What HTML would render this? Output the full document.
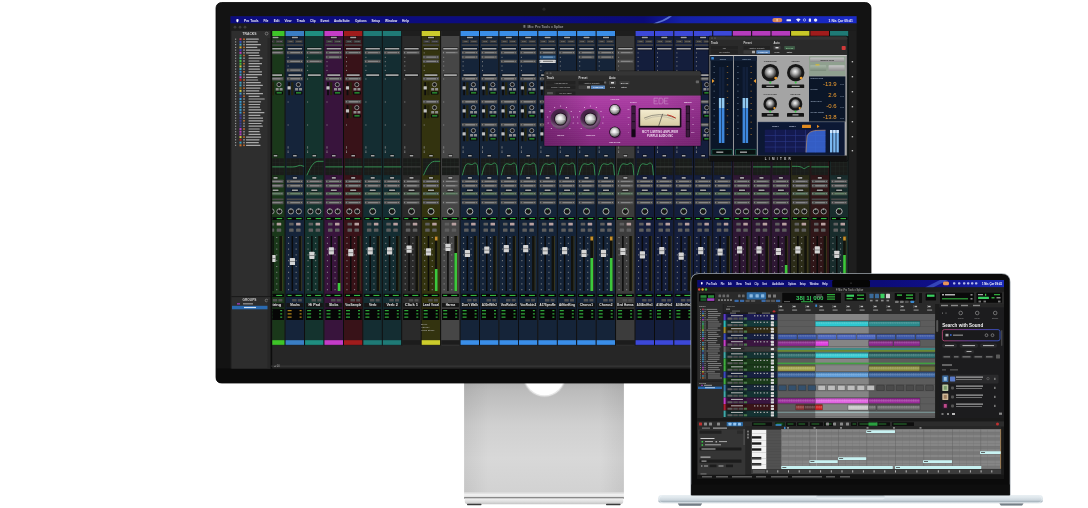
<!DOCTYPE html>
<html><head><meta charset="utf-8"><style>
html,body{margin:0;padding:0;background:#fff;width:1088px;height:508px;overflow:hidden}
svg{display:block;font-family:"Liberation Sans",sans-serif;will-change:transform}
</style></head><body>
<svg width="1088" height="508" viewBox="0 0 1088 508">
<defs><linearGradient id="g1" x1="0" y1="0" x2="0" y2="1"><stop offset="0" stop-color="#aeaeae"/><stop offset="0.1" stop-color="#bcbcbc"/><stop offset="0.4" stop-color="#d0d0d0"/><stop offset="0.7" stop-color="#d8d8d8"/><stop offset="1" stop-color="#d2d2d2"/></linearGradient><linearGradient id="g2" x1="0" y1="0" x2="1" y2="0"><stop offset="0" stop-color="rgba(0,0,0,.06)"/><stop offset="0.15" stop-color="rgba(0,0,0,0)"/><stop offset="0.85" stop-color="rgba(0,0,0,0)"/><stop offset="1" stop-color="rgba(0,0,0,.06)"/></linearGradient><linearGradient id="g3" x1="0" y1="0" x2="0" y2="1"><stop offset="0" stop-color="#d4d4d4"/><stop offset="0.5" stop-color="#f4f4f4"/><stop offset="1" stop-color="#dcdcdc"/></linearGradient><linearGradient id="g4" x1="0" y1="0" x2="0" y2="1"><stop offset="0" stop-color="#f2f2f2"/><stop offset="0.6" stop-color="#dadada"/><stop offset="1" stop-color="#c2c2c2"/></linearGradient><linearGradient id="g5" x1="0" y1="0" x2="1" y2="0"><stop offset="0" stop-color="#0c0c7e"/><stop offset="0.45" stop-color="#0c0c80"/><stop offset="0.66" stop-color="#0b0b78"/><stop offset="0.72" stop-color="#1420a8"/><stop offset="1" stop-color="#1a2ac8"/></linearGradient><linearGradient id="g6" x1="0" y1="0" x2="0" y2="1"><stop offset="0" stop-color="#ae40a6"/><stop offset="0.45" stop-color="#9a3294"/><stop offset="1" stop-color="#82287c"/></linearGradient><linearGradient id="g7" x1="0" y1="0" x2="1" y2="0"><stop offset="0" stop-color="rgba(40,0,40,.25)"/><stop offset="0.3" stop-color="rgba(0,0,0,0)"/><stop offset="0.7" stop-color="rgba(0,0,0,0)"/><stop offset="1" stop-color="rgba(40,0,40,.15)"/></linearGradient><radialGradient id="g8" cx="0.4" cy="0.35" r="0.65"><stop offset="0" stop-color="#3a1a3a"/><stop offset="0.55" stop-color="#4e2a50"/><stop offset="0.8" stop-color="#7a5a7c"/><stop offset="1" stop-color="#5a3a5c"/></radialGradient><radialGradient id="g9" cx="0.45" cy="0.4" r="0.6"><stop offset="0" stop-color="#ffffff"/><stop offset="0.25" stop-color="#e8e8e8"/><stop offset="0.6" stop-color="#b0b0b0"/><stop offset="0.9" stop-color="#707070"/><stop offset="1" stop-color="#404040"/></radialGradient><linearGradient id="g10" x1="0" y1="0" x2="0" y2="1"><stop offset="0" stop-color="#f4ecd0"/><stop offset="1" stop-color="#d8ccA4"/></linearGradient><radialGradient id="g11" cx="0.45" cy="0.4" r="0.6"><stop offset="0" stop-color="#f4f4f4"/><stop offset="0.35" stop-color="#b8b8b8"/><stop offset="0.75" stop-color="#5a5a5a"/><stop offset="1" stop-color="#2a2a2a"/></radialGradient><radialGradient id="g12" cx="0.45" cy="0.4" r="0.6"><stop offset="0" stop-color="#f4f4f4"/><stop offset="0.35" stop-color="#b8b8b8"/><stop offset="0.75" stop-color="#5a5a5a"/><stop offset="1" stop-color="#2a2a2a"/></radialGradient><radialGradient id="g13" cx="0.45" cy="0.4" r="0.6"><stop offset="0" stop-color="#f4f4f4"/><stop offset="0.35" stop-color="#b8b8b8"/><stop offset="0.75" stop-color="#5a5a5a"/><stop offset="1" stop-color="#2a2a2a"/></radialGradient><radialGradient id="g14" cx="0.45" cy="0.4" r="0.6"><stop offset="0" stop-color="#f4f4f4"/><stop offset="0.35" stop-color="#b8b8b8"/><stop offset="0.75" stop-color="#5a5a5a"/><stop offset="1" stop-color="#2a2a2a"/></radialGradient><linearGradient id="g15" x1="0" y1="0" x2="0" y2="1"><stop offset="0" stop-color="#c4c4c4"/><stop offset="1" stop-color="#8e8e8e"/></linearGradient><linearGradient id="g16" x1="0" y1="0" x2="0" y2="1"><stop offset="0" stop-color="#a8b8a8"/><stop offset="1" stop-color="#7a8a7a"/></linearGradient><linearGradient id="g17" x1="0" y1="0" x2="0" y2="1"><stop offset="0" stop-color="#c8c8c8"/><stop offset="1" stop-color="#8e8e8e"/></linearGradient><linearGradient id="g18" x1="0" y1="0" x2="0" y2="1"><stop offset="0" stop-color="#eaf0f4"/><stop offset="0.3" stop-color="#dfe7ec"/><stop offset="0.62" stop-color="#ccd6dd"/><stop offset="0.76" stop-color="#a8b5be"/><stop offset="0.9" stop-color="#d2dbe1"/><stop offset="1" stop-color="#e4eaee"/></linearGradient><linearGradient id="g19" x1="0" y1="0" x2="0" y2="1"><stop offset="0" stop-color="#aab6be"/><stop offset="0.5" stop-color="#d8e1e7"/><stop offset="1" stop-color="#eef3f6"/></linearGradient><linearGradient id="g20" x1="0" y1="0" x2="0" y2="1"><stop offset="0" stop-color="#55606a"/><stop offset="1" stop-color="#9aa2a8"/></linearGradient><linearGradient id="g21" x1="0" y1="0" x2="0" y2="1"><stop offset="0" stop-color="#55606a"/><stop offset="1" stop-color="#9aa2a8"/></linearGradient><linearGradient id="g22" x1="0" y1="0" x2="1" y2="0"><stop offset="0" stop-color="#0b0b70"/><stop offset="0.6" stop-color="#0c0c78"/><stop offset="0.8" stop-color="#10108a"/><stop offset="1" stop-color="#1a2ab8"/></linearGradient><pattern id="wv" width="2.3" height="6.5" patternUnits="userSpaceOnUse"><rect x=".3" y="2.6" width=".7" height="2.6" fill="#fff" opacity=".35"/><rect x="1.4" y="3.4" width=".6" height="1.4" fill="#fff" opacity=".3"/></pattern><linearGradient id="sgrad" x1="0" y1="0" x2="1" y2="0"><stop offset="0" stop-color="#c04a7a"/><stop offset=".5" stop-color="#7a4ac8"/><stop offset="1" stop-color="#3a5ad8"/></linearGradient></defs>
<rect width="1088" height="508" fill="#fff"/>
<rect x="464.1" y="380" width="159.8" height="112.6" fill="url(#g1)"/>
<rect x="464.1" y="380" width="159.8" height="112.6" fill="url(#g2)"/>
<circle cx="544.5" cy="375.9" r="21.6" fill="#c6c6c6"/>
<circle cx="544.5" cy="375.6" r="20.9" fill="#e6e6e6"/>
<circle cx="544.5" cy="375" r="20.2" fill="#ffffff"/>
<rect x="464.1" y="492.4" width="159.8" height="4.8" fill="url(#g3)"/>
<rect x="464.1" y="497.2" width="159.8" height="1.4" fill="#6e6e6e"/>
<path d="M464.8 498.6 H623.2 V501.5 Q623.2 504.3 620 504.3 H468 Q464.8 504.3 464.8 501.5 Z" fill="url(#g4)"/>
<rect x="467" y="503.8" width="14.5" height="1.4" fill="#3a3a3a" rx="0.6"/>
<rect x="606" y="503.8" width="14.6" height="1.4" fill="#3a3a3a" rx="0.6"/>
<rect x="216" y="2.5" width="655" height="380.5" fill="#131313" rx="5.5"/>
<rect x="216" y="2.5" width="655" height="380.5" fill="none" rx="5.5" stroke="#050505" stroke-width=".8"/>
<circle cx="544" cy="9.2" r="1.6" fill="#262626"/>
<path d="M216 368.6 H871 V377.5 Q871 383 865.5 383 H221.5 Q216 383 216 377.5 Z" fill="#0b0b0b"/>
<rect x="230.5" y="16.2" width="626.1" height="352.4" fill="#1e1e1e"/>
<rect x="230.5" y="16.2" width="626.1" height="7.3" fill="url(#g5)"/>
<path d="M653 23.5 Q662 21 669 16.2 L672 16.2 Q665 21.5 657 23.5 Z" fill="#7a9af0" opacity=".7"/>
<path d="M236.3 19.4 Q237.4 18.6 238.6 19.4 Q238.9 21.6 237.4 22.4 Q236 21.8 236.3 19.4 Z" fill="#fff"/>
<text x="244" y="22" font-size="4.0" fill="#f0f0ff" font-weight="bold" textLength="14.5" lengthAdjust="spacingAndGlyphs">Pro Tools</text>
<text x="263.5" y="22" font-size="4.0" fill="#f0f0ff" font-weight="bold" textLength="4.9" lengthAdjust="spacingAndGlyphs">File</text>
<text x="273.7" y="22" font-size="4.0" fill="#f0f0ff" font-weight="bold" textLength="5.7" lengthAdjust="spacingAndGlyphs">Edit</text>
<text x="284.5" y="22" font-size="4.0" fill="#f0f0ff" font-weight="bold" textLength="7" lengthAdjust="spacingAndGlyphs">View</text>
<text x="296.7" y="22" font-size="4.0" fill="#f0f0ff" font-weight="bold" textLength="8.4" lengthAdjust="spacingAndGlyphs">Track</text>
<text x="310" y="22" font-size="4.0" fill="#f0f0ff" font-weight="bold" textLength="5.6" lengthAdjust="spacingAndGlyphs">Clip</text>
<text x="320.5" y="22" font-size="4.0" fill="#f0f0ff" font-weight="bold" textLength="8.7" lengthAdjust="spacingAndGlyphs">Event</text>
<text x="333.9" y="22" font-size="4.0" fill="#f0f0ff" font-weight="bold" textLength="15.9" lengthAdjust="spacingAndGlyphs">AudioSuite</text>
<text x="355" y="22" font-size="4.0" fill="#f0f0ff" font-weight="bold" textLength="11.6" lengthAdjust="spacingAndGlyphs">Options</text>
<text x="371.5" y="22" font-size="4.0" fill="#f0f0ff" font-weight="bold" textLength="8.7" lengthAdjust="spacingAndGlyphs">Setup</text>
<text x="385" y="22" font-size="4.0" fill="#f0f0ff" font-weight="bold" textLength="12.1" lengthAdjust="spacingAndGlyphs">Window</text>
<text x="402" y="22" font-size="4.0" fill="#f0f0ff" font-weight="bold" textLength="7" lengthAdjust="spacingAndGlyphs">Help</text>
<rect x="772.3" y="17.9" width="10" height="4.4" fill="#d8885a" rx="2.2"/>
<rect x="776.5" y="18.8" width="1.2" height="2.6" fill="#f4d0b0"/>
<rect x="786.5" y="19.2" width="4.5" height="2" fill="#e8ecff" rx="0.5"/>
<path d="M796 19.3 Q798.3 17.6 800.6 19.3 L798.3 22 Z" fill="#e8ecff"/>
<circle cx="804.5" cy="20" r="1.2" fill="none" stroke="#e8ecff" stroke-width=".6"/>
<rect x="808.8" y="18.6" width="2.2" height="3.2" fill="#e8ecff" rx="0.4"/>
<circle cx="815.6" cy="20.1" r="1.7" fill="#e8ecff"/>
<text x="828.6" y="21.8" font-size="3.8" fill="#f0f0ff" font-weight="bold" textLength="24.3" lengthAdjust="spacingAndGlyphs">1 Nis Çar  09:41</text>
<rect x="230.5" y="23.5" width="626.1" height="7.3" fill="#1c1c1c"/>
<rect x="523.4" y="25" width="2" height="2.8" fill="#777" rx="0.3"/>
<text x="527.6" y="28" font-size="3.8" fill="#9a9a9a" font-weight="bold" textLength="35.8" lengthAdjust="spacingAndGlyphs">Mix: Pro Tools x Splice</text>
<circle cx="235" cy="27.2" r="1.4" fill="#3c3c3c"/>
<circle cx="240" cy="27.2" r="1.4" fill="#3c3c3c"/>
<circle cx="245" cy="27.2" r="1.4" fill="#3c3c3c"/>
<rect x="231.5" y="30.8" width="39.3" height="265.5" fill="#2e2e2e"/>
<rect x="267.5" y="38" width="2.8" height="258" fill="#272727"/>
<text x="249.5" y="34.6" font-size="3.4" fill="#d0d0d0" font-weight="bold" text-anchor="middle">TRACKS</text>
<circle cx="266.6" cy="33.6" r="1.4" fill="none" stroke="#aaa" stroke-width=".5"/>
<rect x="235" y="38.6" width="1.2" height="1.2" fill="#9a9a9a"/>
<rect x="239.5" y="38.2" width="2" height="2" fill="#c03c60"/>
<rect x="243.2" y="38.4" width="1.6" height="1.6" fill="#c87030"/>
<rect x="246" y="38.6" width="12.8" height="1.2" fill="#c8c8c8" rx="0.3" opacity=".8"/>
<rect x="235" y="41.3" width="1.2" height="1.2" fill="#9a9a9a"/>
<rect x="239.5" y="40.9" width="2" height="2" fill="#3a50c0"/>
<rect x="243.2" y="41.1" width="1.6" height="1.6" fill="#8a8a8a"/>
<rect x="246" y="41.3" width="11.8" height="1.2" fill="#c8c8c8" rx="0.3" opacity=".8"/>
<rect x="235" y="44" width="1.2" height="1.2" fill="#9a9a9a"/>
<rect x="239.5" y="43.6" width="2" height="2" fill="#3aa0c8"/>
<rect x="243.2" y="43.8" width="1.6" height="1.6" fill="#8a8a8a"/>
<rect x="246" y="44" width="14.9" height="1.2" fill="#c8c8c8" rx="0.3" opacity=".8"/>
<rect x="235" y="46.8" width="1.2" height="1.2" fill="#9a9a9a"/>
<rect x="239.5" y="46.4" width="2" height="2" fill="#c8b03a"/>
<rect x="243.2" y="46.6" width="1.6" height="1.6" fill="#c87030"/>
<rect x="246" y="46.8" width="11.3" height="1.2" fill="#c8c8c8" rx="0.3" opacity=".8"/>
<rect x="235" y="49.5" width="1.2" height="1.2" fill="#9a9a9a"/>
<rect x="239.5" y="49.1" width="2" height="2" fill="#3a3ac0"/>
<rect x="243.2" y="49.3" width="1.6" height="1.6" fill="#8a8a8a"/>
<rect x="246" y="49.5" width="14.2" height="1.2" fill="#c8c8c8" rx="0.3" opacity=".8"/>
<rect x="235" y="52.2" width="1.2" height="1.2" fill="#9a9a9a"/>
<rect x="239.5" y="51.8" width="2" height="2" fill="#c040c0"/>
<rect x="243.2" y="52" width="1.6" height="1.6" fill="#8a8a8a"/>
<rect x="246" y="52.2" width="13.1" height="1.2" fill="#c8c8c8" rx="0.3" opacity=".8"/>
<rect x="235" y="54.9" width="1.2" height="1.2" fill="#9a9a9a"/>
<rect x="239.5" y="54.5" width="2" height="2" fill="#3aa060"/>
<rect x="243.2" y="54.7" width="1.6" height="1.6" fill="#c87030"/>
<rect x="248.5" y="54.9" width="11.2" height="1.2" fill="#c8c8c8" rx="0.3" opacity=".8"/>
<rect x="235" y="57.6" width="1.2" height="1.2" fill="#9a9a9a"/>
<rect x="239.5" y="57.2" width="2" height="2" fill="#40c0a0"/>
<rect x="243.2" y="57.4" width="1.6" height="1.6" fill="#8a8a8a"/>
<rect x="248.5" y="57.6" width="14" height="1.2" fill="#c8c8c8" rx="0.3" opacity=".8"/>
<rect x="235" y="60.4" width="1.2" height="1.2" fill="#9a9a9a"/>
<rect x="239.5" y="60" width="2" height="2" fill="#40c040"/>
<rect x="243.2" y="60.2" width="1.6" height="1.6" fill="#8a8a8a"/>
<rect x="248.5" y="60.4" width="11" height="1.2" fill="#c8c8c8" rx="0.3" opacity=".8"/>
<rect x="235" y="63.1" width="1.2" height="1.2" fill="#9a9a9a"/>
<rect x="239.5" y="62.7" width="2" height="2" fill="#40c040"/>
<rect x="243.2" y="62.9" width="1.6" height="1.6" fill="#c87030"/>
<rect x="248.5" y="63.1" width="13.5" height="1.2" fill="#c8c8c8" rx="0.3" opacity=".8"/>
<rect x="235" y="65.8" width="1.2" height="1.2" fill="#9a9a9a"/>
<rect x="239.5" y="65.4" width="2" height="2" fill="#c8c840"/>
<rect x="243.2" y="65.6" width="1.6" height="1.6" fill="#8a8a8a"/>
<rect x="248.5" y="65.8" width="11.2" height="1.2" fill="#c8c8c8" rx="0.3" opacity=".8"/>
<rect x="235" y="68.5" width="1.2" height="1.2" fill="#9a9a9a"/>
<rect x="239.5" y="68.1" width="2" height="2" fill="#3ab0c0"/>
<rect x="243.2" y="68.3" width="1.6" height="1.6" fill="#8a8a8a"/>
<rect x="248.5" y="68.5" width="11.4" height="1.2" fill="#c8c8c8" rx="0.3" opacity=".8"/>
<rect x="235" y="71.2" width="1.2" height="1.2" fill="#9a9a9a"/>
<rect x="239.5" y="70.8" width="2" height="2" fill="#3a8ad0"/>
<rect x="243.2" y="71" width="1.6" height="1.6" fill="#c87030"/>
<rect x="248.5" y="71.2" width="13.5" height="1.2" fill="#c8c8c8" rx="0.3" opacity=".8"/>
<rect x="235" y="74" width="1.2" height="1.2" fill="#9a9a9a"/>
<rect x="239.5" y="73.6" width="2" height="2" fill="#40a0c8"/>
<rect x="243.2" y="73.8" width="1.6" height="1.6" fill="#8a8a8a"/>
<rect x="246" y="74" width="16" height="1.2" fill="#c8c8c8" rx="0.3" opacity=".8"/>
<rect x="235" y="76.7" width="1.2" height="1.2" fill="#9a9a9a"/>
<rect x="239.5" y="76.3" width="2" height="2" fill="#c840c8"/>
<rect x="243.2" y="76.5" width="1.6" height="1.6" fill="#8a8a8a"/>
<rect x="246" y="76.7" width="11.6" height="1.2" fill="#c8c8c8" rx="0.3" opacity=".8"/>
<rect x="235" y="79.4" width="1.2" height="1.2" fill="#9a9a9a"/>
<rect x="239.5" y="79" width="2" height="2" fill="#b02020"/>
<rect x="243.2" y="79.2" width="1.6" height="1.6" fill="#c87030"/>
<rect x="246" y="79.4" width="12.2" height="1.2" fill="#c8c8c8" rx="0.3" opacity=".8"/>
<rect x="235" y="82.1" width="1.2" height="1.2" fill="#9a9a9a"/>
<rect x="239.5" y="81.7" width="2" height="2" fill="#40a0c0"/>
<rect x="243.2" y="81.9" width="1.6" height="1.6" fill="#8a8a8a"/>
<rect x="246" y="82.1" width="14.8" height="1.2" fill="#c8c8c8" rx="0.3" opacity=".8"/>
<rect x="235" y="84.8" width="1.2" height="1.2" fill="#9a9a9a"/>
<rect x="239.5" y="84.4" width="2" height="2" fill="#40a0c0"/>
<rect x="243.2" y="84.6" width="1.6" height="1.6" fill="#8a8a8a"/>
<rect x="246" y="84.8" width="16.8" height="1.2" fill="#c8c8c8" rx="0.3" opacity=".8"/>
<rect x="235" y="87.6" width="1.2" height="1.2" fill="#9a9a9a"/>
<rect x="239.5" y="87.2" width="2" height="2" fill="#807030"/>
<rect x="243.2" y="87.4" width="1.6" height="1.6" fill="#c87030"/>
<rect x="246" y="87.6" width="14.4" height="1.2" fill="#c8c8c8" rx="0.3" opacity=".8"/>
<rect x="235" y="90.3" width="1.2" height="1.2" fill="#9a9a9a"/>
<rect x="239.5" y="89.9" width="2" height="2" fill="#c8c840"/>
<rect x="243.2" y="90.1" width="1.6" height="1.6" fill="#8a8a8a"/>
<rect x="246" y="90.3" width="13.3" height="1.2" fill="#c8c8c8" rx="0.3" opacity=".8"/>
<rect x="235" y="93" width="1.2" height="1.2" fill="#9a9a9a"/>
<rect x="239.5" y="92.6" width="2" height="2" fill="#3a9ad0"/>
<rect x="243.2" y="92.8" width="1.6" height="1.6" fill="#8a8a8a"/>
<rect x="246" y="93" width="17" height="1.2" fill="#c8c8c8" rx="0.3" opacity=".8"/>
<rect x="235" y="95.7" width="1.2" height="1.2" fill="#9a9a9a"/>
<rect x="239.5" y="95.3" width="2" height="2" fill="#3a3a90"/>
<rect x="243.2" y="95.5" width="1.6" height="1.6" fill="#c87030"/>
<rect x="248.5" y="95.7" width="11.1" height="1.2" fill="#c8c8c8" rx="0.3" opacity=".8"/>
<rect x="235" y="98.4" width="1.2" height="1.2" fill="#9a9a9a"/>
<rect x="239.5" y="98" width="2" height="2" fill="#3a9ad0"/>
<rect x="243.2" y="98.2" width="1.6" height="1.6" fill="#8a8a8a"/>
<rect x="248.5" y="98.4" width="16.2" height="1.2" fill="#c8c8c8" rx="0.3" opacity=".8"/>
<rect x="235" y="101.2" width="1.2" height="1.2" fill="#9a9a9a"/>
<rect x="239.5" y="100.8" width="2" height="2" fill="#3a9ad0"/>
<rect x="243.2" y="101" width="1.6" height="1.6" fill="#8a8a8a"/>
<rect x="248.5" y="101.2" width="12.6" height="1.2" fill="#c8c8c8" rx="0.3" opacity=".8"/>
<rect x="235" y="103.9" width="1.2" height="1.2" fill="#9a9a9a"/>
<rect x="239.5" y="103.5" width="2" height="2" fill="#3a9ad0"/>
<rect x="243.2" y="103.7" width="1.6" height="1.6" fill="#c87030"/>
<rect x="248.5" y="103.9" width="11.7" height="1.2" fill="#c8c8c8" rx="0.3" opacity=".8"/>
<rect x="235" y="106.6" width="1.2" height="1.2" fill="#9a9a9a"/>
<rect x="239.5" y="106.2" width="2" height="2" fill="#3a9ad0"/>
<rect x="243.2" y="106.4" width="1.6" height="1.6" fill="#8a8a8a"/>
<rect x="248.5" y="106.6" width="11.5" height="1.2" fill="#c8c8c8" rx="0.3" opacity=".8"/>
<rect x="235" y="109.3" width="1.2" height="1.2" fill="#9a9a9a"/>
<rect x="239.5" y="108.9" width="2" height="2" fill="#3a9ad0"/>
<rect x="243.2" y="109.1" width="1.6" height="1.6" fill="#8a8a8a"/>
<rect x="248.5" y="109.3" width="12.7" height="1.2" fill="#c8c8c8" rx="0.3" opacity=".8"/>
<rect x="235" y="112" width="1.2" height="1.2" fill="#9a9a9a"/>
<rect x="239.5" y="111.6" width="2" height="2" fill="#3a9ad0"/>
<rect x="243.2" y="111.8" width="1.6" height="1.6" fill="#c87030"/>
<rect x="248.5" y="112" width="15.9" height="1.2" fill="#c8c8c8" rx="0.3" opacity=".8"/>
<rect x="235" y="114.8" width="1.2" height="1.2" fill="#9a9a9a"/>
<rect x="239.5" y="114.4" width="2" height="2" fill="#3a3a90"/>
<rect x="243.2" y="114.6" width="1.6" height="1.6" fill="#8a8a8a"/>
<rect x="248.5" y="114.8" width="11.9" height="1.2" fill="#c8c8c8" rx="0.3" opacity=".8"/>
<rect x="235" y="117.5" width="1.2" height="1.2" fill="#9a9a9a"/>
<rect x="239.5" y="117.1" width="2" height="2" fill="#3a3a90"/>
<rect x="243.2" y="117.3" width="1.6" height="1.6" fill="#8a8a8a"/>
<rect x="248.5" y="117.5" width="14.5" height="1.2" fill="#c8c8c8" rx="0.3" opacity=".8"/>
<rect x="235" y="120.2" width="1.2" height="1.2" fill="#9a9a9a"/>
<rect x="239.5" y="119.8" width="2" height="2" fill="#3a3a90"/>
<rect x="243.2" y="120" width="1.6" height="1.6" fill="#c87030"/>
<rect x="248.5" y="120.2" width="14.8" height="1.2" fill="#c8c8c8" rx="0.3" opacity=".8"/>
<rect x="235" y="122.9" width="1.2" height="1.2" fill="#9a9a9a"/>
<rect x="239.5" y="122.5" width="2" height="2" fill="#3a3a90"/>
<rect x="243.2" y="122.7" width="1.6" height="1.6" fill="#8a8a8a"/>
<rect x="248.5" y="122.9" width="13.1" height="1.2" fill="#c8c8c8" rx="0.3" opacity=".8"/>
<rect x="235" y="125.6" width="1.2" height="1.2" fill="#9a9a9a"/>
<rect x="239.5" y="125.2" width="2" height="2" fill="#3a3a90"/>
<rect x="243.2" y="125.4" width="1.6" height="1.6" fill="#8a8a8a"/>
<rect x="248.5" y="125.6" width="14.3" height="1.2" fill="#c8c8c8" rx="0.3" opacity=".8"/>
<rect x="235" y="128.4" width="1.2" height="1.2" fill="#9a9a9a"/>
<rect x="239.5" y="128" width="2" height="2" fill="#b040c0"/>
<rect x="243.2" y="128.2" width="1.6" height="1.6" fill="#c87030"/>
<rect x="248.5" y="128.4" width="11.2" height="1.2" fill="#c8c8c8" rx="0.3" opacity=".8"/>
<rect x="235" y="131.1" width="1.2" height="1.2" fill="#9a9a9a"/>
<rect x="239.5" y="130.7" width="2" height="2" fill="#b040c0"/>
<rect x="243.2" y="130.9" width="1.6" height="1.6" fill="#8a8a8a"/>
<rect x="248.5" y="131.1" width="11.2" height="1.2" fill="#c8c8c8" rx="0.3" opacity=".8"/>
<rect x="235" y="133.8" width="1.2" height="1.2" fill="#9a9a9a"/>
<rect x="239.5" y="133.4" width="2" height="2" fill="#b040c0"/>
<rect x="243.2" y="133.6" width="1.6" height="1.6" fill="#8a8a8a"/>
<rect x="248.5" y="133.8" width="12.1" height="1.2" fill="#c8c8c8" rx="0.3" opacity=".8"/>
<rect x="235" y="136.5" width="1.2" height="1.2" fill="#9a9a9a"/>
<rect x="239.5" y="136.1" width="2" height="2" fill="#c8c840"/>
<rect x="243.2" y="136.3" width="1.6" height="1.6" fill="#c87030"/>
<rect x="246" y="136.5" width="15.1" height="1.2" fill="#c8c8c8" rx="0.3" opacity=".8"/>
<rect x="235" y="139.2" width="1.2" height="1.2" fill="#9a9a9a"/>
<rect x="239.5" y="138.8" width="2" height="2" fill="#b02020"/>
<rect x="243.2" y="139" width="1.6" height="1.6" fill="#8a8a8a"/>
<rect x="246" y="139.2" width="13.5" height="1.2" fill="#c8c8c8" rx="0.3" opacity=".8"/>
<rect x="235" y="142" width="1.2" height="1.2" fill="#9a9a9a"/>
<rect x="239.5" y="141.6" width="2" height="2" fill="#3aa0c0"/>
<rect x="243.2" y="141.8" width="1.6" height="1.6" fill="#8a8a8a"/>
<rect x="246" y="142" width="12.8" height="1.2" fill="#c8c8c8" rx="0.3" opacity=".8"/>
<rect x="235" y="144.7" width="1.2" height="1.2" fill="#9a9a9a"/>
<rect x="239.5" y="144.3" width="2" height="2" fill="#c87030"/>
<rect x="243.2" y="144.5" width="1.6" height="1.6" fill="#c87030"/>
<rect x="246" y="144.7" width="14.5" height="1.2" fill="#c8c8c8" rx="0.3" opacity=".8"/>
<rect x="231.5" y="296.3" width="39.3" height="72.3" fill="#2d2d2d"/>
<rect x="231.5" y="296.3" width="39.3" height="0.8" fill="#141414"/>
<text x="249.5" y="301.4" font-size="3.2" fill="#d0d0d0" font-weight="bold" text-anchor="middle">GROUPS</text>
<circle cx="266.5" cy="300.5" r="1.3" fill="none" stroke="#aaa" stroke-width=".5"/>
<rect x="237" y="303.2" width="3" height="1.3" fill="#a040c0"/>
<rect x="243" y="303.2" width="10" height="1.2" fill="#9a9a9a"/>
<rect x="232" y="305.8" width="36" height="3.5" fill="#2a6ab0"/>
<rect x="244" y="306.9" width="12" height="1.2" fill="#d0e0f0"/>
<rect x="267.5" y="300" width="2.8" height="68" fill="#272727"/>
<rect x="270.6" y="30.8" width="1.8" height="337.8" fill="#0c0c0c"/>
<clipPath id="mixclip"><rect x="272.3" y="30.8" width="576.7" height="337.8"/></clipPath>
<g clip-path="url(#mixclip)">
<rect x="271.2" y="30.8" width="585.4" height="337.8" fill="#262626"/>
<rect x="266.2" y="30.8" width="18.5" height="314.5" fill="#1a381a"/>
<rect x="266.2" y="31" width="18.5" height="5" fill="#3ec428"/>
<rect x="266.2" y="340.2" width="18.5" height="4.6" fill="#3ec428"/>
<rect x="271.9" y="36" width="7.2" height="3" fill="#0a0a0a" rx="0.5" opacity=".55"/>
<rect x="272.5" y="36.7" width="6" height="1.6" fill="#bcbcbc" rx="0.3" opacity=".85"/>
<rect x="267.7" y="39.9" width="7" height="3" fill="#3a3a3a" rx="0.4"/>
<rect x="275.7" y="39.9" width="7.5" height="3" fill="#3a3a3a" rx="0.4"/>
<text x="271.2" y="42.2" font-size="1.8" fill="#999" text-anchor="middle">PRE</text>
<text x="279.4" y="42.2" font-size="1.8" fill="#999" text-anchor="middle">MUTE</text>
<rect x="267.2" y="44.3" width="16.5" height="1.6" fill="#454545"/>
<rect x="267.7" y="47.3" width="15.6" height="3" fill="#0a0a0a" rx="0.5" opacity=".55"/>
<rect x="268.3" y="48" width="14.4" height="1.6" fill="#bcbcbc" rx="0.3" opacity=".85"/>
<rect x="267.4" y="51" width="16.1" height="3.3" fill="#505050" rx="0.4"/>
<rect x="268.1" y="51.9" width="0.8" height="1.4" fill="#999"/>
<rect x="270.8" y="52" width="10" height="1.3" fill="#c8c8c8" rx="0.3" opacity=".45"/>
<rect x="281.5" y="52" width="0.8" height="1.2" fill="#999"/>
<rect x="268.2" y="56.8" width="1" height="1" fill="#8a8a8a"/>
<rect x="268.2" y="61.2" width="1" height="1" fill="#8a8a8a"/>
<rect x="268.2" y="65.5" width="1" height="1" fill="#8a8a8a"/>
<rect x="268.2" y="69.9" width="1" height="1" fill="#8a8a8a"/>
<rect x="268.4" y="73.6" width="14.2" height="3" fill="#0a0a0a" rx="0.5" opacity=".55"/>
<rect x="269" y="74.3" width="13" height="1.6" fill="#bcbcbc" rx="0.3" opacity=".85"/>
<rect x="267.4" y="77.1" width="16.1" height="3.3" fill="#505050" rx="0.4"/>
<rect x="268.1" y="78" width="0.8" height="1.4" fill="#999"/>
<rect x="270.8" y="78.1" width="10" height="1.3" fill="#c8c8c8" rx="0.3" opacity=".45"/>
<rect x="281.5" y="78.1" width="0.8" height="1.2" fill="#999"/>
<rect x="268.8" y="82.2" width="1.8" height="13" fill="#0d0d0d"/>
<rect x="268.1" y="86.2" width="3.2" height="3.4" fill="#c0c0c0" rx="0.4"/>
<rect x="271.8" y="82.2" width="2.2" height="13" fill="#26260e"/>
<circle cx="279" cy="84.6" r="2.1" fill="#1a1a1a" stroke="#b4b4b4" stroke-width=".7"/>
<rect x="275.7" y="88" width="3" height="2.6" fill="#8e8e8e" rx="0.3"/>
<rect x="279.6" y="88" width="3" height="2.6" fill="#8e8e8e" rx="0.3"/>
<rect x="275.4" y="91.4" width="7.6" height="3" fill="#080808" rx="0.4"/>
<rect x="276.6" y="92.4" width="5.2" height="1" fill="#3ad048"/>
<rect x="268.2" y="101.5" width="1" height="1" fill="#8a8a8a"/>
<rect x="268.2" y="124.5" width="1" height="1" fill="#8a8a8a"/>
<rect x="268.2" y="147.5" width="1" height="1" fill="#8a8a8a"/>
<rect x="268.2" y="151.9" width="1" height="1" fill="#8a8a8a"/>
<rect x="268.2" y="146.4" width="1" height="1" fill="#8a8a8a"/>
<rect x="268.2" y="150.6" width="1" height="1" fill="#8a8a8a"/>
<rect x="273.1" y="154.2" width="4.8" height="3" fill="#0a0a0a" rx="0.5" opacity=".55"/>
<rect x="273.7" y="154.9" width="3.6" height="1.6" fill="#bcbcbc" rx="0.3" opacity=".85"/>
<rect x="267" y="158.3" width="16.9" height="16.8" fill="#1a1c1a"/>
<rect x="271.2" y="158.3" width="0.3" height="16.8" fill="#26302a"/>
<rect x="275.5" y="158.3" width="0.3" height="16.8" fill="#26302a"/>
<rect x="279.7" y="158.3" width="0.3" height="16.8" fill="#26302a"/>
<rect x="267" y="162.5" width="16.9" height="0.3" fill="#26302a"/>
<rect x="267" y="166.7" width="16.9" height="0.3" fill="#26302a"/>
<rect x="267" y="170.9" width="16.9" height="0.3" fill="#26302a"/>
<path transform="translate(267 158.3)" d="M0 8.6 L18 8.6" fill="none" stroke="#3aa860" stroke-width=".8"/>
<rect x="272.9" y="176.4" width="5.2" height="3" fill="#0a0a0a" rx="0.5" opacity=".55"/>
<rect x="273.5" y="177.1" width="4" height="1.6" fill="#bcbcbc" rx="0.3" opacity=".85"/>
<rect x="267.4" y="179.8" width="16.1" height="3.3" fill="#505050" rx="0.4"/>
<rect x="268.1" y="180.7" width="0.8" height="1.4" fill="#999"/>
<rect x="270.8" y="180.8" width="10" height="1.3" fill="#c8c8c8" rx="0.3" opacity=".45"/>
<rect x="281.5" y="180.8" width="0.8" height="1.2" fill="#999"/>
<rect x="267.4" y="184.1" width="16.1" height="3.3" fill="#505050" rx="0.4"/>
<rect x="268.1" y="185" width="0.8" height="1.4" fill="#999"/>
<rect x="270.8" y="185.1" width="10" height="1.3" fill="#c8c8c8" rx="0.3" opacity=".45"/>
<rect x="281.5" y="185.1" width="0.8" height="1.2" fill="#999"/>
<rect x="271.9" y="188.7" width="7.2" height="3" fill="#0a0a0a" rx="0.5" opacity=".55"/>
<rect x="272.5" y="189.4" width="6" height="1.6" fill="#bcbcbc" rx="0.3" opacity=".85"/>
<rect x="267.4" y="192" width="16.1" height="3.3" fill="#4a5a4c" rx="0.4"/>
<rect x="268.1" y="192.9" width="0.8" height="1.4" fill="#999"/>
<rect x="270.8" y="193" width="10" height="1.3" fill="#8ab890" rx="0.3" opacity=".45"/>
<rect x="281.5" y="193" width="0.8" height="1.2" fill="#999"/>
<rect x="267.4" y="198.5" width="16.1" height="1.7" fill="#4a4a4a"/>
<rect x="267.4" y="200.9" width="16.1" height="3.3" fill="#505050" rx="0.4"/>
<rect x="268.1" y="201.8" width="0.8" height="1.4" fill="#999"/>
<rect x="270.8" y="201.9" width="10" height="1.3" fill="#c8c8c8" rx="0.3" opacity=".45"/>
<rect x="281.5" y="201.9" width="0.8" height="1.2" fill="#999"/>
<circle cx="271.5" cy="211.4" r="2.6" fill="#161616" stroke="#a8a8a8" stroke-width=".9"/>
<rect x="271.2" y="208.6" width="0.6" height="1.6" fill="#d0d0d0"/>
<circle cx="279.4" cy="211.4" r="2.6" fill="#161616" stroke="#a8a8a8" stroke-width=".9"/>
<rect x="279.1" y="208.6" width="0.6" height="1.6" fill="#d0d0d0"/>
<rect x="267.2" y="217.2" width="16.5" height="2.8" fill="#080808"/>
<rect x="268.2" y="218.1" width="4" height="1" fill="#3ad048"/>
<rect x="276.7" y="218.1" width="5.5" height="1" fill="#3ad048"/>
<rect x="269.7" y="222.7" width="4.5" height="2.9" fill="#5e5e5e" rx="0.4"/>
<rect x="276.7" y="222.7" width="4.5" height="2.9" fill="#b8a0a0" rx="0.4"/>
<rect x="269.7" y="228.6" width="4.5" height="3.2" fill="#5e5e5e" rx="0.4"/>
<rect x="276.7" y="228.6" width="4.5" height="3.2" fill="#5e5e5e" rx="0.4"/>
<rect x="268.6" y="237" width="1.1" height="1" fill="#8a8a8a"/>
<rect x="276.2" y="237" width="1.1" height="1" fill="#8a8a8a"/>
<rect x="268.6" y="242.8" width="1.1" height="1" fill="#8a8a8a"/>
<rect x="276.2" y="242.8" width="1.1" height="1" fill="#8a8a8a"/>
<rect x="268.6" y="248.6" width="1.1" height="1" fill="#8a8a8a"/>
<rect x="276.2" y="248.6" width="1.1" height="1" fill="#8a8a8a"/>
<rect x="268.6" y="254.4" width="1.1" height="1" fill="#8a8a8a"/>
<rect x="276.2" y="254.4" width="1.1" height="1" fill="#8a8a8a"/>
<rect x="268.6" y="260.2" width="1.1" height="1" fill="#8a8a8a"/>
<rect x="276.2" y="260.2" width="1.1" height="1" fill="#8a8a8a"/>
<rect x="268.6" y="266" width="1.1" height="1" fill="#8a8a8a"/>
<rect x="276.2" y="266" width="1.1" height="1" fill="#8a8a8a"/>
<rect x="268.6" y="271.8" width="1.1" height="1" fill="#8a8a8a"/>
<rect x="276.2" y="271.8" width="1.1" height="1" fill="#8a8a8a"/>
<rect x="268.6" y="277.6" width="1.1" height="1" fill="#8a8a8a"/>
<rect x="276.2" y="277.6" width="1.1" height="1" fill="#8a8a8a"/>
<rect x="268.6" y="283.4" width="1.1" height="1" fill="#8a8a8a"/>
<rect x="276.2" y="283.4" width="1.1" height="1" fill="#8a8a8a"/>
<rect x="268.6" y="289.2" width="1.1" height="1" fill="#8a8a8a"/>
<rect x="276.2" y="289.2" width="1.1" height="1" fill="#8a8a8a"/>
<rect x="272.2" y="236" width="1.5" height="55" fill="#0a0a0a"/>
<rect x="270.4" y="254.9" width="5.2" height="7.2" fill="#d4d4d4" rx="0.6"/>
<rect x="270.4" y="258.3" width="5.2" height="0.6" fill="#555"/>
<rect x="279.4" y="236" width="2.6" height="55" fill="#12120c"/>
<rect x="282" y="236" width="0.7" height="55" fill="#45401c"/>
<rect x="267" y="293.8" width="16.9" height="3.2" fill="#080808"/>
<rect x="268.2" y="294.9" width="4" height="1" fill="#3ad048"/>
<rect x="276.2" y="294.9" width="6" height="1" fill="#3ad048"/>
<rect x="272.7" y="299" width="4.5" height="2.6" fill="#4e4e4e" rx="0.3"/>
<rect x="278.4" y="299" width="4" height="2.6" fill="#4e4e4e" rx="0.3"/>
<rect x="267" y="303" width="16.9" height="4.4" fill="#161616"/>
<text x="275.5" y="306.4" font-size="2.9" fill="#ececec" font-weight="bold" text-anchor="middle" textLength="11.4" lengthAdjust="spacingAndGlyphs">String</text>
<rect x="267" y="308.8" width="16.9" height="11.2" fill="#060606"/>
<rect x="268.2" y="310.2" width="4" height="1" fill="#3ad048"/>
<rect x="280.2" y="310.2" width="2" height="1" fill="#3ad048"/>
<rect x="268.2" y="313.4" width="4" height="1" fill="#3ad048"/>
<rect x="280.2" y="313.4" width="2" height="1" fill="#3ad048"/>
<rect x="268.2" y="316.6" width="4" height="1" fill="#3ad048"/>
<rect x="280.2" y="316.6" width="2" height="1" fill="#3ad048"/>
<rect x="284.7" y="30.8" width="0.9" height="314.5" fill="#0a0a0a"/>
<rect x="285.6" y="30.8" width="18.5" height="314.5" fill="#15243a"/>
<rect x="285.6" y="31" width="18.5" height="5" fill="#3a7ec4"/>
<rect x="285.6" y="340.2" width="18.5" height="4.6" fill="#3a7ec4"/>
<rect x="291.3" y="36" width="7.2" height="3" fill="#0a0a0a" rx="0.5" opacity=".55"/>
<rect x="291.9" y="36.7" width="6" height="1.6" fill="#bcbcbc" rx="0.3" opacity=".85"/>
<rect x="287.1" y="39.9" width="7" height="3" fill="#3a3a3a" rx="0.4"/>
<rect x="295.1" y="39.9" width="7.5" height="3" fill="#3a3a3a" rx="0.4"/>
<text x="290.6" y="42.2" font-size="1.8" fill="#999" text-anchor="middle">PRE</text>
<text x="298.8" y="42.2" font-size="1.8" fill="#999" text-anchor="middle">MUTE</text>
<rect x="286.6" y="44.3" width="16.5" height="1.6" fill="#454545"/>
<rect x="287.1" y="47.3" width="15.6" height="3" fill="#0a0a0a" rx="0.5" opacity=".55"/>
<rect x="287.7" y="48" width="14.4" height="1.6" fill="#bcbcbc" rx="0.3" opacity=".85"/>
<rect x="286.8" y="51" width="16.1" height="3.3" fill="#505050" rx="0.4"/>
<rect x="287.5" y="51.9" width="0.8" height="1.4" fill="#999"/>
<rect x="290.2" y="52" width="10" height="1.3" fill="#c8c8c8" rx="0.3" opacity=".45"/>
<rect x="301" y="52" width="0.8" height="1.2" fill="#999"/>
<rect x="287.6" y="56.8" width="1" height="1" fill="#8a8a8a"/>
<rect x="286.8" y="59.8" width="16.1" height="3.3" fill="#505050" rx="0.4"/>
<rect x="287.5" y="60.7" width="0.8" height="1.4" fill="#999"/>
<rect x="290.2" y="60.8" width="10" height="1.3" fill="#c8c8c8" rx="0.3" opacity=".45"/>
<rect x="301" y="60.8" width="0.8" height="1.2" fill="#999"/>
<rect x="287.6" y="65.5" width="1" height="1" fill="#8a8a8a"/>
<rect x="286.8" y="68.5" width="16.1" height="3.3" fill="#505050" rx="0.4"/>
<rect x="287.5" y="69.4" width="0.8" height="1.4" fill="#999"/>
<rect x="290.2" y="69.5" width="10" height="1.3" fill="#c8c8c8" rx="0.3" opacity=".45"/>
<rect x="301" y="69.5" width="0.8" height="1.2" fill="#999"/>
<rect x="287.8" y="73.6" width="14.2" height="3" fill="#0a0a0a" rx="0.5" opacity=".55"/>
<rect x="288.4" y="74.3" width="13" height="1.6" fill="#bcbcbc" rx="0.3" opacity=".85"/>
<rect x="286.8" y="77.1" width="16.1" height="3.3" fill="#505050" rx="0.4"/>
<rect x="287.5" y="78" width="0.8" height="1.4" fill="#999"/>
<rect x="290.2" y="78.1" width="10" height="1.3" fill="#c8c8c8" rx="0.3" opacity=".45"/>
<rect x="301" y="78.1" width="0.8" height="1.2" fill="#999"/>
<rect x="288.2" y="82.2" width="1.8" height="13" fill="#0d0d0d"/>
<rect x="287.5" y="86.2" width="3.2" height="3.4" fill="#c0c0c0" rx="0.4"/>
<rect x="291.2" y="82.2" width="2.2" height="13" fill="#26260e"/>
<circle cx="298.4" cy="84.6" r="2.1" fill="#1a1a1a" stroke="#b4b4b4" stroke-width=".7"/>
<rect x="295.1" y="88" width="3" height="2.6" fill="#8e8e8e" rx="0.3"/>
<rect x="299" y="88" width="3" height="2.6" fill="#8e8e8e" rx="0.3"/>
<rect x="294.8" y="91.4" width="7.6" height="3" fill="#080808" rx="0.4"/>
<rect x="296" y="92.4" width="5.2" height="1" fill="#3ad048"/>
<rect x="287.6" y="101.5" width="1" height="1" fill="#8a8a8a"/>
<rect x="287.6" y="124.5" width="1" height="1" fill="#8a8a8a"/>
<rect x="287.6" y="147.5" width="1" height="1" fill="#8a8a8a"/>
<rect x="287.6" y="151.9" width="1" height="1" fill="#8a8a8a"/>
<rect x="287.6" y="146.4" width="1" height="1" fill="#8a8a8a"/>
<rect x="287.6" y="150.6" width="1" height="1" fill="#8a8a8a"/>
<rect x="292.5" y="154.2" width="4.8" height="3" fill="#0a0a0a" rx="0.5" opacity=".55"/>
<rect x="293.1" y="154.9" width="3.6" height="1.6" fill="#bcbcbc" rx="0.3" opacity=".85"/>
<rect x="286.4" y="158.3" width="16.9" height="16.8" fill="#1a1c1a"/>
<rect x="290.7" y="158.3" width="0.3" height="16.8" fill="#26302a"/>
<rect x="294.9" y="158.3" width="0.3" height="16.8" fill="#26302a"/>
<rect x="299.1" y="158.3" width="0.3" height="16.8" fill="#26302a"/>
<rect x="286.4" y="162.5" width="16.9" height="0.3" fill="#26302a"/>
<rect x="286.4" y="166.7" width="16.9" height="0.3" fill="#26302a"/>
<rect x="286.4" y="170.9" width="16.9" height="0.3" fill="#26302a"/>
<path transform="translate(286.4 158.3)" d="M0 8.6 C5 8.6 8 9 11 7.8 S14 7 18 8.2" fill="none" stroke="#3aa860" stroke-width=".8"/>
<rect x="292.3" y="176.4" width="5.2" height="3" fill="#0a0a0a" rx="0.5" opacity=".55"/>
<rect x="292.9" y="177.1" width="4" height="1.6" fill="#bcbcbc" rx="0.3" opacity=".85"/>
<rect x="286.8" y="179.8" width="16.1" height="3.3" fill="#505050" rx="0.4"/>
<rect x="287.5" y="180.7" width="0.8" height="1.4" fill="#999"/>
<rect x="290.2" y="180.8" width="10" height="1.3" fill="#c8c8c8" rx="0.3" opacity=".45"/>
<rect x="301" y="180.8" width="0.8" height="1.2" fill="#999"/>
<rect x="286.8" y="184.1" width="16.1" height="3.3" fill="#505050" rx="0.4"/>
<rect x="287.5" y="185" width="0.8" height="1.4" fill="#999"/>
<rect x="290.2" y="185.1" width="10" height="1.3" fill="#c8c8c8" rx="0.3" opacity=".45"/>
<rect x="301" y="185.1" width="0.8" height="1.2" fill="#999"/>
<rect x="291.3" y="188.7" width="7.2" height="3" fill="#0a0a0a" rx="0.5" opacity=".55"/>
<rect x="291.9" y="189.4" width="6" height="1.6" fill="#bcbcbc" rx="0.3" opacity=".85"/>
<rect x="286.8" y="192" width="16.1" height="3.3" fill="#4a5a4c" rx="0.4"/>
<rect x="287.5" y="192.9" width="0.8" height="1.4" fill="#999"/>
<rect x="290.2" y="193" width="10" height="1.3" fill="#8ab890" rx="0.3" opacity=".45"/>
<rect x="301" y="193" width="0.8" height="1.2" fill="#999"/>
<rect x="286.8" y="198.5" width="16.1" height="1.7" fill="#4a4a4a"/>
<rect x="286.8" y="200.9" width="16.1" height="3.3" fill="#505050" rx="0.4"/>
<rect x="287.5" y="201.8" width="0.8" height="1.4" fill="#999"/>
<rect x="290.2" y="201.9" width="10" height="1.3" fill="#c8c8c8" rx="0.3" opacity=".45"/>
<rect x="301" y="201.9" width="0.8" height="1.2" fill="#999"/>
<circle cx="290.9" cy="211.4" r="2.6" fill="#161616" stroke="#a8a8a8" stroke-width=".9"/>
<rect x="290.6" y="208.6" width="0.6" height="1.6" fill="#d0d0d0"/>
<circle cx="298.8" cy="211.4" r="2.6" fill="#161616" stroke="#a8a8a8" stroke-width=".9"/>
<rect x="298.5" y="208.6" width="0.6" height="1.6" fill="#d0d0d0"/>
<rect x="286.6" y="217.2" width="16.5" height="2.8" fill="#080808"/>
<rect x="287.6" y="218.1" width="4" height="1" fill="#3ad048"/>
<rect x="296.1" y="218.1" width="5.5" height="1" fill="#3ad048"/>
<rect x="289.1" y="222.7" width="4.5" height="2.9" fill="#5e5e5e" rx="0.4"/>
<rect x="296.1" y="222.7" width="4.5" height="2.9" fill="#b8a0a0" rx="0.4"/>
<rect x="289.1" y="228.6" width="4.5" height="3.2" fill="#5e5e5e" rx="0.4"/>
<rect x="296.1" y="228.6" width="4.5" height="3.2" fill="#5e5e5e" rx="0.4"/>
<rect x="288" y="237" width="1.1" height="1" fill="#8a8a8a"/>
<rect x="295.6" y="237" width="1.1" height="1" fill="#8a8a8a"/>
<rect x="288" y="242.8" width="1.1" height="1" fill="#8a8a8a"/>
<rect x="295.6" y="242.8" width="1.1" height="1" fill="#8a8a8a"/>
<rect x="288" y="248.6" width="1.1" height="1" fill="#8a8a8a"/>
<rect x="295.6" y="248.6" width="1.1" height="1" fill="#8a8a8a"/>
<rect x="288" y="254.4" width="1.1" height="1" fill="#8a8a8a"/>
<rect x="295.6" y="254.4" width="1.1" height="1" fill="#8a8a8a"/>
<rect x="288" y="260.2" width="1.1" height="1" fill="#8a8a8a"/>
<rect x="295.6" y="260.2" width="1.1" height="1" fill="#8a8a8a"/>
<rect x="288" y="266" width="1.1" height="1" fill="#8a8a8a"/>
<rect x="295.6" y="266" width="1.1" height="1" fill="#8a8a8a"/>
<rect x="288" y="271.8" width="1.1" height="1" fill="#8a8a8a"/>
<rect x="295.6" y="271.8" width="1.1" height="1" fill="#8a8a8a"/>
<rect x="288" y="277.6" width="1.1" height="1" fill="#8a8a8a"/>
<rect x="295.6" y="277.6" width="1.1" height="1" fill="#8a8a8a"/>
<rect x="288" y="283.4" width="1.1" height="1" fill="#8a8a8a"/>
<rect x="295.6" y="283.4" width="1.1" height="1" fill="#8a8a8a"/>
<rect x="288" y="289.2" width="1.1" height="1" fill="#8a8a8a"/>
<rect x="295.6" y="289.2" width="1.1" height="1" fill="#8a8a8a"/>
<rect x="291.6" y="236" width="1.5" height="55" fill="#0a0a0a"/>
<rect x="289.8" y="257.9" width="5.2" height="7.2" fill="#d4d4d4" rx="0.6"/>
<rect x="289.8" y="261.3" width="5.2" height="0.6" fill="#555"/>
<rect x="298.8" y="236" width="2.6" height="55" fill="#12120c"/>
<rect x="301.4" y="236" width="0.7" height="55" fill="#45401c"/>
<rect x="286.4" y="293.8" width="16.9" height="3.2" fill="#080808"/>
<rect x="287.6" y="294.9" width="4" height="1" fill="#3ad048"/>
<rect x="295.6" y="294.9" width="6" height="1" fill="#3ad048"/>
<rect x="292.1" y="299" width="4.5" height="2.6" fill="#4e4e4e" rx="0.3"/>
<rect x="297.8" y="299" width="4" height="2.6" fill="#4e4e4e" rx="0.3"/>
<rect x="286.4" y="303" width="16.9" height="4.4" fill="#161616"/>
<text x="294.9" y="306.4" font-size="2.9" fill="#ececec" font-weight="bold" text-anchor="middle" textLength="9.5" lengthAdjust="spacingAndGlyphs">Mocha</text>
<rect x="286.4" y="308.8" width="16.9" height="11.2" fill="#060606"/>
<rect x="287.6" y="310.2" width="4" height="1" fill="#d8a020"/>
<rect x="299.6" y="310.2" width="2" height="1" fill="#d8a020"/>
<rect x="287.6" y="313.4" width="4" height="1" fill="#d8a020"/>
<rect x="299.6" y="313.4" width="2" height="1" fill="#d8a020"/>
<rect x="287.6" y="316.6" width="4" height="1" fill="#d8a020"/>
<rect x="299.6" y="316.6" width="2" height="1" fill="#d8a020"/>
<rect x="304.2" y="30.8" width="0.9" height="314.5" fill="#0a0a0a"/>
<rect x="305.1" y="30.8" width="18.5" height="314.5" fill="#14332e"/>
<rect x="305.1" y="31" width="18.5" height="5" fill="#1f8e80"/>
<rect x="305.1" y="340.2" width="18.5" height="4.6" fill="#1f8e80"/>
<rect x="306.5" y="47.3" width="15.6" height="3" fill="#0a0a0a" rx="0.5" opacity=".55"/>
<rect x="307.1" y="48" width="14.4" height="1.6" fill="#bcbcbc" rx="0.3" opacity=".85"/>
<rect x="306.3" y="51" width="16.1" height="3.3" fill="#505050" rx="0.4"/>
<rect x="307" y="51.9" width="0.8" height="1.4" fill="#999"/>
<rect x="309.7" y="52" width="10" height="1.3" fill="#c8c8c8" rx="0.3" opacity=".45"/>
<rect x="320.4" y="52" width="0.8" height="1.2" fill="#999"/>
<rect x="307.1" y="56.8" width="1" height="1" fill="#8a8a8a"/>
<rect x="306.3" y="59.8" width="16.1" height="3.3" fill="#505050" rx="0.4"/>
<rect x="307" y="60.7" width="0.8" height="1.4" fill="#999"/>
<rect x="309.7" y="60.8" width="10" height="1.3" fill="#c8c8c8" rx="0.3" opacity=".45"/>
<rect x="320.4" y="60.8" width="0.8" height="1.2" fill="#999"/>
<rect x="307.1" y="65.5" width="1" height="1" fill="#8a8a8a"/>
<rect x="307.1" y="69.9" width="1" height="1" fill="#8a8a8a"/>
<rect x="307.2" y="73.6" width="14.2" height="3" fill="#0a0a0a" rx="0.5" opacity=".55"/>
<rect x="307.8" y="74.3" width="13" height="1.6" fill="#bcbcbc" rx="0.3" opacity=".85"/>
<rect x="307.1" y="78.5" width="1" height="1" fill="#8a8a8a"/>
<rect x="307.1" y="101.5" width="1" height="1" fill="#8a8a8a"/>
<rect x="307.1" y="124.5" width="1" height="1" fill="#8a8a8a"/>
<rect x="307.1" y="147.5" width="1" height="1" fill="#8a8a8a"/>
<rect x="307.1" y="151.9" width="1" height="1" fill="#8a8a8a"/>
<rect x="307.1" y="146.4" width="1" height="1" fill="#8a8a8a"/>
<rect x="307.1" y="150.6" width="1" height="1" fill="#8a8a8a"/>
<rect x="311.9" y="154.2" width="4.8" height="3" fill="#0a0a0a" rx="0.5" opacity=".55"/>
<rect x="312.5" y="154.9" width="3.6" height="1.6" fill="#bcbcbc" rx="0.3" opacity=".85"/>
<rect x="305.9" y="158.3" width="16.9" height="16.8" fill="#1a1c1a"/>
<rect x="310.1" y="158.3" width="0.3" height="16.8" fill="#26302a"/>
<rect x="314.4" y="158.3" width="0.3" height="16.8" fill="#26302a"/>
<rect x="318.6" y="158.3" width="0.3" height="16.8" fill="#26302a"/>
<rect x="305.9" y="162.5" width="16.9" height="0.3" fill="#26302a"/>
<rect x="305.9" y="166.7" width="16.9" height="0.3" fill="#26302a"/>
<rect x="305.9" y="170.9" width="16.9" height="0.3" fill="#26302a"/>
<path transform="translate(305.9 158.3)" d="M1 17 C4 10 7 3.5 12 3 L18 3" fill="none" stroke="#3aa860" stroke-width=".8"/>
<rect x="311.7" y="176.4" width="5.2" height="3" fill="#0a0a0a" rx="0.5" opacity=".55"/>
<rect x="312.3" y="177.1" width="4" height="1.6" fill="#bcbcbc" rx="0.3" opacity=".85"/>
<rect x="306.3" y="179.8" width="16.1" height="3.3" fill="#505050" rx="0.4"/>
<rect x="307" y="180.7" width="0.8" height="1.4" fill="#999"/>
<rect x="309.7" y="180.8" width="10" height="1.3" fill="#c8c8c8" rx="0.3" opacity=".45"/>
<rect x="320.4" y="180.8" width="0.8" height="1.2" fill="#999"/>
<rect x="306.3" y="184.1" width="16.1" height="3.3" fill="#505050" rx="0.4"/>
<rect x="307" y="185" width="0.8" height="1.4" fill="#999"/>
<rect x="309.7" y="185.1" width="10" height="1.3" fill="#c8c8c8" rx="0.3" opacity=".45"/>
<rect x="320.4" y="185.1" width="0.8" height="1.2" fill="#999"/>
<rect x="310.7" y="188.7" width="7.2" height="3" fill="#0a0a0a" rx="0.5" opacity=".55"/>
<rect x="311.3" y="189.4" width="6" height="1.6" fill="#bcbcbc" rx="0.3" opacity=".85"/>
<rect x="306.3" y="192" width="16.1" height="3.3" fill="#4a5a4c" rx="0.4"/>
<rect x="307" y="192.9" width="0.8" height="1.4" fill="#999"/>
<rect x="309.7" y="193" width="10" height="1.3" fill="#8ab890" rx="0.3" opacity=".45"/>
<rect x="320.4" y="193" width="0.8" height="1.2" fill="#999"/>
<rect x="306.3" y="198.5" width="16.1" height="1.7" fill="#4a4a4a"/>
<rect x="306.3" y="200.9" width="16.1" height="3.3" fill="#505050" rx="0.4"/>
<rect x="307" y="201.8" width="0.8" height="1.4" fill="#999"/>
<rect x="309.7" y="201.9" width="10" height="1.3" fill="#c8c8c8" rx="0.3" opacity=".45"/>
<rect x="320.4" y="201.9" width="0.8" height="1.2" fill="#999"/>
<circle cx="310.4" cy="211.4" r="2.6" fill="#161616" stroke="#a8a8a8" stroke-width=".9"/>
<rect x="310.1" y="208.6" width="0.6" height="1.6" fill="#d0d0d0"/>
<circle cx="318.3" cy="211.4" r="2.6" fill="#161616" stroke="#a8a8a8" stroke-width=".9"/>
<rect x="318" y="208.6" width="0.6" height="1.6" fill="#d0d0d0"/>
<rect x="306.1" y="217.2" width="16.5" height="2.8" fill="#080808"/>
<rect x="307.1" y="218.1" width="4" height="1" fill="#3ad048"/>
<rect x="315.6" y="218.1" width="5.5" height="1" fill="#3ad048"/>
<rect x="308.6" y="222.7" width="4.5" height="2.9" fill="#5e5e5e" rx="0.4"/>
<rect x="315.6" y="222.7" width="4.5" height="2.9" fill="#b8a0a0" rx="0.4"/>
<rect x="308.6" y="228.6" width="4.5" height="3.2" fill="#5e5e5e" rx="0.4"/>
<rect x="315.6" y="228.6" width="4.5" height="3.2" fill="#5e5e5e" rx="0.4"/>
<rect x="307.5" y="237" width="1.1" height="1" fill="#8a8a8a"/>
<rect x="315.1" y="237" width="1.1" height="1" fill="#8a8a8a"/>
<rect x="307.5" y="242.8" width="1.1" height="1" fill="#8a8a8a"/>
<rect x="315.1" y="242.8" width="1.1" height="1" fill="#8a8a8a"/>
<rect x="307.5" y="248.6" width="1.1" height="1" fill="#8a8a8a"/>
<rect x="315.1" y="248.6" width="1.1" height="1" fill="#8a8a8a"/>
<rect x="307.5" y="254.4" width="1.1" height="1" fill="#8a8a8a"/>
<rect x="315.1" y="254.4" width="1.1" height="1" fill="#8a8a8a"/>
<rect x="307.5" y="260.2" width="1.1" height="1" fill="#8a8a8a"/>
<rect x="315.1" y="260.2" width="1.1" height="1" fill="#8a8a8a"/>
<rect x="307.5" y="266" width="1.1" height="1" fill="#8a8a8a"/>
<rect x="315.1" y="266" width="1.1" height="1" fill="#8a8a8a"/>
<rect x="307.5" y="271.8" width="1.1" height="1" fill="#8a8a8a"/>
<rect x="315.1" y="271.8" width="1.1" height="1" fill="#8a8a8a"/>
<rect x="307.5" y="277.6" width="1.1" height="1" fill="#8a8a8a"/>
<rect x="315.1" y="277.6" width="1.1" height="1" fill="#8a8a8a"/>
<rect x="307.5" y="283.4" width="1.1" height="1" fill="#8a8a8a"/>
<rect x="315.1" y="283.4" width="1.1" height="1" fill="#8a8a8a"/>
<rect x="307.5" y="289.2" width="1.1" height="1" fill="#8a8a8a"/>
<rect x="315.1" y="289.2" width="1.1" height="1" fill="#8a8a8a"/>
<rect x="311.1" y="236" width="1.5" height="55" fill="#0a0a0a"/>
<rect x="309.3" y="251.7" width="5.2" height="7.2" fill="#d4d4d4" rx="0.6"/>
<rect x="309.3" y="255.1" width="5.2" height="0.6" fill="#555"/>
<rect x="318.3" y="236" width="2.6" height="55" fill="#12120c"/>
<rect x="320.9" y="236" width="0.7" height="55" fill="#45401c"/>
<rect x="305.9" y="293.8" width="16.9" height="3.2" fill="#080808"/>
<rect x="307.1" y="294.9" width="4" height="1" fill="#3ad048"/>
<rect x="315.1" y="294.9" width="6" height="1" fill="#3ad048"/>
<rect x="311.6" y="299" width="4.5" height="2.6" fill="#4e4e4e" rx="0.3"/>
<rect x="317.3" y="299" width="4" height="2.6" fill="#4e4e4e" rx="0.3"/>
<rect x="305.9" y="303" width="16.9" height="4.4" fill="#161616"/>
<text x="314.3" y="306.4" font-size="2.9" fill="#ececec" font-weight="bold" text-anchor="middle" textLength="11.4" lengthAdjust="spacingAndGlyphs">Hi Pad</text>
<rect x="305.9" y="308.8" width="16.9" height="11.2" fill="#060606"/>
<rect x="307.1" y="310.2" width="4" height="1" fill="#3ad048"/>
<rect x="319.1" y="310.2" width="2" height="1" fill="#3ad048"/>
<rect x="307.1" y="313.4" width="4" height="1" fill="#3ad048"/>
<rect x="319.1" y="313.4" width="2" height="1" fill="#3ad048"/>
<rect x="307.1" y="316.6" width="4" height="1" fill="#3ad048"/>
<rect x="319.1" y="316.6" width="2" height="1" fill="#3ad048"/>
<rect x="323.6" y="30.8" width="0.9" height="314.5" fill="#0a0a0a"/>
<rect x="324.5" y="30.8" width="18.5" height="314.5" fill="#38143c"/>
<rect x="324.5" y="31" width="18.5" height="5" fill="#c43cc8"/>
<rect x="324.5" y="340.2" width="18.5" height="4.6" fill="#c43cc8"/>
<rect x="330.2" y="36" width="7.2" height="3" fill="#0a0a0a" rx="0.5" opacity=".55"/>
<rect x="330.8" y="36.7" width="6" height="1.6" fill="#bcbcbc" rx="0.3" opacity=".85"/>
<rect x="326" y="39.9" width="7" height="3" fill="#3a3a3a" rx="0.4"/>
<rect x="334" y="39.9" width="7.5" height="3" fill="#3a3a3a" rx="0.4"/>
<text x="329.5" y="42.2" font-size="1.8" fill="#999" text-anchor="middle">PRE</text>
<text x="337.7" y="42.2" font-size="1.8" fill="#999" text-anchor="middle">MUTE</text>
<rect x="325.5" y="44.3" width="16.5" height="1.6" fill="#454545"/>
<rect x="326" y="47.3" width="15.6" height="3" fill="#0a0a0a" rx="0.5" opacity=".55"/>
<rect x="326.6" y="48" width="14.4" height="1.6" fill="#bcbcbc" rx="0.3" opacity=".85"/>
<rect x="325.7" y="51" width="16.1" height="3.3" fill="#505050" rx="0.4"/>
<rect x="326.4" y="51.9" width="0.8" height="1.4" fill="#999"/>
<rect x="329.1" y="52" width="10" height="1.3" fill="#c8c8c8" rx="0.3" opacity=".45"/>
<rect x="339.9" y="52" width="0.8" height="1.2" fill="#999"/>
<rect x="325.7" y="55.4" width="16.1" height="3.3" fill="#505050" rx="0.4"/>
<rect x="326.4" y="56.3" width="0.8" height="1.4" fill="#999"/>
<rect x="329.1" y="56.4" width="10" height="1.3" fill="#c8c8c8" rx="0.3" opacity=".45"/>
<rect x="339.9" y="56.4" width="0.8" height="1.2" fill="#999"/>
<rect x="326.5" y="61.2" width="1" height="1" fill="#8a8a8a"/>
<rect x="326.5" y="65.5" width="1" height="1" fill="#8a8a8a"/>
<rect x="326.5" y="69.9" width="1" height="1" fill="#8a8a8a"/>
<rect x="326.7" y="73.6" width="14.2" height="3" fill="#0a0a0a" rx="0.5" opacity=".55"/>
<rect x="327.3" y="74.3" width="13" height="1.6" fill="#bcbcbc" rx="0.3" opacity=".85"/>
<rect x="325.7" y="77.1" width="16.1" height="3.3" fill="#505050" rx="0.4"/>
<rect x="326.4" y="78" width="0.8" height="1.4" fill="#999"/>
<rect x="329.1" y="78.1" width="10" height="1.3" fill="#c8c8c8" rx="0.3" opacity=".45"/>
<rect x="339.9" y="78.1" width="0.8" height="1.2" fill="#999"/>
<rect x="327.1" y="82.2" width="1.8" height="13" fill="#0d0d0d"/>
<rect x="326.4" y="86.2" width="3.2" height="3.4" fill="#c0c0c0" rx="0.4"/>
<rect x="330.1" y="82.2" width="2.2" height="13" fill="#26260e"/>
<circle cx="337.3" cy="84.6" r="2.1" fill="#1a1a1a" stroke="#b4b4b4" stroke-width=".7"/>
<rect x="334" y="88" width="3" height="2.6" fill="#8e8e8e" rx="0.3"/>
<rect x="337.9" y="88" width="3" height="2.6" fill="#8e8e8e" rx="0.3"/>
<rect x="333.7" y="91.4" width="7.6" height="3" fill="#080808" rx="0.4"/>
<rect x="334.9" y="92.4" width="5.2" height="1" fill="#3ad048"/>
<rect x="326.5" y="101.5" width="1" height="1" fill="#8a8a8a"/>
<rect x="326.5" y="124.5" width="1" height="1" fill="#8a8a8a"/>
<rect x="326.5" y="147.5" width="1" height="1" fill="#8a8a8a"/>
<rect x="326.5" y="151.9" width="1" height="1" fill="#8a8a8a"/>
<rect x="326.5" y="146.4" width="1" height="1" fill="#8a8a8a"/>
<rect x="326.5" y="150.6" width="1" height="1" fill="#8a8a8a"/>
<rect x="331.4" y="154.2" width="4.8" height="3" fill="#0a0a0a" rx="0.5" opacity=".55"/>
<rect x="332" y="154.9" width="3.6" height="1.6" fill="#bcbcbc" rx="0.3" opacity=".85"/>
<rect x="325.3" y="158.3" width="16.9" height="16.8" fill="#1a1c1a"/>
<rect x="329.6" y="158.3" width="0.3" height="16.8" fill="#26302a"/>
<rect x="333.8" y="158.3" width="0.3" height="16.8" fill="#26302a"/>
<rect x="338" y="158.3" width="0.3" height="16.8" fill="#26302a"/>
<rect x="325.3" y="162.5" width="16.9" height="0.3" fill="#26302a"/>
<rect x="325.3" y="166.7" width="16.9" height="0.3" fill="#26302a"/>
<rect x="325.3" y="170.9" width="16.9" height="0.3" fill="#26302a"/>
<path transform="translate(325.3 158.3)" d="M0 8.6 L18 8.6" fill="none" stroke="#3aa860" stroke-width=".8"/>
<rect x="331.2" y="176.4" width="5.2" height="3" fill="#0a0a0a" rx="0.5" opacity=".55"/>
<rect x="331.8" y="177.1" width="4" height="1.6" fill="#bcbcbc" rx="0.3" opacity=".85"/>
<rect x="325.7" y="179.8" width="16.1" height="3.3" fill="#505050" rx="0.4"/>
<rect x="326.4" y="180.7" width="0.8" height="1.4" fill="#999"/>
<rect x="329.1" y="180.8" width="10" height="1.3" fill="#c8c8c8" rx="0.3" opacity=".45"/>
<rect x="339.9" y="180.8" width="0.8" height="1.2" fill="#999"/>
<rect x="325.7" y="184.1" width="16.1" height="3.3" fill="#505050" rx="0.4"/>
<rect x="326.4" y="185" width="0.8" height="1.4" fill="#999"/>
<rect x="329.1" y="185.1" width="10" height="1.3" fill="#c8c8c8" rx="0.3" opacity=".45"/>
<rect x="339.9" y="185.1" width="0.8" height="1.2" fill="#999"/>
<rect x="330.2" y="188.7" width="7.2" height="3" fill="#0a0a0a" rx="0.5" opacity=".55"/>
<rect x="330.8" y="189.4" width="6" height="1.6" fill="#bcbcbc" rx="0.3" opacity=".85"/>
<rect x="325.7" y="192" width="16.1" height="3.3" fill="#4a5a4c" rx="0.4"/>
<rect x="326.4" y="192.9" width="0.8" height="1.4" fill="#999"/>
<rect x="329.1" y="193" width="10" height="1.3" fill="#8ab890" rx="0.3" opacity=".45"/>
<rect x="339.9" y="193" width="0.8" height="1.2" fill="#999"/>
<rect x="325.7" y="198.5" width="16.1" height="1.7" fill="#4a4a4a"/>
<rect x="325.7" y="200.9" width="16.1" height="3.3" fill="#505050" rx="0.4"/>
<rect x="326.4" y="201.8" width="0.8" height="1.4" fill="#999"/>
<rect x="329.1" y="201.9" width="10" height="1.3" fill="#c8c8c8" rx="0.3" opacity=".45"/>
<rect x="339.9" y="201.9" width="0.8" height="1.2" fill="#999"/>
<circle cx="329.8" cy="211.4" r="2.6" fill="#161616" stroke="#a8a8a8" stroke-width=".9"/>
<rect x="329.5" y="208.6" width="0.6" height="1.6" fill="#d0d0d0"/>
<circle cx="337.7" cy="211.4" r="2.6" fill="#161616" stroke="#a8a8a8" stroke-width=".9"/>
<rect x="337.4" y="208.6" width="0.6" height="1.6" fill="#d0d0d0"/>
<rect x="325.5" y="217.2" width="16.5" height="2.8" fill="#080808"/>
<rect x="326.5" y="218.1" width="4" height="1" fill="#3ad048"/>
<rect x="335" y="218.1" width="5.5" height="1" fill="#3ad048"/>
<rect x="328" y="222.7" width="4.5" height="2.9" fill="#5e5e5e" rx="0.4"/>
<rect x="335" y="222.7" width="4.5" height="2.9" fill="#b8a0a0" rx="0.4"/>
<rect x="328" y="228.6" width="4.5" height="3.2" fill="#5e5e5e" rx="0.4"/>
<rect x="335" y="228.6" width="4.5" height="3.2" fill="#5e5e5e" rx="0.4"/>
<rect x="326.9" y="237" width="1.1" height="1" fill="#8a8a8a"/>
<rect x="334.5" y="237" width="1.1" height="1" fill="#8a8a8a"/>
<rect x="326.9" y="242.8" width="1.1" height="1" fill="#8a8a8a"/>
<rect x="334.5" y="242.8" width="1.1" height="1" fill="#8a8a8a"/>
<rect x="326.9" y="248.6" width="1.1" height="1" fill="#8a8a8a"/>
<rect x="334.5" y="248.6" width="1.1" height="1" fill="#8a8a8a"/>
<rect x="326.9" y="254.4" width="1.1" height="1" fill="#8a8a8a"/>
<rect x="334.5" y="254.4" width="1.1" height="1" fill="#8a8a8a"/>
<rect x="326.9" y="260.2" width="1.1" height="1" fill="#8a8a8a"/>
<rect x="334.5" y="260.2" width="1.1" height="1" fill="#8a8a8a"/>
<rect x="326.9" y="266" width="1.1" height="1" fill="#8a8a8a"/>
<rect x="334.5" y="266" width="1.1" height="1" fill="#8a8a8a"/>
<rect x="326.9" y="271.8" width="1.1" height="1" fill="#8a8a8a"/>
<rect x="334.5" y="271.8" width="1.1" height="1" fill="#8a8a8a"/>
<rect x="326.9" y="277.6" width="1.1" height="1" fill="#8a8a8a"/>
<rect x="334.5" y="277.6" width="1.1" height="1" fill="#8a8a8a"/>
<rect x="326.9" y="283.4" width="1.1" height="1" fill="#8a8a8a"/>
<rect x="334.5" y="283.4" width="1.1" height="1" fill="#8a8a8a"/>
<rect x="326.9" y="289.2" width="1.1" height="1" fill="#8a8a8a"/>
<rect x="334.5" y="289.2" width="1.1" height="1" fill="#8a8a8a"/>
<rect x="330.5" y="236" width="1.5" height="55" fill="#0a0a0a"/>
<rect x="328.7" y="247.2" width="5.2" height="7.2" fill="#d4d4d4" rx="0.6"/>
<rect x="328.7" y="250.6" width="5.2" height="0.6" fill="#555"/>
<rect x="337.7" y="236" width="2.6" height="55" fill="#12120c"/>
<rect x="340.3" y="236" width="0.7" height="55" fill="#45401c"/>
<rect x="337.7" y="283" width="2.6" height="8" fill="#3cc83c"/>
<rect x="325.3" y="293.8" width="16.9" height="3.2" fill="#080808"/>
<rect x="326.5" y="294.9" width="4" height="1" fill="#3ad048"/>
<rect x="334.5" y="294.9" width="6" height="1" fill="#3ad048"/>
<rect x="331" y="299" width="4.5" height="2.6" fill="#4e4e4e" rx="0.3"/>
<rect x="336.7" y="299" width="4" height="2.6" fill="#4e4e4e" rx="0.3"/>
<rect x="325.3" y="303" width="16.9" height="4.4" fill="#161616"/>
<text x="333.8" y="306.4" font-size="2.9" fill="#ececec" font-weight="bold" text-anchor="middle" textLength="9.5" lengthAdjust="spacingAndGlyphs">Slobs</text>
<rect x="325.3" y="308.8" width="16.9" height="11.2" fill="#060606"/>
<rect x="326.5" y="310.2" width="4" height="1" fill="#3ad048"/>
<rect x="338.5" y="310.2" width="2" height="1" fill="#3ad048"/>
<rect x="326.5" y="313.4" width="4" height="1" fill="#3ad048"/>
<rect x="338.5" y="313.4" width="2" height="1" fill="#3ad048"/>
<rect x="326.5" y="316.6" width="4" height="1" fill="#3ad048"/>
<rect x="338.5" y="316.6" width="2" height="1" fill="#3ad048"/>
<rect x="343.1" y="30.8" width="0.9" height="314.5" fill="#0a0a0a"/>
<rect x="344" y="30.8" width="18.5" height="314.5" fill="#381218"/>
<rect x="344" y="31" width="18.5" height="5" fill="#a01c1c"/>
<rect x="344" y="340.2" width="18.5" height="4.6" fill="#a01c1c"/>
<rect x="349.6" y="36" width="7.2" height="3" fill="#0a0a0a" rx="0.5" opacity=".55"/>
<rect x="350.2" y="36.7" width="6" height="1.6" fill="#bcbcbc" rx="0.3" opacity=".85"/>
<rect x="345.5" y="39.9" width="7" height="3" fill="#3a3a3a" rx="0.4"/>
<rect x="353.5" y="39.9" width="7.5" height="3" fill="#3a3a3a" rx="0.4"/>
<text x="349" y="42.2" font-size="1.8" fill="#999" text-anchor="middle">PRE</text>
<text x="357.2" y="42.2" font-size="1.8" fill="#999" text-anchor="middle">MUTE</text>
<rect x="345" y="44.3" width="16.5" height="1.6" fill="#454545"/>
<rect x="345.4" y="47.3" width="15.6" height="3" fill="#0a0a0a" rx="0.5" opacity=".55"/>
<rect x="346" y="48" width="14.4" height="1.6" fill="#bcbcbc" rx="0.3" opacity=".85"/>
<rect x="345.2" y="51" width="16.1" height="3.3" fill="#505050" rx="0.4"/>
<rect x="345.9" y="51.9" width="0.8" height="1.4" fill="#999"/>
<rect x="348.6" y="52" width="10" height="1.3" fill="#c8c8c8" rx="0.3" opacity=".45"/>
<rect x="359.3" y="52" width="0.8" height="1.2" fill="#999"/>
<rect x="346" y="56.8" width="1" height="1" fill="#8a8a8a"/>
<rect x="346" y="61.2" width="1" height="1" fill="#8a8a8a"/>
<rect x="346" y="65.5" width="1" height="1" fill="#8a8a8a"/>
<rect x="346" y="69.9" width="1" height="1" fill="#8a8a8a"/>
<rect x="346.1" y="73.6" width="14.2" height="3" fill="#0a0a0a" rx="0.5" opacity=".55"/>
<rect x="346.7" y="74.3" width="13" height="1.6" fill="#bcbcbc" rx="0.3" opacity=".85"/>
<rect x="345.2" y="77.1" width="16.1" height="3.3" fill="#505050" rx="0.4"/>
<rect x="345.9" y="78" width="0.8" height="1.4" fill="#999"/>
<rect x="348.6" y="78.1" width="10" height="1.3" fill="#c8c8c8" rx="0.3" opacity=".45"/>
<rect x="359.3" y="78.1" width="0.8" height="1.2" fill="#999"/>
<rect x="346.6" y="82.2" width="1.8" height="13" fill="#0d0d0d"/>
<rect x="345.9" y="86.2" width="3.2" height="3.4" fill="#c0c0c0" rx="0.4"/>
<rect x="349.6" y="82.2" width="2.2" height="13" fill="#26260e"/>
<circle cx="356.8" cy="84.6" r="2.1" fill="#1a1a1a" stroke="#b4b4b4" stroke-width=".7"/>
<rect x="353.5" y="88" width="3" height="2.6" fill="#8e8e8e" rx="0.3"/>
<rect x="357.4" y="88" width="3" height="2.6" fill="#8e8e8e" rx="0.3"/>
<rect x="353.2" y="91.4" width="7.6" height="3" fill="#080808" rx="0.4"/>
<rect x="354.4" y="92.4" width="5.2" height="1" fill="#3ad048"/>
<rect x="345.2" y="100.1" width="16.1" height="3.3" fill="#505050" rx="0.4"/>
<rect x="345.9" y="101" width="0.8" height="1.4" fill="#999"/>
<rect x="348.6" y="101.1" width="10" height="1.3" fill="#c8c8c8" rx="0.3" opacity=".45"/>
<rect x="359.3" y="101.1" width="0.8" height="1.2" fill="#999"/>
<rect x="346.6" y="105.2" width="1.8" height="13" fill="#0d0d0d"/>
<rect x="345.9" y="109.2" width="3.2" height="3.4" fill="#c0c0c0" rx="0.4"/>
<rect x="349.6" y="105.2" width="2.2" height="13" fill="#26260e"/>
<circle cx="356.8" cy="107.6" r="2.1" fill="#1a1a1a" stroke="#b4b4b4" stroke-width=".7"/>
<rect x="353.5" y="111" width="3" height="2.6" fill="#8e8e8e" rx="0.3"/>
<rect x="357.4" y="111" width="3" height="2.6" fill="#8e8e8e" rx="0.3"/>
<rect x="353.2" y="114.4" width="7.6" height="3" fill="#080808" rx="0.4"/>
<rect x="354.4" y="115.4" width="5.2" height="1" fill="#3ad048"/>
<rect x="346" y="124.5" width="1" height="1" fill="#8a8a8a"/>
<rect x="346" y="147.5" width="1" height="1" fill="#8a8a8a"/>
<rect x="346" y="151.9" width="1" height="1" fill="#8a8a8a"/>
<rect x="346" y="146.4" width="1" height="1" fill="#8a8a8a"/>
<rect x="346" y="150.6" width="1" height="1" fill="#8a8a8a"/>
<rect x="350.8" y="154.2" width="4.8" height="3" fill="#0a0a0a" rx="0.5" opacity=".55"/>
<rect x="351.4" y="154.9" width="3.6" height="1.6" fill="#bcbcbc" rx="0.3" opacity=".85"/>
<rect x="344.8" y="158.3" width="16.9" height="16.8" fill="#1a1c1a"/>
<rect x="349" y="158.3" width="0.3" height="16.8" fill="#26302a"/>
<rect x="353.2" y="158.3" width="0.3" height="16.8" fill="#26302a"/>
<rect x="357.5" y="158.3" width="0.3" height="16.8" fill="#26302a"/>
<rect x="344.8" y="162.5" width="16.9" height="0.3" fill="#26302a"/>
<rect x="344.8" y="166.7" width="16.9" height="0.3" fill="#26302a"/>
<rect x="344.8" y="170.9" width="16.9" height="0.3" fill="#26302a"/>
<path transform="translate(344.8 158.3)" d="M0 8.6 L18 8.6" fill="none" stroke="#3aa860" stroke-width=".8"/>
<rect x="350.6" y="176.4" width="5.2" height="3" fill="#0a0a0a" rx="0.5" opacity=".55"/>
<rect x="351.2" y="177.1" width="4" height="1.6" fill="#bcbcbc" rx="0.3" opacity=".85"/>
<rect x="345.2" y="179.8" width="16.1" height="3.3" fill="#505050" rx="0.4"/>
<rect x="345.9" y="180.7" width="0.8" height="1.4" fill="#999"/>
<rect x="348.6" y="180.8" width="10" height="1.3" fill="#c8c8c8" rx="0.3" opacity=".45"/>
<rect x="359.3" y="180.8" width="0.8" height="1.2" fill="#999"/>
<rect x="345.2" y="184.1" width="16.1" height="3.3" fill="#505050" rx="0.4"/>
<rect x="345.9" y="185" width="0.8" height="1.4" fill="#999"/>
<rect x="348.6" y="185.1" width="10" height="1.3" fill="#c8c8c8" rx="0.3" opacity=".45"/>
<rect x="359.3" y="185.1" width="0.8" height="1.2" fill="#999"/>
<rect x="349.6" y="188.7" width="7.2" height="3" fill="#0a0a0a" rx="0.5" opacity=".55"/>
<rect x="350.2" y="189.4" width="6" height="1.6" fill="#bcbcbc" rx="0.3" opacity=".85"/>
<rect x="345.2" y="192" width="16.1" height="3.3" fill="#4a5a4c" rx="0.4"/>
<rect x="345.9" y="192.9" width="0.8" height="1.4" fill="#999"/>
<rect x="348.6" y="193" width="10" height="1.3" fill="#8ab890" rx="0.3" opacity=".45"/>
<rect x="359.3" y="193" width="0.8" height="1.2" fill="#999"/>
<rect x="345.2" y="198.5" width="16.1" height="1.7" fill="#4a4a4a"/>
<rect x="345.2" y="200.9" width="16.1" height="3.3" fill="#505050" rx="0.4"/>
<rect x="345.9" y="201.8" width="0.8" height="1.4" fill="#999"/>
<rect x="348.6" y="201.9" width="10" height="1.3" fill="#c8c8c8" rx="0.3" opacity=".45"/>
<rect x="359.3" y="201.9" width="0.8" height="1.2" fill="#999"/>
<circle cx="349.3" cy="211.4" r="2.6" fill="#161616" stroke="#a8a8a8" stroke-width=".9"/>
<rect x="349" y="208.6" width="0.6" height="1.6" fill="#d0d0d0"/>
<circle cx="357.2" cy="211.4" r="2.6" fill="#161616" stroke="#a8a8a8" stroke-width=".9"/>
<rect x="356.9" y="208.6" width="0.6" height="1.6" fill="#d0d0d0"/>
<rect x="345" y="217.2" width="16.5" height="2.8" fill="#080808"/>
<rect x="346" y="218.1" width="4" height="1" fill="#3ad048"/>
<rect x="354.5" y="218.1" width="5.5" height="1" fill="#3ad048"/>
<rect x="347.5" y="222.7" width="4.5" height="2.9" fill="#5e5e5e" rx="0.4"/>
<rect x="354.5" y="222.7" width="4.5" height="2.9" fill="#b8a0a0" rx="0.4"/>
<rect x="347.5" y="228.6" width="4.5" height="3.2" fill="#5e5e5e" rx="0.4"/>
<rect x="354.5" y="228.6" width="4.5" height="3.2" fill="#5e5e5e" rx="0.4"/>
<rect x="346.4" y="237" width="1.1" height="1" fill="#8a8a8a"/>
<rect x="354" y="237" width="1.1" height="1" fill="#8a8a8a"/>
<rect x="346.4" y="242.8" width="1.1" height="1" fill="#8a8a8a"/>
<rect x="354" y="242.8" width="1.1" height="1" fill="#8a8a8a"/>
<rect x="346.4" y="248.6" width="1.1" height="1" fill="#8a8a8a"/>
<rect x="354" y="248.6" width="1.1" height="1" fill="#8a8a8a"/>
<rect x="346.4" y="254.4" width="1.1" height="1" fill="#8a8a8a"/>
<rect x="354" y="254.4" width="1.1" height="1" fill="#8a8a8a"/>
<rect x="346.4" y="260.2" width="1.1" height="1" fill="#8a8a8a"/>
<rect x="354" y="260.2" width="1.1" height="1" fill="#8a8a8a"/>
<rect x="346.4" y="266" width="1.1" height="1" fill="#8a8a8a"/>
<rect x="354" y="266" width="1.1" height="1" fill="#8a8a8a"/>
<rect x="346.4" y="271.8" width="1.1" height="1" fill="#8a8a8a"/>
<rect x="354" y="271.8" width="1.1" height="1" fill="#8a8a8a"/>
<rect x="346.4" y="277.6" width="1.1" height="1" fill="#8a8a8a"/>
<rect x="354" y="277.6" width="1.1" height="1" fill="#8a8a8a"/>
<rect x="346.4" y="283.4" width="1.1" height="1" fill="#8a8a8a"/>
<rect x="354" y="283.4" width="1.1" height="1" fill="#8a8a8a"/>
<rect x="346.4" y="289.2" width="1.1" height="1" fill="#8a8a8a"/>
<rect x="354" y="289.2" width="1.1" height="1" fill="#8a8a8a"/>
<rect x="350" y="236" width="1.5" height="55" fill="#0a0a0a"/>
<rect x="348.2" y="249.1" width="5.2" height="7.2" fill="#d4d4d4" rx="0.6"/>
<rect x="348.2" y="252.5" width="5.2" height="0.6" fill="#555"/>
<rect x="357.2" y="236" width="2.6" height="55" fill="#12120c"/>
<rect x="359.8" y="236" width="0.7" height="55" fill="#45401c"/>
<rect x="344.8" y="293.8" width="16.9" height="3.2" fill="#080808"/>
<rect x="346" y="294.9" width="4" height="1" fill="#3ad048"/>
<rect x="354" y="294.9" width="6" height="1" fill="#3ad048"/>
<rect x="350.5" y="299" width="4.5" height="2.6" fill="#4e4e4e" rx="0.3"/>
<rect x="356.2" y="299" width="4" height="2.6" fill="#4e4e4e" rx="0.3"/>
<rect x="344.8" y="303" width="16.9" height="4.4" fill="#161616"/>
<text x="353.2" y="306.4" font-size="2.9" fill="#ececec" font-weight="bold" text-anchor="middle" textLength="16.1" lengthAdjust="spacingAndGlyphs">VocSample</text>
<rect x="344.8" y="308.8" width="16.9" height="11.2" fill="#060606"/>
<rect x="346" y="310.2" width="4" height="1" fill="#3ad048"/>
<rect x="358" y="310.2" width="2" height="1" fill="#3ad048"/>
<rect x="346" y="313.4" width="4" height="1" fill="#3ad048"/>
<rect x="358" y="313.4" width="2" height="1" fill="#3ad048"/>
<rect x="346" y="316.6" width="4" height="1" fill="#3ad048"/>
<rect x="358" y="316.6" width="2" height="1" fill="#3ad048"/>
<rect x="362.5" y="30.8" width="0.9" height="314.5" fill="#0a0a0a"/>
<rect x="363.4" y="30.8" width="18.5" height="314.5" fill="#142d32"/>
<rect x="363.4" y="31" width="18.5" height="5" fill="#1f7a76"/>
<rect x="363.4" y="340.2" width="18.5" height="4.6" fill="#1f7a76"/>
<rect x="364.9" y="47.3" width="15.6" height="3" fill="#0a0a0a" rx="0.5" opacity=".55"/>
<rect x="365.5" y="48" width="14.4" height="1.6" fill="#bcbcbc" rx="0.3" opacity=".85"/>
<rect x="364.6" y="51" width="16.1" height="3.3" fill="#505050" rx="0.4"/>
<rect x="365.3" y="51.9" width="0.8" height="1.4" fill="#999"/>
<rect x="368" y="52" width="10" height="1.3" fill="#c8c8c8" rx="0.3" opacity=".45"/>
<rect x="378.7" y="52" width="0.8" height="1.2" fill="#999"/>
<rect x="365.4" y="56.8" width="1" height="1" fill="#8a8a8a"/>
<rect x="364.6" y="59.8" width="16.1" height="3.3" fill="#505050" rx="0.4"/>
<rect x="365.3" y="60.7" width="0.8" height="1.4" fill="#999"/>
<rect x="368" y="60.8" width="10" height="1.3" fill="#c8c8c8" rx="0.3" opacity=".45"/>
<rect x="378.7" y="60.8" width="0.8" height="1.2" fill="#999"/>
<rect x="365.4" y="65.5" width="1" height="1" fill="#8a8a8a"/>
<rect x="365.4" y="69.9" width="1" height="1" fill="#8a8a8a"/>
<rect x="365.6" y="73.6" width="14.2" height="3" fill="#0a0a0a" rx="0.5" opacity=".55"/>
<rect x="366.2" y="74.3" width="13" height="1.6" fill="#bcbcbc" rx="0.3" opacity=".85"/>
<rect x="365.4" y="78.5" width="1" height="1" fill="#8a8a8a"/>
<rect x="365.4" y="101.5" width="1" height="1" fill="#8a8a8a"/>
<rect x="365.4" y="124.5" width="1" height="1" fill="#8a8a8a"/>
<rect x="365.4" y="147.5" width="1" height="1" fill="#8a8a8a"/>
<rect x="365.4" y="151.9" width="1" height="1" fill="#8a8a8a"/>
<rect x="365.4" y="146.4" width="1" height="1" fill="#8a8a8a"/>
<rect x="365.4" y="150.6" width="1" height="1" fill="#8a8a8a"/>
<rect x="370.3" y="154.2" width="4.8" height="3" fill="#0a0a0a" rx="0.5" opacity=".55"/>
<rect x="370.9" y="154.9" width="3.6" height="1.6" fill="#bcbcbc" rx="0.3" opacity=".85"/>
<rect x="364.2" y="158.3" width="16.9" height="16.8" fill="#1a1c1a"/>
<rect x="368.4" y="158.3" width="0.3" height="16.8" fill="#26302a"/>
<rect x="372.7" y="158.3" width="0.3" height="16.8" fill="#26302a"/>
<rect x="376.9" y="158.3" width="0.3" height="16.8" fill="#26302a"/>
<rect x="364.2" y="162.5" width="16.9" height="0.3" fill="#26302a"/>
<rect x="364.2" y="166.7" width="16.9" height="0.3" fill="#26302a"/>
<rect x="364.2" y="170.9" width="16.9" height="0.3" fill="#26302a"/>
<path transform="translate(364.2 158.3)" d="M0 8.6 L18 8.6" fill="none" stroke="#3aa860" stroke-width=".8"/>
<rect x="370.1" y="176.4" width="5.2" height="3" fill="#0a0a0a" rx="0.5" opacity=".55"/>
<rect x="370.7" y="177.1" width="4" height="1.6" fill="#bcbcbc" rx="0.3" opacity=".85"/>
<rect x="364.6" y="179.8" width="16.1" height="3.3" fill="#505050" rx="0.4"/>
<rect x="365.3" y="180.7" width="0.8" height="1.4" fill="#999"/>
<rect x="368" y="180.8" width="10" height="1.3" fill="#c8c8c8" rx="0.3" opacity=".45"/>
<rect x="378.7" y="180.8" width="0.8" height="1.2" fill="#999"/>
<rect x="364.6" y="184.1" width="16.1" height="3.3" fill="#505050" rx="0.4"/>
<rect x="365.3" y="185" width="0.8" height="1.4" fill="#999"/>
<rect x="368" y="185.1" width="10" height="1.3" fill="#c8c8c8" rx="0.3" opacity=".45"/>
<rect x="378.7" y="185.1" width="0.8" height="1.2" fill="#999"/>
<rect x="369.1" y="188.7" width="7.2" height="3" fill="#0a0a0a" rx="0.5" opacity=".55"/>
<rect x="369.7" y="189.4" width="6" height="1.6" fill="#bcbcbc" rx="0.3" opacity=".85"/>
<rect x="364.6" y="192" width="16.1" height="3.3" fill="#4a5a4c" rx="0.4"/>
<rect x="365.3" y="192.9" width="0.8" height="1.4" fill="#999"/>
<rect x="368" y="193" width="10" height="1.3" fill="#8ab890" rx="0.3" opacity=".45"/>
<rect x="378.7" y="193" width="0.8" height="1.2" fill="#999"/>
<rect x="364.6" y="198.5" width="16.1" height="1.7" fill="#4a4a4a"/>
<rect x="364.6" y="200.9" width="16.1" height="3.3" fill="#505050" rx="0.4"/>
<rect x="365.3" y="201.8" width="0.8" height="1.4" fill="#999"/>
<rect x="368" y="201.9" width="10" height="1.3" fill="#c8c8c8" rx="0.3" opacity=".45"/>
<rect x="378.7" y="201.9" width="0.8" height="1.2" fill="#999"/>
<circle cx="372.7" cy="211.4" r="3" fill="#161616" stroke="#b0b0b0" stroke-width="1"/>
<rect x="372.4" y="208.2" width="0.6" height="1.8" fill="#3ad048"/>
<rect x="364.4" y="217.2" width="16.5" height="2.8" fill="#080808"/>
<rect x="365.4" y="218.1" width="4" height="1" fill="#3ad048"/>
<rect x="373.9" y="218.1" width="5.5" height="1" fill="#3ad048"/>
<rect x="366.9" y="222.7" width="4.5" height="2.9" fill="#5e5e5e" rx="0.4"/>
<rect x="373.9" y="222.7" width="4.5" height="2.9" fill="#b8a0a0" rx="0.4"/>
<rect x="366.9" y="228.6" width="4.5" height="3.2" fill="#5e5e5e" rx="0.4"/>
<rect x="373.9" y="228.6" width="4.5" height="3.2" fill="#5e5e5e" rx="0.4"/>
<rect x="365.8" y="237" width="1.1" height="1" fill="#8a8a8a"/>
<rect x="373.4" y="237" width="1.1" height="1" fill="#8a8a8a"/>
<rect x="365.8" y="242.8" width="1.1" height="1" fill="#8a8a8a"/>
<rect x="373.4" y="242.8" width="1.1" height="1" fill="#8a8a8a"/>
<rect x="365.8" y="248.6" width="1.1" height="1" fill="#8a8a8a"/>
<rect x="373.4" y="248.6" width="1.1" height="1" fill="#8a8a8a"/>
<rect x="365.8" y="254.4" width="1.1" height="1" fill="#8a8a8a"/>
<rect x="373.4" y="254.4" width="1.1" height="1" fill="#8a8a8a"/>
<rect x="365.8" y="260.2" width="1.1" height="1" fill="#8a8a8a"/>
<rect x="373.4" y="260.2" width="1.1" height="1" fill="#8a8a8a"/>
<rect x="365.8" y="266" width="1.1" height="1" fill="#8a8a8a"/>
<rect x="373.4" y="266" width="1.1" height="1" fill="#8a8a8a"/>
<rect x="365.8" y="271.8" width="1.1" height="1" fill="#8a8a8a"/>
<rect x="373.4" y="271.8" width="1.1" height="1" fill="#8a8a8a"/>
<rect x="365.8" y="277.6" width="1.1" height="1" fill="#8a8a8a"/>
<rect x="373.4" y="277.6" width="1.1" height="1" fill="#8a8a8a"/>
<rect x="365.8" y="283.4" width="1.1" height="1" fill="#8a8a8a"/>
<rect x="373.4" y="283.4" width="1.1" height="1" fill="#8a8a8a"/>
<rect x="365.8" y="289.2" width="1.1" height="1" fill="#8a8a8a"/>
<rect x="373.4" y="289.2" width="1.1" height="1" fill="#8a8a8a"/>
<rect x="369.4" y="236" width="1.5" height="55" fill="#0a0a0a"/>
<rect x="367.6" y="247.2" width="5.2" height="7.2" fill="#d4d4d4" rx="0.6"/>
<rect x="367.6" y="250.6" width="5.2" height="0.6" fill="#555"/>
<rect x="376.6" y="236" width="2.6" height="55" fill="#12120c"/>
<rect x="379.2" y="236" width="0.7" height="55" fill="#45401c"/>
<rect x="364.2" y="293.8" width="16.9" height="3.2" fill="#080808"/>
<rect x="365.4" y="294.9" width="4" height="1" fill="#3ad048"/>
<rect x="373.4" y="294.9" width="6" height="1" fill="#3ad048"/>
<rect x="369.9" y="299" width="4.5" height="2.6" fill="#4e4e4e" rx="0.3"/>
<rect x="375.6" y="299" width="4" height="2.6" fill="#4e4e4e" rx="0.3"/>
<rect x="364.2" y="303" width="16.9" height="4.4" fill="#161616"/>
<text x="372.7" y="306.4" font-size="2.9" fill="#ececec" font-weight="bold" text-anchor="middle" textLength="7.6" lengthAdjust="spacingAndGlyphs">Verb</text>
<rect x="364.2" y="308.8" width="16.9" height="11.2" fill="#060606"/>
<rect x="365.4" y="310.2" width="4" height="1" fill="#3ad048"/>
<rect x="377.4" y="310.2" width="2" height="1" fill="#3ad048"/>
<rect x="365.4" y="313.4" width="4" height="1" fill="#3ad048"/>
<rect x="377.4" y="313.4" width="2" height="1" fill="#3ad048"/>
<rect x="365.4" y="316.6" width="4" height="1" fill="#3ad048"/>
<rect x="377.4" y="316.6" width="2" height="1" fill="#3ad048"/>
<rect x="381.9" y="30.8" width="0.9" height="314.5" fill="#0a0a0a"/>
<rect x="382.8" y="30.8" width="18.5" height="314.5" fill="#142d32"/>
<rect x="382.8" y="31" width="18.5" height="5" fill="#1f7a76"/>
<rect x="382.8" y="340.2" width="18.5" height="4.6" fill="#1f7a76"/>
<rect x="384.3" y="47.3" width="15.6" height="3" fill="#0a0a0a" rx="0.5" opacity=".55"/>
<rect x="384.9" y="48" width="14.4" height="1.6" fill="#bcbcbc" rx="0.3" opacity=".85"/>
<rect x="384" y="51" width="16.1" height="3.3" fill="#505050" rx="0.4"/>
<rect x="384.7" y="51.9" width="0.8" height="1.4" fill="#999"/>
<rect x="387.4" y="52" width="10" height="1.3" fill="#c8c8c8" rx="0.3" opacity=".45"/>
<rect x="398.2" y="52" width="0.8" height="1.2" fill="#999"/>
<rect x="384.8" y="56.8" width="1" height="1" fill="#8a8a8a"/>
<rect x="384.8" y="61.2" width="1" height="1" fill="#8a8a8a"/>
<rect x="384.8" y="65.5" width="1" height="1" fill="#8a8a8a"/>
<rect x="384.8" y="69.9" width="1" height="1" fill="#8a8a8a"/>
<rect x="385" y="73.6" width="14.2" height="3" fill="#0a0a0a" rx="0.5" opacity=".55"/>
<rect x="385.6" y="74.3" width="13" height="1.6" fill="#bcbcbc" rx="0.3" opacity=".85"/>
<rect x="384.8" y="78.5" width="1" height="1" fill="#8a8a8a"/>
<rect x="384.8" y="101.5" width="1" height="1" fill="#8a8a8a"/>
<rect x="384.8" y="124.5" width="1" height="1" fill="#8a8a8a"/>
<rect x="384.8" y="147.5" width="1" height="1" fill="#8a8a8a"/>
<rect x="384.8" y="151.9" width="1" height="1" fill="#8a8a8a"/>
<rect x="384.8" y="146.4" width="1" height="1" fill="#8a8a8a"/>
<rect x="384.8" y="150.6" width="1" height="1" fill="#8a8a8a"/>
<rect x="389.7" y="154.2" width="4.8" height="3" fill="#0a0a0a" rx="0.5" opacity=".55"/>
<rect x="390.3" y="154.9" width="3.6" height="1.6" fill="#bcbcbc" rx="0.3" opacity=".85"/>
<rect x="383.6" y="158.3" width="16.9" height="16.8" fill="#1a1c1a"/>
<rect x="387.9" y="158.3" width="0.3" height="16.8" fill="#26302a"/>
<rect x="392.1" y="158.3" width="0.3" height="16.8" fill="#26302a"/>
<rect x="396.3" y="158.3" width="0.3" height="16.8" fill="#26302a"/>
<rect x="383.6" y="162.5" width="16.9" height="0.3" fill="#26302a"/>
<rect x="383.6" y="166.7" width="16.9" height="0.3" fill="#26302a"/>
<rect x="383.6" y="170.9" width="16.9" height="0.3" fill="#26302a"/>
<path transform="translate(383.6 158.3)" d="M0 8.6 L18 8.6" fill="none" stroke="#3aa860" stroke-width=".8"/>
<rect x="389.5" y="176.4" width="5.2" height="3" fill="#0a0a0a" rx="0.5" opacity=".55"/>
<rect x="390.1" y="177.1" width="4" height="1.6" fill="#bcbcbc" rx="0.3" opacity=".85"/>
<rect x="384" y="179.8" width="16.1" height="3.3" fill="#505050" rx="0.4"/>
<rect x="384.7" y="180.7" width="0.8" height="1.4" fill="#999"/>
<rect x="387.4" y="180.8" width="10" height="1.3" fill="#c8c8c8" rx="0.3" opacity=".45"/>
<rect x="398.2" y="180.8" width="0.8" height="1.2" fill="#999"/>
<rect x="384" y="184.1" width="16.1" height="3.3" fill="#505050" rx="0.4"/>
<rect x="384.7" y="185" width="0.8" height="1.4" fill="#999"/>
<rect x="387.4" y="185.1" width="10" height="1.3" fill="#c8c8c8" rx="0.3" opacity=".45"/>
<rect x="398.2" y="185.1" width="0.8" height="1.2" fill="#999"/>
<rect x="388.5" y="188.7" width="7.2" height="3" fill="#0a0a0a" rx="0.5" opacity=".55"/>
<rect x="389.1" y="189.4" width="6" height="1.6" fill="#bcbcbc" rx="0.3" opacity=".85"/>
<rect x="384" y="192" width="16.1" height="3.3" fill="#4a5a4c" rx="0.4"/>
<rect x="384.7" y="192.9" width="0.8" height="1.4" fill="#999"/>
<rect x="387.4" y="193" width="10" height="1.3" fill="#8ab890" rx="0.3" opacity=".45"/>
<rect x="398.2" y="193" width="0.8" height="1.2" fill="#999"/>
<rect x="384" y="198.5" width="16.1" height="1.7" fill="#4a4a4a"/>
<rect x="384" y="200.9" width="16.1" height="3.3" fill="#505050" rx="0.4"/>
<rect x="384.7" y="201.8" width="0.8" height="1.4" fill="#999"/>
<rect x="387.4" y="201.9" width="10" height="1.3" fill="#c8c8c8" rx="0.3" opacity=".45"/>
<rect x="398.2" y="201.9" width="0.8" height="1.2" fill="#999"/>
<circle cx="392.1" cy="211.4" r="3" fill="#161616" stroke="#b0b0b0" stroke-width="1"/>
<rect x="391.8" y="208.2" width="0.6" height="1.8" fill="#3ad048"/>
<rect x="383.8" y="217.2" width="16.5" height="2.8" fill="#080808"/>
<rect x="384.8" y="218.1" width="4" height="1" fill="#3ad048"/>
<rect x="393.3" y="218.1" width="5.5" height="1" fill="#3ad048"/>
<rect x="386.3" y="222.7" width="4.5" height="2.9" fill="#5e5e5e" rx="0.4"/>
<rect x="393.3" y="222.7" width="4.5" height="2.9" fill="#b8a0a0" rx="0.4"/>
<rect x="386.3" y="228.6" width="4.5" height="3.2" fill="#5e5e5e" rx="0.4"/>
<rect x="393.3" y="228.6" width="4.5" height="3.2" fill="#5e5e5e" rx="0.4"/>
<rect x="385.2" y="237" width="1.1" height="1" fill="#8a8a8a"/>
<rect x="392.8" y="237" width="1.1" height="1" fill="#8a8a8a"/>
<rect x="385.2" y="242.8" width="1.1" height="1" fill="#8a8a8a"/>
<rect x="392.8" y="242.8" width="1.1" height="1" fill="#8a8a8a"/>
<rect x="385.2" y="248.6" width="1.1" height="1" fill="#8a8a8a"/>
<rect x="392.8" y="248.6" width="1.1" height="1" fill="#8a8a8a"/>
<rect x="385.2" y="254.4" width="1.1" height="1" fill="#8a8a8a"/>
<rect x="392.8" y="254.4" width="1.1" height="1" fill="#8a8a8a"/>
<rect x="385.2" y="260.2" width="1.1" height="1" fill="#8a8a8a"/>
<rect x="392.8" y="260.2" width="1.1" height="1" fill="#8a8a8a"/>
<rect x="385.2" y="266" width="1.1" height="1" fill="#8a8a8a"/>
<rect x="392.8" y="266" width="1.1" height="1" fill="#8a8a8a"/>
<rect x="385.2" y="271.8" width="1.1" height="1" fill="#8a8a8a"/>
<rect x="392.8" y="271.8" width="1.1" height="1" fill="#8a8a8a"/>
<rect x="385.2" y="277.6" width="1.1" height="1" fill="#8a8a8a"/>
<rect x="392.8" y="277.6" width="1.1" height="1" fill="#8a8a8a"/>
<rect x="385.2" y="283.4" width="1.1" height="1" fill="#8a8a8a"/>
<rect x="392.8" y="283.4" width="1.1" height="1" fill="#8a8a8a"/>
<rect x="385.2" y="289.2" width="1.1" height="1" fill="#8a8a8a"/>
<rect x="392.8" y="289.2" width="1.1" height="1" fill="#8a8a8a"/>
<rect x="388.8" y="236" width="1.5" height="55" fill="#0a0a0a"/>
<rect x="387" y="247.2" width="5.2" height="7.2" fill="#d4d4d4" rx="0.6"/>
<rect x="387" y="250.6" width="5.2" height="0.6" fill="#555"/>
<rect x="396" y="236" width="2.6" height="55" fill="#12120c"/>
<rect x="398.6" y="236" width="0.7" height="55" fill="#45401c"/>
<rect x="383.6" y="293.8" width="16.9" height="3.2" fill="#080808"/>
<rect x="384.8" y="294.9" width="4" height="1" fill="#3ad048"/>
<rect x="392.8" y="294.9" width="6" height="1" fill="#3ad048"/>
<rect x="389.3" y="299" width="4.5" height="2.6" fill="#4e4e4e" rx="0.3"/>
<rect x="395" y="299" width="4" height="2.6" fill="#4e4e4e" rx="0.3"/>
<rect x="383.6" y="303" width="16.9" height="4.4" fill="#161616"/>
<text x="392.1" y="306.4" font-size="2.9" fill="#ececec" font-weight="bold" text-anchor="middle" textLength="11.4" lengthAdjust="spacingAndGlyphs">Verb 2</text>
<rect x="383.6" y="308.8" width="16.9" height="11.2" fill="#060606"/>
<rect x="384.8" y="310.2" width="4" height="1" fill="#3ad048"/>
<rect x="396.8" y="310.2" width="2" height="1" fill="#3ad048"/>
<rect x="384.8" y="313.4" width="4" height="1" fill="#3ad048"/>
<rect x="396.8" y="313.4" width="2" height="1" fill="#3ad048"/>
<rect x="384.8" y="316.6" width="4" height="1" fill="#3ad048"/>
<rect x="396.8" y="316.6" width="2" height="1" fill="#3ad048"/>
<rect x="401.4" y="30.8" width="0.9" height="314.5" fill="#0a0a0a"/>
<rect x="402.3" y="30.8" width="18.5" height="314.5" fill="#2a2a2a"/>
<rect x="402.3" y="31" width="18.5" height="5" fill="#1e1e1e"/>
<rect x="402.3" y="340.2" width="18.5" height="4.6" fill="#1c1c1c"/>
<rect x="403.7" y="47.3" width="15.6" height="3" fill="#0a0a0a" rx="0.5" opacity=".55"/>
<rect x="404.3" y="48" width="14.4" height="1.6" fill="#bcbcbc" rx="0.3" opacity=".85"/>
<rect x="403.5" y="51" width="16.1" height="3.3" fill="#505050" rx="0.4"/>
<rect x="404.2" y="51.9" width="0.8" height="1.4" fill="#999"/>
<rect x="406.9" y="52" width="10" height="1.3" fill="#c8c8c8" rx="0.3" opacity=".45"/>
<rect x="417.6" y="52" width="0.8" height="1.2" fill="#999"/>
<rect x="404.3" y="56.8" width="1" height="1" fill="#8a8a8a"/>
<rect x="404.3" y="61.2" width="1" height="1" fill="#8a8a8a"/>
<rect x="404.3" y="65.5" width="1" height="1" fill="#8a8a8a"/>
<rect x="404.3" y="69.9" width="1" height="1" fill="#8a8a8a"/>
<rect x="404.4" y="73.6" width="14.2" height="3" fill="#0a0a0a" rx="0.5" opacity=".55"/>
<rect x="405" y="74.3" width="13" height="1.6" fill="#bcbcbc" rx="0.3" opacity=".85"/>
<rect x="404.3" y="78.5" width="1" height="1" fill="#8a8a8a"/>
<rect x="404.3" y="101.5" width="1" height="1" fill="#8a8a8a"/>
<rect x="404.3" y="124.5" width="1" height="1" fill="#8a8a8a"/>
<rect x="404.3" y="147.5" width="1" height="1" fill="#8a8a8a"/>
<rect x="404.3" y="151.9" width="1" height="1" fill="#8a8a8a"/>
<rect x="404.3" y="146.4" width="1" height="1" fill="#8a8a8a"/>
<rect x="404.3" y="150.6" width="1" height="1" fill="#8a8a8a"/>
<rect x="409.1" y="154.2" width="4.8" height="3" fill="#0a0a0a" rx="0.5" opacity=".55"/>
<rect x="409.7" y="154.9" width="3.6" height="1.6" fill="#bcbcbc" rx="0.3" opacity=".85"/>
<rect x="403.1" y="158.3" width="16.9" height="16.8" fill="#1a1c1a"/>
<rect x="407.3" y="158.3" width="0.3" height="16.8" fill="#26302a"/>
<rect x="411.6" y="158.3" width="0.3" height="16.8" fill="#26302a"/>
<rect x="415.8" y="158.3" width="0.3" height="16.8" fill="#26302a"/>
<rect x="403.1" y="162.5" width="16.9" height="0.3" fill="#26302a"/>
<rect x="403.1" y="166.7" width="16.9" height="0.3" fill="#26302a"/>
<rect x="403.1" y="170.9" width="16.9" height="0.3" fill="#26302a"/>
<path transform="translate(403.1 158.3)" d="M0 8.6 L18 8.6" fill="none" stroke="#4a4a4a" stroke-width=".8"/>
<rect x="408.9" y="176.4" width="5.2" height="3" fill="#0a0a0a" rx="0.5" opacity=".55"/>
<rect x="409.5" y="177.1" width="4" height="1.6" fill="#bcbcbc" rx="0.3" opacity=".85"/>
<rect x="403.5" y="179.8" width="16.1" height="3.3" fill="#505050" rx="0.4"/>
<rect x="404.2" y="180.7" width="0.8" height="1.4" fill="#999"/>
<rect x="406.9" y="180.8" width="10" height="1.3" fill="#c8c8c8" rx="0.3" opacity=".45"/>
<rect x="417.6" y="180.8" width="0.8" height="1.2" fill="#999"/>
<rect x="403.5" y="184.1" width="16.1" height="3.3" fill="#505050" rx="0.4"/>
<rect x="404.2" y="185" width="0.8" height="1.4" fill="#999"/>
<rect x="406.9" y="185.1" width="10" height="1.3" fill="#c8c8c8" rx="0.3" opacity=".45"/>
<rect x="417.6" y="185.1" width="0.8" height="1.2" fill="#999"/>
<rect x="407.9" y="188.7" width="7.2" height="3" fill="#0a0a0a" rx="0.5" opacity=".55"/>
<rect x="408.5" y="189.4" width="6" height="1.6" fill="#bcbcbc" rx="0.3" opacity=".85"/>
<rect x="403.5" y="192" width="16.1" height="3.3" fill="#4a5a4c" rx="0.4"/>
<rect x="404.2" y="192.9" width="0.8" height="1.4" fill="#999"/>
<rect x="406.9" y="193" width="10" height="1.3" fill="#8ab890" rx="0.3" opacity=".45"/>
<rect x="417.6" y="193" width="0.8" height="1.2" fill="#999"/>
<rect x="403.5" y="198.5" width="16.1" height="1.7" fill="#4a4a4a"/>
<rect x="403.5" y="200.9" width="16.1" height="3.3" fill="#505050" rx="0.4"/>
<rect x="404.2" y="201.8" width="0.8" height="1.4" fill="#999"/>
<rect x="406.9" y="201.9" width="10" height="1.3" fill="#c8c8c8" rx="0.3" opacity=".45"/>
<rect x="417.6" y="201.9" width="0.8" height="1.2" fill="#999"/>
<circle cx="411.5" cy="211.4" r="3" fill="#161616" stroke="#b0b0b0" stroke-width="1"/>
<rect x="411.2" y="208.2" width="0.6" height="1.8" fill="#3ad048"/>
<rect x="403.3" y="217.2" width="16.5" height="2.8" fill="#080808"/>
<rect x="404.3" y="218.1" width="4" height="1" fill="#3ad048"/>
<rect x="412.8" y="218.1" width="5.5" height="1" fill="#3ad048"/>
<rect x="405.8" y="222.7" width="4.5" height="2.9" fill="#5e5e5e" rx="0.4"/>
<rect x="412.8" y="222.7" width="4.5" height="2.9" fill="#b8a0a0" rx="0.4"/>
<rect x="405.8" y="228.6" width="4.5" height="3.2" fill="#5e5e5e" rx="0.4"/>
<rect x="412.8" y="228.6" width="4.5" height="3.2" fill="#5e5e5e" rx="0.4"/>
<rect x="404.7" y="237" width="1.1" height="1" fill="#8a8a8a"/>
<rect x="412.3" y="237" width="1.1" height="1" fill="#8a8a8a"/>
<rect x="404.7" y="242.8" width="1.1" height="1" fill="#8a8a8a"/>
<rect x="412.3" y="242.8" width="1.1" height="1" fill="#8a8a8a"/>
<rect x="404.7" y="248.6" width="1.1" height="1" fill="#8a8a8a"/>
<rect x="412.3" y="248.6" width="1.1" height="1" fill="#8a8a8a"/>
<rect x="404.7" y="254.4" width="1.1" height="1" fill="#8a8a8a"/>
<rect x="412.3" y="254.4" width="1.1" height="1" fill="#8a8a8a"/>
<rect x="404.7" y="260.2" width="1.1" height="1" fill="#8a8a8a"/>
<rect x="412.3" y="260.2" width="1.1" height="1" fill="#8a8a8a"/>
<rect x="404.7" y="266" width="1.1" height="1" fill="#8a8a8a"/>
<rect x="412.3" y="266" width="1.1" height="1" fill="#8a8a8a"/>
<rect x="404.7" y="271.8" width="1.1" height="1" fill="#8a8a8a"/>
<rect x="412.3" y="271.8" width="1.1" height="1" fill="#8a8a8a"/>
<rect x="404.7" y="277.6" width="1.1" height="1" fill="#8a8a8a"/>
<rect x="412.3" y="277.6" width="1.1" height="1" fill="#8a8a8a"/>
<rect x="404.7" y="283.4" width="1.1" height="1" fill="#8a8a8a"/>
<rect x="412.3" y="283.4" width="1.1" height="1" fill="#8a8a8a"/>
<rect x="404.7" y="289.2" width="1.1" height="1" fill="#8a8a8a"/>
<rect x="412.3" y="289.2" width="1.1" height="1" fill="#8a8a8a"/>
<rect x="408.3" y="236" width="1.5" height="55" fill="#0a0a0a"/>
<rect x="406.5" y="245.6" width="5.2" height="7.2" fill="#d4d4d4" rx="0.6"/>
<rect x="406.5" y="249" width="5.2" height="0.6" fill="#555"/>
<rect x="415.5" y="236" width="2.6" height="55" fill="#12120c"/>
<rect x="418.1" y="236" width="0.7" height="55" fill="#45401c"/>
<rect x="403.1" y="293.8" width="16.9" height="3.2" fill="#080808"/>
<rect x="404.3" y="294.9" width="4" height="1" fill="#3ad048"/>
<rect x="412.3" y="294.9" width="6" height="1" fill="#3ad048"/>
<rect x="408.8" y="299" width="4.5" height="2.6" fill="#4e4e4e" rx="0.3"/>
<rect x="414.5" y="299" width="4" height="2.6" fill="#4e4e4e" rx="0.3"/>
<rect x="403.1" y="303" width="16.9" height="4.4" fill="#161616"/>
<text x="411.5" y="306.4" font-size="2.9" fill="#ececec" font-weight="bold" text-anchor="middle" textLength="13.3" lengthAdjust="spacingAndGlyphs">Click 1</text>
<rect x="403.1" y="308.8" width="16.9" height="11.2" fill="#060606"/>
<rect x="404.3" y="310.2" width="4" height="1" fill="#3ad048"/>
<rect x="416.3" y="310.2" width="2" height="1" fill="#3ad048"/>
<rect x="404.3" y="313.4" width="4" height="1" fill="#3ad048"/>
<rect x="416.3" y="313.4" width="2" height="1" fill="#3ad048"/>
<rect x="404.3" y="316.6" width="4" height="1" fill="#3ad048"/>
<rect x="416.3" y="316.6" width="2" height="1" fill="#3ad048"/>
<rect x="420.8" y="30.8" width="0.9" height="314.5" fill="#0a0a0a"/>
<rect x="421.7" y="30.8" width="18.5" height="314.5" fill="#33330f"/>
<rect x="421.7" y="31" width="18.5" height="5" fill="#cccc2c"/>
<rect x="421.7" y="340.2" width="18.5" height="4.6" fill="#cccc2c"/>
<rect x="427.4" y="36" width="7.2" height="3" fill="#0a0a0a" rx="0.5" opacity=".55"/>
<rect x="428" y="36.7" width="6" height="1.6" fill="#bcbcbc" rx="0.3" opacity=".85"/>
<rect x="423.2" y="39.9" width="7" height="3" fill="#3a3a3a" rx="0.4"/>
<rect x="431.2" y="39.9" width="7.5" height="3" fill="#3a3a3a" rx="0.4"/>
<text x="426.7" y="42.2" font-size="1.8" fill="#999" text-anchor="middle">PRE</text>
<text x="434.9" y="42.2" font-size="1.8" fill="#999" text-anchor="middle">MUTE</text>
<rect x="422.7" y="44.3" width="16.5" height="1.6" fill="#454545"/>
<rect x="423.2" y="47.3" width="15.6" height="3" fill="#0a0a0a" rx="0.5" opacity=".55"/>
<rect x="423.8" y="48" width="14.4" height="1.6" fill="#bcbcbc" rx="0.3" opacity=".85"/>
<rect x="423.7" y="52.4" width="1" height="1" fill="#8a8a8a"/>
<rect x="422.9" y="55.4" width="16.1" height="3.3" fill="#505050" rx="0.4"/>
<rect x="423.6" y="56.3" width="0.8" height="1.4" fill="#999"/>
<rect x="426.3" y="56.4" width="10" height="1.3" fill="#c8c8c8" rx="0.3" opacity=".45"/>
<rect x="437.1" y="56.4" width="0.8" height="1.2" fill="#999"/>
<rect x="422.9" y="59.8" width="16.1" height="3.3" fill="#505050" rx="0.4"/>
<rect x="423.6" y="60.7" width="0.8" height="1.4" fill="#999"/>
<rect x="426.3" y="60.8" width="10" height="1.3" fill="#c8c8c8" rx="0.3" opacity=".45"/>
<rect x="437.1" y="60.8" width="0.8" height="1.2" fill="#999"/>
<rect x="423.7" y="65.5" width="1" height="1" fill="#8a8a8a"/>
<rect x="423.7" y="69.9" width="1" height="1" fill="#8a8a8a"/>
<rect x="423.9" y="73.6" width="14.2" height="3" fill="#0a0a0a" rx="0.5" opacity=".55"/>
<rect x="424.5" y="74.3" width="13" height="1.6" fill="#bcbcbc" rx="0.3" opacity=".85"/>
<rect x="422.9" y="77.1" width="16.1" height="3.3" fill="#505050" rx="0.4"/>
<rect x="423.6" y="78" width="0.8" height="1.4" fill="#999"/>
<rect x="426.3" y="78.1" width="10" height="1.3" fill="#c8c8c8" rx="0.3" opacity=".45"/>
<rect x="437.1" y="78.1" width="0.8" height="1.2" fill="#999"/>
<rect x="424.3" y="82.2" width="1.8" height="13" fill="#0d0d0d"/>
<rect x="423.6" y="86.2" width="3.2" height="3.4" fill="#c0c0c0" rx="0.4"/>
<rect x="427.3" y="82.2" width="2.2" height="13" fill="#26260e"/>
<circle cx="434.5" cy="84.6" r="2.1" fill="#1a1a1a" stroke="#b4b4b4" stroke-width=".7"/>
<rect x="431.2" y="88" width="3" height="2.6" fill="#8e8e8e" rx="0.3"/>
<rect x="435.1" y="88" width="3" height="2.6" fill="#8e8e8e" rx="0.3"/>
<rect x="430.9" y="91.4" width="7.6" height="3" fill="#080808" rx="0.4"/>
<rect x="432.1" y="92.4" width="5.2" height="1" fill="#3ad048"/>
<rect x="422.9" y="100.1" width="16.1" height="3.3" fill="#505050" rx="0.4"/>
<rect x="423.6" y="101" width="0.8" height="1.4" fill="#999"/>
<rect x="426.3" y="101.1" width="10" height="1.3" fill="#c8c8c8" rx="0.3" opacity=".45"/>
<rect x="437.1" y="101.1" width="0.8" height="1.2" fill="#999"/>
<rect x="424.3" y="105.2" width="1.8" height="13" fill="#0d0d0d"/>
<rect x="423.6" y="109.2" width="3.2" height="3.4" fill="#c0c0c0" rx="0.4"/>
<rect x="427.3" y="105.2" width="2.2" height="13" fill="#26260e"/>
<circle cx="434.5" cy="107.6" r="2.1" fill="#1a1a1a" stroke="#b4b4b4" stroke-width=".7"/>
<rect x="431.2" y="111" width="3" height="2.6" fill="#8e8e8e" rx="0.3"/>
<rect x="435.1" y="111" width="3" height="2.6" fill="#8e8e8e" rx="0.3"/>
<rect x="430.9" y="114.4" width="7.6" height="3" fill="#080808" rx="0.4"/>
<rect x="432.1" y="115.4" width="5.2" height="1" fill="#3ad048"/>
<rect x="423.7" y="124.5" width="1" height="1" fill="#8a8a8a"/>
<rect x="423.7" y="147.5" width="1" height="1" fill="#8a8a8a"/>
<rect x="423.7" y="151.9" width="1" height="1" fill="#8a8a8a"/>
<rect x="423.7" y="146.4" width="1" height="1" fill="#8a8a8a"/>
<rect x="423.7" y="150.6" width="1" height="1" fill="#8a8a8a"/>
<rect x="428.6" y="154.2" width="4.8" height="3" fill="#0a0a0a" rx="0.5" opacity=".55"/>
<rect x="429.2" y="154.9" width="3.6" height="1.6" fill="#bcbcbc" rx="0.3" opacity=".85"/>
<rect x="422.5" y="158.3" width="16.9" height="16.8" fill="#1a1c1a"/>
<rect x="426.8" y="158.3" width="0.3" height="16.8" fill="#26302a"/>
<rect x="431" y="158.3" width="0.3" height="16.8" fill="#26302a"/>
<rect x="435.2" y="158.3" width="0.3" height="16.8" fill="#26302a"/>
<rect x="422.5" y="162.5" width="16.9" height="0.3" fill="#26302a"/>
<rect x="422.5" y="166.7" width="16.9" height="0.3" fill="#26302a"/>
<rect x="422.5" y="170.9" width="16.9" height="0.3" fill="#26302a"/>
<path transform="translate(422.5 158.3)" d="M1 17 C4 10 7 3.5 12 3 L18 3" fill="none" stroke="#3aa860" stroke-width=".8"/>
<rect x="428.4" y="176.4" width="5.2" height="3" fill="#0a0a0a" rx="0.5" opacity=".55"/>
<rect x="429" y="177.1" width="4" height="1.6" fill="#bcbcbc" rx="0.3" opacity=".85"/>
<rect x="422.9" y="179.8" width="16.1" height="3.3" fill="#505050" rx="0.4"/>
<rect x="423.6" y="180.7" width="0.8" height="1.4" fill="#999"/>
<rect x="426.3" y="180.8" width="10" height="1.3" fill="#c8c8c8" rx="0.3" opacity=".45"/>
<rect x="437.1" y="180.8" width="0.8" height="1.2" fill="#999"/>
<rect x="422.9" y="184.1" width="16.1" height="3.3" fill="#505050" rx="0.4"/>
<rect x="423.6" y="185" width="0.8" height="1.4" fill="#999"/>
<rect x="426.3" y="185.1" width="10" height="1.3" fill="#c8c8c8" rx="0.3" opacity=".45"/>
<rect x="437.1" y="185.1" width="0.8" height="1.2" fill="#999"/>
<rect x="427.4" y="188.7" width="7.2" height="3" fill="#0a0a0a" rx="0.5" opacity=".55"/>
<rect x="428" y="189.4" width="6" height="1.6" fill="#bcbcbc" rx="0.3" opacity=".85"/>
<rect x="422.9" y="192" width="16.1" height="3.3" fill="#4a5a4c" rx="0.4"/>
<rect x="423.6" y="192.9" width="0.8" height="1.4" fill="#999"/>
<rect x="426.3" y="193" width="10" height="1.3" fill="#8ab890" rx="0.3" opacity=".45"/>
<rect x="437.1" y="193" width="0.8" height="1.2" fill="#999"/>
<rect x="422.9" y="198.5" width="16.1" height="1.7" fill="#4a4a4a"/>
<rect x="422.9" y="200.9" width="16.1" height="3.3" fill="#505050" rx="0.4"/>
<rect x="423.6" y="201.8" width="0.8" height="1.4" fill="#999"/>
<rect x="426.3" y="201.9" width="10" height="1.3" fill="#c8c8c8" rx="0.3" opacity=".45"/>
<rect x="437.1" y="201.9" width="0.8" height="1.2" fill="#999"/>
<circle cx="431" cy="211.4" r="3" fill="#161616" stroke="#b0b0b0" stroke-width="1"/>
<rect x="430.7" y="208.2" width="0.6" height="1.8" fill="#3ad048"/>
<rect x="422.7" y="217.2" width="16.5" height="2.8" fill="#080808"/>
<rect x="423.7" y="218.1" width="4" height="1" fill="#3ad048"/>
<rect x="432.2" y="218.1" width="5.5" height="1" fill="#3ad048"/>
<rect x="425.2" y="222.7" width="4.5" height="2.9" fill="#5e5e5e" rx="0.4"/>
<rect x="432.2" y="222.7" width="4.5" height="2.9" fill="#b8a0a0" rx="0.4"/>
<rect x="425.2" y="228.6" width="4.5" height="3.2" fill="#5e5e5e" rx="0.4"/>
<rect x="432.2" y="228.6" width="4.5" height="3.2" fill="#5e5e5e" rx="0.4"/>
<rect x="424.1" y="237" width="1.1" height="1" fill="#8a8a8a"/>
<rect x="431.7" y="237" width="1.1" height="1" fill="#8a8a8a"/>
<rect x="424.1" y="242.8" width="1.1" height="1" fill="#8a8a8a"/>
<rect x="431.7" y="242.8" width="1.1" height="1" fill="#8a8a8a"/>
<rect x="424.1" y="248.6" width="1.1" height="1" fill="#8a8a8a"/>
<rect x="431.7" y="248.6" width="1.1" height="1" fill="#8a8a8a"/>
<rect x="424.1" y="254.4" width="1.1" height="1" fill="#8a8a8a"/>
<rect x="431.7" y="254.4" width="1.1" height="1" fill="#8a8a8a"/>
<rect x="424.1" y="260.2" width="1.1" height="1" fill="#8a8a8a"/>
<rect x="431.7" y="260.2" width="1.1" height="1" fill="#8a8a8a"/>
<rect x="424.1" y="266" width="1.1" height="1" fill="#8a8a8a"/>
<rect x="431.7" y="266" width="1.1" height="1" fill="#8a8a8a"/>
<rect x="424.1" y="271.8" width="1.1" height="1" fill="#8a8a8a"/>
<rect x="431.7" y="271.8" width="1.1" height="1" fill="#8a8a8a"/>
<rect x="424.1" y="277.6" width="1.1" height="1" fill="#8a8a8a"/>
<rect x="431.7" y="277.6" width="1.1" height="1" fill="#8a8a8a"/>
<rect x="424.1" y="283.4" width="1.1" height="1" fill="#8a8a8a"/>
<rect x="431.7" y="283.4" width="1.1" height="1" fill="#8a8a8a"/>
<rect x="424.1" y="289.2" width="1.1" height="1" fill="#8a8a8a"/>
<rect x="431.7" y="289.2" width="1.1" height="1" fill="#8a8a8a"/>
<rect x="427.7" y="236" width="1.5" height="55" fill="#0a0a0a"/>
<rect x="425.9" y="248.3" width="5.2" height="7.2" fill="#d4d4d4" rx="0.6"/>
<rect x="425.9" y="251.7" width="5.2" height="0.6" fill="#555"/>
<rect x="434.9" y="236" width="2.6" height="55" fill="#12120c"/>
<rect x="437.5" y="236" width="0.7" height="55" fill="#45401c"/>
<rect x="434.9" y="269" width="2.6" height="22" fill="#3cc83c"/>
<rect x="434.9" y="236.5" width="2.6" height="4" fill="#c8902a"/>
<rect x="422.5" y="293.8" width="16.9" height="3.2" fill="#080808"/>
<rect x="423.7" y="294.9" width="4" height="1" fill="#3ad048"/>
<rect x="431.7" y="294.9" width="6" height="1" fill="#3ad048"/>
<rect x="428.2" y="299" width="4.5" height="2.6" fill="#4e4e4e" rx="0.3"/>
<rect x="433.9" y="299" width="4" height="2.6" fill="#4e4e4e" rx="0.3"/>
<rect x="422.5" y="303" width="16.9" height="4.4" fill="#161616"/>
<text x="431" y="306.4" font-size="2.9" fill="#ececec" font-weight="bold" text-anchor="middle" textLength="16.1" lengthAdjust="spacingAndGlyphs">Lead Vocal</text>
<rect x="422.5" y="308.8" width="16.9" height="11.2" fill="#060606"/>
<rect x="423.7" y="310.2" width="4" height="1" fill="#3ad048"/>
<rect x="435.7" y="310.2" width="2" height="1" fill="#3ad048"/>
<rect x="423.7" y="313.4" width="4" height="1" fill="#3ad048"/>
<rect x="435.7" y="313.4" width="2" height="1" fill="#3ad048"/>
<rect x="423.7" y="316.6" width="4" height="1" fill="#3ad048"/>
<rect x="435.7" y="316.6" width="2" height="1" fill="#3ad048"/>
<rect x="440.3" y="30.8" width="0.9" height="314.5" fill="#0a0a0a"/>
<rect x="441.2" y="30.8" width="18.5" height="314.5" fill="#464646"/>
<rect x="441.2" y="31" width="18.5" height="5" fill="#1e1e1e"/>
<rect x="441.2" y="340.2" width="18.5" height="4.6" fill="#1c1c1c"/>
<rect x="442.6" y="47.3" width="15.6" height="3" fill="#0a0a0a" rx="0.5" opacity=".55"/>
<rect x="443.2" y="48" width="14.4" height="1.6" fill="#bcbcbc" rx="0.3" opacity=".85"/>
<rect x="442.4" y="51" width="16.1" height="3.3" fill="#505050" rx="0.4"/>
<rect x="443.1" y="51.9" width="0.8" height="1.4" fill="#999"/>
<rect x="445.8" y="52" width="10" height="1.3" fill="#c8c8c8" rx="0.3" opacity=".45"/>
<rect x="456.5" y="52" width="0.8" height="1.2" fill="#999"/>
<rect x="443.2" y="56.8" width="1" height="1" fill="#8a8a8a"/>
<rect x="443.2" y="61.2" width="1" height="1" fill="#8a8a8a"/>
<rect x="443.2" y="65.5" width="1" height="1" fill="#8a8a8a"/>
<rect x="443.2" y="69.9" width="1" height="1" fill="#8a8a8a"/>
<rect x="443.3" y="73.6" width="14.2" height="3" fill="#0a0a0a" rx="0.5" opacity=".55"/>
<rect x="443.9" y="74.3" width="13" height="1.6" fill="#bcbcbc" rx="0.3" opacity=".85"/>
<rect x="443.2" y="78.5" width="1" height="1" fill="#8a8a8a"/>
<rect x="443.2" y="101.5" width="1" height="1" fill="#8a8a8a"/>
<rect x="443.2" y="124.5" width="1" height="1" fill="#8a8a8a"/>
<rect x="443.2" y="147.5" width="1" height="1" fill="#8a8a8a"/>
<rect x="443.2" y="151.9" width="1" height="1" fill="#8a8a8a"/>
<rect x="443.2" y="146.4" width="1" height="1" fill="#8a8a8a"/>
<rect x="443.2" y="150.6" width="1" height="1" fill="#8a8a8a"/>
<rect x="448" y="154.2" width="4.8" height="3" fill="#0a0a0a" rx="0.5" opacity=".55"/>
<rect x="448.6" y="154.9" width="3.6" height="1.6" fill="#bcbcbc" rx="0.3" opacity=".85"/>
<rect x="442" y="158.3" width="16.9" height="16.8" fill="#1a1c1a"/>
<rect x="446.2" y="158.3" width="0.3" height="16.8" fill="#26302a"/>
<rect x="450.4" y="158.3" width="0.3" height="16.8" fill="#26302a"/>
<rect x="454.7" y="158.3" width="0.3" height="16.8" fill="#26302a"/>
<rect x="442" y="162.5" width="16.9" height="0.3" fill="#26302a"/>
<rect x="442" y="166.7" width="16.9" height="0.3" fill="#26302a"/>
<rect x="442" y="170.9" width="16.9" height="0.3" fill="#26302a"/>
<path transform="translate(442 158.3)" d="M0 8.6 L18 8.6" fill="none" stroke="#4a4a4a" stroke-width=".8"/>
<rect x="447.8" y="176.4" width="5.2" height="3" fill="#0a0a0a" rx="0.5" opacity=".55"/>
<rect x="448.4" y="177.1" width="4" height="1.6" fill="#bcbcbc" rx="0.3" opacity=".85"/>
<rect x="442.4" y="179.8" width="16.1" height="3.3" fill="#505050" rx="0.4"/>
<rect x="443.1" y="180.7" width="0.8" height="1.4" fill="#999"/>
<rect x="445.8" y="180.8" width="10" height="1.3" fill="#c8c8c8" rx="0.3" opacity=".45"/>
<rect x="456.5" y="180.8" width="0.8" height="1.2" fill="#999"/>
<rect x="442.4" y="184.1" width="16.1" height="3.3" fill="#505050" rx="0.4"/>
<rect x="443.1" y="185" width="0.8" height="1.4" fill="#999"/>
<rect x="445.8" y="185.1" width="10" height="1.3" fill="#c8c8c8" rx="0.3" opacity=".45"/>
<rect x="456.5" y="185.1" width="0.8" height="1.2" fill="#999"/>
<rect x="446.8" y="188.7" width="7.2" height="3" fill="#0a0a0a" rx="0.5" opacity=".55"/>
<rect x="447.4" y="189.4" width="6" height="1.6" fill="#bcbcbc" rx="0.3" opacity=".85"/>
<rect x="442.4" y="192" width="16.1" height="3.3" fill="#4a5a4c" rx="0.4"/>
<rect x="443.1" y="192.9" width="0.8" height="1.4" fill="#999"/>
<rect x="445.8" y="193" width="10" height="1.3" fill="#8ab890" rx="0.3" opacity=".45"/>
<rect x="456.5" y="193" width="0.8" height="1.2" fill="#999"/>
<rect x="442.4" y="198.5" width="16.1" height="1.7" fill="#4a4a4a"/>
<rect x="442.4" y="200.9" width="16.1" height="3.3" fill="#505050" rx="0.4"/>
<rect x="443.1" y="201.8" width="0.8" height="1.4" fill="#999"/>
<rect x="445.8" y="201.9" width="10" height="1.3" fill="#c8c8c8" rx="0.3" opacity=".45"/>
<rect x="456.5" y="201.9" width="0.8" height="1.2" fill="#999"/>
<circle cx="450.4" cy="211.4" r="3" fill="#161616" stroke="#b0b0b0" stroke-width="1"/>
<rect x="450.1" y="208.2" width="0.6" height="1.8" fill="#3ad048"/>
<rect x="442.2" y="217.2" width="16.5" height="2.8" fill="#080808"/>
<rect x="443.2" y="218.1" width="4" height="1" fill="#3ad048"/>
<rect x="451.7" y="218.1" width="5.5" height="1" fill="#3ad048"/>
<rect x="444.7" y="222.7" width="4.5" height="2.9" fill="#5e5e5e" rx="0.4"/>
<rect x="451.7" y="222.7" width="4.5" height="2.9" fill="#b8a0a0" rx="0.4"/>
<rect x="444.7" y="228.6" width="4.5" height="3.2" fill="#5e5e5e" rx="0.4"/>
<rect x="451.7" y="228.6" width="4.5" height="3.2" fill="#5e5e5e" rx="0.4"/>
<rect x="443.6" y="237" width="1.1" height="1" fill="#8a8a8a"/>
<rect x="451.2" y="237" width="1.1" height="1" fill="#8a8a8a"/>
<rect x="443.6" y="242.8" width="1.1" height="1" fill="#8a8a8a"/>
<rect x="451.2" y="242.8" width="1.1" height="1" fill="#8a8a8a"/>
<rect x="443.6" y="248.6" width="1.1" height="1" fill="#8a8a8a"/>
<rect x="451.2" y="248.6" width="1.1" height="1" fill="#8a8a8a"/>
<rect x="443.6" y="254.4" width="1.1" height="1" fill="#8a8a8a"/>
<rect x="451.2" y="254.4" width="1.1" height="1" fill="#8a8a8a"/>
<rect x="443.6" y="260.2" width="1.1" height="1" fill="#8a8a8a"/>
<rect x="451.2" y="260.2" width="1.1" height="1" fill="#8a8a8a"/>
<rect x="443.6" y="266" width="1.1" height="1" fill="#8a8a8a"/>
<rect x="451.2" y="266" width="1.1" height="1" fill="#8a8a8a"/>
<rect x="443.6" y="271.8" width="1.1" height="1" fill="#8a8a8a"/>
<rect x="451.2" y="271.8" width="1.1" height="1" fill="#8a8a8a"/>
<rect x="443.6" y="277.6" width="1.1" height="1" fill="#8a8a8a"/>
<rect x="451.2" y="277.6" width="1.1" height="1" fill="#8a8a8a"/>
<rect x="443.6" y="283.4" width="1.1" height="1" fill="#8a8a8a"/>
<rect x="451.2" y="283.4" width="1.1" height="1" fill="#8a8a8a"/>
<rect x="443.6" y="289.2" width="1.1" height="1" fill="#8a8a8a"/>
<rect x="451.2" y="289.2" width="1.1" height="1" fill="#8a8a8a"/>
<rect x="447.2" y="236" width="1.5" height="55" fill="#0a0a0a"/>
<rect x="445.4" y="243.7" width="5.2" height="7.2" fill="#d4d4d4" rx="0.6"/>
<rect x="445.4" y="247.1" width="5.2" height="0.6" fill="#555"/>
<rect x="454.4" y="236" width="2.6" height="55" fill="#12120c"/>
<rect x="457" y="236" width="0.7" height="55" fill="#45401c"/>
<rect x="454.4" y="253" width="2.6" height="38" fill="#3cc83c"/>
<rect x="442" y="293.8" width="16.9" height="3.2" fill="#080808"/>
<rect x="443.2" y="294.9" width="4" height="1" fill="#3ad048"/>
<rect x="451.2" y="294.9" width="6" height="1" fill="#3ad048"/>
<rect x="447.7" y="299" width="4.5" height="2.6" fill="#4e4e4e" rx="0.3"/>
<rect x="453.4" y="299" width="4" height="2.6" fill="#4e4e4e" rx="0.3"/>
<rect x="442" y="303" width="16.9" height="4.4" fill="#161616"/>
<text x="450.4" y="306.4" font-size="2.9" fill="#ececec" font-weight="bold" text-anchor="middle" textLength="9.5" lengthAdjust="spacingAndGlyphs">Harma</text>
<rect x="442" y="308.8" width="16.9" height="11.2" fill="#060606"/>
<rect x="443.2" y="310.2" width="4" height="1" fill="#3ad048"/>
<rect x="455.2" y="310.2" width="2" height="1" fill="#3ad048"/>
<rect x="443.2" y="313.4" width="4" height="1" fill="#3ad048"/>
<rect x="455.2" y="313.4" width="2" height="1" fill="#3ad048"/>
<rect x="443.2" y="316.6" width="4" height="1" fill="#3ad048"/>
<rect x="455.2" y="316.6" width="2" height="1" fill="#3ad048"/>
<rect x="459.7" y="30.8" width="0.9" height="314.5" fill="#0a0a0a"/>
<rect x="460.6" y="30.8" width="18.5" height="314.5" fill="#152439"/>
<rect x="460.6" y="31" width="18.5" height="5" fill="#3a8ee8"/>
<rect x="460.6" y="340.2" width="18.5" height="4.6" fill="#3a8ee8"/>
<rect x="466.3" y="36" width="7.2" height="3" fill="#0a0a0a" rx="0.5" opacity=".55"/>
<rect x="466.9" y="36.7" width="6" height="1.6" fill="#bcbcbc" rx="0.3" opacity=".85"/>
<rect x="462.1" y="39.9" width="7" height="3" fill="#3a3a3a" rx="0.4"/>
<rect x="470.1" y="39.9" width="7.5" height="3" fill="#3a3a3a" rx="0.4"/>
<text x="465.6" y="42.2" font-size="1.8" fill="#999" text-anchor="middle">PRE</text>
<text x="473.8" y="42.2" font-size="1.8" fill="#999" text-anchor="middle">MUTE</text>
<rect x="461.6" y="44.3" width="16.5" height="1.6" fill="#454545"/>
<rect x="462.1" y="47.3" width="15.6" height="3" fill="#0a0a0a" rx="0.5" opacity=".55"/>
<rect x="462.7" y="48" width="14.4" height="1.6" fill="#bcbcbc" rx="0.3" opacity=".85"/>
<rect x="461.8" y="51" width="16.1" height="3.3" fill="#505050" rx="0.4"/>
<rect x="462.5" y="51.9" width="0.8" height="1.4" fill="#999"/>
<rect x="465.2" y="52" width="10" height="1.3" fill="#c8c8c8" rx="0.3" opacity=".45"/>
<rect x="475.9" y="52" width="0.8" height="1.2" fill="#999"/>
<rect x="461.8" y="55.4" width="16.1" height="3.3" fill="#505050" rx="0.4"/>
<rect x="462.5" y="56.3" width="0.8" height="1.4" fill="#999"/>
<rect x="465.2" y="56.4" width="10" height="1.3" fill="#c8c8c8" rx="0.3" opacity=".45"/>
<rect x="475.9" y="56.4" width="0.8" height="1.2" fill="#999"/>
<rect x="462.6" y="61.2" width="1" height="1" fill="#8a8a8a"/>
<rect x="462.6" y="65.5" width="1" height="1" fill="#8a8a8a"/>
<rect x="462.6" y="69.9" width="1" height="1" fill="#8a8a8a"/>
<rect x="462.8" y="73.6" width="14.2" height="3" fill="#0a0a0a" rx="0.5" opacity=".55"/>
<rect x="463.4" y="74.3" width="13" height="1.6" fill="#bcbcbc" rx="0.3" opacity=".85"/>
<rect x="461.8" y="77.1" width="16.1" height="3.3" fill="#505050" rx="0.4"/>
<rect x="462.5" y="78" width="0.8" height="1.4" fill="#999"/>
<rect x="465.2" y="78.1" width="10" height="1.3" fill="#c8c8c8" rx="0.3" opacity=".45"/>
<rect x="475.9" y="78.1" width="0.8" height="1.2" fill="#999"/>
<rect x="463.2" y="82.2" width="1.8" height="13" fill="#0d0d0d"/>
<rect x="462.5" y="86.2" width="3.2" height="3.4" fill="#c0c0c0" rx="0.4"/>
<rect x="466.2" y="82.2" width="2.2" height="13" fill="#26260e"/>
<circle cx="473.4" cy="84.6" r="2.1" fill="#1a1a1a" stroke="#b4b4b4" stroke-width=".7"/>
<rect x="470.1" y="88" width="3" height="2.6" fill="#8e8e8e" rx="0.3"/>
<rect x="474" y="88" width="3" height="2.6" fill="#8e8e8e" rx="0.3"/>
<rect x="469.8" y="91.4" width="7.6" height="3" fill="#080808" rx="0.4"/>
<rect x="471" y="92.4" width="5.2" height="1" fill="#3ad048"/>
<rect x="461.8" y="100.1" width="16.1" height="3.3" fill="#505050" rx="0.4"/>
<rect x="462.5" y="101" width="0.8" height="1.4" fill="#999"/>
<rect x="465.2" y="101.1" width="10" height="1.3" fill="#c8c8c8" rx="0.3" opacity=".45"/>
<rect x="475.9" y="101.1" width="0.8" height="1.2" fill="#999"/>
<rect x="463.2" y="105.2" width="1.8" height="13" fill="#0d0d0d"/>
<rect x="462.5" y="109.2" width="3.2" height="3.4" fill="#c0c0c0" rx="0.4"/>
<rect x="466.2" y="105.2" width="2.2" height="13" fill="#26260e"/>
<circle cx="473.4" cy="107.6" r="2.1" fill="#1a1a1a" stroke="#b4b4b4" stroke-width=".7"/>
<rect x="470.1" y="111" width="3" height="2.6" fill="#8e8e8e" rx="0.3"/>
<rect x="474" y="111" width="3" height="2.6" fill="#8e8e8e" rx="0.3"/>
<rect x="469.8" y="114.4" width="7.6" height="3" fill="#080808" rx="0.4"/>
<rect x="471" y="115.4" width="5.2" height="1" fill="#3ad048"/>
<rect x="461.8" y="123.1" width="16.1" height="3.3" fill="#505050" rx="0.4"/>
<rect x="462.5" y="124" width="0.8" height="1.4" fill="#999"/>
<rect x="465.2" y="124.1" width="10" height="1.3" fill="#c8c8c8" rx="0.3" opacity=".45"/>
<rect x="475.9" y="124.1" width="0.8" height="1.2" fill="#999"/>
<rect x="463.2" y="128.2" width="1.8" height="13" fill="#0d0d0d"/>
<rect x="462.5" y="132.2" width="3.2" height="3.4" fill="#c0c0c0" rx="0.4"/>
<rect x="466.2" y="128.2" width="2.2" height="13" fill="#26260e"/>
<circle cx="473.4" cy="130.6" r="2.1" fill="#1a1a1a" stroke="#b4b4b4" stroke-width=".7"/>
<rect x="470.1" y="134" width="3" height="2.6" fill="#8e8e8e" rx="0.3"/>
<rect x="474" y="134" width="3" height="2.6" fill="#8e8e8e" rx="0.3"/>
<rect x="469.8" y="137.4" width="7.6" height="3" fill="#080808" rx="0.4"/>
<rect x="471" y="138.4" width="5.2" height="1" fill="#3ad048"/>
<rect x="462.6" y="147.5" width="1" height="1" fill="#8a8a8a"/>
<rect x="462.6" y="151.9" width="1" height="1" fill="#8a8a8a"/>
<rect x="462.6" y="146.4" width="1" height="1" fill="#8a8a8a"/>
<rect x="462.6" y="150.6" width="1" height="1" fill="#8a8a8a"/>
<rect x="467.5" y="154.2" width="4.8" height="3" fill="#0a0a0a" rx="0.5" opacity=".55"/>
<rect x="468.1" y="154.9" width="3.6" height="1.6" fill="#bcbcbc" rx="0.3" opacity=".85"/>
<rect x="461.4" y="158.3" width="16.9" height="16.8" fill="#1a1c1a"/>
<rect x="465.6" y="158.3" width="0.3" height="16.8" fill="#26302a"/>
<rect x="469.9" y="158.3" width="0.3" height="16.8" fill="#26302a"/>
<rect x="474.1" y="158.3" width="0.3" height="16.8" fill="#26302a"/>
<rect x="461.4" y="162.5" width="16.9" height="0.3" fill="#26302a"/>
<rect x="461.4" y="166.7" width="16.9" height="0.3" fill="#26302a"/>
<rect x="461.4" y="170.9" width="16.9" height="0.3" fill="#26302a"/>
<path transform="translate(461.4 158.3)" d="M1 17 C3 9 4 5 7 5.5 S10 7 12 5.5 S15 5 16 7 L17 17" fill="none" stroke="#3aa860" stroke-width=".8"/>
<rect x="467.3" y="176.4" width="5.2" height="3" fill="#0a0a0a" rx="0.5" opacity=".55"/>
<rect x="467.9" y="177.1" width="4" height="1.6" fill="#bcbcbc" rx="0.3" opacity=".85"/>
<rect x="461.8" y="179.8" width="16.1" height="3.3" fill="#505050" rx="0.4"/>
<rect x="462.5" y="180.7" width="0.8" height="1.4" fill="#999"/>
<rect x="465.2" y="180.8" width="10" height="1.3" fill="#c8c8c8" rx="0.3" opacity=".45"/>
<rect x="475.9" y="180.8" width="0.8" height="1.2" fill="#999"/>
<rect x="461.8" y="184.1" width="16.1" height="3.3" fill="#505050" rx="0.4"/>
<rect x="462.5" y="185" width="0.8" height="1.4" fill="#999"/>
<rect x="465.2" y="185.1" width="10" height="1.3" fill="#c8c8c8" rx="0.3" opacity=".45"/>
<rect x="475.9" y="185.1" width="0.8" height="1.2" fill="#999"/>
<rect x="466.3" y="188.7" width="7.2" height="3" fill="#0a0a0a" rx="0.5" opacity=".55"/>
<rect x="466.9" y="189.4" width="6" height="1.6" fill="#bcbcbc" rx="0.3" opacity=".85"/>
<rect x="461.8" y="192" width="16.1" height="3.3" fill="#4a5a4c" rx="0.4"/>
<rect x="462.5" y="192.9" width="0.8" height="1.4" fill="#999"/>
<rect x="465.2" y="193" width="10" height="1.3" fill="#8ab890" rx="0.3" opacity=".45"/>
<rect x="475.9" y="193" width="0.8" height="1.2" fill="#999"/>
<rect x="461.8" y="198.5" width="16.1" height="1.7" fill="#4a4a4a"/>
<rect x="461.8" y="200.9" width="16.1" height="3.3" fill="#505050" rx="0.4"/>
<rect x="462.5" y="201.8" width="0.8" height="1.4" fill="#999"/>
<rect x="465.2" y="201.9" width="10" height="1.3" fill="#c8c8c8" rx="0.3" opacity=".45"/>
<rect x="475.9" y="201.9" width="0.8" height="1.2" fill="#999"/>
<circle cx="469.9" cy="211.4" r="3" fill="#161616" stroke="#b0b0b0" stroke-width="1"/>
<rect x="469.6" y="208.2" width="0.6" height="1.8" fill="#3ad048"/>
<rect x="461.6" y="217.2" width="16.5" height="2.8" fill="#080808"/>
<rect x="462.6" y="218.1" width="4" height="1" fill="#3ad048"/>
<rect x="471.1" y="218.1" width="5.5" height="1" fill="#3ad048"/>
<rect x="464.1" y="222.7" width="4.5" height="2.9" fill="#5e5e5e" rx="0.4"/>
<rect x="471.1" y="222.7" width="4.5" height="2.9" fill="#b8a0a0" rx="0.4"/>
<rect x="464.1" y="228.6" width="4.5" height="3.2" fill="#5e5e5e" rx="0.4"/>
<rect x="471.1" y="228.6" width="4.5" height="3.2" fill="#5e5e5e" rx="0.4"/>
<rect x="463" y="237" width="1.1" height="1" fill="#8a8a8a"/>
<rect x="470.6" y="237" width="1.1" height="1" fill="#8a8a8a"/>
<rect x="463" y="242.8" width="1.1" height="1" fill="#8a8a8a"/>
<rect x="470.6" y="242.8" width="1.1" height="1" fill="#8a8a8a"/>
<rect x="463" y="248.6" width="1.1" height="1" fill="#8a8a8a"/>
<rect x="470.6" y="248.6" width="1.1" height="1" fill="#8a8a8a"/>
<rect x="463" y="254.4" width="1.1" height="1" fill="#8a8a8a"/>
<rect x="470.6" y="254.4" width="1.1" height="1" fill="#8a8a8a"/>
<rect x="463" y="260.2" width="1.1" height="1" fill="#8a8a8a"/>
<rect x="470.6" y="260.2" width="1.1" height="1" fill="#8a8a8a"/>
<rect x="463" y="266" width="1.1" height="1" fill="#8a8a8a"/>
<rect x="470.6" y="266" width="1.1" height="1" fill="#8a8a8a"/>
<rect x="463" y="271.8" width="1.1" height="1" fill="#8a8a8a"/>
<rect x="470.6" y="271.8" width="1.1" height="1" fill="#8a8a8a"/>
<rect x="463" y="277.6" width="1.1" height="1" fill="#8a8a8a"/>
<rect x="470.6" y="277.6" width="1.1" height="1" fill="#8a8a8a"/>
<rect x="463" y="283.4" width="1.1" height="1" fill="#8a8a8a"/>
<rect x="470.6" y="283.4" width="1.1" height="1" fill="#8a8a8a"/>
<rect x="463" y="289.2" width="1.1" height="1" fill="#8a8a8a"/>
<rect x="470.6" y="289.2" width="1.1" height="1" fill="#8a8a8a"/>
<rect x="466.6" y="236" width="1.5" height="55" fill="#0a0a0a"/>
<rect x="464.8" y="249.9" width="5.2" height="7.2" fill="#d4d4d4" rx="0.6"/>
<rect x="464.8" y="253.3" width="5.2" height="0.6" fill="#555"/>
<rect x="473.8" y="236" width="2.6" height="55" fill="#12120c"/>
<rect x="476.4" y="236" width="0.7" height="55" fill="#45401c"/>
<rect x="461.4" y="293.8" width="16.9" height="3.2" fill="#080808"/>
<rect x="462.6" y="294.9" width="4" height="1" fill="#3ad048"/>
<rect x="470.6" y="294.9" width="6" height="1" fill="#3ad048"/>
<rect x="467.1" y="299" width="4.5" height="2.6" fill="#4e4e4e" rx="0.3"/>
<rect x="472.8" y="299" width="4" height="2.6" fill="#4e4e4e" rx="0.3"/>
<rect x="461.4" y="303" width="16.9" height="4.4" fill="#161616"/>
<text x="469.9" y="306.4" font-size="2.9" fill="#ececec" font-weight="bold" text-anchor="middle" textLength="16.1" lengthAdjust="spacingAndGlyphs">Don't Walk</text>
<rect x="461.4" y="308.8" width="16.9" height="11.2" fill="#060606"/>
<rect x="462.6" y="310.2" width="4" height="1" fill="#3ad048"/>
<rect x="474.6" y="310.2" width="2" height="1" fill="#3ad048"/>
<rect x="462.6" y="313.4" width="4" height="1" fill="#3ad048"/>
<rect x="474.6" y="313.4" width="2" height="1" fill="#3ad048"/>
<rect x="462.6" y="316.6" width="4" height="1" fill="#3ad048"/>
<rect x="474.6" y="316.6" width="2" height="1" fill="#3ad048"/>
<rect x="479.1" y="30.8" width="0.9" height="314.5" fill="#0a0a0a"/>
<rect x="480" y="30.8" width="18.5" height="314.5" fill="#152439"/>
<rect x="480" y="31" width="18.5" height="5" fill="#3a8ee8"/>
<rect x="480" y="340.2" width="18.5" height="4.6" fill="#3a8ee8"/>
<rect x="485.7" y="36" width="7.2" height="3" fill="#0a0a0a" rx="0.5" opacity=".55"/>
<rect x="486.3" y="36.7" width="6" height="1.6" fill="#bcbcbc" rx="0.3" opacity=".85"/>
<rect x="481.5" y="39.9" width="7" height="3" fill="#3a3a3a" rx="0.4"/>
<rect x="489.5" y="39.9" width="7.5" height="3" fill="#3a3a3a" rx="0.4"/>
<text x="485" y="42.2" font-size="1.8" fill="#999" text-anchor="middle">PRE</text>
<text x="493.2" y="42.2" font-size="1.8" fill="#999" text-anchor="middle">MUTE</text>
<rect x="481" y="44.3" width="16.5" height="1.6" fill="#454545"/>
<rect x="481.5" y="47.3" width="15.6" height="3" fill="#0a0a0a" rx="0.5" opacity=".55"/>
<rect x="482.1" y="48" width="14.4" height="1.6" fill="#bcbcbc" rx="0.3" opacity=".85"/>
<rect x="481.2" y="51" width="16.1" height="3.3" fill="#505050" rx="0.4"/>
<rect x="481.9" y="51.9" width="0.8" height="1.4" fill="#999"/>
<rect x="484.6" y="52" width="10" height="1.3" fill="#c8c8c8" rx="0.3" opacity=".45"/>
<rect x="495.4" y="52" width="0.8" height="1.2" fill="#999"/>
<rect x="481.2" y="55.4" width="16.1" height="3.3" fill="#505050" rx="0.4"/>
<rect x="481.9" y="56.3" width="0.8" height="1.4" fill="#999"/>
<rect x="484.6" y="56.4" width="10" height="1.3" fill="#c8c8c8" rx="0.3" opacity=".45"/>
<rect x="495.4" y="56.4" width="0.8" height="1.2" fill="#999"/>
<rect x="482" y="61.2" width="1" height="1" fill="#8a8a8a"/>
<rect x="482" y="65.5" width="1" height="1" fill="#8a8a8a"/>
<rect x="482" y="69.9" width="1" height="1" fill="#8a8a8a"/>
<rect x="482.2" y="73.6" width="14.2" height="3" fill="#0a0a0a" rx="0.5" opacity=".55"/>
<rect x="482.8" y="74.3" width="13" height="1.6" fill="#bcbcbc" rx="0.3" opacity=".85"/>
<rect x="481.2" y="77.1" width="16.1" height="3.3" fill="#505050" rx="0.4"/>
<rect x="481.9" y="78" width="0.8" height="1.4" fill="#999"/>
<rect x="484.6" y="78.1" width="10" height="1.3" fill="#c8c8c8" rx="0.3" opacity=".45"/>
<rect x="495.4" y="78.1" width="0.8" height="1.2" fill="#999"/>
<rect x="482.6" y="82.2" width="1.8" height="13" fill="#0d0d0d"/>
<rect x="481.9" y="86.2" width="3.2" height="3.4" fill="#c0c0c0" rx="0.4"/>
<rect x="485.6" y="82.2" width="2.2" height="13" fill="#26260e"/>
<circle cx="492.8" cy="84.6" r="2.1" fill="#1a1a1a" stroke="#b4b4b4" stroke-width=".7"/>
<rect x="489.5" y="88" width="3" height="2.6" fill="#8e8e8e" rx="0.3"/>
<rect x="493.4" y="88" width="3" height="2.6" fill="#8e8e8e" rx="0.3"/>
<rect x="489.2" y="91.4" width="7.6" height="3" fill="#080808" rx="0.4"/>
<rect x="490.4" y="92.4" width="5.2" height="1" fill="#3ad048"/>
<rect x="481.2" y="100.1" width="16.1" height="3.3" fill="#505050" rx="0.4"/>
<rect x="481.9" y="101" width="0.8" height="1.4" fill="#999"/>
<rect x="484.6" y="101.1" width="10" height="1.3" fill="#c8c8c8" rx="0.3" opacity=".45"/>
<rect x="495.4" y="101.1" width="0.8" height="1.2" fill="#999"/>
<rect x="482.6" y="105.2" width="1.8" height="13" fill="#0d0d0d"/>
<rect x="481.9" y="109.2" width="3.2" height="3.4" fill="#c0c0c0" rx="0.4"/>
<rect x="485.6" y="105.2" width="2.2" height="13" fill="#26260e"/>
<circle cx="492.8" cy="107.6" r="2.1" fill="#1a1a1a" stroke="#b4b4b4" stroke-width=".7"/>
<rect x="489.5" y="111" width="3" height="2.6" fill="#8e8e8e" rx="0.3"/>
<rect x="493.4" y="111" width="3" height="2.6" fill="#8e8e8e" rx="0.3"/>
<rect x="489.2" y="114.4" width="7.6" height="3" fill="#080808" rx="0.4"/>
<rect x="490.4" y="115.4" width="5.2" height="1" fill="#3ad048"/>
<rect x="481.2" y="123.1" width="16.1" height="3.3" fill="#505050" rx="0.4"/>
<rect x="481.9" y="124" width="0.8" height="1.4" fill="#999"/>
<rect x="484.6" y="124.1" width="10" height="1.3" fill="#c8c8c8" rx="0.3" opacity=".45"/>
<rect x="495.4" y="124.1" width="0.8" height="1.2" fill="#999"/>
<rect x="482.6" y="128.2" width="1.8" height="13" fill="#0d0d0d"/>
<rect x="481.9" y="132.2" width="3.2" height="3.4" fill="#c0c0c0" rx="0.4"/>
<rect x="485.6" y="128.2" width="2.2" height="13" fill="#26260e"/>
<circle cx="492.8" cy="130.6" r="2.1" fill="#1a1a1a" stroke="#b4b4b4" stroke-width=".7"/>
<rect x="489.5" y="134" width="3" height="2.6" fill="#8e8e8e" rx="0.3"/>
<rect x="493.4" y="134" width="3" height="2.6" fill="#8e8e8e" rx="0.3"/>
<rect x="489.2" y="137.4" width="7.6" height="3" fill="#080808" rx="0.4"/>
<rect x="490.4" y="138.4" width="5.2" height="1" fill="#3ad048"/>
<rect x="482" y="147.5" width="1" height="1" fill="#8a8a8a"/>
<rect x="482" y="151.9" width="1" height="1" fill="#8a8a8a"/>
<rect x="482" y="146.4" width="1" height="1" fill="#8a8a8a"/>
<rect x="482" y="150.6" width="1" height="1" fill="#8a8a8a"/>
<rect x="486.9" y="154.2" width="4.8" height="3" fill="#0a0a0a" rx="0.5" opacity=".55"/>
<rect x="487.5" y="154.9" width="3.6" height="1.6" fill="#bcbcbc" rx="0.3" opacity=".85"/>
<rect x="480.8" y="158.3" width="16.9" height="16.8" fill="#1a1c1a"/>
<rect x="485.1" y="158.3" width="0.3" height="16.8" fill="#26302a"/>
<rect x="489.3" y="158.3" width="0.3" height="16.8" fill="#26302a"/>
<rect x="493.5" y="158.3" width="0.3" height="16.8" fill="#26302a"/>
<rect x="480.8" y="162.5" width="16.9" height="0.3" fill="#26302a"/>
<rect x="480.8" y="166.7" width="16.9" height="0.3" fill="#26302a"/>
<rect x="480.8" y="170.9" width="16.9" height="0.3" fill="#26302a"/>
<path transform="translate(480.8 158.3)" d="M1 17 C3 9 4 5 7 5.5 S10 7 12 5.5 S15 5 16 7 L17 17" fill="none" stroke="#3aa860" stroke-width=".8"/>
<rect x="486.7" y="176.4" width="5.2" height="3" fill="#0a0a0a" rx="0.5" opacity=".55"/>
<rect x="487.3" y="177.1" width="4" height="1.6" fill="#bcbcbc" rx="0.3" opacity=".85"/>
<rect x="481.2" y="179.8" width="16.1" height="3.3" fill="#505050" rx="0.4"/>
<rect x="481.9" y="180.7" width="0.8" height="1.4" fill="#999"/>
<rect x="484.6" y="180.8" width="10" height="1.3" fill="#c8c8c8" rx="0.3" opacity=".45"/>
<rect x="495.4" y="180.8" width="0.8" height="1.2" fill="#999"/>
<rect x="481.2" y="184.1" width="16.1" height="3.3" fill="#505050" rx="0.4"/>
<rect x="481.9" y="185" width="0.8" height="1.4" fill="#999"/>
<rect x="484.6" y="185.1" width="10" height="1.3" fill="#c8c8c8" rx="0.3" opacity=".45"/>
<rect x="495.4" y="185.1" width="0.8" height="1.2" fill="#999"/>
<rect x="485.7" y="188.7" width="7.2" height="3" fill="#0a0a0a" rx="0.5" opacity=".55"/>
<rect x="486.3" y="189.4" width="6" height="1.6" fill="#bcbcbc" rx="0.3" opacity=".85"/>
<rect x="481.2" y="192" width="16.1" height="3.3" fill="#4a5a4c" rx="0.4"/>
<rect x="481.9" y="192.9" width="0.8" height="1.4" fill="#999"/>
<rect x="484.6" y="193" width="10" height="1.3" fill="#8ab890" rx="0.3" opacity=".45"/>
<rect x="495.4" y="193" width="0.8" height="1.2" fill="#999"/>
<rect x="481.2" y="198.5" width="16.1" height="1.7" fill="#4a4a4a"/>
<rect x="481.2" y="200.9" width="16.1" height="3.3" fill="#505050" rx="0.4"/>
<rect x="481.9" y="201.8" width="0.8" height="1.4" fill="#999"/>
<rect x="484.6" y="201.9" width="10" height="1.3" fill="#c8c8c8" rx="0.3" opacity=".45"/>
<rect x="495.4" y="201.9" width="0.8" height="1.2" fill="#999"/>
<circle cx="489.3" cy="211.4" r="3" fill="#161616" stroke="#b0b0b0" stroke-width="1"/>
<rect x="489" y="208.2" width="0.6" height="1.8" fill="#3ad048"/>
<rect x="481" y="217.2" width="16.5" height="2.8" fill="#080808"/>
<rect x="482" y="218.1" width="4" height="1" fill="#3ad048"/>
<rect x="490.5" y="218.1" width="5.5" height="1" fill="#3ad048"/>
<rect x="483.5" y="222.7" width="4.5" height="2.9" fill="#5e5e5e" rx="0.4"/>
<rect x="490.5" y="222.7" width="4.5" height="2.9" fill="#b8a0a0" rx="0.4"/>
<rect x="483.5" y="228.6" width="4.5" height="3.2" fill="#5e5e5e" rx="0.4"/>
<rect x="490.5" y="228.6" width="4.5" height="3.2" fill="#5e5e5e" rx="0.4"/>
<rect x="482.4" y="237" width="1.1" height="1" fill="#8a8a8a"/>
<rect x="490" y="237" width="1.1" height="1" fill="#8a8a8a"/>
<rect x="482.4" y="242.8" width="1.1" height="1" fill="#8a8a8a"/>
<rect x="490" y="242.8" width="1.1" height="1" fill="#8a8a8a"/>
<rect x="482.4" y="248.6" width="1.1" height="1" fill="#8a8a8a"/>
<rect x="490" y="248.6" width="1.1" height="1" fill="#8a8a8a"/>
<rect x="482.4" y="254.4" width="1.1" height="1" fill="#8a8a8a"/>
<rect x="490" y="254.4" width="1.1" height="1" fill="#8a8a8a"/>
<rect x="482.4" y="260.2" width="1.1" height="1" fill="#8a8a8a"/>
<rect x="490" y="260.2" width="1.1" height="1" fill="#8a8a8a"/>
<rect x="482.4" y="266" width="1.1" height="1" fill="#8a8a8a"/>
<rect x="490" y="266" width="1.1" height="1" fill="#8a8a8a"/>
<rect x="482.4" y="271.8" width="1.1" height="1" fill="#8a8a8a"/>
<rect x="490" y="271.8" width="1.1" height="1" fill="#8a8a8a"/>
<rect x="482.4" y="277.6" width="1.1" height="1" fill="#8a8a8a"/>
<rect x="490" y="277.6" width="1.1" height="1" fill="#8a8a8a"/>
<rect x="482.4" y="283.4" width="1.1" height="1" fill="#8a8a8a"/>
<rect x="490" y="283.4" width="1.1" height="1" fill="#8a8a8a"/>
<rect x="482.4" y="289.2" width="1.1" height="1" fill="#8a8a8a"/>
<rect x="490" y="289.2" width="1.1" height="1" fill="#8a8a8a"/>
<rect x="486" y="236" width="1.5" height="55" fill="#0a0a0a"/>
<rect x="484.2" y="246.4" width="5.2" height="7.2" fill="#d4d4d4" rx="0.6"/>
<rect x="484.2" y="249.8" width="5.2" height="0.6" fill="#555"/>
<rect x="493.2" y="236" width="2.6" height="55" fill="#12120c"/>
<rect x="495.8" y="236" width="0.7" height="55" fill="#45401c"/>
<rect x="480.8" y="293.8" width="16.9" height="3.2" fill="#080808"/>
<rect x="482" y="294.9" width="4" height="1" fill="#3ad048"/>
<rect x="490" y="294.9" width="6" height="1" fill="#3ad048"/>
<rect x="486.5" y="299" width="4.5" height="2.6" fill="#4e4e4e" rx="0.3"/>
<rect x="492.2" y="299" width="4" height="2.6" fill="#4e4e4e" rx="0.3"/>
<rect x="480.8" y="303" width="16.9" height="4.4" fill="#161616"/>
<text x="489.3" y="306.4" font-size="2.9" fill="#ececec" font-weight="bold" text-anchor="middle" textLength="15.2" lengthAdjust="spacingAndGlyphs">A30nWth2</text>
<rect x="480.8" y="308.8" width="16.9" height="11.2" fill="#060606"/>
<rect x="482" y="310.2" width="4" height="1" fill="#3ad048"/>
<rect x="494" y="310.2" width="2" height="1" fill="#3ad048"/>
<rect x="482" y="313.4" width="4" height="1" fill="#3ad048"/>
<rect x="494" y="313.4" width="2" height="1" fill="#3ad048"/>
<rect x="482" y="316.6" width="4" height="1" fill="#3ad048"/>
<rect x="494" y="316.6" width="2" height="1" fill="#3ad048"/>
<rect x="498.6" y="30.8" width="0.9" height="314.5" fill="#0a0a0a"/>
<rect x="499.5" y="30.8" width="18.5" height="314.5" fill="#152439"/>
<rect x="499.5" y="31" width="18.5" height="5" fill="#3a8ee8"/>
<rect x="499.5" y="340.2" width="18.5" height="4.6" fill="#3a8ee8"/>
<rect x="505.1" y="36" width="7.2" height="3" fill="#0a0a0a" rx="0.5" opacity=".55"/>
<rect x="505.8" y="36.7" width="6" height="1.6" fill="#bcbcbc" rx="0.3" opacity=".85"/>
<rect x="501" y="39.9" width="7" height="3" fill="#3a3a3a" rx="0.4"/>
<rect x="509" y="39.9" width="7.5" height="3" fill="#3a3a3a" rx="0.4"/>
<text x="504.5" y="42.2" font-size="1.8" fill="#999" text-anchor="middle">PRE</text>
<text x="512.7" y="42.2" font-size="1.8" fill="#999" text-anchor="middle">MUTE</text>
<rect x="500.5" y="44.3" width="16.5" height="1.6" fill="#454545"/>
<rect x="500.9" y="47.3" width="15.6" height="3" fill="#0a0a0a" rx="0.5" opacity=".55"/>
<rect x="501.6" y="48" width="14.4" height="1.6" fill="#bcbcbc" rx="0.3" opacity=".85"/>
<rect x="500.7" y="51" width="16.1" height="3.3" fill="#505050" rx="0.4"/>
<rect x="501.4" y="51.9" width="0.8" height="1.4" fill="#999"/>
<rect x="504.1" y="52" width="10" height="1.3" fill="#c8c8c8" rx="0.3" opacity=".45"/>
<rect x="514.8" y="52" width="0.8" height="1.2" fill="#999"/>
<rect x="501.5" y="56.8" width="1" height="1" fill="#8a8a8a"/>
<rect x="500.7" y="59.8" width="16.1" height="3.3" fill="#505050" rx="0.4"/>
<rect x="501.4" y="60.7" width="0.8" height="1.4" fill="#999"/>
<rect x="504.1" y="60.8" width="10" height="1.3" fill="#c8c8c8" rx="0.3" opacity=".45"/>
<rect x="514.8" y="60.8" width="0.8" height="1.2" fill="#999"/>
<rect x="501.5" y="65.5" width="1" height="1" fill="#8a8a8a"/>
<rect x="501.5" y="69.9" width="1" height="1" fill="#8a8a8a"/>
<rect x="501.6" y="73.6" width="14.2" height="3" fill="#0a0a0a" rx="0.5" opacity=".55"/>
<rect x="502.2" y="74.3" width="13" height="1.6" fill="#bcbcbc" rx="0.3" opacity=".85"/>
<rect x="500.7" y="77.1" width="16.1" height="3.3" fill="#505050" rx="0.4"/>
<rect x="501.4" y="78" width="0.8" height="1.4" fill="#999"/>
<rect x="504.1" y="78.1" width="10" height="1.3" fill="#c8c8c8" rx="0.3" opacity=".45"/>
<rect x="514.8" y="78.1" width="0.8" height="1.2" fill="#999"/>
<rect x="502.1" y="82.2" width="1.8" height="13" fill="#0d0d0d"/>
<rect x="501.4" y="86.2" width="3.2" height="3.4" fill="#c0c0c0" rx="0.4"/>
<rect x="505.1" y="82.2" width="2.2" height="13" fill="#26260e"/>
<circle cx="512.3" cy="84.6" r="2.1" fill="#1a1a1a" stroke="#b4b4b4" stroke-width=".7"/>
<rect x="509" y="88" width="3" height="2.6" fill="#8e8e8e" rx="0.3"/>
<rect x="512.9" y="88" width="3" height="2.6" fill="#8e8e8e" rx="0.3"/>
<rect x="508.7" y="91.4" width="7.6" height="3" fill="#080808" rx="0.4"/>
<rect x="509.9" y="92.4" width="5.2" height="1" fill="#3ad048"/>
<rect x="500.7" y="100.1" width="16.1" height="3.3" fill="#505050" rx="0.4"/>
<rect x="501.4" y="101" width="0.8" height="1.4" fill="#999"/>
<rect x="504.1" y="101.1" width="10" height="1.3" fill="#c8c8c8" rx="0.3" opacity=".45"/>
<rect x="514.8" y="101.1" width="0.8" height="1.2" fill="#999"/>
<rect x="502.1" y="105.2" width="1.8" height="13" fill="#0d0d0d"/>
<rect x="501.4" y="109.2" width="3.2" height="3.4" fill="#c0c0c0" rx="0.4"/>
<rect x="505.1" y="105.2" width="2.2" height="13" fill="#26260e"/>
<circle cx="512.3" cy="107.6" r="2.1" fill="#1a1a1a" stroke="#b4b4b4" stroke-width=".7"/>
<rect x="509" y="111" width="3" height="2.6" fill="#8e8e8e" rx="0.3"/>
<rect x="512.9" y="111" width="3" height="2.6" fill="#8e8e8e" rx="0.3"/>
<rect x="508.7" y="114.4" width="7.6" height="3" fill="#080808" rx="0.4"/>
<rect x="509.9" y="115.4" width="5.2" height="1" fill="#3ad048"/>
<rect x="500.7" y="123.1" width="16.1" height="3.3" fill="#505050" rx="0.4"/>
<rect x="501.4" y="124" width="0.8" height="1.4" fill="#999"/>
<rect x="504.1" y="124.1" width="10" height="1.3" fill="#c8c8c8" rx="0.3" opacity=".45"/>
<rect x="514.8" y="124.1" width="0.8" height="1.2" fill="#999"/>
<rect x="502.1" y="128.2" width="1.8" height="13" fill="#0d0d0d"/>
<rect x="501.4" y="132.2" width="3.2" height="3.4" fill="#c0c0c0" rx="0.4"/>
<rect x="505.1" y="128.2" width="2.2" height="13" fill="#26260e"/>
<circle cx="512.3" cy="130.6" r="2.1" fill="#1a1a1a" stroke="#b4b4b4" stroke-width=".7"/>
<rect x="509" y="134" width="3" height="2.6" fill="#8e8e8e" rx="0.3"/>
<rect x="512.9" y="134" width="3" height="2.6" fill="#8e8e8e" rx="0.3"/>
<rect x="508.7" y="137.4" width="7.6" height="3" fill="#080808" rx="0.4"/>
<rect x="509.9" y="138.4" width="5.2" height="1" fill="#3ad048"/>
<rect x="501.5" y="147.5" width="1" height="1" fill="#8a8a8a"/>
<rect x="501.5" y="151.9" width="1" height="1" fill="#8a8a8a"/>
<rect x="501.5" y="146.4" width="1" height="1" fill="#8a8a8a"/>
<rect x="501.5" y="150.6" width="1" height="1" fill="#8a8a8a"/>
<rect x="506.3" y="154.2" width="4.8" height="3" fill="#0a0a0a" rx="0.5" opacity=".55"/>
<rect x="506.9" y="154.9" width="3.6" height="1.6" fill="#bcbcbc" rx="0.3" opacity=".85"/>
<rect x="500.3" y="158.3" width="16.9" height="16.8" fill="#1a1c1a"/>
<rect x="504.5" y="158.3" width="0.3" height="16.8" fill="#26302a"/>
<rect x="508.8" y="158.3" width="0.3" height="16.8" fill="#26302a"/>
<rect x="513" y="158.3" width="0.3" height="16.8" fill="#26302a"/>
<rect x="500.3" y="162.5" width="16.9" height="0.3" fill="#26302a"/>
<rect x="500.3" y="166.7" width="16.9" height="0.3" fill="#26302a"/>
<rect x="500.3" y="170.9" width="16.9" height="0.3" fill="#26302a"/>
<path transform="translate(500.3 158.3)" d="M1 17 C3 9 4 5 7 5.5 S10 7 12 5.5 S15 5 16 7 L17 17" fill="none" stroke="#3aa860" stroke-width=".8"/>
<rect x="506.1" y="176.4" width="5.2" height="3" fill="#0a0a0a" rx="0.5" opacity=".55"/>
<rect x="506.8" y="177.1" width="4" height="1.6" fill="#bcbcbc" rx="0.3" opacity=".85"/>
<rect x="500.7" y="179.8" width="16.1" height="3.3" fill="#505050" rx="0.4"/>
<rect x="501.4" y="180.7" width="0.8" height="1.4" fill="#999"/>
<rect x="504.1" y="180.8" width="10" height="1.3" fill="#c8c8c8" rx="0.3" opacity=".45"/>
<rect x="514.8" y="180.8" width="0.8" height="1.2" fill="#999"/>
<rect x="500.7" y="184.1" width="16.1" height="3.3" fill="#505050" rx="0.4"/>
<rect x="501.4" y="185" width="0.8" height="1.4" fill="#999"/>
<rect x="504.1" y="185.1" width="10" height="1.3" fill="#c8c8c8" rx="0.3" opacity=".45"/>
<rect x="514.8" y="185.1" width="0.8" height="1.2" fill="#999"/>
<rect x="505.1" y="188.7" width="7.2" height="3" fill="#0a0a0a" rx="0.5" opacity=".55"/>
<rect x="505.8" y="189.4" width="6" height="1.6" fill="#bcbcbc" rx="0.3" opacity=".85"/>
<rect x="500.7" y="192" width="16.1" height="3.3" fill="#4a5a4c" rx="0.4"/>
<rect x="501.4" y="192.9" width="0.8" height="1.4" fill="#999"/>
<rect x="504.1" y="193" width="10" height="1.3" fill="#8ab890" rx="0.3" opacity=".45"/>
<rect x="514.8" y="193" width="0.8" height="1.2" fill="#999"/>
<rect x="500.7" y="198.5" width="16.1" height="1.7" fill="#4a4a4a"/>
<rect x="500.7" y="200.9" width="16.1" height="3.3" fill="#505050" rx="0.4"/>
<rect x="501.4" y="201.8" width="0.8" height="1.4" fill="#999"/>
<rect x="504.1" y="201.9" width="10" height="1.3" fill="#c8c8c8" rx="0.3" opacity=".45"/>
<rect x="514.8" y="201.9" width="0.8" height="1.2" fill="#999"/>
<circle cx="508.8" cy="211.4" r="3" fill="#161616" stroke="#b0b0b0" stroke-width="1"/>
<rect x="508.4" y="208.2" width="0.6" height="1.8" fill="#3ad048"/>
<rect x="500.5" y="217.2" width="16.5" height="2.8" fill="#080808"/>
<rect x="501.5" y="218.1" width="4" height="1" fill="#3ad048"/>
<rect x="510" y="218.1" width="5.5" height="1" fill="#3ad048"/>
<rect x="503" y="222.7" width="4.5" height="2.9" fill="#5e5e5e" rx="0.4"/>
<rect x="510" y="222.7" width="4.5" height="2.9" fill="#b8a0a0" rx="0.4"/>
<rect x="503" y="228.6" width="4.5" height="3.2" fill="#5e5e5e" rx="0.4"/>
<rect x="510" y="228.6" width="4.5" height="3.2" fill="#5e5e5e" rx="0.4"/>
<rect x="501.9" y="237" width="1.1" height="1" fill="#8a8a8a"/>
<rect x="509.5" y="237" width="1.1" height="1" fill="#8a8a8a"/>
<rect x="501.9" y="242.8" width="1.1" height="1" fill="#8a8a8a"/>
<rect x="509.5" y="242.8" width="1.1" height="1" fill="#8a8a8a"/>
<rect x="501.9" y="248.6" width="1.1" height="1" fill="#8a8a8a"/>
<rect x="509.5" y="248.6" width="1.1" height="1" fill="#8a8a8a"/>
<rect x="501.9" y="254.4" width="1.1" height="1" fill="#8a8a8a"/>
<rect x="509.5" y="254.4" width="1.1" height="1" fill="#8a8a8a"/>
<rect x="501.9" y="260.2" width="1.1" height="1" fill="#8a8a8a"/>
<rect x="509.5" y="260.2" width="1.1" height="1" fill="#8a8a8a"/>
<rect x="501.9" y="266" width="1.1" height="1" fill="#8a8a8a"/>
<rect x="509.5" y="266" width="1.1" height="1" fill="#8a8a8a"/>
<rect x="501.9" y="271.8" width="1.1" height="1" fill="#8a8a8a"/>
<rect x="509.5" y="271.8" width="1.1" height="1" fill="#8a8a8a"/>
<rect x="501.9" y="277.6" width="1.1" height="1" fill="#8a8a8a"/>
<rect x="509.5" y="277.6" width="1.1" height="1" fill="#8a8a8a"/>
<rect x="501.9" y="283.4" width="1.1" height="1" fill="#8a8a8a"/>
<rect x="509.5" y="283.4" width="1.1" height="1" fill="#8a8a8a"/>
<rect x="501.9" y="289.2" width="1.1" height="1" fill="#8a8a8a"/>
<rect x="509.5" y="289.2" width="1.1" height="1" fill="#8a8a8a"/>
<rect x="505.5" y="236" width="1.5" height="55" fill="#0a0a0a"/>
<rect x="503.7" y="245.1" width="5.2" height="7.2" fill="#d4d4d4" rx="0.6"/>
<rect x="503.7" y="248.5" width="5.2" height="0.6" fill="#555"/>
<rect x="512.7" y="236" width="2.6" height="55" fill="#12120c"/>
<rect x="515.3" y="236" width="0.7" height="55" fill="#45401c"/>
<rect x="500.3" y="293.8" width="16.9" height="3.2" fill="#080808"/>
<rect x="501.5" y="294.9" width="4" height="1" fill="#3ad048"/>
<rect x="509.5" y="294.9" width="6" height="1" fill="#3ad048"/>
<rect x="506" y="299" width="4.5" height="2.6" fill="#4e4e4e" rx="0.3"/>
<rect x="511.7" y="299" width="4" height="2.6" fill="#4e4e4e" rx="0.3"/>
<rect x="500.3" y="303" width="16.9" height="4.4" fill="#161616"/>
<text x="508.8" y="306.4" font-size="2.9" fill="#ececec" font-weight="bold" text-anchor="middle" textLength="16.1" lengthAdjust="spacingAndGlyphs">VocRobin1</text>
<rect x="500.3" y="308.8" width="16.9" height="11.2" fill="#060606"/>
<rect x="501.5" y="310.2" width="4" height="1" fill="#3ad048"/>
<rect x="513.5" y="310.2" width="2" height="1" fill="#3ad048"/>
<rect x="501.5" y="313.4" width="4" height="1" fill="#3ad048"/>
<rect x="513.5" y="313.4" width="2" height="1" fill="#3ad048"/>
<rect x="501.5" y="316.6" width="4" height="1" fill="#3ad048"/>
<rect x="513.5" y="316.6" width="2" height="1" fill="#3ad048"/>
<rect x="518" y="30.8" width="0.9" height="314.5" fill="#0a0a0a"/>
<rect x="518.9" y="30.8" width="18.5" height="314.5" fill="#152439"/>
<rect x="518.9" y="31" width="18.5" height="5" fill="#3a8ee8"/>
<rect x="518.9" y="340.2" width="18.5" height="4.6" fill="#3a8ee8"/>
<rect x="524.6" y="36" width="7.2" height="3" fill="#0a0a0a" rx="0.5" opacity=".55"/>
<rect x="525.2" y="36.7" width="6" height="1.6" fill="#bcbcbc" rx="0.3" opacity=".85"/>
<rect x="520.4" y="39.9" width="7" height="3" fill="#3a3a3a" rx="0.4"/>
<rect x="528.4" y="39.9" width="7.5" height="3" fill="#3a3a3a" rx="0.4"/>
<text x="523.9" y="42.2" font-size="1.8" fill="#999" text-anchor="middle">PRE</text>
<text x="532.1" y="42.2" font-size="1.8" fill="#999" text-anchor="middle">MUTE</text>
<rect x="519.9" y="44.3" width="16.5" height="1.6" fill="#454545"/>
<rect x="520.4" y="47.3" width="15.6" height="3" fill="#0a0a0a" rx="0.5" opacity=".55"/>
<rect x="521" y="48" width="14.4" height="1.6" fill="#bcbcbc" rx="0.3" opacity=".85"/>
<rect x="520.1" y="51" width="16.1" height="3.3" fill="#505050" rx="0.4"/>
<rect x="520.8" y="51.9" width="0.8" height="1.4" fill="#999"/>
<rect x="523.5" y="52" width="10" height="1.3" fill="#c8c8c8" rx="0.3" opacity=".45"/>
<rect x="534.3" y="52" width="0.8" height="1.2" fill="#999"/>
<rect x="520.9" y="56.8" width="1" height="1" fill="#8a8a8a"/>
<rect x="520.1" y="59.8" width="16.1" height="3.3" fill="#505050" rx="0.4"/>
<rect x="520.8" y="60.7" width="0.8" height="1.4" fill="#999"/>
<rect x="523.5" y="60.8" width="10" height="1.3" fill="#c8c8c8" rx="0.3" opacity=".45"/>
<rect x="534.3" y="60.8" width="0.8" height="1.2" fill="#999"/>
<rect x="520.9" y="65.5" width="1" height="1" fill="#8a8a8a"/>
<rect x="520.9" y="69.9" width="1" height="1" fill="#8a8a8a"/>
<rect x="521.1" y="73.6" width="14.2" height="3" fill="#0a0a0a" rx="0.5" opacity=".55"/>
<rect x="521.7" y="74.3" width="13" height="1.6" fill="#bcbcbc" rx="0.3" opacity=".85"/>
<rect x="520.1" y="77.1" width="16.1" height="3.3" fill="#505050" rx="0.4"/>
<rect x="520.8" y="78" width="0.8" height="1.4" fill="#999"/>
<rect x="523.5" y="78.1" width="10" height="1.3" fill="#c8c8c8" rx="0.3" opacity=".45"/>
<rect x="534.3" y="78.1" width="0.8" height="1.2" fill="#999"/>
<rect x="521.5" y="82.2" width="1.8" height="13" fill="#0d0d0d"/>
<rect x="520.8" y="86.2" width="3.2" height="3.4" fill="#c0c0c0" rx="0.4"/>
<rect x="524.5" y="82.2" width="2.2" height="13" fill="#26260e"/>
<circle cx="531.7" cy="84.6" r="2.1" fill="#1a1a1a" stroke="#b4b4b4" stroke-width=".7"/>
<rect x="528.4" y="88" width="3" height="2.6" fill="#8e8e8e" rx="0.3"/>
<rect x="532.3" y="88" width="3" height="2.6" fill="#8e8e8e" rx="0.3"/>
<rect x="528.1" y="91.4" width="7.6" height="3" fill="#080808" rx="0.4"/>
<rect x="529.3" y="92.4" width="5.2" height="1" fill="#3ad048"/>
<rect x="520.1" y="100.1" width="16.1" height="3.3" fill="#505050" rx="0.4"/>
<rect x="520.8" y="101" width="0.8" height="1.4" fill="#999"/>
<rect x="523.5" y="101.1" width="10" height="1.3" fill="#c8c8c8" rx="0.3" opacity=".45"/>
<rect x="534.3" y="101.1" width="0.8" height="1.2" fill="#999"/>
<rect x="521.5" y="105.2" width="1.8" height="13" fill="#0d0d0d"/>
<rect x="520.8" y="109.2" width="3.2" height="3.4" fill="#c0c0c0" rx="0.4"/>
<rect x="524.5" y="105.2" width="2.2" height="13" fill="#26260e"/>
<circle cx="531.7" cy="107.6" r="2.1" fill="#1a1a1a" stroke="#b4b4b4" stroke-width=".7"/>
<rect x="528.4" y="111" width="3" height="2.6" fill="#8e8e8e" rx="0.3"/>
<rect x="532.3" y="111" width="3" height="2.6" fill="#8e8e8e" rx="0.3"/>
<rect x="528.1" y="114.4" width="7.6" height="3" fill="#080808" rx="0.4"/>
<rect x="529.3" y="115.4" width="5.2" height="1" fill="#3ad048"/>
<rect x="520.1" y="123.1" width="16.1" height="3.3" fill="#505050" rx="0.4"/>
<rect x="520.8" y="124" width="0.8" height="1.4" fill="#999"/>
<rect x="523.5" y="124.1" width="10" height="1.3" fill="#c8c8c8" rx="0.3" opacity=".45"/>
<rect x="534.3" y="124.1" width="0.8" height="1.2" fill="#999"/>
<rect x="521.5" y="128.2" width="1.8" height="13" fill="#0d0d0d"/>
<rect x="520.8" y="132.2" width="3.2" height="3.4" fill="#c0c0c0" rx="0.4"/>
<rect x="524.5" y="128.2" width="2.2" height="13" fill="#26260e"/>
<circle cx="531.7" cy="130.6" r="2.1" fill="#1a1a1a" stroke="#b4b4b4" stroke-width=".7"/>
<rect x="528.4" y="134" width="3" height="2.6" fill="#8e8e8e" rx="0.3"/>
<rect x="532.3" y="134" width="3" height="2.6" fill="#8e8e8e" rx="0.3"/>
<rect x="528.1" y="137.4" width="7.6" height="3" fill="#080808" rx="0.4"/>
<rect x="529.3" y="138.4" width="5.2" height="1" fill="#3ad048"/>
<rect x="520.9" y="147.5" width="1" height="1" fill="#8a8a8a"/>
<rect x="520.9" y="151.9" width="1" height="1" fill="#8a8a8a"/>
<rect x="520.9" y="146.4" width="1" height="1" fill="#8a8a8a"/>
<rect x="520.9" y="150.6" width="1" height="1" fill="#8a8a8a"/>
<rect x="525.8" y="154.2" width="4.8" height="3" fill="#0a0a0a" rx="0.5" opacity=".55"/>
<rect x="526.4" y="154.9" width="3.6" height="1.6" fill="#bcbcbc" rx="0.3" opacity=".85"/>
<rect x="519.7" y="158.3" width="16.9" height="16.8" fill="#1a1c1a"/>
<rect x="524" y="158.3" width="0.3" height="16.8" fill="#26302a"/>
<rect x="528.2" y="158.3" width="0.3" height="16.8" fill="#26302a"/>
<rect x="532.4" y="158.3" width="0.3" height="16.8" fill="#26302a"/>
<rect x="519.7" y="162.5" width="16.9" height="0.3" fill="#26302a"/>
<rect x="519.7" y="166.7" width="16.9" height="0.3" fill="#26302a"/>
<rect x="519.7" y="170.9" width="16.9" height="0.3" fill="#26302a"/>
<path transform="translate(519.7 158.3)" d="M1 17 C3 9 4 5 7 5.5 S10 7 12 5.5 S15 5 16 7 L17 17" fill="none" stroke="#3aa860" stroke-width=".8"/>
<rect x="525.6" y="176.4" width="5.2" height="3" fill="#0a0a0a" rx="0.5" opacity=".55"/>
<rect x="526.2" y="177.1" width="4" height="1.6" fill="#bcbcbc" rx="0.3" opacity=".85"/>
<rect x="520.1" y="179.8" width="16.1" height="3.3" fill="#505050" rx="0.4"/>
<rect x="520.8" y="180.7" width="0.8" height="1.4" fill="#999"/>
<rect x="523.5" y="180.8" width="10" height="1.3" fill="#c8c8c8" rx="0.3" opacity=".45"/>
<rect x="534.3" y="180.8" width="0.8" height="1.2" fill="#999"/>
<rect x="520.1" y="184.1" width="16.1" height="3.3" fill="#505050" rx="0.4"/>
<rect x="520.8" y="185" width="0.8" height="1.4" fill="#999"/>
<rect x="523.5" y="185.1" width="10" height="1.3" fill="#c8c8c8" rx="0.3" opacity=".45"/>
<rect x="534.3" y="185.1" width="0.8" height="1.2" fill="#999"/>
<rect x="524.6" y="188.7" width="7.2" height="3" fill="#0a0a0a" rx="0.5" opacity=".55"/>
<rect x="525.2" y="189.4" width="6" height="1.6" fill="#bcbcbc" rx="0.3" opacity=".85"/>
<rect x="520.1" y="192" width="16.1" height="3.3" fill="#4a5a4c" rx="0.4"/>
<rect x="520.8" y="192.9" width="0.8" height="1.4" fill="#999"/>
<rect x="523.5" y="193" width="10" height="1.3" fill="#8ab890" rx="0.3" opacity=".45"/>
<rect x="534.3" y="193" width="0.8" height="1.2" fill="#999"/>
<rect x="520.1" y="198.5" width="16.1" height="1.7" fill="#4a4a4a"/>
<rect x="520.1" y="200.9" width="16.1" height="3.3" fill="#505050" rx="0.4"/>
<rect x="520.8" y="201.8" width="0.8" height="1.4" fill="#999"/>
<rect x="523.5" y="201.9" width="10" height="1.3" fill="#c8c8c8" rx="0.3" opacity=".45"/>
<rect x="534.3" y="201.9" width="0.8" height="1.2" fill="#999"/>
<circle cx="528.2" cy="211.4" r="3" fill="#161616" stroke="#b0b0b0" stroke-width="1"/>
<rect x="527.9" y="208.2" width="0.6" height="1.8" fill="#3ad048"/>
<rect x="519.9" y="217.2" width="16.5" height="2.8" fill="#080808"/>
<rect x="520.9" y="218.1" width="4" height="1" fill="#3ad048"/>
<rect x="529.4" y="218.1" width="5.5" height="1" fill="#3ad048"/>
<rect x="522.4" y="222.7" width="4.5" height="2.9" fill="#5e5e5e" rx="0.4"/>
<rect x="529.4" y="222.7" width="4.5" height="2.9" fill="#b8a0a0" rx="0.4"/>
<rect x="522.4" y="228.6" width="4.5" height="3.2" fill="#5e5e5e" rx="0.4"/>
<rect x="529.4" y="228.6" width="4.5" height="3.2" fill="#5e5e5e" rx="0.4"/>
<rect x="521.3" y="237" width="1.1" height="1" fill="#8a8a8a"/>
<rect x="528.9" y="237" width="1.1" height="1" fill="#8a8a8a"/>
<rect x="521.3" y="242.8" width="1.1" height="1" fill="#8a8a8a"/>
<rect x="528.9" y="242.8" width="1.1" height="1" fill="#8a8a8a"/>
<rect x="521.3" y="248.6" width="1.1" height="1" fill="#8a8a8a"/>
<rect x="528.9" y="248.6" width="1.1" height="1" fill="#8a8a8a"/>
<rect x="521.3" y="254.4" width="1.1" height="1" fill="#8a8a8a"/>
<rect x="528.9" y="254.4" width="1.1" height="1" fill="#8a8a8a"/>
<rect x="521.3" y="260.2" width="1.1" height="1" fill="#8a8a8a"/>
<rect x="528.9" y="260.2" width="1.1" height="1" fill="#8a8a8a"/>
<rect x="521.3" y="266" width="1.1" height="1" fill="#8a8a8a"/>
<rect x="528.9" y="266" width="1.1" height="1" fill="#8a8a8a"/>
<rect x="521.3" y="271.8" width="1.1" height="1" fill="#8a8a8a"/>
<rect x="528.9" y="271.8" width="1.1" height="1" fill="#8a8a8a"/>
<rect x="521.3" y="277.6" width="1.1" height="1" fill="#8a8a8a"/>
<rect x="528.9" y="277.6" width="1.1" height="1" fill="#8a8a8a"/>
<rect x="521.3" y="283.4" width="1.1" height="1" fill="#8a8a8a"/>
<rect x="528.9" y="283.4" width="1.1" height="1" fill="#8a8a8a"/>
<rect x="521.3" y="289.2" width="1.1" height="1" fill="#8a8a8a"/>
<rect x="528.9" y="289.2" width="1.1" height="1" fill="#8a8a8a"/>
<rect x="524.9" y="236" width="1.5" height="55" fill="#0a0a0a"/>
<rect x="523.1" y="245.1" width="5.2" height="7.2" fill="#d4d4d4" rx="0.6"/>
<rect x="523.1" y="248.5" width="5.2" height="0.6" fill="#555"/>
<rect x="532.1" y="236" width="2.6" height="55" fill="#12120c"/>
<rect x="534.7" y="236" width="0.7" height="55" fill="#45401c"/>
<rect x="519.7" y="293.8" width="16.9" height="3.2" fill="#080808"/>
<rect x="520.9" y="294.9" width="4" height="1" fill="#3ad048"/>
<rect x="528.9" y="294.9" width="6" height="1" fill="#3ad048"/>
<rect x="525.4" y="299" width="4.5" height="2.6" fill="#4e4e4e" rx="0.3"/>
<rect x="531.1" y="299" width="4" height="2.6" fill="#4e4e4e" rx="0.3"/>
<rect x="519.7" y="303" width="16.9" height="4.4" fill="#161616"/>
<text x="528.2" y="306.4" font-size="2.9" fill="#ececec" font-weight="bold" text-anchor="middle" textLength="16.1" lengthAdjust="spacingAndGlyphs">VocRobin2</text>
<rect x="519.7" y="308.8" width="16.9" height="11.2" fill="#060606"/>
<rect x="520.9" y="310.2" width="4" height="1" fill="#3ad048"/>
<rect x="532.9" y="310.2" width="2" height="1" fill="#3ad048"/>
<rect x="520.9" y="313.4" width="4" height="1" fill="#3ad048"/>
<rect x="532.9" y="313.4" width="2" height="1" fill="#3ad048"/>
<rect x="520.9" y="316.6" width="4" height="1" fill="#3ad048"/>
<rect x="532.9" y="316.6" width="2" height="1" fill="#3ad048"/>
<rect x="537.5" y="30.8" width="0.9" height="314.5" fill="#0a0a0a"/>
<rect x="538.4" y="30.8" width="18.5" height="314.5" fill="#152439"/>
<rect x="538.4" y="31" width="18.5" height="5" fill="#3a8ee8"/>
<rect x="538.4" y="340.2" width="18.5" height="4.6" fill="#3a8ee8"/>
<rect x="544" y="36" width="7.2" height="3" fill="#0a0a0a" rx="0.5" opacity=".55"/>
<rect x="544.6" y="36.7" width="6" height="1.6" fill="#bcbcbc" rx="0.3" opacity=".85"/>
<rect x="539.9" y="39.9" width="7" height="3" fill="#3a3a3a" rx="0.4"/>
<rect x="547.9" y="39.9" width="7.5" height="3" fill="#3a3a3a" rx="0.4"/>
<text x="543.4" y="42.2" font-size="1.8" fill="#999" text-anchor="middle">PRE</text>
<text x="551.6" y="42.2" font-size="1.8" fill="#999" text-anchor="middle">MUTE</text>
<rect x="539.4" y="44.3" width="16.5" height="1.6" fill="#454545"/>
<rect x="539.8" y="47.3" width="15.6" height="3" fill="#0a0a0a" rx="0.5" opacity=".55"/>
<rect x="540.4" y="48" width="14.4" height="1.6" fill="#bcbcbc" rx="0.3" opacity=".85"/>
<rect x="539.6" y="51" width="16.1" height="3.3" fill="#505050" rx="0.4"/>
<rect x="540.3" y="51.9" width="0.8" height="1.4" fill="#999"/>
<rect x="543" y="52" width="10" height="1.3" fill="#c8c8c8" rx="0.3" opacity=".45"/>
<rect x="553.7" y="52" width="0.8" height="1.2" fill="#999"/>
<rect x="539.6" y="55.4" width="16.1" height="3.3" fill="#2a5a8a" rx="0.4"/>
<rect x="540.3" y="56.3" width="0.8" height="1.4" fill="#999"/>
<rect x="543" y="56.4" width="10" height="1.3" fill="#e0f0ff" rx="0.3" opacity=".45"/>
<rect x="553.7" y="56.4" width="0.8" height="1.2" fill="#999"/>
<rect x="539.6" y="59.8" width="16.1" height="3.3" fill="#d8d8d8" rx="0.4"/>
<rect x="540.3" y="60.7" width="0.8" height="1.4" fill="#999"/>
<rect x="543" y="60.8" width="10" height="1.3" fill="#222" rx="0.3" opacity=".45"/>
<rect x="553.7" y="60.8" width="0.8" height="1.2" fill="#999"/>
<rect x="540.4" y="65.5" width="1" height="1" fill="#8a8a8a"/>
<rect x="540.4" y="69.9" width="1" height="1" fill="#8a8a8a"/>
<rect x="540.5" y="73.6" width="14.2" height="3" fill="#0a0a0a" rx="0.5" opacity=".55"/>
<rect x="541.1" y="74.3" width="13" height="1.6" fill="#bcbcbc" rx="0.3" opacity=".85"/>
<rect x="539.6" y="77.1" width="16.1" height="3.3" fill="#505050" rx="0.4"/>
<rect x="540.3" y="78" width="0.8" height="1.4" fill="#999"/>
<rect x="543" y="78.1" width="10" height="1.3" fill="#c8c8c8" rx="0.3" opacity=".45"/>
<rect x="553.7" y="78.1" width="0.8" height="1.2" fill="#999"/>
<rect x="541" y="82.2" width="1.8" height="13" fill="#0d0d0d"/>
<rect x="540.3" y="86.2" width="3.2" height="3.4" fill="#c0c0c0" rx="0.4"/>
<rect x="544" y="82.2" width="2.2" height="13" fill="#26260e"/>
<circle cx="551.2" cy="84.6" r="2.1" fill="#1a1a1a" stroke="#b4b4b4" stroke-width=".7"/>
<rect x="547.9" y="88" width="3" height="2.6" fill="#8e8e8e" rx="0.3"/>
<rect x="551.8" y="88" width="3" height="2.6" fill="#8e8e8e" rx="0.3"/>
<rect x="547.6" y="91.4" width="7.6" height="3" fill="#080808" rx="0.4"/>
<rect x="548.8" y="92.4" width="5.2" height="1" fill="#3ad048"/>
<rect x="539.6" y="100.1" width="16.1" height="3.3" fill="#505050" rx="0.4"/>
<rect x="540.3" y="101" width="0.8" height="1.4" fill="#999"/>
<rect x="543" y="101.1" width="10" height="1.3" fill="#c8c8c8" rx="0.3" opacity=".45"/>
<rect x="553.7" y="101.1" width="0.8" height="1.2" fill="#999"/>
<rect x="541" y="105.2" width="1.8" height="13" fill="#0d0d0d"/>
<rect x="540.3" y="109.2" width="3.2" height="3.4" fill="#c0c0c0" rx="0.4"/>
<rect x="544" y="105.2" width="2.2" height="13" fill="#26260e"/>
<circle cx="551.2" cy="107.6" r="2.1" fill="#1a1a1a" stroke="#b4b4b4" stroke-width=".7"/>
<rect x="547.9" y="111" width="3" height="2.6" fill="#8e8e8e" rx="0.3"/>
<rect x="551.8" y="111" width="3" height="2.6" fill="#8e8e8e" rx="0.3"/>
<rect x="547.6" y="114.4" width="7.6" height="3" fill="#080808" rx="0.4"/>
<rect x="548.8" y="115.4" width="5.2" height="1" fill="#3ad048"/>
<rect x="539.6" y="123.1" width="16.1" height="3.3" fill="#505050" rx="0.4"/>
<rect x="540.3" y="124" width="0.8" height="1.4" fill="#999"/>
<rect x="543" y="124.1" width="10" height="1.3" fill="#c8c8c8" rx="0.3" opacity=".45"/>
<rect x="553.7" y="124.1" width="0.8" height="1.2" fill="#999"/>
<rect x="541" y="128.2" width="1.8" height="13" fill="#0d0d0d"/>
<rect x="540.3" y="132.2" width="3.2" height="3.4" fill="#c0c0c0" rx="0.4"/>
<rect x="544" y="128.2" width="2.2" height="13" fill="#26260e"/>
<circle cx="551.2" cy="130.6" r="2.1" fill="#1a1a1a" stroke="#b4b4b4" stroke-width=".7"/>
<rect x="547.9" y="134" width="3" height="2.6" fill="#8e8e8e" rx="0.3"/>
<rect x="551.8" y="134" width="3" height="2.6" fill="#8e8e8e" rx="0.3"/>
<rect x="547.6" y="137.4" width="7.6" height="3" fill="#080808" rx="0.4"/>
<rect x="548.8" y="138.4" width="5.2" height="1" fill="#3ad048"/>
<rect x="540.4" y="147.5" width="1" height="1" fill="#8a8a8a"/>
<rect x="540.4" y="151.9" width="1" height="1" fill="#8a8a8a"/>
<rect x="540.4" y="146.4" width="1" height="1" fill="#8a8a8a"/>
<rect x="540.4" y="150.6" width="1" height="1" fill="#8a8a8a"/>
<rect x="545.2" y="154.2" width="4.8" height="3" fill="#0a0a0a" rx="0.5" opacity=".55"/>
<rect x="545.8" y="154.9" width="3.6" height="1.6" fill="#bcbcbc" rx="0.3" opacity=".85"/>
<rect x="539.2" y="158.3" width="16.9" height="16.8" fill="#1a1c1a"/>
<rect x="543.4" y="158.3" width="0.3" height="16.8" fill="#26302a"/>
<rect x="547.6" y="158.3" width="0.3" height="16.8" fill="#26302a"/>
<rect x="551.9" y="158.3" width="0.3" height="16.8" fill="#26302a"/>
<rect x="539.2" y="162.5" width="16.9" height="0.3" fill="#26302a"/>
<rect x="539.2" y="166.7" width="16.9" height="0.3" fill="#26302a"/>
<rect x="539.2" y="170.9" width="16.9" height="0.3" fill="#26302a"/>
<path transform="translate(539.2 158.3)" d="M1 17 C3 9 4 5 7 5.5 S10 7 12 5.5 S15 5 16 7 L17 17" fill="none" stroke="#3aa860" stroke-width=".8"/>
<rect x="545" y="176.4" width="5.2" height="3" fill="#0a0a0a" rx="0.5" opacity=".55"/>
<rect x="545.6" y="177.1" width="4" height="1.6" fill="#bcbcbc" rx="0.3" opacity=".85"/>
<rect x="539.6" y="179.8" width="16.1" height="3.3" fill="#505050" rx="0.4"/>
<rect x="540.3" y="180.7" width="0.8" height="1.4" fill="#999"/>
<rect x="543" y="180.8" width="10" height="1.3" fill="#c8c8c8" rx="0.3" opacity=".45"/>
<rect x="553.7" y="180.8" width="0.8" height="1.2" fill="#999"/>
<rect x="539.6" y="184.1" width="16.1" height="3.3" fill="#505050" rx="0.4"/>
<rect x="540.3" y="185" width="0.8" height="1.4" fill="#999"/>
<rect x="543" y="185.1" width="10" height="1.3" fill="#c8c8c8" rx="0.3" opacity=".45"/>
<rect x="553.7" y="185.1" width="0.8" height="1.2" fill="#999"/>
<rect x="544" y="188.7" width="7.2" height="3" fill="#0a0a0a" rx="0.5" opacity=".55"/>
<rect x="544.6" y="189.4" width="6" height="1.6" fill="#bcbcbc" rx="0.3" opacity=".85"/>
<rect x="539.6" y="192" width="16.1" height="3.3" fill="#4a5a4c" rx="0.4"/>
<rect x="540.3" y="192.9" width="0.8" height="1.4" fill="#999"/>
<rect x="543" y="193" width="10" height="1.3" fill="#8ab890" rx="0.3" opacity=".45"/>
<rect x="553.7" y="193" width="0.8" height="1.2" fill="#999"/>
<rect x="539.6" y="198.5" width="16.1" height="1.7" fill="#4a4a4a"/>
<rect x="539.6" y="200.9" width="16.1" height="3.3" fill="#505050" rx="0.4"/>
<rect x="540.3" y="201.8" width="0.8" height="1.4" fill="#999"/>
<rect x="543" y="201.9" width="10" height="1.3" fill="#c8c8c8" rx="0.3" opacity=".45"/>
<rect x="553.7" y="201.9" width="0.8" height="1.2" fill="#999"/>
<circle cx="547.6" cy="211.4" r="3" fill="#161616" stroke="#b0b0b0" stroke-width="1"/>
<rect x="547.3" y="208.2" width="0.6" height="1.8" fill="#3ad048"/>
<rect x="539.4" y="217.2" width="16.5" height="2.8" fill="#080808"/>
<rect x="540.4" y="218.1" width="4" height="1" fill="#3ad048"/>
<rect x="548.9" y="218.1" width="5.5" height="1" fill="#3ad048"/>
<rect x="541.9" y="222.7" width="4.5" height="2.9" fill="#5e5e5e" rx="0.4"/>
<rect x="548.9" y="222.7" width="4.5" height="2.9" fill="#b8a0a0" rx="0.4"/>
<rect x="541.9" y="228.6" width="4.5" height="3.2" fill="#5e5e5e" rx="0.4"/>
<rect x="548.9" y="228.6" width="4.5" height="3.2" fill="#5e5e5e" rx="0.4"/>
<rect x="540.8" y="237" width="1.1" height="1" fill="#8a8a8a"/>
<rect x="548.4" y="237" width="1.1" height="1" fill="#8a8a8a"/>
<rect x="540.8" y="242.8" width="1.1" height="1" fill="#8a8a8a"/>
<rect x="548.4" y="242.8" width="1.1" height="1" fill="#8a8a8a"/>
<rect x="540.8" y="248.6" width="1.1" height="1" fill="#8a8a8a"/>
<rect x="548.4" y="248.6" width="1.1" height="1" fill="#8a8a8a"/>
<rect x="540.8" y="254.4" width="1.1" height="1" fill="#8a8a8a"/>
<rect x="548.4" y="254.4" width="1.1" height="1" fill="#8a8a8a"/>
<rect x="540.8" y="260.2" width="1.1" height="1" fill="#8a8a8a"/>
<rect x="548.4" y="260.2" width="1.1" height="1" fill="#8a8a8a"/>
<rect x="540.8" y="266" width="1.1" height="1" fill="#8a8a8a"/>
<rect x="548.4" y="266" width="1.1" height="1" fill="#8a8a8a"/>
<rect x="540.8" y="271.8" width="1.1" height="1" fill="#8a8a8a"/>
<rect x="548.4" y="271.8" width="1.1" height="1" fill="#8a8a8a"/>
<rect x="540.8" y="277.6" width="1.1" height="1" fill="#8a8a8a"/>
<rect x="548.4" y="277.6" width="1.1" height="1" fill="#8a8a8a"/>
<rect x="540.8" y="283.4" width="1.1" height="1" fill="#8a8a8a"/>
<rect x="548.4" y="283.4" width="1.1" height="1" fill="#8a8a8a"/>
<rect x="540.8" y="289.2" width="1.1" height="1" fill="#8a8a8a"/>
<rect x="548.4" y="289.2" width="1.1" height="1" fill="#8a8a8a"/>
<rect x="544.4" y="236" width="1.5" height="55" fill="#0a0a0a"/>
<rect x="542.6" y="247.2" width="5.2" height="7.2" fill="#d4d4d4" rx="0.6"/>
<rect x="542.6" y="250.6" width="5.2" height="0.6" fill="#555"/>
<rect x="551.6" y="236" width="2.6" height="55" fill="#12120c"/>
<rect x="554.2" y="236" width="0.7" height="55" fill="#45401c"/>
<rect x="539.2" y="293.8" width="16.9" height="3.2" fill="#080808"/>
<rect x="540.4" y="294.9" width="4" height="1" fill="#3ad048"/>
<rect x="548.4" y="294.9" width="6" height="1" fill="#3ad048"/>
<rect x="544.9" y="299" width="4.5" height="2.6" fill="#4e4e4e" rx="0.3"/>
<rect x="550.6" y="299" width="4" height="2.6" fill="#4e4e4e" rx="0.3"/>
<rect x="539.2" y="303" width="16.9" height="4.4" fill="#161616"/>
<text x="547.6" y="306.4" font-size="2.9" fill="#ececec" font-weight="bold" text-anchor="middle" textLength="16.1" lengthAdjust="spacingAndGlyphs">A17SpeoRe</text>
<rect x="539.2" y="308.8" width="16.9" height="11.2" fill="#060606"/>
<rect x="540.4" y="310.2" width="4" height="1" fill="#3ad048"/>
<rect x="552.4" y="310.2" width="2" height="1" fill="#3ad048"/>
<rect x="540.4" y="313.4" width="4" height="1" fill="#3ad048"/>
<rect x="552.4" y="313.4" width="2" height="1" fill="#3ad048"/>
<rect x="540.4" y="316.6" width="4" height="1" fill="#3ad048"/>
<rect x="552.4" y="316.6" width="2" height="1" fill="#3ad048"/>
<rect x="556.9" y="30.8" width="0.9" height="314.5" fill="#0a0a0a"/>
<rect x="557.8" y="30.8" width="18.5" height="314.5" fill="#152439"/>
<rect x="557.8" y="31" width="18.5" height="5" fill="#3a8ee8"/>
<rect x="557.8" y="340.2" width="18.5" height="4.6" fill="#3a8ee8"/>
<rect x="563.5" y="36" width="7.2" height="3" fill="#0a0a0a" rx="0.5" opacity=".55"/>
<rect x="564.1" y="36.7" width="6" height="1.6" fill="#bcbcbc" rx="0.3" opacity=".85"/>
<rect x="559.3" y="39.9" width="7" height="3" fill="#3a3a3a" rx="0.4"/>
<rect x="567.3" y="39.9" width="7.5" height="3" fill="#3a3a3a" rx="0.4"/>
<text x="562.8" y="42.2" font-size="1.8" fill="#999" text-anchor="middle">PRE</text>
<text x="571" y="42.2" font-size="1.8" fill="#999" text-anchor="middle">MUTE</text>
<rect x="558.8" y="44.3" width="16.5" height="1.6" fill="#454545"/>
<rect x="559.3" y="47.3" width="15.6" height="3" fill="#0a0a0a" rx="0.5" opacity=".55"/>
<rect x="559.9" y="48" width="14.4" height="1.6" fill="#bcbcbc" rx="0.3" opacity=".85"/>
<rect x="559" y="51" width="16.1" height="3.3" fill="#505050" rx="0.4"/>
<rect x="559.7" y="51.9" width="0.8" height="1.4" fill="#999"/>
<rect x="562.4" y="52" width="10" height="1.3" fill="#c8c8c8" rx="0.3" opacity=".45"/>
<rect x="573.1" y="52" width="0.8" height="1.2" fill="#999"/>
<rect x="559.8" y="56.8" width="1" height="1" fill="#8a8a8a"/>
<rect x="559.8" y="61.2" width="1" height="1" fill="#8a8a8a"/>
<rect x="559.8" y="65.5" width="1" height="1" fill="#8a8a8a"/>
<rect x="559.8" y="69.9" width="1" height="1" fill="#8a8a8a"/>
<rect x="560" y="73.6" width="14.2" height="3" fill="#0a0a0a" rx="0.5" opacity=".55"/>
<rect x="560.6" y="74.3" width="13" height="1.6" fill="#bcbcbc" rx="0.3" opacity=".85"/>
<rect x="559" y="77.1" width="16.1" height="3.3" fill="#505050" rx="0.4"/>
<rect x="559.7" y="78" width="0.8" height="1.4" fill="#999"/>
<rect x="562.4" y="78.1" width="10" height="1.3" fill="#c8c8c8" rx="0.3" opacity=".45"/>
<rect x="573.1" y="78.1" width="0.8" height="1.2" fill="#999"/>
<rect x="560.4" y="82.2" width="1.8" height="13" fill="#0d0d0d"/>
<rect x="559.7" y="86.2" width="3.2" height="3.4" fill="#c0c0c0" rx="0.4"/>
<rect x="563.4" y="82.2" width="2.2" height="13" fill="#26260e"/>
<circle cx="570.6" cy="84.6" r="2.1" fill="#1a1a1a" stroke="#b4b4b4" stroke-width=".7"/>
<rect x="567.3" y="88" width="3" height="2.6" fill="#8e8e8e" rx="0.3"/>
<rect x="571.2" y="88" width="3" height="2.6" fill="#8e8e8e" rx="0.3"/>
<rect x="567" y="91.4" width="7.6" height="3" fill="#080808" rx="0.4"/>
<rect x="568.2" y="92.4" width="5.2" height="1" fill="#3ad048"/>
<rect x="559" y="100.1" width="16.1" height="3.3" fill="#505050" rx="0.4"/>
<rect x="559.7" y="101" width="0.8" height="1.4" fill="#999"/>
<rect x="562.4" y="101.1" width="10" height="1.3" fill="#c8c8c8" rx="0.3" opacity=".45"/>
<rect x="573.1" y="101.1" width="0.8" height="1.2" fill="#999"/>
<rect x="560.4" y="105.2" width="1.8" height="13" fill="#0d0d0d"/>
<rect x="559.7" y="109.2" width="3.2" height="3.4" fill="#c0c0c0" rx="0.4"/>
<rect x="563.4" y="105.2" width="2.2" height="13" fill="#26260e"/>
<circle cx="570.6" cy="107.6" r="2.1" fill="#1a1a1a" stroke="#b4b4b4" stroke-width=".7"/>
<rect x="567.3" y="111" width="3" height="2.6" fill="#8e8e8e" rx="0.3"/>
<rect x="571.2" y="111" width="3" height="2.6" fill="#8e8e8e" rx="0.3"/>
<rect x="567" y="114.4" width="7.6" height="3" fill="#080808" rx="0.4"/>
<rect x="568.2" y="115.4" width="5.2" height="1" fill="#3ad048"/>
<rect x="559" y="123.1" width="16.1" height="3.3" fill="#505050" rx="0.4"/>
<rect x="559.7" y="124" width="0.8" height="1.4" fill="#999"/>
<rect x="562.4" y="124.1" width="10" height="1.3" fill="#c8c8c8" rx="0.3" opacity=".45"/>
<rect x="573.1" y="124.1" width="0.8" height="1.2" fill="#999"/>
<rect x="560.4" y="128.2" width="1.8" height="13" fill="#0d0d0d"/>
<rect x="559.7" y="132.2" width="3.2" height="3.4" fill="#c0c0c0" rx="0.4"/>
<rect x="563.4" y="128.2" width="2.2" height="13" fill="#26260e"/>
<circle cx="570.6" cy="130.6" r="2.1" fill="#1a1a1a" stroke="#b4b4b4" stroke-width=".7"/>
<rect x="567.3" y="134" width="3" height="2.6" fill="#8e8e8e" rx="0.3"/>
<rect x="571.2" y="134" width="3" height="2.6" fill="#8e8e8e" rx="0.3"/>
<rect x="567" y="137.4" width="7.6" height="3" fill="#080808" rx="0.4"/>
<rect x="568.2" y="138.4" width="5.2" height="1" fill="#3ad048"/>
<rect x="559.8" y="147.5" width="1" height="1" fill="#8a8a8a"/>
<rect x="559.8" y="151.9" width="1" height="1" fill="#8a8a8a"/>
<rect x="559.8" y="146.4" width="1" height="1" fill="#8a8a8a"/>
<rect x="559.8" y="150.6" width="1" height="1" fill="#8a8a8a"/>
<rect x="564.7" y="154.2" width="4.8" height="3" fill="#0a0a0a" rx="0.5" opacity=".55"/>
<rect x="565.3" y="154.9" width="3.6" height="1.6" fill="#bcbcbc" rx="0.3" opacity=".85"/>
<rect x="558.6" y="158.3" width="16.9" height="16.8" fill="#1a1c1a"/>
<rect x="562.8" y="158.3" width="0.3" height="16.8" fill="#26302a"/>
<rect x="567.1" y="158.3" width="0.3" height="16.8" fill="#26302a"/>
<rect x="571.3" y="158.3" width="0.3" height="16.8" fill="#26302a"/>
<rect x="558.6" y="162.5" width="16.9" height="0.3" fill="#26302a"/>
<rect x="558.6" y="166.7" width="16.9" height="0.3" fill="#26302a"/>
<rect x="558.6" y="170.9" width="16.9" height="0.3" fill="#26302a"/>
<path transform="translate(558.6 158.3)" d="M1 17 C3 9 4 5 7 5.5 S10 7 12 5.5 S15 5 16 7 L17 17" fill="none" stroke="#3aa860" stroke-width=".8"/>
<rect x="564.5" y="176.4" width="5.2" height="3" fill="#0a0a0a" rx="0.5" opacity=".55"/>
<rect x="565.1" y="177.1" width="4" height="1.6" fill="#bcbcbc" rx="0.3" opacity=".85"/>
<rect x="559" y="179.8" width="16.1" height="3.3" fill="#505050" rx="0.4"/>
<rect x="559.7" y="180.7" width="0.8" height="1.4" fill="#999"/>
<rect x="562.4" y="180.8" width="10" height="1.3" fill="#c8c8c8" rx="0.3" opacity=".45"/>
<rect x="573.1" y="180.8" width="0.8" height="1.2" fill="#999"/>
<rect x="559" y="184.1" width="16.1" height="3.3" fill="#505050" rx="0.4"/>
<rect x="559.7" y="185" width="0.8" height="1.4" fill="#999"/>
<rect x="562.4" y="185.1" width="10" height="1.3" fill="#c8c8c8" rx="0.3" opacity=".45"/>
<rect x="573.1" y="185.1" width="0.8" height="1.2" fill="#999"/>
<rect x="563.5" y="188.7" width="7.2" height="3" fill="#0a0a0a" rx="0.5" opacity=".55"/>
<rect x="564.1" y="189.4" width="6" height="1.6" fill="#bcbcbc" rx="0.3" opacity=".85"/>
<rect x="559" y="192" width="16.1" height="3.3" fill="#4a5a4c" rx="0.4"/>
<rect x="559.7" y="192.9" width="0.8" height="1.4" fill="#999"/>
<rect x="562.4" y="193" width="10" height="1.3" fill="#8ab890" rx="0.3" opacity=".45"/>
<rect x="573.1" y="193" width="0.8" height="1.2" fill="#999"/>
<rect x="559" y="198.5" width="16.1" height="1.7" fill="#4a4a4a"/>
<rect x="559" y="200.9" width="16.1" height="3.3" fill="#505050" rx="0.4"/>
<rect x="559.7" y="201.8" width="0.8" height="1.4" fill="#999"/>
<rect x="562.4" y="201.9" width="10" height="1.3" fill="#c8c8c8" rx="0.3" opacity=".45"/>
<rect x="573.1" y="201.9" width="0.8" height="1.2" fill="#999"/>
<circle cx="567.1" cy="211.4" r="3" fill="#161616" stroke="#b0b0b0" stroke-width="1"/>
<rect x="566.8" y="208.2" width="0.6" height="1.8" fill="#3ad048"/>
<rect x="558.8" y="217.2" width="16.5" height="2.8" fill="#080808"/>
<rect x="559.8" y="218.1" width="4" height="1" fill="#3ad048"/>
<rect x="568.3" y="218.1" width="5.5" height="1" fill="#3ad048"/>
<rect x="561.3" y="222.7" width="4.5" height="2.9" fill="#5e5e5e" rx="0.4"/>
<rect x="568.3" y="222.7" width="4.5" height="2.9" fill="#b8a0a0" rx="0.4"/>
<rect x="561.3" y="228.6" width="4.5" height="3.2" fill="#5e5e5e" rx="0.4"/>
<rect x="568.3" y="228.6" width="4.5" height="3.2" fill="#5e5e5e" rx="0.4"/>
<rect x="560.2" y="237" width="1.1" height="1" fill="#8a8a8a"/>
<rect x="567.8" y="237" width="1.1" height="1" fill="#8a8a8a"/>
<rect x="560.2" y="242.8" width="1.1" height="1" fill="#8a8a8a"/>
<rect x="567.8" y="242.8" width="1.1" height="1" fill="#8a8a8a"/>
<rect x="560.2" y="248.6" width="1.1" height="1" fill="#8a8a8a"/>
<rect x="567.8" y="248.6" width="1.1" height="1" fill="#8a8a8a"/>
<rect x="560.2" y="254.4" width="1.1" height="1" fill="#8a8a8a"/>
<rect x="567.8" y="254.4" width="1.1" height="1" fill="#8a8a8a"/>
<rect x="560.2" y="260.2" width="1.1" height="1" fill="#8a8a8a"/>
<rect x="567.8" y="260.2" width="1.1" height="1" fill="#8a8a8a"/>
<rect x="560.2" y="266" width="1.1" height="1" fill="#8a8a8a"/>
<rect x="567.8" y="266" width="1.1" height="1" fill="#8a8a8a"/>
<rect x="560.2" y="271.8" width="1.1" height="1" fill="#8a8a8a"/>
<rect x="567.8" y="271.8" width="1.1" height="1" fill="#8a8a8a"/>
<rect x="560.2" y="277.6" width="1.1" height="1" fill="#8a8a8a"/>
<rect x="567.8" y="277.6" width="1.1" height="1" fill="#8a8a8a"/>
<rect x="560.2" y="283.4" width="1.1" height="1" fill="#8a8a8a"/>
<rect x="567.8" y="283.4" width="1.1" height="1" fill="#8a8a8a"/>
<rect x="560.2" y="289.2" width="1.1" height="1" fill="#8a8a8a"/>
<rect x="567.8" y="289.2" width="1.1" height="1" fill="#8a8a8a"/>
<rect x="563.8" y="236" width="1.5" height="55" fill="#0a0a0a"/>
<rect x="562" y="247.1" width="5.2" height="7.2" fill="#d4d4d4" rx="0.6"/>
<rect x="562" y="250.5" width="5.2" height="0.6" fill="#555"/>
<rect x="571" y="236" width="2.6" height="55" fill="#12120c"/>
<rect x="573.6" y="236" width="0.7" height="55" fill="#45401c"/>
<rect x="558.6" y="293.8" width="16.9" height="3.2" fill="#080808"/>
<rect x="559.8" y="294.9" width="4" height="1" fill="#3ad048"/>
<rect x="567.8" y="294.9" width="6" height="1" fill="#3ad048"/>
<rect x="564.3" y="299" width="4.5" height="2.6" fill="#4e4e4e" rx="0.3"/>
<rect x="570" y="299" width="4" height="2.6" fill="#4e4e4e" rx="0.3"/>
<rect x="558.6" y="303" width="16.9" height="4.4" fill="#161616"/>
<text x="567.1" y="306.4" font-size="2.9" fill="#ececec" font-weight="bold" text-anchor="middle" textLength="16.1" lengthAdjust="spacingAndGlyphs">AtNonKing</text>
<rect x="558.6" y="308.8" width="16.9" height="11.2" fill="#060606"/>
<rect x="559.8" y="310.2" width="4" height="1" fill="#3ad048"/>
<rect x="571.8" y="310.2" width="2" height="1" fill="#3ad048"/>
<rect x="559.8" y="313.4" width="4" height="1" fill="#3ad048"/>
<rect x="571.8" y="313.4" width="2" height="1" fill="#3ad048"/>
<rect x="559.8" y="316.6" width="4" height="1" fill="#3ad048"/>
<rect x="571.8" y="316.6" width="2" height="1" fill="#3ad048"/>
<rect x="576.3" y="30.8" width="0.9" height="314.5" fill="#0a0a0a"/>
<rect x="577.2" y="30.8" width="18.5" height="314.5" fill="#152439"/>
<rect x="577.2" y="31" width="18.5" height="5" fill="#3a8ee8"/>
<rect x="577.2" y="340.2" width="18.5" height="4.6" fill="#3a8ee8"/>
<rect x="582.9" y="36" width="7.2" height="3" fill="#0a0a0a" rx="0.5" opacity=".55"/>
<rect x="583.5" y="36.7" width="6" height="1.6" fill="#bcbcbc" rx="0.3" opacity=".85"/>
<rect x="578.7" y="39.9" width="7" height="3" fill="#3a3a3a" rx="0.4"/>
<rect x="586.7" y="39.9" width="7.5" height="3" fill="#3a3a3a" rx="0.4"/>
<text x="582.2" y="42.2" font-size="1.8" fill="#999" text-anchor="middle">PRE</text>
<text x="590.4" y="42.2" font-size="1.8" fill="#999" text-anchor="middle">MUTE</text>
<rect x="578.2" y="44.3" width="16.5" height="1.6" fill="#454545"/>
<rect x="578.7" y="47.3" width="15.6" height="3" fill="#0a0a0a" rx="0.5" opacity=".55"/>
<rect x="579.3" y="48" width="14.4" height="1.6" fill="#bcbcbc" rx="0.3" opacity=".85"/>
<rect x="578.4" y="51" width="16.1" height="3.3" fill="#505050" rx="0.4"/>
<rect x="579.1" y="51.9" width="0.8" height="1.4" fill="#999"/>
<rect x="581.8" y="52" width="10" height="1.3" fill="#c8c8c8" rx="0.3" opacity=".45"/>
<rect x="592.6" y="52" width="0.8" height="1.2" fill="#999"/>
<rect x="578.4" y="55.4" width="16.1" height="3.3" fill="#505050" rx="0.4"/>
<rect x="579.1" y="56.3" width="0.8" height="1.4" fill="#999"/>
<rect x="581.8" y="56.4" width="10" height="1.3" fill="#c8c8c8" rx="0.3" opacity=".45"/>
<rect x="592.6" y="56.4" width="0.8" height="1.2" fill="#999"/>
<rect x="579.2" y="61.2" width="1" height="1" fill="#8a8a8a"/>
<rect x="579.2" y="65.5" width="1" height="1" fill="#8a8a8a"/>
<rect x="579.2" y="69.9" width="1" height="1" fill="#8a8a8a"/>
<rect x="579.4" y="73.6" width="14.2" height="3" fill="#0a0a0a" rx="0.5" opacity=".55"/>
<rect x="580" y="74.3" width="13" height="1.6" fill="#bcbcbc" rx="0.3" opacity=".85"/>
<rect x="578.4" y="77.1" width="16.1" height="3.3" fill="#505050" rx="0.4"/>
<rect x="579.1" y="78" width="0.8" height="1.4" fill="#999"/>
<rect x="581.8" y="78.1" width="10" height="1.3" fill="#c8c8c8" rx="0.3" opacity=".45"/>
<rect x="592.6" y="78.1" width="0.8" height="1.2" fill="#999"/>
<rect x="579.8" y="82.2" width="1.8" height="13" fill="#0d0d0d"/>
<rect x="579.1" y="86.2" width="3.2" height="3.4" fill="#c0c0c0" rx="0.4"/>
<rect x="582.8" y="82.2" width="2.2" height="13" fill="#26260e"/>
<circle cx="590" cy="84.6" r="2.1" fill="#1a1a1a" stroke="#b4b4b4" stroke-width=".7"/>
<rect x="586.7" y="88" width="3" height="2.6" fill="#8e8e8e" rx="0.3"/>
<rect x="590.6" y="88" width="3" height="2.6" fill="#8e8e8e" rx="0.3"/>
<rect x="586.4" y="91.4" width="7.6" height="3" fill="#080808" rx="0.4"/>
<rect x="587.6" y="92.4" width="5.2" height="1" fill="#3ad048"/>
<rect x="578.4" y="100.1" width="16.1" height="3.3" fill="#505050" rx="0.4"/>
<rect x="579.1" y="101" width="0.8" height="1.4" fill="#999"/>
<rect x="581.8" y="101.1" width="10" height="1.3" fill="#c8c8c8" rx="0.3" opacity=".45"/>
<rect x="592.6" y="101.1" width="0.8" height="1.2" fill="#999"/>
<rect x="579.8" y="105.2" width="1.8" height="13" fill="#0d0d0d"/>
<rect x="579.1" y="109.2" width="3.2" height="3.4" fill="#c0c0c0" rx="0.4"/>
<rect x="582.8" y="105.2" width="2.2" height="13" fill="#26260e"/>
<circle cx="590" cy="107.6" r="2.1" fill="#1a1a1a" stroke="#b4b4b4" stroke-width=".7"/>
<rect x="586.7" y="111" width="3" height="2.6" fill="#8e8e8e" rx="0.3"/>
<rect x="590.6" y="111" width="3" height="2.6" fill="#8e8e8e" rx="0.3"/>
<rect x="586.4" y="114.4" width="7.6" height="3" fill="#080808" rx="0.4"/>
<rect x="587.6" y="115.4" width="5.2" height="1" fill="#3ad048"/>
<rect x="578.4" y="123.1" width="16.1" height="3.3" fill="#505050" rx="0.4"/>
<rect x="579.1" y="124" width="0.8" height="1.4" fill="#999"/>
<rect x="581.8" y="124.1" width="10" height="1.3" fill="#c8c8c8" rx="0.3" opacity=".45"/>
<rect x="592.6" y="124.1" width="0.8" height="1.2" fill="#999"/>
<rect x="579.8" y="128.2" width="1.8" height="13" fill="#0d0d0d"/>
<rect x="579.1" y="132.2" width="3.2" height="3.4" fill="#c0c0c0" rx="0.4"/>
<rect x="582.8" y="128.2" width="2.2" height="13" fill="#26260e"/>
<circle cx="590" cy="130.6" r="2.1" fill="#1a1a1a" stroke="#b4b4b4" stroke-width=".7"/>
<rect x="586.7" y="134" width="3" height="2.6" fill="#8e8e8e" rx="0.3"/>
<rect x="590.6" y="134" width="3" height="2.6" fill="#8e8e8e" rx="0.3"/>
<rect x="586.4" y="137.4" width="7.6" height="3" fill="#080808" rx="0.4"/>
<rect x="587.6" y="138.4" width="5.2" height="1" fill="#3ad048"/>
<rect x="579.2" y="147.5" width="1" height="1" fill="#8a8a8a"/>
<rect x="579.2" y="151.9" width="1" height="1" fill="#8a8a8a"/>
<rect x="579.2" y="146.4" width="1" height="1" fill="#8a8a8a"/>
<rect x="579.2" y="150.6" width="1" height="1" fill="#8a8a8a"/>
<rect x="584.1" y="154.2" width="4.8" height="3" fill="#0a0a0a" rx="0.5" opacity=".55"/>
<rect x="584.7" y="154.9" width="3.6" height="1.6" fill="#bcbcbc" rx="0.3" opacity=".85"/>
<rect x="578" y="158.3" width="16.9" height="16.8" fill="#1a1c1a"/>
<rect x="582.3" y="158.3" width="0.3" height="16.8" fill="#26302a"/>
<rect x="586.5" y="158.3" width="0.3" height="16.8" fill="#26302a"/>
<rect x="590.7" y="158.3" width="0.3" height="16.8" fill="#26302a"/>
<rect x="578" y="162.5" width="16.9" height="0.3" fill="#26302a"/>
<rect x="578" y="166.7" width="16.9" height="0.3" fill="#26302a"/>
<rect x="578" y="170.9" width="16.9" height="0.3" fill="#26302a"/>
<path transform="translate(578 158.3)" d="M1 17 C3 9 4 5 7 5.5 S10 7 12 5.5 S15 5 16 7 L17 17" fill="none" stroke="#3aa860" stroke-width=".8"/>
<rect x="583.9" y="176.4" width="5.2" height="3" fill="#0a0a0a" rx="0.5" opacity=".55"/>
<rect x="584.5" y="177.1" width="4" height="1.6" fill="#bcbcbc" rx="0.3" opacity=".85"/>
<rect x="578.4" y="179.8" width="16.1" height="3.3" fill="#505050" rx="0.4"/>
<rect x="579.1" y="180.7" width="0.8" height="1.4" fill="#999"/>
<rect x="581.8" y="180.8" width="10" height="1.3" fill="#c8c8c8" rx="0.3" opacity=".45"/>
<rect x="592.6" y="180.8" width="0.8" height="1.2" fill="#999"/>
<rect x="578.4" y="184.1" width="16.1" height="3.3" fill="#505050" rx="0.4"/>
<rect x="579.1" y="185" width="0.8" height="1.4" fill="#999"/>
<rect x="581.8" y="185.1" width="10" height="1.3" fill="#c8c8c8" rx="0.3" opacity=".45"/>
<rect x="592.6" y="185.1" width="0.8" height="1.2" fill="#999"/>
<rect x="582.9" y="188.7" width="7.2" height="3" fill="#0a0a0a" rx="0.5" opacity=".55"/>
<rect x="583.5" y="189.4" width="6" height="1.6" fill="#bcbcbc" rx="0.3" opacity=".85"/>
<rect x="578.4" y="192" width="16.1" height="3.3" fill="#4a5a4c" rx="0.4"/>
<rect x="579.1" y="192.9" width="0.8" height="1.4" fill="#999"/>
<rect x="581.8" y="193" width="10" height="1.3" fill="#8ab890" rx="0.3" opacity=".45"/>
<rect x="592.6" y="193" width="0.8" height="1.2" fill="#999"/>
<rect x="578.4" y="198.5" width="16.1" height="1.7" fill="#4a4a4a"/>
<rect x="578.4" y="200.9" width="16.1" height="3.3" fill="#505050" rx="0.4"/>
<rect x="579.1" y="201.8" width="0.8" height="1.4" fill="#999"/>
<rect x="581.8" y="201.9" width="10" height="1.3" fill="#c8c8c8" rx="0.3" opacity=".45"/>
<rect x="592.6" y="201.9" width="0.8" height="1.2" fill="#999"/>
<circle cx="586.5" cy="211.4" r="3" fill="#161616" stroke="#b0b0b0" stroke-width="1"/>
<rect x="586.2" y="208.2" width="0.6" height="1.8" fill="#3ad048"/>
<rect x="578.2" y="217.2" width="16.5" height="2.8" fill="#080808"/>
<rect x="579.2" y="218.1" width="4" height="1" fill="#3ad048"/>
<rect x="587.7" y="218.1" width="5.5" height="1" fill="#3ad048"/>
<rect x="580.7" y="222.7" width="4.5" height="2.9" fill="#5e5e5e" rx="0.4"/>
<rect x="587.7" y="222.7" width="4.5" height="2.9" fill="#b8a0a0" rx="0.4"/>
<rect x="580.7" y="228.6" width="4.5" height="3.2" fill="#5e5e5e" rx="0.4"/>
<rect x="587.7" y="228.6" width="4.5" height="3.2" fill="#5e5e5e" rx="0.4"/>
<rect x="579.6" y="237" width="1.1" height="1" fill="#8a8a8a"/>
<rect x="587.2" y="237" width="1.1" height="1" fill="#8a8a8a"/>
<rect x="579.6" y="242.8" width="1.1" height="1" fill="#8a8a8a"/>
<rect x="587.2" y="242.8" width="1.1" height="1" fill="#8a8a8a"/>
<rect x="579.6" y="248.6" width="1.1" height="1" fill="#8a8a8a"/>
<rect x="587.2" y="248.6" width="1.1" height="1" fill="#8a8a8a"/>
<rect x="579.6" y="254.4" width="1.1" height="1" fill="#8a8a8a"/>
<rect x="587.2" y="254.4" width="1.1" height="1" fill="#8a8a8a"/>
<rect x="579.6" y="260.2" width="1.1" height="1" fill="#8a8a8a"/>
<rect x="587.2" y="260.2" width="1.1" height="1" fill="#8a8a8a"/>
<rect x="579.6" y="266" width="1.1" height="1" fill="#8a8a8a"/>
<rect x="587.2" y="266" width="1.1" height="1" fill="#8a8a8a"/>
<rect x="579.6" y="271.8" width="1.1" height="1" fill="#8a8a8a"/>
<rect x="587.2" y="271.8" width="1.1" height="1" fill="#8a8a8a"/>
<rect x="579.6" y="277.6" width="1.1" height="1" fill="#8a8a8a"/>
<rect x="587.2" y="277.6" width="1.1" height="1" fill="#8a8a8a"/>
<rect x="579.6" y="283.4" width="1.1" height="1" fill="#8a8a8a"/>
<rect x="587.2" y="283.4" width="1.1" height="1" fill="#8a8a8a"/>
<rect x="579.6" y="289.2" width="1.1" height="1" fill="#8a8a8a"/>
<rect x="587.2" y="289.2" width="1.1" height="1" fill="#8a8a8a"/>
<rect x="583.2" y="236" width="1.5" height="55" fill="#0a0a0a"/>
<rect x="581.4" y="249.8" width="5.2" height="7.2" fill="#d4d4d4" rx="0.6"/>
<rect x="581.4" y="253.2" width="5.2" height="0.6" fill="#555"/>
<rect x="590.4" y="236" width="2.6" height="55" fill="#12120c"/>
<rect x="593" y="236" width="0.7" height="55" fill="#45401c"/>
<rect x="590.4" y="258" width="2.6" height="33" fill="#3cc83c"/>
<rect x="590.4" y="236.5" width="2.6" height="4" fill="#c8902a"/>
<rect x="578" y="293.8" width="16.9" height="3.2" fill="#080808"/>
<rect x="579.2" y="294.9" width="4" height="1" fill="#3ad048"/>
<rect x="587.2" y="294.9" width="6" height="1" fill="#3ad048"/>
<rect x="583.7" y="299" width="4.5" height="2.6" fill="#4e4e4e" rx="0.3"/>
<rect x="589.4" y="299" width="4" height="2.6" fill="#4e4e4e" rx="0.3"/>
<rect x="578" y="303" width="16.9" height="4.4" fill="#161616"/>
<text x="586.5" y="306.4" font-size="2.9" fill="#ececec" font-weight="bold" text-anchor="middle" textLength="13.3" lengthAdjust="spacingAndGlyphs">Chorus1</text>
<rect x="578" y="308.8" width="16.9" height="11.2" fill="#060606"/>
<rect x="579.2" y="310.2" width="4" height="1" fill="#3ad048"/>
<rect x="591.2" y="310.2" width="2" height="1" fill="#3ad048"/>
<rect x="579.2" y="313.4" width="4" height="1" fill="#3ad048"/>
<rect x="591.2" y="313.4" width="2" height="1" fill="#3ad048"/>
<rect x="579.2" y="316.6" width="4" height="1" fill="#3ad048"/>
<rect x="591.2" y="316.6" width="2" height="1" fill="#3ad048"/>
<rect x="595.8" y="30.8" width="0.9" height="314.5" fill="#0a0a0a"/>
<rect x="596.7" y="30.8" width="18.5" height="314.5" fill="#152439"/>
<rect x="596.7" y="31" width="18.5" height="5" fill="#3a8ee8"/>
<rect x="596.7" y="340.2" width="18.5" height="4.6" fill="#3a8ee8"/>
<rect x="602.4" y="36" width="7.2" height="3" fill="#0a0a0a" rx="0.5" opacity=".55"/>
<rect x="603" y="36.7" width="6" height="1.6" fill="#bcbcbc" rx="0.3" opacity=".85"/>
<rect x="598.2" y="39.9" width="7" height="3" fill="#3a3a3a" rx="0.4"/>
<rect x="606.2" y="39.9" width="7.5" height="3" fill="#3a3a3a" rx="0.4"/>
<text x="601.7" y="42.2" font-size="1.8" fill="#999" text-anchor="middle">PRE</text>
<text x="609.9" y="42.2" font-size="1.8" fill="#999" text-anchor="middle">MUTE</text>
<rect x="597.7" y="44.3" width="16.5" height="1.6" fill="#454545"/>
<rect x="598.1" y="47.3" width="15.6" height="3" fill="#0a0a0a" rx="0.5" opacity=".55"/>
<rect x="598.8" y="48" width="14.4" height="1.6" fill="#bcbcbc" rx="0.3" opacity=".85"/>
<rect x="597.9" y="51" width="16.1" height="3.3" fill="#505050" rx="0.4"/>
<rect x="598.6" y="51.9" width="0.8" height="1.4" fill="#999"/>
<rect x="601.3" y="52" width="10" height="1.3" fill="#c8c8c8" rx="0.3" opacity=".45"/>
<rect x="612" y="52" width="0.8" height="1.2" fill="#999"/>
<rect x="597.9" y="55.4" width="16.1" height="3.3" fill="#505050" rx="0.4"/>
<rect x="598.6" y="56.3" width="0.8" height="1.4" fill="#999"/>
<rect x="601.3" y="56.4" width="10" height="1.3" fill="#c8c8c8" rx="0.3" opacity=".45"/>
<rect x="612" y="56.4" width="0.8" height="1.2" fill="#999"/>
<rect x="598.7" y="61.2" width="1" height="1" fill="#8a8a8a"/>
<rect x="598.7" y="65.5" width="1" height="1" fill="#8a8a8a"/>
<rect x="598.7" y="69.9" width="1" height="1" fill="#8a8a8a"/>
<rect x="598.9" y="73.6" width="14.2" height="3" fill="#0a0a0a" rx="0.5" opacity=".55"/>
<rect x="599.5" y="74.3" width="13" height="1.6" fill="#bcbcbc" rx="0.3" opacity=".85"/>
<rect x="597.9" y="77.1" width="16.1" height="3.3" fill="#505050" rx="0.4"/>
<rect x="598.6" y="78" width="0.8" height="1.4" fill="#999"/>
<rect x="601.3" y="78.1" width="10" height="1.3" fill="#c8c8c8" rx="0.3" opacity=".45"/>
<rect x="612" y="78.1" width="0.8" height="1.2" fill="#999"/>
<rect x="599.3" y="82.2" width="1.8" height="13" fill="#0d0d0d"/>
<rect x="598.6" y="86.2" width="3.2" height="3.4" fill="#c0c0c0" rx="0.4"/>
<rect x="602.3" y="82.2" width="2.2" height="13" fill="#26260e"/>
<circle cx="609.5" cy="84.6" r="2.1" fill="#1a1a1a" stroke="#b4b4b4" stroke-width=".7"/>
<rect x="606.2" y="88" width="3" height="2.6" fill="#8e8e8e" rx="0.3"/>
<rect x="610.1" y="88" width="3" height="2.6" fill="#8e8e8e" rx="0.3"/>
<rect x="605.9" y="91.4" width="7.6" height="3" fill="#080808" rx="0.4"/>
<rect x="607.1" y="92.4" width="5.2" height="1" fill="#3ad048"/>
<rect x="597.9" y="100.1" width="16.1" height="3.3" fill="#505050" rx="0.4"/>
<rect x="598.6" y="101" width="0.8" height="1.4" fill="#999"/>
<rect x="601.3" y="101.1" width="10" height="1.3" fill="#c8c8c8" rx="0.3" opacity=".45"/>
<rect x="612" y="101.1" width="0.8" height="1.2" fill="#999"/>
<rect x="599.3" y="105.2" width="1.8" height="13" fill="#0d0d0d"/>
<rect x="598.6" y="109.2" width="3.2" height="3.4" fill="#c0c0c0" rx="0.4"/>
<rect x="602.3" y="105.2" width="2.2" height="13" fill="#26260e"/>
<circle cx="609.5" cy="107.6" r="2.1" fill="#1a1a1a" stroke="#b4b4b4" stroke-width=".7"/>
<rect x="606.2" y="111" width="3" height="2.6" fill="#8e8e8e" rx="0.3"/>
<rect x="610.1" y="111" width="3" height="2.6" fill="#8e8e8e" rx="0.3"/>
<rect x="605.9" y="114.4" width="7.6" height="3" fill="#080808" rx="0.4"/>
<rect x="607.1" y="115.4" width="5.2" height="1" fill="#3ad048"/>
<rect x="597.9" y="123.1" width="16.1" height="3.3" fill="#505050" rx="0.4"/>
<rect x="598.6" y="124" width="0.8" height="1.4" fill="#999"/>
<rect x="601.3" y="124.1" width="10" height="1.3" fill="#c8c8c8" rx="0.3" opacity=".45"/>
<rect x="612" y="124.1" width="0.8" height="1.2" fill="#999"/>
<rect x="599.3" y="128.2" width="1.8" height="13" fill="#0d0d0d"/>
<rect x="598.6" y="132.2" width="3.2" height="3.4" fill="#c0c0c0" rx="0.4"/>
<rect x="602.3" y="128.2" width="2.2" height="13" fill="#26260e"/>
<circle cx="609.5" cy="130.6" r="2.1" fill="#1a1a1a" stroke="#b4b4b4" stroke-width=".7"/>
<rect x="606.2" y="134" width="3" height="2.6" fill="#8e8e8e" rx="0.3"/>
<rect x="610.1" y="134" width="3" height="2.6" fill="#8e8e8e" rx="0.3"/>
<rect x="605.9" y="137.4" width="7.6" height="3" fill="#080808" rx="0.4"/>
<rect x="607.1" y="138.4" width="5.2" height="1" fill="#3ad048"/>
<rect x="598.7" y="147.5" width="1" height="1" fill="#8a8a8a"/>
<rect x="598.7" y="151.9" width="1" height="1" fill="#8a8a8a"/>
<rect x="598.7" y="146.4" width="1" height="1" fill="#8a8a8a"/>
<rect x="598.7" y="150.6" width="1" height="1" fill="#8a8a8a"/>
<rect x="603.6" y="154.2" width="4.8" height="3" fill="#0a0a0a" rx="0.5" opacity=".55"/>
<rect x="604.2" y="154.9" width="3.6" height="1.6" fill="#bcbcbc" rx="0.3" opacity=".85"/>
<rect x="597.5" y="158.3" width="16.9" height="16.8" fill="#1a1c1a"/>
<rect x="601.7" y="158.3" width="0.3" height="16.8" fill="#26302a"/>
<rect x="606" y="158.3" width="0.3" height="16.8" fill="#26302a"/>
<rect x="610.2" y="158.3" width="0.3" height="16.8" fill="#26302a"/>
<rect x="597.5" y="162.5" width="16.9" height="0.3" fill="#26302a"/>
<rect x="597.5" y="166.7" width="16.9" height="0.3" fill="#26302a"/>
<rect x="597.5" y="170.9" width="16.9" height="0.3" fill="#26302a"/>
<path transform="translate(597.5 158.3)" d="M1 17 C3 9 4 5 7 5.5 S10 7 12 5.5 S15 5 16 7 L17 17" fill="none" stroke="#3aa860" stroke-width=".8"/>
<rect x="603.4" y="176.4" width="5.2" height="3" fill="#0a0a0a" rx="0.5" opacity=".55"/>
<rect x="604" y="177.1" width="4" height="1.6" fill="#bcbcbc" rx="0.3" opacity=".85"/>
<rect x="597.9" y="179.8" width="16.1" height="3.3" fill="#505050" rx="0.4"/>
<rect x="598.6" y="180.7" width="0.8" height="1.4" fill="#999"/>
<rect x="601.3" y="180.8" width="10" height="1.3" fill="#c8c8c8" rx="0.3" opacity=".45"/>
<rect x="612" y="180.8" width="0.8" height="1.2" fill="#999"/>
<rect x="597.9" y="184.1" width="16.1" height="3.3" fill="#505050" rx="0.4"/>
<rect x="598.6" y="185" width="0.8" height="1.4" fill="#999"/>
<rect x="601.3" y="185.1" width="10" height="1.3" fill="#c8c8c8" rx="0.3" opacity=".45"/>
<rect x="612" y="185.1" width="0.8" height="1.2" fill="#999"/>
<rect x="602.4" y="188.7" width="7.2" height="3" fill="#0a0a0a" rx="0.5" opacity=".55"/>
<rect x="603" y="189.4" width="6" height="1.6" fill="#bcbcbc" rx="0.3" opacity=".85"/>
<rect x="597.9" y="192" width="16.1" height="3.3" fill="#4a5a4c" rx="0.4"/>
<rect x="598.6" y="192.9" width="0.8" height="1.4" fill="#999"/>
<rect x="601.3" y="193" width="10" height="1.3" fill="#8ab890" rx="0.3" opacity=".45"/>
<rect x="612" y="193" width="0.8" height="1.2" fill="#999"/>
<rect x="597.9" y="198.5" width="16.1" height="1.7" fill="#4a4a4a"/>
<rect x="597.9" y="200.9" width="16.1" height="3.3" fill="#505050" rx="0.4"/>
<rect x="598.6" y="201.8" width="0.8" height="1.4" fill="#999"/>
<rect x="601.3" y="201.9" width="10" height="1.3" fill="#c8c8c8" rx="0.3" opacity=".45"/>
<rect x="612" y="201.9" width="0.8" height="1.2" fill="#999"/>
<circle cx="606" cy="211.4" r="3" fill="#161616" stroke="#b0b0b0" stroke-width="1"/>
<rect x="605.7" y="208.2" width="0.6" height="1.8" fill="#3ad048"/>
<rect x="597.7" y="217.2" width="16.5" height="2.8" fill="#080808"/>
<rect x="598.7" y="218.1" width="4" height="1" fill="#3ad048"/>
<rect x="607.2" y="218.1" width="5.5" height="1" fill="#3ad048"/>
<rect x="600.2" y="222.7" width="4.5" height="2.9" fill="#5e5e5e" rx="0.4"/>
<rect x="607.2" y="222.7" width="4.5" height="2.9" fill="#b8a0a0" rx="0.4"/>
<rect x="600.2" y="228.6" width="4.5" height="3.2" fill="#5e5e5e" rx="0.4"/>
<rect x="607.2" y="228.6" width="4.5" height="3.2" fill="#5e5e5e" rx="0.4"/>
<rect x="599.1" y="237" width="1.1" height="1" fill="#8a8a8a"/>
<rect x="606.7" y="237" width="1.1" height="1" fill="#8a8a8a"/>
<rect x="599.1" y="242.8" width="1.1" height="1" fill="#8a8a8a"/>
<rect x="606.7" y="242.8" width="1.1" height="1" fill="#8a8a8a"/>
<rect x="599.1" y="248.6" width="1.1" height="1" fill="#8a8a8a"/>
<rect x="606.7" y="248.6" width="1.1" height="1" fill="#8a8a8a"/>
<rect x="599.1" y="254.4" width="1.1" height="1" fill="#8a8a8a"/>
<rect x="606.7" y="254.4" width="1.1" height="1" fill="#8a8a8a"/>
<rect x="599.1" y="260.2" width="1.1" height="1" fill="#8a8a8a"/>
<rect x="606.7" y="260.2" width="1.1" height="1" fill="#8a8a8a"/>
<rect x="599.1" y="266" width="1.1" height="1" fill="#8a8a8a"/>
<rect x="606.7" y="266" width="1.1" height="1" fill="#8a8a8a"/>
<rect x="599.1" y="271.8" width="1.1" height="1" fill="#8a8a8a"/>
<rect x="606.7" y="271.8" width="1.1" height="1" fill="#8a8a8a"/>
<rect x="599.1" y="277.6" width="1.1" height="1" fill="#8a8a8a"/>
<rect x="606.7" y="277.6" width="1.1" height="1" fill="#8a8a8a"/>
<rect x="599.1" y="283.4" width="1.1" height="1" fill="#8a8a8a"/>
<rect x="606.7" y="283.4" width="1.1" height="1" fill="#8a8a8a"/>
<rect x="599.1" y="289.2" width="1.1" height="1" fill="#8a8a8a"/>
<rect x="606.7" y="289.2" width="1.1" height="1" fill="#8a8a8a"/>
<rect x="602.7" y="236" width="1.5" height="55" fill="#0a0a0a"/>
<rect x="600.9" y="249.8" width="5.2" height="7.2" fill="#d4d4d4" rx="0.6"/>
<rect x="600.9" y="253.2" width="5.2" height="0.6" fill="#555"/>
<rect x="609.9" y="236" width="2.6" height="55" fill="#12120c"/>
<rect x="612.5" y="236" width="0.7" height="55" fill="#45401c"/>
<rect x="609.9" y="258" width="2.6" height="33" fill="#3cc83c"/>
<rect x="609.9" y="236.5" width="2.6" height="4" fill="#c8902a"/>
<rect x="597.5" y="293.8" width="16.9" height="3.2" fill="#080808"/>
<rect x="598.7" y="294.9" width="4" height="1" fill="#3ad048"/>
<rect x="606.7" y="294.9" width="6" height="1" fill="#3ad048"/>
<rect x="603.2" y="299" width="4.5" height="2.6" fill="#4e4e4e" rx="0.3"/>
<rect x="608.9" y="299" width="4" height="2.6" fill="#4e4e4e" rx="0.3"/>
<rect x="597.5" y="303" width="16.9" height="4.4" fill="#161616"/>
<text x="606" y="306.4" font-size="2.9" fill="#ececec" font-weight="bold" text-anchor="middle" textLength="13.3" lengthAdjust="spacingAndGlyphs">Chorus2</text>
<rect x="597.5" y="308.8" width="16.9" height="11.2" fill="#060606"/>
<rect x="598.7" y="310.2" width="4" height="1" fill="#3ad048"/>
<rect x="610.7" y="310.2" width="2" height="1" fill="#3ad048"/>
<rect x="598.7" y="313.4" width="4" height="1" fill="#3ad048"/>
<rect x="610.7" y="313.4" width="2" height="1" fill="#3ad048"/>
<rect x="598.7" y="316.6" width="4" height="1" fill="#3ad048"/>
<rect x="610.7" y="316.6" width="2" height="1" fill="#3ad048"/>
<rect x="615.2" y="30.8" width="0.9" height="314.5" fill="#0a0a0a"/>
<rect x="616.1" y="30.8" width="18.5" height="314.5" fill="#3c3c3c"/>
<rect x="616.1" y="31" width="18.5" height="5" fill="#1e1e1e"/>
<rect x="616.1" y="340.2" width="18.5" height="4.6" fill="#1c1c1c"/>
<rect x="617.6" y="47.3" width="15.6" height="3" fill="#0a0a0a" rx="0.5" opacity=".55"/>
<rect x="618.2" y="48" width="14.4" height="1.6" fill="#bcbcbc" rx="0.3" opacity=".85"/>
<rect x="617.3" y="51" width="16.1" height="3.3" fill="#505050" rx="0.4"/>
<rect x="618" y="51.9" width="0.8" height="1.4" fill="#999"/>
<rect x="620.7" y="52" width="10" height="1.3" fill="#c8c8c8" rx="0.3" opacity=".45"/>
<rect x="631.5" y="52" width="0.8" height="1.2" fill="#999"/>
<rect x="618.1" y="56.8" width="1" height="1" fill="#8a8a8a"/>
<rect x="617.3" y="59.8" width="16.1" height="3.3" fill="#505050" rx="0.4"/>
<rect x="618" y="60.7" width="0.8" height="1.4" fill="#999"/>
<rect x="620.7" y="60.8" width="10" height="1.3" fill="#c8c8c8" rx="0.3" opacity=".45"/>
<rect x="631.5" y="60.8" width="0.8" height="1.2" fill="#999"/>
<rect x="618.1" y="65.5" width="1" height="1" fill="#8a8a8a"/>
<rect x="618.1" y="69.9" width="1" height="1" fill="#8a8a8a"/>
<rect x="618.3" y="73.6" width="14.2" height="3" fill="#0a0a0a" rx="0.5" opacity=".55"/>
<rect x="618.9" y="74.3" width="13" height="1.6" fill="#bcbcbc" rx="0.3" opacity=".85"/>
<rect x="618.1" y="78.5" width="1" height="1" fill="#8a8a8a"/>
<rect x="618.1" y="101.5" width="1" height="1" fill="#8a8a8a"/>
<rect x="618.1" y="124.5" width="1" height="1" fill="#8a8a8a"/>
<rect x="618.1" y="147.5" width="1" height="1" fill="#8a8a8a"/>
<rect x="618.1" y="151.9" width="1" height="1" fill="#8a8a8a"/>
<rect x="618.1" y="146.4" width="1" height="1" fill="#8a8a8a"/>
<rect x="618.1" y="150.6" width="1" height="1" fill="#8a8a8a"/>
<rect x="623" y="154.2" width="4.8" height="3" fill="#0a0a0a" rx="0.5" opacity=".55"/>
<rect x="623.6" y="154.9" width="3.6" height="1.6" fill="#bcbcbc" rx="0.3" opacity=".85"/>
<rect x="616.9" y="158.3" width="16.9" height="16.8" fill="#1a1c1a"/>
<rect x="621.2" y="158.3" width="0.3" height="16.8" fill="#26302a"/>
<rect x="625.4" y="158.3" width="0.3" height="16.8" fill="#26302a"/>
<rect x="629.6" y="158.3" width="0.3" height="16.8" fill="#26302a"/>
<rect x="616.9" y="162.5" width="16.9" height="0.3" fill="#26302a"/>
<rect x="616.9" y="166.7" width="16.9" height="0.3" fill="#26302a"/>
<rect x="616.9" y="170.9" width="16.9" height="0.3" fill="#26302a"/>
<path transform="translate(616.9 158.3)" d="M1 17 C3 9 4 5 7 5.5 S10 7 12 5.5 S15 5 16 7 L17 17" fill="none" stroke="#3aa860" stroke-width=".8"/>
<rect x="622.8" y="176.4" width="5.2" height="3" fill="#0a0a0a" rx="0.5" opacity=".55"/>
<rect x="623.4" y="177.1" width="4" height="1.6" fill="#bcbcbc" rx="0.3" opacity=".85"/>
<rect x="617.3" y="179.8" width="16.1" height="3.3" fill="#505050" rx="0.4"/>
<rect x="618" y="180.7" width="0.8" height="1.4" fill="#999"/>
<rect x="620.7" y="180.8" width="10" height="1.3" fill="#c8c8c8" rx="0.3" opacity=".45"/>
<rect x="631.5" y="180.8" width="0.8" height="1.2" fill="#999"/>
<rect x="617.3" y="184.1" width="16.1" height="3.3" fill="#505050" rx="0.4"/>
<rect x="618" y="185" width="0.8" height="1.4" fill="#999"/>
<rect x="620.7" y="185.1" width="10" height="1.3" fill="#c8c8c8" rx="0.3" opacity=".45"/>
<rect x="631.5" y="185.1" width="0.8" height="1.2" fill="#999"/>
<rect x="621.8" y="188.7" width="7.2" height="3" fill="#0a0a0a" rx="0.5" opacity=".55"/>
<rect x="622.4" y="189.4" width="6" height="1.6" fill="#bcbcbc" rx="0.3" opacity=".85"/>
<rect x="617.3" y="192" width="16.1" height="3.3" fill="#4a5a4c" rx="0.4"/>
<rect x="618" y="192.9" width="0.8" height="1.4" fill="#999"/>
<rect x="620.7" y="193" width="10" height="1.3" fill="#8ab890" rx="0.3" opacity=".45"/>
<rect x="631.5" y="193" width="0.8" height="1.2" fill="#999"/>
<rect x="617.3" y="198.5" width="16.1" height="1.7" fill="#4a4a4a"/>
<rect x="617.3" y="200.9" width="16.1" height="3.3" fill="#505050" rx="0.4"/>
<rect x="618" y="201.8" width="0.8" height="1.4" fill="#999"/>
<rect x="620.7" y="201.9" width="10" height="1.3" fill="#c8c8c8" rx="0.3" opacity=".45"/>
<rect x="631.5" y="201.9" width="0.8" height="1.2" fill="#999"/>
<circle cx="625.4" cy="211.4" r="3" fill="#161616" stroke="#b0b0b0" stroke-width="1"/>
<rect x="625.1" y="208.2" width="0.6" height="1.8" fill="#3ad048"/>
<rect x="617.1" y="217.2" width="16.5" height="2.8" fill="#080808"/>
<rect x="618.1" y="218.1" width="4" height="1" fill="#3ad048"/>
<rect x="626.6" y="218.1" width="5.5" height="1" fill="#3ad048"/>
<rect x="619.6" y="222.7" width="4.5" height="2.9" fill="#5e5e5e" rx="0.4"/>
<rect x="626.6" y="222.7" width="4.5" height="2.9" fill="#b8a0a0" rx="0.4"/>
<rect x="619.6" y="228.6" width="4.5" height="3.2" fill="#5e5e5e" rx="0.4"/>
<rect x="626.6" y="228.6" width="4.5" height="3.2" fill="#5e5e5e" rx="0.4"/>
<rect x="618.5" y="237" width="1.1" height="1" fill="#8a8a8a"/>
<rect x="626.1" y="237" width="1.1" height="1" fill="#8a8a8a"/>
<rect x="618.5" y="242.8" width="1.1" height="1" fill="#8a8a8a"/>
<rect x="626.1" y="242.8" width="1.1" height="1" fill="#8a8a8a"/>
<rect x="618.5" y="248.6" width="1.1" height="1" fill="#8a8a8a"/>
<rect x="626.1" y="248.6" width="1.1" height="1" fill="#8a8a8a"/>
<rect x="618.5" y="254.4" width="1.1" height="1" fill="#8a8a8a"/>
<rect x="626.1" y="254.4" width="1.1" height="1" fill="#8a8a8a"/>
<rect x="618.5" y="260.2" width="1.1" height="1" fill="#8a8a8a"/>
<rect x="626.1" y="260.2" width="1.1" height="1" fill="#8a8a8a"/>
<rect x="618.5" y="266" width="1.1" height="1" fill="#8a8a8a"/>
<rect x="626.1" y="266" width="1.1" height="1" fill="#8a8a8a"/>
<rect x="618.5" y="271.8" width="1.1" height="1" fill="#8a8a8a"/>
<rect x="626.1" y="271.8" width="1.1" height="1" fill="#8a8a8a"/>
<rect x="618.5" y="277.6" width="1.1" height="1" fill="#8a8a8a"/>
<rect x="626.1" y="277.6" width="1.1" height="1" fill="#8a8a8a"/>
<rect x="618.5" y="283.4" width="1.1" height="1" fill="#8a8a8a"/>
<rect x="626.1" y="283.4" width="1.1" height="1" fill="#8a8a8a"/>
<rect x="618.5" y="289.2" width="1.1" height="1" fill="#8a8a8a"/>
<rect x="626.1" y="289.2" width="1.1" height="1" fill="#8a8a8a"/>
<rect x="622.1" y="236" width="1.5" height="55" fill="#0a0a0a"/>
<rect x="620.3" y="247.9" width="5.2" height="7.2" fill="#d4d4d4" rx="0.6"/>
<rect x="620.3" y="251.3" width="5.2" height="0.6" fill="#555"/>
<rect x="629.3" y="236" width="2.6" height="55" fill="#12120c"/>
<rect x="631.9" y="236" width="0.7" height="55" fill="#45401c"/>
<rect x="616.9" y="293.8" width="16.9" height="3.2" fill="#080808"/>
<rect x="618.1" y="294.9" width="4" height="1" fill="#3ad048"/>
<rect x="626.1" y="294.9" width="6" height="1" fill="#3ad048"/>
<rect x="622.6" y="299" width="4.5" height="2.6" fill="#4e4e4e" rx="0.3"/>
<rect x="628.3" y="299" width="4" height="2.6" fill="#4e4e4e" rx="0.3"/>
<rect x="616.9" y="303" width="16.9" height="4.4" fill="#161616"/>
<text x="625.4" y="306.4" font-size="2.9" fill="#ececec" font-weight="bold" text-anchor="middle" textLength="16.1" lengthAdjust="spacingAndGlyphs">End Harma</text>
<rect x="616.9" y="308.8" width="16.9" height="11.2" fill="#060606"/>
<rect x="618.1" y="310.2" width="4" height="1" fill="#3ad048"/>
<rect x="630.1" y="310.2" width="2" height="1" fill="#3ad048"/>
<rect x="618.1" y="313.4" width="4" height="1" fill="#3ad048"/>
<rect x="630.1" y="313.4" width="2" height="1" fill="#3ad048"/>
<rect x="618.1" y="316.6" width="4" height="1" fill="#3ad048"/>
<rect x="630.1" y="316.6" width="2" height="1" fill="#3ad048"/>
<rect x="634.7" y="30.8" width="0.9" height="314.5" fill="#0a0a0a"/>
<rect x="635.6" y="30.8" width="18.5" height="314.5" fill="#141e3c"/>
<rect x="635.6" y="31" width="18.5" height="5" fill="#3c48d8"/>
<rect x="635.6" y="340.2" width="18.5" height="4.6" fill="#3c48d8"/>
<rect x="641.2" y="36" width="7.2" height="3" fill="#0a0a0a" rx="0.5" opacity=".55"/>
<rect x="641.8" y="36.7" width="6" height="1.6" fill="#bcbcbc" rx="0.3" opacity=".85"/>
<rect x="637.1" y="39.9" width="7" height="3" fill="#3a3a3a" rx="0.4"/>
<rect x="645.1" y="39.9" width="7.5" height="3" fill="#3a3a3a" rx="0.4"/>
<text x="640.6" y="42.2" font-size="1.8" fill="#999" text-anchor="middle">PRE</text>
<text x="648.8" y="42.2" font-size="1.8" fill="#999" text-anchor="middle">MUTE</text>
<rect x="636.6" y="44.3" width="16.5" height="1.6" fill="#454545"/>
<rect x="637" y="47.3" width="15.6" height="3" fill="#0a0a0a" rx="0.5" opacity=".55"/>
<rect x="637.6" y="48" width="14.4" height="1.6" fill="#bcbcbc" rx="0.3" opacity=".85"/>
<rect x="637.6" y="52.4" width="1" height="1" fill="#8a8a8a"/>
<rect x="637.6" y="56.8" width="1" height="1" fill="#8a8a8a"/>
<rect x="637.6" y="61.2" width="1" height="1" fill="#8a8a8a"/>
<rect x="637.6" y="65.5" width="1" height="1" fill="#8a8a8a"/>
<rect x="637.6" y="69.9" width="1" height="1" fill="#8a8a8a"/>
<rect x="637.7" y="73.6" width="14.2" height="3" fill="#0a0a0a" rx="0.5" opacity=".55"/>
<rect x="638.3" y="74.3" width="13" height="1.6" fill="#bcbcbc" rx="0.3" opacity=".85"/>
<rect x="636.8" y="77.1" width="16.1" height="3.3" fill="#505050" rx="0.4"/>
<rect x="637.5" y="78" width="0.8" height="1.4" fill="#999"/>
<rect x="640.2" y="78.1" width="10" height="1.3" fill="#c8c8c8" rx="0.3" opacity=".45"/>
<rect x="650.9" y="78.1" width="0.8" height="1.2" fill="#999"/>
<rect x="638.2" y="82.2" width="1.8" height="13" fill="#0d0d0d"/>
<rect x="637.5" y="86.2" width="3.2" height="3.4" fill="#c0c0c0" rx="0.4"/>
<rect x="641.2" y="82.2" width="2.2" height="13" fill="#26260e"/>
<circle cx="648.4" cy="84.6" r="2.1" fill="#1a1a1a" stroke="#b4b4b4" stroke-width=".7"/>
<rect x="645.1" y="88" width="3" height="2.6" fill="#8e8e8e" rx="0.3"/>
<rect x="649" y="88" width="3" height="2.6" fill="#8e8e8e" rx="0.3"/>
<rect x="644.8" y="91.4" width="7.6" height="3" fill="#080808" rx="0.4"/>
<rect x="646" y="92.4" width="5.2" height="1" fill="#3ad048"/>
<rect x="636.8" y="100.1" width="16.1" height="3.3" fill="#505050" rx="0.4"/>
<rect x="637.5" y="101" width="0.8" height="1.4" fill="#999"/>
<rect x="640.2" y="101.1" width="10" height="1.3" fill="#c8c8c8" rx="0.3" opacity=".45"/>
<rect x="650.9" y="101.1" width="0.8" height="1.2" fill="#999"/>
<rect x="638.2" y="105.2" width="1.8" height="13" fill="#0d0d0d"/>
<rect x="637.5" y="109.2" width="3.2" height="3.4" fill="#c0c0c0" rx="0.4"/>
<rect x="641.2" y="105.2" width="2.2" height="13" fill="#26260e"/>
<circle cx="648.4" cy="107.6" r="2.1" fill="#1a1a1a" stroke="#b4b4b4" stroke-width=".7"/>
<rect x="645.1" y="111" width="3" height="2.6" fill="#8e8e8e" rx="0.3"/>
<rect x="649" y="111" width="3" height="2.6" fill="#8e8e8e" rx="0.3"/>
<rect x="644.8" y="114.4" width="7.6" height="3" fill="#080808" rx="0.4"/>
<rect x="646" y="115.4" width="5.2" height="1" fill="#3ad048"/>
<rect x="636.8" y="123.1" width="16.1" height="3.3" fill="#505050" rx="0.4"/>
<rect x="637.5" y="124" width="0.8" height="1.4" fill="#999"/>
<rect x="640.2" y="124.1" width="10" height="1.3" fill="#c8c8c8" rx="0.3" opacity=".45"/>
<rect x="650.9" y="124.1" width="0.8" height="1.2" fill="#999"/>
<rect x="638.2" y="128.2" width="1.8" height="13" fill="#0d0d0d"/>
<rect x="637.5" y="132.2" width="3.2" height="3.4" fill="#c0c0c0" rx="0.4"/>
<rect x="641.2" y="128.2" width="2.2" height="13" fill="#26260e"/>
<circle cx="648.4" cy="130.6" r="2.1" fill="#1a1a1a" stroke="#b4b4b4" stroke-width=".7"/>
<rect x="645.1" y="134" width="3" height="2.6" fill="#8e8e8e" rx="0.3"/>
<rect x="649" y="134" width="3" height="2.6" fill="#8e8e8e" rx="0.3"/>
<rect x="644.8" y="137.4" width="7.6" height="3" fill="#080808" rx="0.4"/>
<rect x="646" y="138.4" width="5.2" height="1" fill="#3ad048"/>
<rect x="637.6" y="147.5" width="1" height="1" fill="#8a8a8a"/>
<rect x="637.6" y="151.9" width="1" height="1" fill="#8a8a8a"/>
<rect x="637.6" y="146.4" width="1" height="1" fill="#8a8a8a"/>
<rect x="637.6" y="150.6" width="1" height="1" fill="#8a8a8a"/>
<rect x="642.4" y="154.2" width="4.8" height="3" fill="#0a0a0a" rx="0.5" opacity=".55"/>
<rect x="643" y="154.9" width="3.6" height="1.6" fill="#bcbcbc" rx="0.3" opacity=".85"/>
<rect x="636.4" y="158.3" width="16.9" height="16.8" fill="#1a1c1a"/>
<rect x="640.6" y="158.3" width="0.3" height="16.8" fill="#26302a"/>
<rect x="644.8" y="158.3" width="0.3" height="16.8" fill="#26302a"/>
<rect x="649.1" y="158.3" width="0.3" height="16.8" fill="#26302a"/>
<rect x="636.4" y="162.5" width="16.9" height="0.3" fill="#26302a"/>
<rect x="636.4" y="166.7" width="16.9" height="0.3" fill="#26302a"/>
<rect x="636.4" y="170.9" width="16.9" height="0.3" fill="#26302a"/>
<path transform="translate(636.4 158.3)" d="M1 17 C3 9 4 5 7 5.5 S10 7 12 5.5 S15 5 16 7 L17 17" fill="none" stroke="#3aa860" stroke-width=".8"/>
<rect x="642.2" y="176.4" width="5.2" height="3" fill="#0a0a0a" rx="0.5" opacity=".55"/>
<rect x="642.8" y="177.1" width="4" height="1.6" fill="#bcbcbc" rx="0.3" opacity=".85"/>
<rect x="636.8" y="179.8" width="16.1" height="3.3" fill="#505050" rx="0.4"/>
<rect x="637.5" y="180.7" width="0.8" height="1.4" fill="#999"/>
<rect x="640.2" y="180.8" width="10" height="1.3" fill="#c8c8c8" rx="0.3" opacity=".45"/>
<rect x="650.9" y="180.8" width="0.8" height="1.2" fill="#999"/>
<rect x="636.8" y="184.1" width="16.1" height="3.3" fill="#505050" rx="0.4"/>
<rect x="637.5" y="185" width="0.8" height="1.4" fill="#999"/>
<rect x="640.2" y="185.1" width="10" height="1.3" fill="#c8c8c8" rx="0.3" opacity=".45"/>
<rect x="650.9" y="185.1" width="0.8" height="1.2" fill="#999"/>
<rect x="641.2" y="188.7" width="7.2" height="3" fill="#0a0a0a" rx="0.5" opacity=".55"/>
<rect x="641.8" y="189.4" width="6" height="1.6" fill="#bcbcbc" rx="0.3" opacity=".85"/>
<rect x="636.8" y="192" width="16.1" height="3.3" fill="#4a5a4c" rx="0.4"/>
<rect x="637.5" y="192.9" width="0.8" height="1.4" fill="#999"/>
<rect x="640.2" y="193" width="10" height="1.3" fill="#8ab890" rx="0.3" opacity=".45"/>
<rect x="650.9" y="193" width="0.8" height="1.2" fill="#999"/>
<rect x="636.8" y="198.5" width="16.1" height="1.7" fill="#4a4a4a"/>
<rect x="636.8" y="200.9" width="16.1" height="3.3" fill="#505050" rx="0.4"/>
<rect x="637.5" y="201.8" width="0.8" height="1.4" fill="#999"/>
<rect x="640.2" y="201.9" width="10" height="1.3" fill="#c8c8c8" rx="0.3" opacity=".45"/>
<rect x="650.9" y="201.9" width="0.8" height="1.2" fill="#999"/>
<circle cx="644.8" cy="211.4" r="3" fill="#161616" stroke="#b0b0b0" stroke-width="1"/>
<rect x="644.5" y="208.2" width="0.6" height="1.8" fill="#3ad048"/>
<rect x="636.6" y="217.2" width="16.5" height="2.8" fill="#080808"/>
<rect x="637.6" y="218.1" width="4" height="1" fill="#3ad048"/>
<rect x="646.1" y="218.1" width="5.5" height="1" fill="#3ad048"/>
<rect x="639.1" y="222.7" width="4.5" height="2.9" fill="#5e5e5e" rx="0.4"/>
<rect x="646.1" y="222.7" width="4.5" height="2.9" fill="#b8a0a0" rx="0.4"/>
<rect x="639.1" y="228.6" width="4.5" height="3.2" fill="#5e5e5e" rx="0.4"/>
<rect x="646.1" y="228.6" width="4.5" height="3.2" fill="#5e5e5e" rx="0.4"/>
<rect x="638" y="237" width="1.1" height="1" fill="#8a8a8a"/>
<rect x="645.6" y="237" width="1.1" height="1" fill="#8a8a8a"/>
<rect x="638" y="242.8" width="1.1" height="1" fill="#8a8a8a"/>
<rect x="645.6" y="242.8" width="1.1" height="1" fill="#8a8a8a"/>
<rect x="638" y="248.6" width="1.1" height="1" fill="#8a8a8a"/>
<rect x="645.6" y="248.6" width="1.1" height="1" fill="#8a8a8a"/>
<rect x="638" y="254.4" width="1.1" height="1" fill="#8a8a8a"/>
<rect x="645.6" y="254.4" width="1.1" height="1" fill="#8a8a8a"/>
<rect x="638" y="260.2" width="1.1" height="1" fill="#8a8a8a"/>
<rect x="645.6" y="260.2" width="1.1" height="1" fill="#8a8a8a"/>
<rect x="638" y="266" width="1.1" height="1" fill="#8a8a8a"/>
<rect x="645.6" y="266" width="1.1" height="1" fill="#8a8a8a"/>
<rect x="638" y="271.8" width="1.1" height="1" fill="#8a8a8a"/>
<rect x="645.6" y="271.8" width="1.1" height="1" fill="#8a8a8a"/>
<rect x="638" y="277.6" width="1.1" height="1" fill="#8a8a8a"/>
<rect x="645.6" y="277.6" width="1.1" height="1" fill="#8a8a8a"/>
<rect x="638" y="283.4" width="1.1" height="1" fill="#8a8a8a"/>
<rect x="645.6" y="283.4" width="1.1" height="1" fill="#8a8a8a"/>
<rect x="638" y="289.2" width="1.1" height="1" fill="#8a8a8a"/>
<rect x="645.6" y="289.2" width="1.1" height="1" fill="#8a8a8a"/>
<rect x="641.6" y="236" width="1.5" height="55" fill="#0a0a0a"/>
<rect x="639.8" y="251.2" width="5.2" height="7.2" fill="#d4d4d4" rx="0.6"/>
<rect x="639.8" y="254.6" width="5.2" height="0.6" fill="#555"/>
<rect x="648.8" y="236" width="2.6" height="55" fill="#12120c"/>
<rect x="651.4" y="236" width="0.7" height="55" fill="#45401c"/>
<rect x="636.4" y="293.8" width="16.9" height="3.2" fill="#080808"/>
<rect x="637.6" y="294.9" width="4" height="1" fill="#3ad048"/>
<rect x="645.6" y="294.9" width="6" height="1" fill="#3ad048"/>
<rect x="642.1" y="299" width="4.5" height="2.6" fill="#4e4e4e" rx="0.3"/>
<rect x="647.8" y="299" width="4" height="2.6" fill="#4e4e4e" rx="0.3"/>
<rect x="636.4" y="303" width="16.9" height="4.4" fill="#161616"/>
<text x="644.8" y="306.4" font-size="2.9" fill="#ececec" font-weight="bold" text-anchor="middle" textLength="16.1" lengthAdjust="spacingAndGlyphs">A16EndHm1</text>
<rect x="636.4" y="308.8" width="16.9" height="11.2" fill="#060606"/>
<rect x="637.6" y="310.2" width="4" height="1" fill="#3ad048"/>
<rect x="649.6" y="310.2" width="2" height="1" fill="#3ad048"/>
<rect x="637.6" y="313.4" width="4" height="1" fill="#3ad048"/>
<rect x="649.6" y="313.4" width="2" height="1" fill="#3ad048"/>
<rect x="637.6" y="316.6" width="4" height="1" fill="#3ad048"/>
<rect x="649.6" y="316.6" width="2" height="1" fill="#3ad048"/>
<rect x="654.1" y="30.8" width="0.9" height="314.5" fill="#0a0a0a"/>
<rect x="655" y="30.8" width="18.5" height="314.5" fill="#141e3c"/>
<rect x="655" y="31" width="18.5" height="5" fill="#3c48d8"/>
<rect x="655" y="340.2" width="18.5" height="4.6" fill="#3c48d8"/>
<rect x="660.7" y="36" width="7.2" height="3" fill="#0a0a0a" rx="0.5" opacity=".55"/>
<rect x="661.3" y="36.7" width="6" height="1.6" fill="#bcbcbc" rx="0.3" opacity=".85"/>
<rect x="656.5" y="39.9" width="7" height="3" fill="#3a3a3a" rx="0.4"/>
<rect x="664.5" y="39.9" width="7.5" height="3" fill="#3a3a3a" rx="0.4"/>
<text x="660" y="42.2" font-size="1.8" fill="#999" text-anchor="middle">PRE</text>
<text x="668.2" y="42.2" font-size="1.8" fill="#999" text-anchor="middle">MUTE</text>
<rect x="656" y="44.3" width="16.5" height="1.6" fill="#454545"/>
<rect x="656.5" y="47.3" width="15.6" height="3" fill="#0a0a0a" rx="0.5" opacity=".55"/>
<rect x="657.1" y="48" width="14.4" height="1.6" fill="#bcbcbc" rx="0.3" opacity=".85"/>
<rect x="657" y="52.4" width="1" height="1" fill="#8a8a8a"/>
<rect x="657" y="56.8" width="1" height="1" fill="#8a8a8a"/>
<rect x="657" y="61.2" width="1" height="1" fill="#8a8a8a"/>
<rect x="657" y="65.5" width="1" height="1" fill="#8a8a8a"/>
<rect x="657" y="69.9" width="1" height="1" fill="#8a8a8a"/>
<rect x="657.2" y="73.6" width="14.2" height="3" fill="#0a0a0a" rx="0.5" opacity=".55"/>
<rect x="657.8" y="74.3" width="13" height="1.6" fill="#bcbcbc" rx="0.3" opacity=".85"/>
<rect x="656.2" y="77.1" width="16.1" height="3.3" fill="#505050" rx="0.4"/>
<rect x="656.9" y="78" width="0.8" height="1.4" fill="#999"/>
<rect x="659.6" y="78.1" width="10" height="1.3" fill="#c8c8c8" rx="0.3" opacity=".45"/>
<rect x="670.3" y="78.1" width="0.8" height="1.2" fill="#999"/>
<rect x="657.6" y="82.2" width="1.8" height="13" fill="#0d0d0d"/>
<rect x="656.9" y="86.2" width="3.2" height="3.4" fill="#c0c0c0" rx="0.4"/>
<rect x="660.6" y="82.2" width="2.2" height="13" fill="#26260e"/>
<circle cx="667.8" cy="84.6" r="2.1" fill="#1a1a1a" stroke="#b4b4b4" stroke-width=".7"/>
<rect x="664.5" y="88" width="3" height="2.6" fill="#8e8e8e" rx="0.3"/>
<rect x="668.4" y="88" width="3" height="2.6" fill="#8e8e8e" rx="0.3"/>
<rect x="664.2" y="91.4" width="7.6" height="3" fill="#080808" rx="0.4"/>
<rect x="665.4" y="92.4" width="5.2" height="1" fill="#3ad048"/>
<rect x="656.2" y="100.1" width="16.1" height="3.3" fill="#505050" rx="0.4"/>
<rect x="656.9" y="101" width="0.8" height="1.4" fill="#999"/>
<rect x="659.6" y="101.1" width="10" height="1.3" fill="#c8c8c8" rx="0.3" opacity=".45"/>
<rect x="670.3" y="101.1" width="0.8" height="1.2" fill="#999"/>
<rect x="657.6" y="105.2" width="1.8" height="13" fill="#0d0d0d"/>
<rect x="656.9" y="109.2" width="3.2" height="3.4" fill="#c0c0c0" rx="0.4"/>
<rect x="660.6" y="105.2" width="2.2" height="13" fill="#26260e"/>
<circle cx="667.8" cy="107.6" r="2.1" fill="#1a1a1a" stroke="#b4b4b4" stroke-width=".7"/>
<rect x="664.5" y="111" width="3" height="2.6" fill="#8e8e8e" rx="0.3"/>
<rect x="668.4" y="111" width="3" height="2.6" fill="#8e8e8e" rx="0.3"/>
<rect x="664.2" y="114.4" width="7.6" height="3" fill="#080808" rx="0.4"/>
<rect x="665.4" y="115.4" width="5.2" height="1" fill="#3ad048"/>
<rect x="656.2" y="123.1" width="16.1" height="3.3" fill="#505050" rx="0.4"/>
<rect x="656.9" y="124" width="0.8" height="1.4" fill="#999"/>
<rect x="659.6" y="124.1" width="10" height="1.3" fill="#c8c8c8" rx="0.3" opacity=".45"/>
<rect x="670.3" y="124.1" width="0.8" height="1.2" fill="#999"/>
<rect x="657.6" y="128.2" width="1.8" height="13" fill="#0d0d0d"/>
<rect x="656.9" y="132.2" width="3.2" height="3.4" fill="#c0c0c0" rx="0.4"/>
<rect x="660.6" y="128.2" width="2.2" height="13" fill="#26260e"/>
<circle cx="667.8" cy="130.6" r="2.1" fill="#1a1a1a" stroke="#b4b4b4" stroke-width=".7"/>
<rect x="664.5" y="134" width="3" height="2.6" fill="#8e8e8e" rx="0.3"/>
<rect x="668.4" y="134" width="3" height="2.6" fill="#8e8e8e" rx="0.3"/>
<rect x="664.2" y="137.4" width="7.6" height="3" fill="#080808" rx="0.4"/>
<rect x="665.4" y="138.4" width="5.2" height="1" fill="#3ad048"/>
<rect x="657" y="147.5" width="1" height="1" fill="#8a8a8a"/>
<rect x="657" y="151.9" width="1" height="1" fill="#8a8a8a"/>
<rect x="657" y="146.4" width="1" height="1" fill="#8a8a8a"/>
<rect x="657" y="150.6" width="1" height="1" fill="#8a8a8a"/>
<rect x="661.9" y="154.2" width="4.8" height="3" fill="#0a0a0a" rx="0.5" opacity=".55"/>
<rect x="662.5" y="154.9" width="3.6" height="1.6" fill="#bcbcbc" rx="0.3" opacity=".85"/>
<rect x="655.8" y="158.3" width="16.9" height="16.8" fill="#1a1c1a"/>
<rect x="660" y="158.3" width="0.3" height="16.8" fill="#26302a"/>
<rect x="664.3" y="158.3" width="0.3" height="16.8" fill="#26302a"/>
<rect x="668.5" y="158.3" width="0.3" height="16.8" fill="#26302a"/>
<rect x="655.8" y="162.5" width="16.9" height="0.3" fill="#26302a"/>
<rect x="655.8" y="166.7" width="16.9" height="0.3" fill="#26302a"/>
<rect x="655.8" y="170.9" width="16.9" height="0.3" fill="#26302a"/>
<path transform="translate(655.8 158.3)" d="M0 8.6 L18 8.6" fill="none" stroke="#4a4a4a" stroke-width=".8"/>
<rect x="661.7" y="176.4" width="5.2" height="3" fill="#0a0a0a" rx="0.5" opacity=".55"/>
<rect x="662.3" y="177.1" width="4" height="1.6" fill="#bcbcbc" rx="0.3" opacity=".85"/>
<rect x="656.2" y="179.8" width="16.1" height="3.3" fill="#505050" rx="0.4"/>
<rect x="656.9" y="180.7" width="0.8" height="1.4" fill="#999"/>
<rect x="659.6" y="180.8" width="10" height="1.3" fill="#c8c8c8" rx="0.3" opacity=".45"/>
<rect x="670.3" y="180.8" width="0.8" height="1.2" fill="#999"/>
<rect x="656.2" y="184.1" width="16.1" height="3.3" fill="#505050" rx="0.4"/>
<rect x="656.9" y="185" width="0.8" height="1.4" fill="#999"/>
<rect x="659.6" y="185.1" width="10" height="1.3" fill="#c8c8c8" rx="0.3" opacity=".45"/>
<rect x="670.3" y="185.1" width="0.8" height="1.2" fill="#999"/>
<rect x="660.7" y="188.7" width="7.2" height="3" fill="#0a0a0a" rx="0.5" opacity=".55"/>
<rect x="661.3" y="189.4" width="6" height="1.6" fill="#bcbcbc" rx="0.3" opacity=".85"/>
<rect x="656.2" y="192" width="16.1" height="3.3" fill="#4a5a4c" rx="0.4"/>
<rect x="656.9" y="192.9" width="0.8" height="1.4" fill="#999"/>
<rect x="659.6" y="193" width="10" height="1.3" fill="#8ab890" rx="0.3" opacity=".45"/>
<rect x="670.3" y="193" width="0.8" height="1.2" fill="#999"/>
<rect x="656.2" y="198.5" width="16.1" height="1.7" fill="#4a4a4a"/>
<rect x="656.2" y="200.9" width="16.1" height="3.3" fill="#505050" rx="0.4"/>
<rect x="656.9" y="201.8" width="0.8" height="1.4" fill="#999"/>
<rect x="659.6" y="201.9" width="10" height="1.3" fill="#c8c8c8" rx="0.3" opacity=".45"/>
<rect x="670.3" y="201.9" width="0.8" height="1.2" fill="#999"/>
<circle cx="664.3" cy="211.4" r="3" fill="#161616" stroke="#b0b0b0" stroke-width="1"/>
<rect x="664" y="208.2" width="0.6" height="1.8" fill="#3ad048"/>
<rect x="656" y="217.2" width="16.5" height="2.8" fill="#080808"/>
<rect x="657" y="218.1" width="4" height="1" fill="#3ad048"/>
<rect x="665.5" y="218.1" width="5.5" height="1" fill="#3ad048"/>
<rect x="658.5" y="222.7" width="4.5" height="2.9" fill="#5e5e5e" rx="0.4"/>
<rect x="665.5" y="222.7" width="4.5" height="2.9" fill="#b8a0a0" rx="0.4"/>
<rect x="658.5" y="228.6" width="4.5" height="3.2" fill="#5e5e5e" rx="0.4"/>
<rect x="665.5" y="228.6" width="4.5" height="3.2" fill="#5e5e5e" rx="0.4"/>
<rect x="657.4" y="237" width="1.1" height="1" fill="#8a8a8a"/>
<rect x="665" y="237" width="1.1" height="1" fill="#8a8a8a"/>
<rect x="657.4" y="242.8" width="1.1" height="1" fill="#8a8a8a"/>
<rect x="665" y="242.8" width="1.1" height="1" fill="#8a8a8a"/>
<rect x="657.4" y="248.6" width="1.1" height="1" fill="#8a8a8a"/>
<rect x="665" y="248.6" width="1.1" height="1" fill="#8a8a8a"/>
<rect x="657.4" y="254.4" width="1.1" height="1" fill="#8a8a8a"/>
<rect x="665" y="254.4" width="1.1" height="1" fill="#8a8a8a"/>
<rect x="657.4" y="260.2" width="1.1" height="1" fill="#8a8a8a"/>
<rect x="665" y="260.2" width="1.1" height="1" fill="#8a8a8a"/>
<rect x="657.4" y="266" width="1.1" height="1" fill="#8a8a8a"/>
<rect x="665" y="266" width="1.1" height="1" fill="#8a8a8a"/>
<rect x="657.4" y="271.8" width="1.1" height="1" fill="#8a8a8a"/>
<rect x="665" y="271.8" width="1.1" height="1" fill="#8a8a8a"/>
<rect x="657.4" y="277.6" width="1.1" height="1" fill="#8a8a8a"/>
<rect x="665" y="277.6" width="1.1" height="1" fill="#8a8a8a"/>
<rect x="657.4" y="283.4" width="1.1" height="1" fill="#8a8a8a"/>
<rect x="665" y="283.4" width="1.1" height="1" fill="#8a8a8a"/>
<rect x="657.4" y="289.2" width="1.1" height="1" fill="#8a8a8a"/>
<rect x="665" y="289.2" width="1.1" height="1" fill="#8a8a8a"/>
<rect x="661" y="236" width="1.5" height="55" fill="#0a0a0a"/>
<rect x="659.2" y="247.1" width="5.2" height="7.2" fill="#d4d4d4" rx="0.6"/>
<rect x="659.2" y="250.5" width="5.2" height="0.6" fill="#555"/>
<rect x="668.2" y="236" width="2.6" height="55" fill="#12120c"/>
<rect x="670.8" y="236" width="0.7" height="55" fill="#45401c"/>
<rect x="655.8" y="293.8" width="16.9" height="3.2" fill="#080808"/>
<rect x="657" y="294.9" width="4" height="1" fill="#3ad048"/>
<rect x="665" y="294.9" width="6" height="1" fill="#3ad048"/>
<rect x="661.5" y="299" width="4.5" height="2.6" fill="#4e4e4e" rx="0.3"/>
<rect x="667.2" y="299" width="4" height="2.6" fill="#4e4e4e" rx="0.3"/>
<rect x="655.8" y="303" width="16.9" height="4.4" fill="#161616"/>
<text x="664.3" y="306.4" font-size="2.9" fill="#ececec" font-weight="bold" text-anchor="middle" textLength="16.1" lengthAdjust="spacingAndGlyphs">A16EndHm2</text>
<rect x="655.8" y="308.8" width="16.9" height="11.2" fill="#060606"/>
<rect x="657" y="310.2" width="4" height="1" fill="#3ad048"/>
<rect x="669" y="310.2" width="2" height="1" fill="#3ad048"/>
<rect x="657" y="313.4" width="4" height="1" fill="#3ad048"/>
<rect x="669" y="313.4" width="2" height="1" fill="#3ad048"/>
<rect x="657" y="316.6" width="4" height="1" fill="#3ad048"/>
<rect x="669" y="316.6" width="2" height="1" fill="#3ad048"/>
<rect x="673.5" y="30.8" width="0.9" height="314.5" fill="#0a0a0a"/>
<rect x="674.4" y="30.8" width="18.5" height="314.5" fill="#141e3c"/>
<rect x="674.4" y="31" width="18.5" height="5" fill="#3c48d8"/>
<rect x="674.4" y="340.2" width="18.5" height="4.6" fill="#3c48d8"/>
<rect x="680.1" y="36" width="7.2" height="3" fill="#0a0a0a" rx="0.5" opacity=".55"/>
<rect x="680.7" y="36.7" width="6" height="1.6" fill="#bcbcbc" rx="0.3" opacity=".85"/>
<rect x="675.9" y="39.9" width="7" height="3" fill="#3a3a3a" rx="0.4"/>
<rect x="683.9" y="39.9" width="7.5" height="3" fill="#3a3a3a" rx="0.4"/>
<text x="679.4" y="42.2" font-size="1.8" fill="#999" text-anchor="middle">PRE</text>
<text x="687.6" y="42.2" font-size="1.8" fill="#999" text-anchor="middle">MUTE</text>
<rect x="675.4" y="44.3" width="16.5" height="1.6" fill="#454545"/>
<rect x="675.9" y="47.3" width="15.6" height="3" fill="#0a0a0a" rx="0.5" opacity=".55"/>
<rect x="676.5" y="48" width="14.4" height="1.6" fill="#bcbcbc" rx="0.3" opacity=".85"/>
<rect x="676.4" y="52.4" width="1" height="1" fill="#8a8a8a"/>
<rect x="676.4" y="56.8" width="1" height="1" fill="#8a8a8a"/>
<rect x="676.4" y="61.2" width="1" height="1" fill="#8a8a8a"/>
<rect x="676.4" y="65.5" width="1" height="1" fill="#8a8a8a"/>
<rect x="676.4" y="69.9" width="1" height="1" fill="#8a8a8a"/>
<rect x="676.6" y="73.6" width="14.2" height="3" fill="#0a0a0a" rx="0.5" opacity=".55"/>
<rect x="677.2" y="74.3" width="13" height="1.6" fill="#bcbcbc" rx="0.3" opacity=".85"/>
<rect x="675.6" y="77.1" width="16.1" height="3.3" fill="#505050" rx="0.4"/>
<rect x="676.3" y="78" width="0.8" height="1.4" fill="#999"/>
<rect x="679" y="78.1" width="10" height="1.3" fill="#c8c8c8" rx="0.3" opacity=".45"/>
<rect x="689.8" y="78.1" width="0.8" height="1.2" fill="#999"/>
<rect x="677" y="82.2" width="1.8" height="13" fill="#0d0d0d"/>
<rect x="676.3" y="86.2" width="3.2" height="3.4" fill="#c0c0c0" rx="0.4"/>
<rect x="680" y="82.2" width="2.2" height="13" fill="#26260e"/>
<circle cx="687.2" cy="84.6" r="2.1" fill="#1a1a1a" stroke="#b4b4b4" stroke-width=".7"/>
<rect x="683.9" y="88" width="3" height="2.6" fill="#8e8e8e" rx="0.3"/>
<rect x="687.8" y="88" width="3" height="2.6" fill="#8e8e8e" rx="0.3"/>
<rect x="683.6" y="91.4" width="7.6" height="3" fill="#080808" rx="0.4"/>
<rect x="684.8" y="92.4" width="5.2" height="1" fill="#3ad048"/>
<rect x="675.6" y="100.1" width="16.1" height="3.3" fill="#505050" rx="0.4"/>
<rect x="676.3" y="101" width="0.8" height="1.4" fill="#999"/>
<rect x="679" y="101.1" width="10" height="1.3" fill="#c8c8c8" rx="0.3" opacity=".45"/>
<rect x="689.8" y="101.1" width="0.8" height="1.2" fill="#999"/>
<rect x="677" y="105.2" width="1.8" height="13" fill="#0d0d0d"/>
<rect x="676.3" y="109.2" width="3.2" height="3.4" fill="#c0c0c0" rx="0.4"/>
<rect x="680" y="105.2" width="2.2" height="13" fill="#26260e"/>
<circle cx="687.2" cy="107.6" r="2.1" fill="#1a1a1a" stroke="#b4b4b4" stroke-width=".7"/>
<rect x="683.9" y="111" width="3" height="2.6" fill="#8e8e8e" rx="0.3"/>
<rect x="687.8" y="111" width="3" height="2.6" fill="#8e8e8e" rx="0.3"/>
<rect x="683.6" y="114.4" width="7.6" height="3" fill="#080808" rx="0.4"/>
<rect x="684.8" y="115.4" width="5.2" height="1" fill="#3ad048"/>
<rect x="675.6" y="123.1" width="16.1" height="3.3" fill="#505050" rx="0.4"/>
<rect x="676.3" y="124" width="0.8" height="1.4" fill="#999"/>
<rect x="679" y="124.1" width="10" height="1.3" fill="#c8c8c8" rx="0.3" opacity=".45"/>
<rect x="689.8" y="124.1" width="0.8" height="1.2" fill="#999"/>
<rect x="677" y="128.2" width="1.8" height="13" fill="#0d0d0d"/>
<rect x="676.3" y="132.2" width="3.2" height="3.4" fill="#c0c0c0" rx="0.4"/>
<rect x="680" y="128.2" width="2.2" height="13" fill="#26260e"/>
<circle cx="687.2" cy="130.6" r="2.1" fill="#1a1a1a" stroke="#b4b4b4" stroke-width=".7"/>
<rect x="683.9" y="134" width="3" height="2.6" fill="#8e8e8e" rx="0.3"/>
<rect x="687.8" y="134" width="3" height="2.6" fill="#8e8e8e" rx="0.3"/>
<rect x="683.6" y="137.4" width="7.6" height="3" fill="#080808" rx="0.4"/>
<rect x="684.8" y="138.4" width="5.2" height="1" fill="#3ad048"/>
<rect x="676.4" y="147.5" width="1" height="1" fill="#8a8a8a"/>
<rect x="676.4" y="151.9" width="1" height="1" fill="#8a8a8a"/>
<rect x="676.4" y="146.4" width="1" height="1" fill="#8a8a8a"/>
<rect x="676.4" y="150.6" width="1" height="1" fill="#8a8a8a"/>
<rect x="681.3" y="154.2" width="4.8" height="3" fill="#0a0a0a" rx="0.5" opacity=".55"/>
<rect x="681.9" y="154.9" width="3.6" height="1.6" fill="#bcbcbc" rx="0.3" opacity=".85"/>
<rect x="675.2" y="158.3" width="16.9" height="16.8" fill="#1a1c1a"/>
<rect x="679.5" y="158.3" width="0.3" height="16.8" fill="#26302a"/>
<rect x="683.7" y="158.3" width="0.3" height="16.8" fill="#26302a"/>
<rect x="687.9" y="158.3" width="0.3" height="16.8" fill="#26302a"/>
<rect x="675.2" y="162.5" width="16.9" height="0.3" fill="#26302a"/>
<rect x="675.2" y="166.7" width="16.9" height="0.3" fill="#26302a"/>
<rect x="675.2" y="170.9" width="16.9" height="0.3" fill="#26302a"/>
<path transform="translate(675.2 158.3)" d="M0 8.6 L18 8.6" fill="none" stroke="#4a4a4a" stroke-width=".8"/>
<rect x="681.1" y="176.4" width="5.2" height="3" fill="#0a0a0a" rx="0.5" opacity=".55"/>
<rect x="681.7" y="177.1" width="4" height="1.6" fill="#bcbcbc" rx="0.3" opacity=".85"/>
<rect x="675.6" y="179.8" width="16.1" height="3.3" fill="#505050" rx="0.4"/>
<rect x="676.3" y="180.7" width="0.8" height="1.4" fill="#999"/>
<rect x="679" y="180.8" width="10" height="1.3" fill="#c8c8c8" rx="0.3" opacity=".45"/>
<rect x="689.8" y="180.8" width="0.8" height="1.2" fill="#999"/>
<rect x="675.6" y="184.1" width="16.1" height="3.3" fill="#505050" rx="0.4"/>
<rect x="676.3" y="185" width="0.8" height="1.4" fill="#999"/>
<rect x="679" y="185.1" width="10" height="1.3" fill="#c8c8c8" rx="0.3" opacity=".45"/>
<rect x="689.8" y="185.1" width="0.8" height="1.2" fill="#999"/>
<rect x="680.1" y="188.7" width="7.2" height="3" fill="#0a0a0a" rx="0.5" opacity=".55"/>
<rect x="680.7" y="189.4" width="6" height="1.6" fill="#bcbcbc" rx="0.3" opacity=".85"/>
<rect x="675.6" y="192" width="16.1" height="3.3" fill="#4a5a4c" rx="0.4"/>
<rect x="676.3" y="192.9" width="0.8" height="1.4" fill="#999"/>
<rect x="679" y="193" width="10" height="1.3" fill="#8ab890" rx="0.3" opacity=".45"/>
<rect x="689.8" y="193" width="0.8" height="1.2" fill="#999"/>
<rect x="675.6" y="198.5" width="16.1" height="1.7" fill="#4a4a4a"/>
<rect x="675.6" y="200.9" width="16.1" height="3.3" fill="#505050" rx="0.4"/>
<rect x="676.3" y="201.8" width="0.8" height="1.4" fill="#999"/>
<rect x="679" y="201.9" width="10" height="1.3" fill="#c8c8c8" rx="0.3" opacity=".45"/>
<rect x="689.8" y="201.9" width="0.8" height="1.2" fill="#999"/>
<circle cx="683.7" cy="211.4" r="3" fill="#161616" stroke="#b0b0b0" stroke-width="1"/>
<rect x="683.4" y="208.2" width="0.6" height="1.8" fill="#3ad048"/>
<rect x="675.4" y="217.2" width="16.5" height="2.8" fill="#080808"/>
<rect x="676.4" y="218.1" width="4" height="1" fill="#3ad048"/>
<rect x="684.9" y="218.1" width="5.5" height="1" fill="#3ad048"/>
<rect x="677.9" y="222.7" width="4.5" height="2.9" fill="#5e5e5e" rx="0.4"/>
<rect x="684.9" y="222.7" width="4.5" height="2.9" fill="#b8a0a0" rx="0.4"/>
<rect x="677.9" y="228.6" width="4.5" height="3.2" fill="#5e5e5e" rx="0.4"/>
<rect x="684.9" y="228.6" width="4.5" height="3.2" fill="#5e5e5e" rx="0.4"/>
<rect x="676.8" y="237" width="1.1" height="1" fill="#8a8a8a"/>
<rect x="684.4" y="237" width="1.1" height="1" fill="#8a8a8a"/>
<rect x="676.8" y="242.8" width="1.1" height="1" fill="#8a8a8a"/>
<rect x="684.4" y="242.8" width="1.1" height="1" fill="#8a8a8a"/>
<rect x="676.8" y="248.6" width="1.1" height="1" fill="#8a8a8a"/>
<rect x="684.4" y="248.6" width="1.1" height="1" fill="#8a8a8a"/>
<rect x="676.8" y="254.4" width="1.1" height="1" fill="#8a8a8a"/>
<rect x="684.4" y="254.4" width="1.1" height="1" fill="#8a8a8a"/>
<rect x="676.8" y="260.2" width="1.1" height="1" fill="#8a8a8a"/>
<rect x="684.4" y="260.2" width="1.1" height="1" fill="#8a8a8a"/>
<rect x="676.8" y="266" width="1.1" height="1" fill="#8a8a8a"/>
<rect x="684.4" y="266" width="1.1" height="1" fill="#8a8a8a"/>
<rect x="676.8" y="271.8" width="1.1" height="1" fill="#8a8a8a"/>
<rect x="684.4" y="271.8" width="1.1" height="1" fill="#8a8a8a"/>
<rect x="676.8" y="277.6" width="1.1" height="1" fill="#8a8a8a"/>
<rect x="684.4" y="277.6" width="1.1" height="1" fill="#8a8a8a"/>
<rect x="676.8" y="283.4" width="1.1" height="1" fill="#8a8a8a"/>
<rect x="684.4" y="283.4" width="1.1" height="1" fill="#8a8a8a"/>
<rect x="676.8" y="289.2" width="1.1" height="1" fill="#8a8a8a"/>
<rect x="684.4" y="289.2" width="1.1" height="1" fill="#8a8a8a"/>
<rect x="680.4" y="236" width="1.5" height="55" fill="#0a0a0a"/>
<rect x="678.6" y="252.6" width="5.2" height="7.2" fill="#d4d4d4" rx="0.6"/>
<rect x="678.6" y="256" width="5.2" height="0.6" fill="#555"/>
<rect x="687.6" y="236" width="2.6" height="55" fill="#12120c"/>
<rect x="690.2" y="236" width="0.7" height="55" fill="#45401c"/>
<rect x="675.2" y="293.8" width="16.9" height="3.2" fill="#080808"/>
<rect x="676.4" y="294.9" width="4" height="1" fill="#3ad048"/>
<rect x="684.4" y="294.9" width="6" height="1" fill="#3ad048"/>
<rect x="680.9" y="299" width="4.5" height="2.6" fill="#4e4e4e" rx="0.3"/>
<rect x="686.6" y="299" width="4" height="2.6" fill="#4e4e4e" rx="0.3"/>
<rect x="675.2" y="303" width="16.9" height="4.4" fill="#161616"/>
<text x="683.7" y="306.4" font-size="2.9" fill="#ececec" font-weight="bold" text-anchor="middle" textLength="16.1" lengthAdjust="spacingAndGlyphs">A16EndHm3</text>
<rect x="675.2" y="308.8" width="16.9" height="11.2" fill="#060606"/>
<rect x="676.4" y="310.2" width="4" height="1" fill="#3ad048"/>
<rect x="688.4" y="310.2" width="2" height="1" fill="#3ad048"/>
<rect x="676.4" y="313.4" width="4" height="1" fill="#3ad048"/>
<rect x="688.4" y="313.4" width="2" height="1" fill="#3ad048"/>
<rect x="676.4" y="316.6" width="4" height="1" fill="#3ad048"/>
<rect x="688.4" y="316.6" width="2" height="1" fill="#3ad048"/>
<rect x="693" y="30.8" width="0.9" height="314.5" fill="#0a0a0a"/>
<rect x="693.9" y="30.8" width="18.5" height="314.5" fill="#141e3c"/>
<rect x="693.9" y="31" width="18.5" height="5" fill="#3c48d8"/>
<rect x="693.9" y="340.2" width="18.5" height="4.6" fill="#3c48d8"/>
<rect x="699.5" y="36" width="7.2" height="3" fill="#0a0a0a" rx="0.5" opacity=".55"/>
<rect x="700.1" y="36.7" width="6" height="1.6" fill="#bcbcbc" rx="0.3" opacity=".85"/>
<rect x="695.4" y="39.9" width="7" height="3" fill="#3a3a3a" rx="0.4"/>
<rect x="703.4" y="39.9" width="7.5" height="3" fill="#3a3a3a" rx="0.4"/>
<text x="698.9" y="42.2" font-size="1.8" fill="#999" text-anchor="middle">PRE</text>
<text x="707.1" y="42.2" font-size="1.8" fill="#999" text-anchor="middle">MUTE</text>
<rect x="694.9" y="44.3" width="16.5" height="1.6" fill="#454545"/>
<rect x="695.3" y="47.3" width="15.6" height="3" fill="#0a0a0a" rx="0.5" opacity=".55"/>
<rect x="695.9" y="48" width="14.4" height="1.6" fill="#bcbcbc" rx="0.3" opacity=".85"/>
<rect x="695.9" y="52.4" width="1" height="1" fill="#8a8a8a"/>
<rect x="695.9" y="56.8" width="1" height="1" fill="#8a8a8a"/>
<rect x="695.9" y="61.2" width="1" height="1" fill="#8a8a8a"/>
<rect x="695.9" y="65.5" width="1" height="1" fill="#8a8a8a"/>
<rect x="695.9" y="69.9" width="1" height="1" fill="#8a8a8a"/>
<rect x="696" y="73.6" width="14.2" height="3" fill="#0a0a0a" rx="0.5" opacity=".55"/>
<rect x="696.6" y="74.3" width="13" height="1.6" fill="#bcbcbc" rx="0.3" opacity=".85"/>
<rect x="695.1" y="77.1" width="16.1" height="3.3" fill="#505050" rx="0.4"/>
<rect x="695.8" y="78" width="0.8" height="1.4" fill="#999"/>
<rect x="698.5" y="78.1" width="10" height="1.3" fill="#c8c8c8" rx="0.3" opacity=".45"/>
<rect x="709.2" y="78.1" width="0.8" height="1.2" fill="#999"/>
<rect x="696.5" y="82.2" width="1.8" height="13" fill="#0d0d0d"/>
<rect x="695.8" y="86.2" width="3.2" height="3.4" fill="#c0c0c0" rx="0.4"/>
<rect x="699.5" y="82.2" width="2.2" height="13" fill="#26260e"/>
<circle cx="706.7" cy="84.6" r="2.1" fill="#1a1a1a" stroke="#b4b4b4" stroke-width=".7"/>
<rect x="703.4" y="88" width="3" height="2.6" fill="#8e8e8e" rx="0.3"/>
<rect x="707.3" y="88" width="3" height="2.6" fill="#8e8e8e" rx="0.3"/>
<rect x="703.1" y="91.4" width="7.6" height="3" fill="#080808" rx="0.4"/>
<rect x="704.3" y="92.4" width="5.2" height="1" fill="#3ad048"/>
<rect x="695.1" y="100.1" width="16.1" height="3.3" fill="#505050" rx="0.4"/>
<rect x="695.8" y="101" width="0.8" height="1.4" fill="#999"/>
<rect x="698.5" y="101.1" width="10" height="1.3" fill="#c8c8c8" rx="0.3" opacity=".45"/>
<rect x="709.2" y="101.1" width="0.8" height="1.2" fill="#999"/>
<rect x="696.5" y="105.2" width="1.8" height="13" fill="#0d0d0d"/>
<rect x="695.8" y="109.2" width="3.2" height="3.4" fill="#c0c0c0" rx="0.4"/>
<rect x="699.5" y="105.2" width="2.2" height="13" fill="#26260e"/>
<circle cx="706.7" cy="107.6" r="2.1" fill="#1a1a1a" stroke="#b4b4b4" stroke-width=".7"/>
<rect x="703.4" y="111" width="3" height="2.6" fill="#8e8e8e" rx="0.3"/>
<rect x="707.3" y="111" width="3" height="2.6" fill="#8e8e8e" rx="0.3"/>
<rect x="703.1" y="114.4" width="7.6" height="3" fill="#080808" rx="0.4"/>
<rect x="704.3" y="115.4" width="5.2" height="1" fill="#3ad048"/>
<rect x="695.1" y="123.1" width="16.1" height="3.3" fill="#505050" rx="0.4"/>
<rect x="695.8" y="124" width="0.8" height="1.4" fill="#999"/>
<rect x="698.5" y="124.1" width="10" height="1.3" fill="#c8c8c8" rx="0.3" opacity=".45"/>
<rect x="709.2" y="124.1" width="0.8" height="1.2" fill="#999"/>
<rect x="696.5" y="128.2" width="1.8" height="13" fill="#0d0d0d"/>
<rect x="695.8" y="132.2" width="3.2" height="3.4" fill="#c0c0c0" rx="0.4"/>
<rect x="699.5" y="128.2" width="2.2" height="13" fill="#26260e"/>
<circle cx="706.7" cy="130.6" r="2.1" fill="#1a1a1a" stroke="#b4b4b4" stroke-width=".7"/>
<rect x="703.4" y="134" width="3" height="2.6" fill="#8e8e8e" rx="0.3"/>
<rect x="707.3" y="134" width="3" height="2.6" fill="#8e8e8e" rx="0.3"/>
<rect x="703.1" y="137.4" width="7.6" height="3" fill="#080808" rx="0.4"/>
<rect x="704.3" y="138.4" width="5.2" height="1" fill="#3ad048"/>
<rect x="695.9" y="147.5" width="1" height="1" fill="#8a8a8a"/>
<rect x="695.9" y="151.9" width="1" height="1" fill="#8a8a8a"/>
<rect x="695.9" y="146.4" width="1" height="1" fill="#8a8a8a"/>
<rect x="695.9" y="150.6" width="1" height="1" fill="#8a8a8a"/>
<rect x="700.8" y="154.2" width="4.8" height="3" fill="#0a0a0a" rx="0.5" opacity=".55"/>
<rect x="701.4" y="154.9" width="3.6" height="1.6" fill="#bcbcbc" rx="0.3" opacity=".85"/>
<rect x="694.7" y="158.3" width="16.9" height="16.8" fill="#1a1c1a"/>
<rect x="698.9" y="158.3" width="0.3" height="16.8" fill="#26302a"/>
<rect x="703.1" y="158.3" width="0.3" height="16.8" fill="#26302a"/>
<rect x="707.4" y="158.3" width="0.3" height="16.8" fill="#26302a"/>
<rect x="694.7" y="162.5" width="16.9" height="0.3" fill="#26302a"/>
<rect x="694.7" y="166.7" width="16.9" height="0.3" fill="#26302a"/>
<rect x="694.7" y="170.9" width="16.9" height="0.3" fill="#26302a"/>
<path transform="translate(694.7 158.3)" d="M0 8.6 L18 8.6" fill="none" stroke="#4a4a4a" stroke-width=".8"/>
<rect x="700.5" y="176.4" width="5.2" height="3" fill="#0a0a0a" rx="0.5" opacity=".55"/>
<rect x="701.1" y="177.1" width="4" height="1.6" fill="#bcbcbc" rx="0.3" opacity=".85"/>
<rect x="695.1" y="179.8" width="16.1" height="3.3" fill="#505050" rx="0.4"/>
<rect x="695.8" y="180.7" width="0.8" height="1.4" fill="#999"/>
<rect x="698.5" y="180.8" width="10" height="1.3" fill="#c8c8c8" rx="0.3" opacity=".45"/>
<rect x="709.2" y="180.8" width="0.8" height="1.2" fill="#999"/>
<rect x="695.1" y="184.1" width="16.1" height="3.3" fill="#505050" rx="0.4"/>
<rect x="695.8" y="185" width="0.8" height="1.4" fill="#999"/>
<rect x="698.5" y="185.1" width="10" height="1.3" fill="#c8c8c8" rx="0.3" opacity=".45"/>
<rect x="709.2" y="185.1" width="0.8" height="1.2" fill="#999"/>
<rect x="699.5" y="188.7" width="7.2" height="3" fill="#0a0a0a" rx="0.5" opacity=".55"/>
<rect x="700.1" y="189.4" width="6" height="1.6" fill="#bcbcbc" rx="0.3" opacity=".85"/>
<rect x="695.1" y="192" width="16.1" height="3.3" fill="#4a5a4c" rx="0.4"/>
<rect x="695.8" y="192.9" width="0.8" height="1.4" fill="#999"/>
<rect x="698.5" y="193" width="10" height="1.3" fill="#8ab890" rx="0.3" opacity=".45"/>
<rect x="709.2" y="193" width="0.8" height="1.2" fill="#999"/>
<rect x="695.1" y="198.5" width="16.1" height="1.7" fill="#4a4a4a"/>
<rect x="695.1" y="200.9" width="16.1" height="3.3" fill="#505050" rx="0.4"/>
<rect x="695.8" y="201.8" width="0.8" height="1.4" fill="#999"/>
<rect x="698.5" y="201.9" width="10" height="1.3" fill="#c8c8c8" rx="0.3" opacity=".45"/>
<rect x="709.2" y="201.9" width="0.8" height="1.2" fill="#999"/>
<circle cx="703.1" cy="211.4" r="3" fill="#161616" stroke="#b0b0b0" stroke-width="1"/>
<rect x="702.9" y="208.2" width="0.6" height="1.8" fill="#3ad048"/>
<rect x="694.9" y="217.2" width="16.5" height="2.8" fill="#080808"/>
<rect x="695.9" y="218.1" width="4" height="1" fill="#3ad048"/>
<rect x="704.4" y="218.1" width="5.5" height="1" fill="#3ad048"/>
<rect x="697.4" y="222.7" width="4.5" height="2.9" fill="#5e5e5e" rx="0.4"/>
<rect x="704.4" y="222.7" width="4.5" height="2.9" fill="#b8a0a0" rx="0.4"/>
<rect x="697.4" y="228.6" width="4.5" height="3.2" fill="#5e5e5e" rx="0.4"/>
<rect x="704.4" y="228.6" width="4.5" height="3.2" fill="#5e5e5e" rx="0.4"/>
<rect x="696.3" y="237" width="1.1" height="1" fill="#8a8a8a"/>
<rect x="703.9" y="237" width="1.1" height="1" fill="#8a8a8a"/>
<rect x="696.3" y="242.8" width="1.1" height="1" fill="#8a8a8a"/>
<rect x="703.9" y="242.8" width="1.1" height="1" fill="#8a8a8a"/>
<rect x="696.3" y="248.6" width="1.1" height="1" fill="#8a8a8a"/>
<rect x="703.9" y="248.6" width="1.1" height="1" fill="#8a8a8a"/>
<rect x="696.3" y="254.4" width="1.1" height="1" fill="#8a8a8a"/>
<rect x="703.9" y="254.4" width="1.1" height="1" fill="#8a8a8a"/>
<rect x="696.3" y="260.2" width="1.1" height="1" fill="#8a8a8a"/>
<rect x="703.9" y="260.2" width="1.1" height="1" fill="#8a8a8a"/>
<rect x="696.3" y="266" width="1.1" height="1" fill="#8a8a8a"/>
<rect x="703.9" y="266" width="1.1" height="1" fill="#8a8a8a"/>
<rect x="696.3" y="271.8" width="1.1" height="1" fill="#8a8a8a"/>
<rect x="703.9" y="271.8" width="1.1" height="1" fill="#8a8a8a"/>
<rect x="696.3" y="277.6" width="1.1" height="1" fill="#8a8a8a"/>
<rect x="703.9" y="277.6" width="1.1" height="1" fill="#8a8a8a"/>
<rect x="696.3" y="283.4" width="1.1" height="1" fill="#8a8a8a"/>
<rect x="703.9" y="283.4" width="1.1" height="1" fill="#8a8a8a"/>
<rect x="696.3" y="289.2" width="1.1" height="1" fill="#8a8a8a"/>
<rect x="703.9" y="289.2" width="1.1" height="1" fill="#8a8a8a"/>
<rect x="699.9" y="236" width="1.5" height="55" fill="#0a0a0a"/>
<rect x="698.1" y="247.1" width="5.2" height="7.2" fill="#d4d4d4" rx="0.6"/>
<rect x="698.1" y="250.5" width="5.2" height="0.6" fill="#555"/>
<rect x="707.1" y="236" width="2.6" height="55" fill="#12120c"/>
<rect x="709.7" y="236" width="0.7" height="55" fill="#45401c"/>
<rect x="694.7" y="293.8" width="16.9" height="3.2" fill="#080808"/>
<rect x="695.9" y="294.9" width="4" height="1" fill="#3ad048"/>
<rect x="703.9" y="294.9" width="6" height="1" fill="#3ad048"/>
<rect x="700.4" y="299" width="4.5" height="2.6" fill="#4e4e4e" rx="0.3"/>
<rect x="706.1" y="299" width="4" height="2.6" fill="#4e4e4e" rx="0.3"/>
<rect x="694.7" y="303" width="16.9" height="4.4" fill="#161616"/>
<text x="703.1" y="306.4" font-size="2.9" fill="#ececec" font-weight="bold" text-anchor="middle" textLength="16.1" lengthAdjust="spacingAndGlyphs">A16EndHm4</text>
<rect x="694.7" y="308.8" width="16.9" height="11.2" fill="#060606"/>
<rect x="695.9" y="310.2" width="4" height="1" fill="#3ad048"/>
<rect x="707.9" y="310.2" width="2" height="1" fill="#3ad048"/>
<rect x="695.9" y="313.4" width="4" height="1" fill="#3ad048"/>
<rect x="707.9" y="313.4" width="2" height="1" fill="#3ad048"/>
<rect x="695.9" y="316.6" width="4" height="1" fill="#3ad048"/>
<rect x="707.9" y="316.6" width="2" height="1" fill="#3ad048"/>
<rect x="712.4" y="30.8" width="0.9" height="314.5" fill="#0a0a0a"/>
<rect x="713.3" y="30.8" width="18.5" height="314.5" fill="#141e3c"/>
<rect x="713.3" y="31" width="18.5" height="5" fill="#3c48d8"/>
<rect x="713.3" y="340.2" width="18.5" height="4.6" fill="#3c48d8"/>
<rect x="719" y="36" width="7.2" height="3" fill="#0a0a0a" rx="0.5" opacity=".55"/>
<rect x="719.6" y="36.7" width="6" height="1.6" fill="#bcbcbc" rx="0.3" opacity=".85"/>
<rect x="714.8" y="39.9" width="7" height="3" fill="#3a3a3a" rx="0.4"/>
<rect x="722.8" y="39.9" width="7.5" height="3" fill="#3a3a3a" rx="0.4"/>
<text x="718.3" y="42.2" font-size="1.8" fill="#999" text-anchor="middle">PRE</text>
<text x="726.5" y="42.2" font-size="1.8" fill="#999" text-anchor="middle">MUTE</text>
<rect x="714.3" y="44.3" width="16.5" height="1.6" fill="#454545"/>
<rect x="714.8" y="47.3" width="15.6" height="3" fill="#0a0a0a" rx="0.5" opacity=".55"/>
<rect x="715.4" y="48" width="14.4" height="1.6" fill="#bcbcbc" rx="0.3" opacity=".85"/>
<rect x="715.3" y="52.4" width="1" height="1" fill="#8a8a8a"/>
<rect x="715.3" y="56.8" width="1" height="1" fill="#8a8a8a"/>
<rect x="715.3" y="61.2" width="1" height="1" fill="#8a8a8a"/>
<rect x="715.3" y="65.5" width="1" height="1" fill="#8a8a8a"/>
<rect x="715.3" y="69.9" width="1" height="1" fill="#8a8a8a"/>
<rect x="715.5" y="73.6" width="14.2" height="3" fill="#0a0a0a" rx="0.5" opacity=".55"/>
<rect x="716.1" y="74.3" width="13" height="1.6" fill="#bcbcbc" rx="0.3" opacity=".85"/>
<rect x="714.5" y="77.1" width="16.1" height="3.3" fill="#505050" rx="0.4"/>
<rect x="715.2" y="78" width="0.8" height="1.4" fill="#999"/>
<rect x="717.9" y="78.1" width="10" height="1.3" fill="#c8c8c8" rx="0.3" opacity=".45"/>
<rect x="728.7" y="78.1" width="0.8" height="1.2" fill="#999"/>
<rect x="715.9" y="82.2" width="1.8" height="13" fill="#0d0d0d"/>
<rect x="715.2" y="86.2" width="3.2" height="3.4" fill="#c0c0c0" rx="0.4"/>
<rect x="718.9" y="82.2" width="2.2" height="13" fill="#26260e"/>
<circle cx="726.1" cy="84.6" r="2.1" fill="#1a1a1a" stroke="#b4b4b4" stroke-width=".7"/>
<rect x="722.8" y="88" width="3" height="2.6" fill="#8e8e8e" rx="0.3"/>
<rect x="726.7" y="88" width="3" height="2.6" fill="#8e8e8e" rx="0.3"/>
<rect x="722.5" y="91.4" width="7.6" height="3" fill="#080808" rx="0.4"/>
<rect x="723.7" y="92.4" width="5.2" height="1" fill="#3ad048"/>
<rect x="714.5" y="100.1" width="16.1" height="3.3" fill="#505050" rx="0.4"/>
<rect x="715.2" y="101" width="0.8" height="1.4" fill="#999"/>
<rect x="717.9" y="101.1" width="10" height="1.3" fill="#c8c8c8" rx="0.3" opacity=".45"/>
<rect x="728.7" y="101.1" width="0.8" height="1.2" fill="#999"/>
<rect x="715.9" y="105.2" width="1.8" height="13" fill="#0d0d0d"/>
<rect x="715.2" y="109.2" width="3.2" height="3.4" fill="#c0c0c0" rx="0.4"/>
<rect x="718.9" y="105.2" width="2.2" height="13" fill="#26260e"/>
<circle cx="726.1" cy="107.6" r="2.1" fill="#1a1a1a" stroke="#b4b4b4" stroke-width=".7"/>
<rect x="722.8" y="111" width="3" height="2.6" fill="#8e8e8e" rx="0.3"/>
<rect x="726.7" y="111" width="3" height="2.6" fill="#8e8e8e" rx="0.3"/>
<rect x="722.5" y="114.4" width="7.6" height="3" fill="#080808" rx="0.4"/>
<rect x="723.7" y="115.4" width="5.2" height="1" fill="#3ad048"/>
<rect x="714.5" y="123.1" width="16.1" height="3.3" fill="#505050" rx="0.4"/>
<rect x="715.2" y="124" width="0.8" height="1.4" fill="#999"/>
<rect x="717.9" y="124.1" width="10" height="1.3" fill="#c8c8c8" rx="0.3" opacity=".45"/>
<rect x="728.7" y="124.1" width="0.8" height="1.2" fill="#999"/>
<rect x="715.9" y="128.2" width="1.8" height="13" fill="#0d0d0d"/>
<rect x="715.2" y="132.2" width="3.2" height="3.4" fill="#c0c0c0" rx="0.4"/>
<rect x="718.9" y="128.2" width="2.2" height="13" fill="#26260e"/>
<circle cx="726.1" cy="130.6" r="2.1" fill="#1a1a1a" stroke="#b4b4b4" stroke-width=".7"/>
<rect x="722.8" y="134" width="3" height="2.6" fill="#8e8e8e" rx="0.3"/>
<rect x="726.7" y="134" width="3" height="2.6" fill="#8e8e8e" rx="0.3"/>
<rect x="722.5" y="137.4" width="7.6" height="3" fill="#080808" rx="0.4"/>
<rect x="723.7" y="138.4" width="5.2" height="1" fill="#3ad048"/>
<rect x="715.3" y="147.5" width="1" height="1" fill="#8a8a8a"/>
<rect x="715.3" y="151.9" width="1" height="1" fill="#8a8a8a"/>
<rect x="715.3" y="146.4" width="1" height="1" fill="#8a8a8a"/>
<rect x="715.3" y="150.6" width="1" height="1" fill="#8a8a8a"/>
<rect x="720.2" y="154.2" width="4.8" height="3" fill="#0a0a0a" rx="0.5" opacity=".55"/>
<rect x="720.8" y="154.9" width="3.6" height="1.6" fill="#bcbcbc" rx="0.3" opacity=".85"/>
<rect x="714.1" y="158.3" width="16.9" height="16.8" fill="#1a1c1a"/>
<rect x="718.4" y="158.3" width="0.3" height="16.8" fill="#26302a"/>
<rect x="722.6" y="158.3" width="0.3" height="16.8" fill="#26302a"/>
<rect x="726.8" y="158.3" width="0.3" height="16.8" fill="#26302a"/>
<rect x="714.1" y="162.5" width="16.9" height="0.3" fill="#26302a"/>
<rect x="714.1" y="166.7" width="16.9" height="0.3" fill="#26302a"/>
<rect x="714.1" y="170.9" width="16.9" height="0.3" fill="#26302a"/>
<path transform="translate(714.1 158.3)" d="M0 8.6 L18 8.6" fill="none" stroke="#4a4a4a" stroke-width=".8"/>
<rect x="720" y="176.4" width="5.2" height="3" fill="#0a0a0a" rx="0.5" opacity=".55"/>
<rect x="720.6" y="177.1" width="4" height="1.6" fill="#bcbcbc" rx="0.3" opacity=".85"/>
<rect x="714.5" y="179.8" width="16.1" height="3.3" fill="#505050" rx="0.4"/>
<rect x="715.2" y="180.7" width="0.8" height="1.4" fill="#999"/>
<rect x="717.9" y="180.8" width="10" height="1.3" fill="#c8c8c8" rx="0.3" opacity=".45"/>
<rect x="728.7" y="180.8" width="0.8" height="1.2" fill="#999"/>
<rect x="714.5" y="184.1" width="16.1" height="3.3" fill="#505050" rx="0.4"/>
<rect x="715.2" y="185" width="0.8" height="1.4" fill="#999"/>
<rect x="717.9" y="185.1" width="10" height="1.3" fill="#c8c8c8" rx="0.3" opacity=".45"/>
<rect x="728.7" y="185.1" width="0.8" height="1.2" fill="#999"/>
<rect x="719" y="188.7" width="7.2" height="3" fill="#0a0a0a" rx="0.5" opacity=".55"/>
<rect x="719.6" y="189.4" width="6" height="1.6" fill="#bcbcbc" rx="0.3" opacity=".85"/>
<rect x="714.5" y="192" width="16.1" height="3.3" fill="#4a5a4c" rx="0.4"/>
<rect x="715.2" y="192.9" width="0.8" height="1.4" fill="#999"/>
<rect x="717.9" y="193" width="10" height="1.3" fill="#8ab890" rx="0.3" opacity=".45"/>
<rect x="728.7" y="193" width="0.8" height="1.2" fill="#999"/>
<rect x="714.5" y="198.5" width="16.1" height="1.7" fill="#4a4a4a"/>
<rect x="714.5" y="200.9" width="16.1" height="3.3" fill="#505050" rx="0.4"/>
<rect x="715.2" y="201.8" width="0.8" height="1.4" fill="#999"/>
<rect x="717.9" y="201.9" width="10" height="1.3" fill="#c8c8c8" rx="0.3" opacity=".45"/>
<rect x="728.7" y="201.9" width="0.8" height="1.2" fill="#999"/>
<circle cx="722.6" cy="211.4" r="3" fill="#161616" stroke="#b0b0b0" stroke-width="1"/>
<rect x="722.3" y="208.2" width="0.6" height="1.8" fill="#3ad048"/>
<rect x="714.3" y="217.2" width="16.5" height="2.8" fill="#080808"/>
<rect x="715.3" y="218.1" width="4" height="1" fill="#3ad048"/>
<rect x="723.8" y="218.1" width="5.5" height="1" fill="#3ad048"/>
<rect x="716.8" y="222.7" width="4.5" height="2.9" fill="#5e5e5e" rx="0.4"/>
<rect x="723.8" y="222.7" width="4.5" height="2.9" fill="#b8a0a0" rx="0.4"/>
<rect x="716.8" y="228.6" width="4.5" height="3.2" fill="#5e5e5e" rx="0.4"/>
<rect x="723.8" y="228.6" width="4.5" height="3.2" fill="#5e5e5e" rx="0.4"/>
<rect x="715.7" y="237" width="1.1" height="1" fill="#8a8a8a"/>
<rect x="723.3" y="237" width="1.1" height="1" fill="#8a8a8a"/>
<rect x="715.7" y="242.8" width="1.1" height="1" fill="#8a8a8a"/>
<rect x="723.3" y="242.8" width="1.1" height="1" fill="#8a8a8a"/>
<rect x="715.7" y="248.6" width="1.1" height="1" fill="#8a8a8a"/>
<rect x="723.3" y="248.6" width="1.1" height="1" fill="#8a8a8a"/>
<rect x="715.7" y="254.4" width="1.1" height="1" fill="#8a8a8a"/>
<rect x="723.3" y="254.4" width="1.1" height="1" fill="#8a8a8a"/>
<rect x="715.7" y="260.2" width="1.1" height="1" fill="#8a8a8a"/>
<rect x="723.3" y="260.2" width="1.1" height="1" fill="#8a8a8a"/>
<rect x="715.7" y="266" width="1.1" height="1" fill="#8a8a8a"/>
<rect x="723.3" y="266" width="1.1" height="1" fill="#8a8a8a"/>
<rect x="715.7" y="271.8" width="1.1" height="1" fill="#8a8a8a"/>
<rect x="723.3" y="271.8" width="1.1" height="1" fill="#8a8a8a"/>
<rect x="715.7" y="277.6" width="1.1" height="1" fill="#8a8a8a"/>
<rect x="723.3" y="277.6" width="1.1" height="1" fill="#8a8a8a"/>
<rect x="715.7" y="283.4" width="1.1" height="1" fill="#8a8a8a"/>
<rect x="723.3" y="283.4" width="1.1" height="1" fill="#8a8a8a"/>
<rect x="715.7" y="289.2" width="1.1" height="1" fill="#8a8a8a"/>
<rect x="723.3" y="289.2" width="1.1" height="1" fill="#8a8a8a"/>
<rect x="719.3" y="236" width="1.5" height="55" fill="#0a0a0a"/>
<rect x="717.5" y="248.4" width="5.2" height="7.2" fill="#d4d4d4" rx="0.6"/>
<rect x="717.5" y="251.8" width="5.2" height="0.6" fill="#555"/>
<rect x="726.5" y="236" width="2.6" height="55" fill="#12120c"/>
<rect x="729.1" y="236" width="0.7" height="55" fill="#45401c"/>
<rect x="714.1" y="293.8" width="16.9" height="3.2" fill="#080808"/>
<rect x="715.3" y="294.9" width="4" height="1" fill="#3ad048"/>
<rect x="723.3" y="294.9" width="6" height="1" fill="#3ad048"/>
<rect x="719.8" y="299" width="4.5" height="2.6" fill="#4e4e4e" rx="0.3"/>
<rect x="725.5" y="299" width="4" height="2.6" fill="#4e4e4e" rx="0.3"/>
<rect x="714.1" y="303" width="16.9" height="4.4" fill="#161616"/>
<text x="722.6" y="306.4" font-size="2.9" fill="#ececec" font-weight="bold" text-anchor="middle" textLength="16.1" lengthAdjust="spacingAndGlyphs">A15EndHm5</text>
<rect x="714.1" y="308.8" width="16.9" height="11.2" fill="#060606"/>
<rect x="715.3" y="310.2" width="4" height="1" fill="#3ad048"/>
<rect x="727.3" y="310.2" width="2" height="1" fill="#3ad048"/>
<rect x="715.3" y="313.4" width="4" height="1" fill="#3ad048"/>
<rect x="727.3" y="313.4" width="2" height="1" fill="#3ad048"/>
<rect x="715.3" y="316.6" width="4" height="1" fill="#3ad048"/>
<rect x="727.3" y="316.6" width="2" height="1" fill="#3ad048"/>
<rect x="731.9" y="30.8" width="0.9" height="314.5" fill="#0a0a0a"/>
<rect x="732.8" y="30.8" width="18.5" height="314.5" fill="#2e1734"/>
<rect x="732.8" y="31" width="18.5" height="5" fill="#b63cbc"/>
<rect x="732.8" y="340.2" width="18.5" height="4.6" fill="#b63cbc"/>
<rect x="738.4" y="36" width="7.2" height="3" fill="#0a0a0a" rx="0.5" opacity=".55"/>
<rect x="739" y="36.7" width="6" height="1.6" fill="#bcbcbc" rx="0.3" opacity=".85"/>
<rect x="734.3" y="39.9" width="7" height="3" fill="#3a3a3a" rx="0.4"/>
<rect x="742.3" y="39.9" width="7.5" height="3" fill="#3a3a3a" rx="0.4"/>
<text x="737.8" y="42.2" font-size="1.8" fill="#999" text-anchor="middle">PRE</text>
<text x="746" y="42.2" font-size="1.8" fill="#999" text-anchor="middle">MUTE</text>
<rect x="733.8" y="44.3" width="16.5" height="1.6" fill="#454545"/>
<rect x="734.2" y="47.3" width="15.6" height="3" fill="#0a0a0a" rx="0.5" opacity=".55"/>
<rect x="734.8" y="48" width="14.4" height="1.6" fill="#bcbcbc" rx="0.3" opacity=".85"/>
<rect x="734" y="51" width="16.1" height="3.3" fill="#505050" rx="0.4"/>
<rect x="734.7" y="51.9" width="0.8" height="1.4" fill="#999"/>
<rect x="737.4" y="52" width="10" height="1.3" fill="#c8c8c8" rx="0.3" opacity=".45"/>
<rect x="748.1" y="52" width="0.8" height="1.2" fill="#999"/>
<rect x="734.8" y="56.8" width="1" height="1" fill="#8a8a8a"/>
<rect x="734.8" y="61.2" width="1" height="1" fill="#8a8a8a"/>
<rect x="734.8" y="65.5" width="1" height="1" fill="#8a8a8a"/>
<rect x="734.8" y="69.9" width="1" height="1" fill="#8a8a8a"/>
<rect x="734.9" y="73.6" width="14.2" height="3" fill="#0a0a0a" rx="0.5" opacity=".55"/>
<rect x="735.5" y="74.3" width="13" height="1.6" fill="#bcbcbc" rx="0.3" opacity=".85"/>
<rect x="734" y="77.1" width="16.1" height="3.3" fill="#505050" rx="0.4"/>
<rect x="734.7" y="78" width="0.8" height="1.4" fill="#999"/>
<rect x="737.4" y="78.1" width="10" height="1.3" fill="#c8c8c8" rx="0.3" opacity=".45"/>
<rect x="748.1" y="78.1" width="0.8" height="1.2" fill="#999"/>
<rect x="735.4" y="82.2" width="1.8" height="13" fill="#0d0d0d"/>
<rect x="734.7" y="86.2" width="3.2" height="3.4" fill="#c0c0c0" rx="0.4"/>
<rect x="738.4" y="82.2" width="2.2" height="13" fill="#26260e"/>
<circle cx="745.6" cy="84.6" r="2.1" fill="#1a1a1a" stroke="#b4b4b4" stroke-width=".7"/>
<rect x="742.3" y="88" width="3" height="2.6" fill="#8e8e8e" rx="0.3"/>
<rect x="746.2" y="88" width="3" height="2.6" fill="#8e8e8e" rx="0.3"/>
<rect x="742" y="91.4" width="7.6" height="3" fill="#080808" rx="0.4"/>
<rect x="743.2" y="92.4" width="5.2" height="1" fill="#3ad048"/>
<rect x="734.8" y="101.5" width="1" height="1" fill="#8a8a8a"/>
<rect x="734.8" y="124.5" width="1" height="1" fill="#8a8a8a"/>
<rect x="734.8" y="147.5" width="1" height="1" fill="#8a8a8a"/>
<rect x="734.8" y="151.9" width="1" height="1" fill="#8a8a8a"/>
<rect x="734.8" y="146.4" width="1" height="1" fill="#8a8a8a"/>
<rect x="734.8" y="150.6" width="1" height="1" fill="#8a8a8a"/>
<rect x="739.6" y="154.2" width="4.8" height="3" fill="#0a0a0a" rx="0.5" opacity=".55"/>
<rect x="740.2" y="154.9" width="3.6" height="1.6" fill="#bcbcbc" rx="0.3" opacity=".85"/>
<rect x="733.6" y="158.3" width="16.9" height="16.8" fill="#1a1c1a"/>
<rect x="737.8" y="158.3" width="0.3" height="16.8" fill="#26302a"/>
<rect x="742" y="158.3" width="0.3" height="16.8" fill="#26302a"/>
<rect x="746.3" y="158.3" width="0.3" height="16.8" fill="#26302a"/>
<rect x="733.6" y="162.5" width="16.9" height="0.3" fill="#26302a"/>
<rect x="733.6" y="166.7" width="16.9" height="0.3" fill="#26302a"/>
<rect x="733.6" y="170.9" width="16.9" height="0.3" fill="#26302a"/>
<path transform="translate(733.6 158.3)" d="M0 8.6 L18 8.6" fill="none" stroke="#4a4a4a" stroke-width=".8"/>
<rect x="739.4" y="176.4" width="5.2" height="3" fill="#0a0a0a" rx="0.5" opacity=".55"/>
<rect x="740" y="177.1" width="4" height="1.6" fill="#bcbcbc" rx="0.3" opacity=".85"/>
<rect x="734" y="179.8" width="16.1" height="3.3" fill="#505050" rx="0.4"/>
<rect x="734.7" y="180.7" width="0.8" height="1.4" fill="#999"/>
<rect x="737.4" y="180.8" width="10" height="1.3" fill="#c8c8c8" rx="0.3" opacity=".45"/>
<rect x="748.1" y="180.8" width="0.8" height="1.2" fill="#999"/>
<rect x="734" y="184.1" width="16.1" height="3.3" fill="#505050" rx="0.4"/>
<rect x="734.7" y="185" width="0.8" height="1.4" fill="#999"/>
<rect x="737.4" y="185.1" width="10" height="1.3" fill="#c8c8c8" rx="0.3" opacity=".45"/>
<rect x="748.1" y="185.1" width="0.8" height="1.2" fill="#999"/>
<rect x="738.4" y="188.7" width="7.2" height="3" fill="#0a0a0a" rx="0.5" opacity=".55"/>
<rect x="739" y="189.4" width="6" height="1.6" fill="#bcbcbc" rx="0.3" opacity=".85"/>
<rect x="734" y="192" width="16.1" height="3.3" fill="#4a5a4c" rx="0.4"/>
<rect x="734.7" y="192.9" width="0.8" height="1.4" fill="#999"/>
<rect x="737.4" y="193" width="10" height="1.3" fill="#8ab890" rx="0.3" opacity=".45"/>
<rect x="748.1" y="193" width="0.8" height="1.2" fill="#999"/>
<rect x="734" y="198.5" width="16.1" height="1.7" fill="#4a4a4a"/>
<rect x="734" y="200.9" width="16.1" height="3.3" fill="#505050" rx="0.4"/>
<rect x="734.7" y="201.8" width="0.8" height="1.4" fill="#999"/>
<rect x="737.4" y="201.9" width="10" height="1.3" fill="#c8c8c8" rx="0.3" opacity=".45"/>
<rect x="748.1" y="201.9" width="0.8" height="1.2" fill="#999"/>
<circle cx="738.1" cy="211.4" r="2.6" fill="#161616" stroke="#a8a8a8" stroke-width=".9"/>
<rect x="737.8" y="208.6" width="0.6" height="1.6" fill="#d0d0d0"/>
<circle cx="746" cy="211.4" r="2.6" fill="#161616" stroke="#a8a8a8" stroke-width=".9"/>
<rect x="745.7" y="208.6" width="0.6" height="1.6" fill="#d0d0d0"/>
<rect x="733.8" y="217.2" width="16.5" height="2.8" fill="#080808"/>
<rect x="734.8" y="218.1" width="4" height="1" fill="#3ad048"/>
<rect x="743.3" y="218.1" width="5.5" height="1" fill="#3ad048"/>
<rect x="736.3" y="222.7" width="4.5" height="2.9" fill="#5e5e5e" rx="0.4"/>
<rect x="743.3" y="222.7" width="4.5" height="2.9" fill="#b8a0a0" rx="0.4"/>
<rect x="736.3" y="228.6" width="4.5" height="3.2" fill="#5e5e5e" rx="0.4"/>
<rect x="743.3" y="228.6" width="4.5" height="3.2" fill="#5e5e5e" rx="0.4"/>
<rect x="735.2" y="237" width="1.1" height="1" fill="#8a8a8a"/>
<rect x="742.8" y="237" width="1.1" height="1" fill="#8a8a8a"/>
<rect x="735.2" y="242.8" width="1.1" height="1" fill="#8a8a8a"/>
<rect x="742.8" y="242.8" width="1.1" height="1" fill="#8a8a8a"/>
<rect x="735.2" y="248.6" width="1.1" height="1" fill="#8a8a8a"/>
<rect x="742.8" y="248.6" width="1.1" height="1" fill="#8a8a8a"/>
<rect x="735.2" y="254.4" width="1.1" height="1" fill="#8a8a8a"/>
<rect x="742.8" y="254.4" width="1.1" height="1" fill="#8a8a8a"/>
<rect x="735.2" y="260.2" width="1.1" height="1" fill="#8a8a8a"/>
<rect x="742.8" y="260.2" width="1.1" height="1" fill="#8a8a8a"/>
<rect x="735.2" y="266" width="1.1" height="1" fill="#8a8a8a"/>
<rect x="742.8" y="266" width="1.1" height="1" fill="#8a8a8a"/>
<rect x="735.2" y="271.8" width="1.1" height="1" fill="#8a8a8a"/>
<rect x="742.8" y="271.8" width="1.1" height="1" fill="#8a8a8a"/>
<rect x="735.2" y="277.6" width="1.1" height="1" fill="#8a8a8a"/>
<rect x="742.8" y="277.6" width="1.1" height="1" fill="#8a8a8a"/>
<rect x="735.2" y="283.4" width="1.1" height="1" fill="#8a8a8a"/>
<rect x="742.8" y="283.4" width="1.1" height="1" fill="#8a8a8a"/>
<rect x="735.2" y="289.2" width="1.1" height="1" fill="#8a8a8a"/>
<rect x="742.8" y="289.2" width="1.1" height="1" fill="#8a8a8a"/>
<rect x="738.8" y="236" width="1.5" height="55" fill="#0a0a0a"/>
<rect x="737" y="246.3" width="5.2" height="7.2" fill="#d4d4d4" rx="0.6"/>
<rect x="737" y="249.7" width="5.2" height="0.6" fill="#555"/>
<rect x="746" y="236" width="2.6" height="55" fill="#12120c"/>
<rect x="748.6" y="236" width="0.7" height="55" fill="#45401c"/>
<rect x="733.6" y="293.8" width="16.9" height="3.2" fill="#080808"/>
<rect x="734.8" y="294.9" width="4" height="1" fill="#3ad048"/>
<rect x="742.8" y="294.9" width="6" height="1" fill="#3ad048"/>
<rect x="739.3" y="299" width="4.5" height="2.6" fill="#4e4e4e" rx="0.3"/>
<rect x="745" y="299" width="4" height="2.6" fill="#4e4e4e" rx="0.3"/>
<rect x="733.6" y="303" width="16.9" height="4.4" fill="#161616"/>
<text x="742" y="306.4" font-size="2.9" fill="#ececec" font-weight="bold" text-anchor="middle" textLength="13.3" lengthAdjust="spacingAndGlyphs">V Delay</text>
<rect x="733.6" y="308.8" width="16.9" height="11.2" fill="#060606"/>
<rect x="734.8" y="310.2" width="4" height="1" fill="#3ad048"/>
<rect x="746.8" y="310.2" width="2" height="1" fill="#3ad048"/>
<rect x="734.8" y="313.4" width="4" height="1" fill="#3ad048"/>
<rect x="746.8" y="313.4" width="2" height="1" fill="#3ad048"/>
<rect x="734.8" y="316.6" width="4" height="1" fill="#3ad048"/>
<rect x="746.8" y="316.6" width="2" height="1" fill="#3ad048"/>
<rect x="751.3" y="30.8" width="0.9" height="314.5" fill="#0a0a0a"/>
<rect x="752.2" y="30.8" width="18.5" height="314.5" fill="#2e1734"/>
<rect x="752.2" y="31" width="18.5" height="5" fill="#b63cbc"/>
<rect x="752.2" y="340.2" width="18.5" height="4.6" fill="#b63cbc"/>
<rect x="757.9" y="36" width="7.2" height="3" fill="#0a0a0a" rx="0.5" opacity=".55"/>
<rect x="758.5" y="36.7" width="6" height="1.6" fill="#bcbcbc" rx="0.3" opacity=".85"/>
<rect x="753.7" y="39.9" width="7" height="3" fill="#3a3a3a" rx="0.4"/>
<rect x="761.7" y="39.9" width="7.5" height="3" fill="#3a3a3a" rx="0.4"/>
<text x="757.2" y="42.2" font-size="1.8" fill="#999" text-anchor="middle">PRE</text>
<text x="765.4" y="42.2" font-size="1.8" fill="#999" text-anchor="middle">MUTE</text>
<rect x="753.2" y="44.3" width="16.5" height="1.6" fill="#454545"/>
<rect x="753.7" y="47.3" width="15.6" height="3" fill="#0a0a0a" rx="0.5" opacity=".55"/>
<rect x="754.3" y="48" width="14.4" height="1.6" fill="#bcbcbc" rx="0.3" opacity=".85"/>
<rect x="753.4" y="51" width="16.1" height="3.3" fill="#505050" rx="0.4"/>
<rect x="754.1" y="51.9" width="0.8" height="1.4" fill="#999"/>
<rect x="756.8" y="52" width="10" height="1.3" fill="#c8c8c8" rx="0.3" opacity=".45"/>
<rect x="767.5" y="52" width="0.8" height="1.2" fill="#999"/>
<rect x="754.2" y="56.8" width="1" height="1" fill="#8a8a8a"/>
<rect x="754.2" y="61.2" width="1" height="1" fill="#8a8a8a"/>
<rect x="754.2" y="65.5" width="1" height="1" fill="#8a8a8a"/>
<rect x="754.2" y="69.9" width="1" height="1" fill="#8a8a8a"/>
<rect x="754.4" y="73.6" width="14.2" height="3" fill="#0a0a0a" rx="0.5" opacity=".55"/>
<rect x="755" y="74.3" width="13" height="1.6" fill="#bcbcbc" rx="0.3" opacity=".85"/>
<rect x="753.4" y="77.1" width="16.1" height="3.3" fill="#505050" rx="0.4"/>
<rect x="754.1" y="78" width="0.8" height="1.4" fill="#999"/>
<rect x="756.8" y="78.1" width="10" height="1.3" fill="#c8c8c8" rx="0.3" opacity=".45"/>
<rect x="767.5" y="78.1" width="0.8" height="1.2" fill="#999"/>
<rect x="754.8" y="82.2" width="1.8" height="13" fill="#0d0d0d"/>
<rect x="754.1" y="86.2" width="3.2" height="3.4" fill="#c0c0c0" rx="0.4"/>
<rect x="757.8" y="82.2" width="2.2" height="13" fill="#26260e"/>
<circle cx="765" cy="84.6" r="2.1" fill="#1a1a1a" stroke="#b4b4b4" stroke-width=".7"/>
<rect x="761.7" y="88" width="3" height="2.6" fill="#8e8e8e" rx="0.3"/>
<rect x="765.6" y="88" width="3" height="2.6" fill="#8e8e8e" rx="0.3"/>
<rect x="761.4" y="91.4" width="7.6" height="3" fill="#080808" rx="0.4"/>
<rect x="762.6" y="92.4" width="5.2" height="1" fill="#3ad048"/>
<rect x="754.2" y="101.5" width="1" height="1" fill="#8a8a8a"/>
<rect x="754.2" y="124.5" width="1" height="1" fill="#8a8a8a"/>
<rect x="754.2" y="147.5" width="1" height="1" fill="#8a8a8a"/>
<rect x="754.2" y="151.9" width="1" height="1" fill="#8a8a8a"/>
<rect x="754.2" y="146.4" width="1" height="1" fill="#8a8a8a"/>
<rect x="754.2" y="150.6" width="1" height="1" fill="#8a8a8a"/>
<rect x="759.1" y="154.2" width="4.8" height="3" fill="#0a0a0a" rx="0.5" opacity=".55"/>
<rect x="759.7" y="154.9" width="3.6" height="1.6" fill="#bcbcbc" rx="0.3" opacity=".85"/>
<rect x="753" y="158.3" width="16.9" height="16.8" fill="#1a1c1a"/>
<rect x="757.2" y="158.3" width="0.3" height="16.8" fill="#26302a"/>
<rect x="761.5" y="158.3" width="0.3" height="16.8" fill="#26302a"/>
<rect x="765.7" y="158.3" width="0.3" height="16.8" fill="#26302a"/>
<rect x="753" y="162.5" width="16.9" height="0.3" fill="#26302a"/>
<rect x="753" y="166.7" width="16.9" height="0.3" fill="#26302a"/>
<rect x="753" y="170.9" width="16.9" height="0.3" fill="#26302a"/>
<path transform="translate(753 158.3)" d="M0 8.6 L18 8.6" fill="none" stroke="#3aa860" stroke-width=".8"/>
<rect x="758.9" y="176.4" width="5.2" height="3" fill="#0a0a0a" rx="0.5" opacity=".55"/>
<rect x="759.5" y="177.1" width="4" height="1.6" fill="#bcbcbc" rx="0.3" opacity=".85"/>
<rect x="753.4" y="179.8" width="16.1" height="3.3" fill="#505050" rx="0.4"/>
<rect x="754.1" y="180.7" width="0.8" height="1.4" fill="#999"/>
<rect x="756.8" y="180.8" width="10" height="1.3" fill="#c8c8c8" rx="0.3" opacity=".45"/>
<rect x="767.5" y="180.8" width="0.8" height="1.2" fill="#999"/>
<rect x="753.4" y="184.1" width="16.1" height="3.3" fill="#505050" rx="0.4"/>
<rect x="754.1" y="185" width="0.8" height="1.4" fill="#999"/>
<rect x="756.8" y="185.1" width="10" height="1.3" fill="#c8c8c8" rx="0.3" opacity=".45"/>
<rect x="767.5" y="185.1" width="0.8" height="1.2" fill="#999"/>
<rect x="757.9" y="188.7" width="7.2" height="3" fill="#0a0a0a" rx="0.5" opacity=".55"/>
<rect x="758.5" y="189.4" width="6" height="1.6" fill="#bcbcbc" rx="0.3" opacity=".85"/>
<rect x="753.4" y="192" width="16.1" height="3.3" fill="#4a5a4c" rx="0.4"/>
<rect x="754.1" y="192.9" width="0.8" height="1.4" fill="#999"/>
<rect x="756.8" y="193" width="10" height="1.3" fill="#8ab890" rx="0.3" opacity=".45"/>
<rect x="767.5" y="193" width="0.8" height="1.2" fill="#999"/>
<rect x="753.4" y="198.5" width="16.1" height="1.7" fill="#4a4a4a"/>
<rect x="753.4" y="200.9" width="16.1" height="3.3" fill="#505050" rx="0.4"/>
<rect x="754.1" y="201.8" width="0.8" height="1.4" fill="#999"/>
<rect x="756.8" y="201.9" width="10" height="1.3" fill="#c8c8c8" rx="0.3" opacity=".45"/>
<rect x="767.5" y="201.9" width="0.8" height="1.2" fill="#999"/>
<circle cx="757.5" cy="211.4" r="2.6" fill="#161616" stroke="#a8a8a8" stroke-width=".9"/>
<rect x="757.2" y="208.6" width="0.6" height="1.6" fill="#d0d0d0"/>
<circle cx="765.4" cy="211.4" r="2.6" fill="#161616" stroke="#a8a8a8" stroke-width=".9"/>
<rect x="765.1" y="208.6" width="0.6" height="1.6" fill="#d0d0d0"/>
<rect x="753.2" y="217.2" width="16.5" height="2.8" fill="#080808"/>
<rect x="754.2" y="218.1" width="4" height="1" fill="#3ad048"/>
<rect x="762.7" y="218.1" width="5.5" height="1" fill="#3ad048"/>
<rect x="755.7" y="222.7" width="4.5" height="2.9" fill="#5e5e5e" rx="0.4"/>
<rect x="762.7" y="222.7" width="4.5" height="2.9" fill="#b8a0a0" rx="0.4"/>
<rect x="755.7" y="228.6" width="4.5" height="3.2" fill="#5e5e5e" rx="0.4"/>
<rect x="762.7" y="228.6" width="4.5" height="3.2" fill="#5e5e5e" rx="0.4"/>
<rect x="754.6" y="237" width="1.1" height="1" fill="#8a8a8a"/>
<rect x="762.2" y="237" width="1.1" height="1" fill="#8a8a8a"/>
<rect x="754.6" y="242.8" width="1.1" height="1" fill="#8a8a8a"/>
<rect x="762.2" y="242.8" width="1.1" height="1" fill="#8a8a8a"/>
<rect x="754.6" y="248.6" width="1.1" height="1" fill="#8a8a8a"/>
<rect x="762.2" y="248.6" width="1.1" height="1" fill="#8a8a8a"/>
<rect x="754.6" y="254.4" width="1.1" height="1" fill="#8a8a8a"/>
<rect x="762.2" y="254.4" width="1.1" height="1" fill="#8a8a8a"/>
<rect x="754.6" y="260.2" width="1.1" height="1" fill="#8a8a8a"/>
<rect x="762.2" y="260.2" width="1.1" height="1" fill="#8a8a8a"/>
<rect x="754.6" y="266" width="1.1" height="1" fill="#8a8a8a"/>
<rect x="762.2" y="266" width="1.1" height="1" fill="#8a8a8a"/>
<rect x="754.6" y="271.8" width="1.1" height="1" fill="#8a8a8a"/>
<rect x="762.2" y="271.8" width="1.1" height="1" fill="#8a8a8a"/>
<rect x="754.6" y="277.6" width="1.1" height="1" fill="#8a8a8a"/>
<rect x="762.2" y="277.6" width="1.1" height="1" fill="#8a8a8a"/>
<rect x="754.6" y="283.4" width="1.1" height="1" fill="#8a8a8a"/>
<rect x="762.2" y="283.4" width="1.1" height="1" fill="#8a8a8a"/>
<rect x="754.6" y="289.2" width="1.1" height="1" fill="#8a8a8a"/>
<rect x="762.2" y="289.2" width="1.1" height="1" fill="#8a8a8a"/>
<rect x="758.2" y="236" width="1.5" height="55" fill="#0a0a0a"/>
<rect x="756.4" y="246.3" width="5.2" height="7.2" fill="#d4d4d4" rx="0.6"/>
<rect x="756.4" y="249.7" width="5.2" height="0.6" fill="#555"/>
<rect x="765.4" y="236" width="2.6" height="55" fill="#12120c"/>
<rect x="768" y="236" width="0.7" height="55" fill="#45401c"/>
<rect x="753" y="293.8" width="16.9" height="3.2" fill="#080808"/>
<rect x="754.2" y="294.9" width="4" height="1" fill="#3ad048"/>
<rect x="762.2" y="294.9" width="6" height="1" fill="#3ad048"/>
<rect x="758.7" y="299" width="4.5" height="2.6" fill="#4e4e4e" rx="0.3"/>
<rect x="764.4" y="299" width="4" height="2.6" fill="#4e4e4e" rx="0.3"/>
<rect x="753" y="303" width="16.9" height="4.4" fill="#161616"/>
<text x="761.5" y="306.4" font-size="2.9" fill="#ececec" font-weight="bold" text-anchor="middle" textLength="11.4" lengthAdjust="spacingAndGlyphs">V Verb</text>
<rect x="753" y="308.8" width="16.9" height="11.2" fill="#060606"/>
<rect x="754.2" y="310.2" width="4" height="1" fill="#3ad048"/>
<rect x="766.2" y="310.2" width="2" height="1" fill="#3ad048"/>
<rect x="754.2" y="313.4" width="4" height="1" fill="#3ad048"/>
<rect x="766.2" y="313.4" width="2" height="1" fill="#3ad048"/>
<rect x="754.2" y="316.6" width="4" height="1" fill="#3ad048"/>
<rect x="766.2" y="316.6" width="2" height="1" fill="#3ad048"/>
<rect x="770.7" y="30.8" width="0.9" height="314.5" fill="#0a0a0a"/>
<rect x="771.6" y="30.8" width="18.5" height="314.5" fill="#2e1734"/>
<rect x="771.6" y="31" width="18.5" height="5" fill="#b63cbc"/>
<rect x="771.6" y="340.2" width="18.5" height="4.6" fill="#b63cbc"/>
<rect x="777.3" y="36" width="7.2" height="3" fill="#0a0a0a" rx="0.5" opacity=".55"/>
<rect x="777.9" y="36.7" width="6" height="1.6" fill="#bcbcbc" rx="0.3" opacity=".85"/>
<rect x="773.1" y="39.9" width="7" height="3" fill="#3a3a3a" rx="0.4"/>
<rect x="781.1" y="39.9" width="7.5" height="3" fill="#3a3a3a" rx="0.4"/>
<text x="776.6" y="42.2" font-size="1.8" fill="#999" text-anchor="middle">PRE</text>
<text x="784.8" y="42.2" font-size="1.8" fill="#999" text-anchor="middle">MUTE</text>
<rect x="772.6" y="44.3" width="16.5" height="1.6" fill="#454545"/>
<rect x="773.1" y="47.3" width="15.6" height="3" fill="#0a0a0a" rx="0.5" opacity=".55"/>
<rect x="773.7" y="48" width="14.4" height="1.6" fill="#bcbcbc" rx="0.3" opacity=".85"/>
<rect x="772.8" y="51" width="16.1" height="3.3" fill="#505050" rx="0.4"/>
<rect x="773.5" y="51.9" width="0.8" height="1.4" fill="#999"/>
<rect x="776.2" y="52" width="10" height="1.3" fill="#c8c8c8" rx="0.3" opacity=".45"/>
<rect x="787" y="52" width="0.8" height="1.2" fill="#999"/>
<rect x="773.6" y="56.8" width="1" height="1" fill="#8a8a8a"/>
<rect x="773.6" y="61.2" width="1" height="1" fill="#8a8a8a"/>
<rect x="773.6" y="65.5" width="1" height="1" fill="#8a8a8a"/>
<rect x="773.6" y="69.9" width="1" height="1" fill="#8a8a8a"/>
<rect x="773.8" y="73.6" width="14.2" height="3" fill="#0a0a0a" rx="0.5" opacity=".55"/>
<rect x="774.4" y="74.3" width="13" height="1.6" fill="#bcbcbc" rx="0.3" opacity=".85"/>
<rect x="772.8" y="77.1" width="16.1" height="3.3" fill="#505050" rx="0.4"/>
<rect x="773.5" y="78" width="0.8" height="1.4" fill="#999"/>
<rect x="776.2" y="78.1" width="10" height="1.3" fill="#c8c8c8" rx="0.3" opacity=".45"/>
<rect x="787" y="78.1" width="0.8" height="1.2" fill="#999"/>
<rect x="774.2" y="82.2" width="1.8" height="13" fill="#0d0d0d"/>
<rect x="773.5" y="86.2" width="3.2" height="3.4" fill="#c0c0c0" rx="0.4"/>
<rect x="777.2" y="82.2" width="2.2" height="13" fill="#26260e"/>
<circle cx="784.4" cy="84.6" r="2.1" fill="#1a1a1a" stroke="#b4b4b4" stroke-width=".7"/>
<rect x="781.1" y="88" width="3" height="2.6" fill="#8e8e8e" rx="0.3"/>
<rect x="785" y="88" width="3" height="2.6" fill="#8e8e8e" rx="0.3"/>
<rect x="780.8" y="91.4" width="7.6" height="3" fill="#080808" rx="0.4"/>
<rect x="782" y="92.4" width="5.2" height="1" fill="#3ad048"/>
<rect x="773.6" y="101.5" width="1" height="1" fill="#8a8a8a"/>
<rect x="773.6" y="124.5" width="1" height="1" fill="#8a8a8a"/>
<rect x="773.6" y="147.5" width="1" height="1" fill="#8a8a8a"/>
<rect x="773.6" y="151.9" width="1" height="1" fill="#8a8a8a"/>
<rect x="773.6" y="146.4" width="1" height="1" fill="#8a8a8a"/>
<rect x="773.6" y="150.6" width="1" height="1" fill="#8a8a8a"/>
<rect x="778.5" y="154.2" width="4.8" height="3" fill="#0a0a0a" rx="0.5" opacity=".55"/>
<rect x="779.1" y="154.9" width="3.6" height="1.6" fill="#bcbcbc" rx="0.3" opacity=".85"/>
<rect x="772.4" y="158.3" width="16.9" height="16.8" fill="#1a1c1a"/>
<rect x="776.7" y="158.3" width="0.3" height="16.8" fill="#26302a"/>
<rect x="780.9" y="158.3" width="0.3" height="16.8" fill="#26302a"/>
<rect x="785.1" y="158.3" width="0.3" height="16.8" fill="#26302a"/>
<rect x="772.4" y="162.5" width="16.9" height="0.3" fill="#26302a"/>
<rect x="772.4" y="166.7" width="16.9" height="0.3" fill="#26302a"/>
<rect x="772.4" y="170.9" width="16.9" height="0.3" fill="#26302a"/>
<path transform="translate(772.4 158.3)" d="M0 8.6 L18 8.6" fill="none" stroke="#3aa860" stroke-width=".8"/>
<rect x="778.3" y="176.4" width="5.2" height="3" fill="#0a0a0a" rx="0.5" opacity=".55"/>
<rect x="778.9" y="177.1" width="4" height="1.6" fill="#bcbcbc" rx="0.3" opacity=".85"/>
<rect x="772.8" y="179.8" width="16.1" height="3.3" fill="#505050" rx="0.4"/>
<rect x="773.5" y="180.7" width="0.8" height="1.4" fill="#999"/>
<rect x="776.2" y="180.8" width="10" height="1.3" fill="#c8c8c8" rx="0.3" opacity=".45"/>
<rect x="787" y="180.8" width="0.8" height="1.2" fill="#999"/>
<rect x="772.8" y="184.1" width="16.1" height="3.3" fill="#505050" rx="0.4"/>
<rect x="773.5" y="185" width="0.8" height="1.4" fill="#999"/>
<rect x="776.2" y="185.1" width="10" height="1.3" fill="#c8c8c8" rx="0.3" opacity=".45"/>
<rect x="787" y="185.1" width="0.8" height="1.2" fill="#999"/>
<rect x="777.3" y="188.7" width="7.2" height="3" fill="#0a0a0a" rx="0.5" opacity=".55"/>
<rect x="777.9" y="189.4" width="6" height="1.6" fill="#bcbcbc" rx="0.3" opacity=".85"/>
<rect x="772.8" y="192" width="16.1" height="3.3" fill="#4a5a4c" rx="0.4"/>
<rect x="773.5" y="192.9" width="0.8" height="1.4" fill="#999"/>
<rect x="776.2" y="193" width="10" height="1.3" fill="#8ab890" rx="0.3" opacity=".45"/>
<rect x="787" y="193" width="0.8" height="1.2" fill="#999"/>
<rect x="772.8" y="198.5" width="16.1" height="1.7" fill="#4a4a4a"/>
<rect x="772.8" y="200.9" width="16.1" height="3.3" fill="#505050" rx="0.4"/>
<rect x="773.5" y="201.8" width="0.8" height="1.4" fill="#999"/>
<rect x="776.2" y="201.9" width="10" height="1.3" fill="#c8c8c8" rx="0.3" opacity=".45"/>
<rect x="787" y="201.9" width="0.8" height="1.2" fill="#999"/>
<circle cx="776.9" cy="211.4" r="2.6" fill="#161616" stroke="#a8a8a8" stroke-width=".9"/>
<rect x="776.6" y="208.6" width="0.6" height="1.6" fill="#d0d0d0"/>
<circle cx="784.8" cy="211.4" r="2.6" fill="#161616" stroke="#a8a8a8" stroke-width=".9"/>
<rect x="784.5" y="208.6" width="0.6" height="1.6" fill="#d0d0d0"/>
<rect x="772.6" y="217.2" width="16.5" height="2.8" fill="#080808"/>
<rect x="773.6" y="218.1" width="4" height="1" fill="#3ad048"/>
<rect x="782.1" y="218.1" width="5.5" height="1" fill="#3ad048"/>
<rect x="775.1" y="222.7" width="4.5" height="2.9" fill="#5e5e5e" rx="0.4"/>
<rect x="782.1" y="222.7" width="4.5" height="2.9" fill="#b8a0a0" rx="0.4"/>
<rect x="775.1" y="228.6" width="4.5" height="3.2" fill="#5e5e5e" rx="0.4"/>
<rect x="782.1" y="228.6" width="4.5" height="3.2" fill="#5e5e5e" rx="0.4"/>
<rect x="774" y="237" width="1.1" height="1" fill="#8a8a8a"/>
<rect x="781.6" y="237" width="1.1" height="1" fill="#8a8a8a"/>
<rect x="774" y="242.8" width="1.1" height="1" fill="#8a8a8a"/>
<rect x="781.6" y="242.8" width="1.1" height="1" fill="#8a8a8a"/>
<rect x="774" y="248.6" width="1.1" height="1" fill="#8a8a8a"/>
<rect x="781.6" y="248.6" width="1.1" height="1" fill="#8a8a8a"/>
<rect x="774" y="254.4" width="1.1" height="1" fill="#8a8a8a"/>
<rect x="781.6" y="254.4" width="1.1" height="1" fill="#8a8a8a"/>
<rect x="774" y="260.2" width="1.1" height="1" fill="#8a8a8a"/>
<rect x="781.6" y="260.2" width="1.1" height="1" fill="#8a8a8a"/>
<rect x="774" y="266" width="1.1" height="1" fill="#8a8a8a"/>
<rect x="781.6" y="266" width="1.1" height="1" fill="#8a8a8a"/>
<rect x="774" y="271.8" width="1.1" height="1" fill="#8a8a8a"/>
<rect x="781.6" y="271.8" width="1.1" height="1" fill="#8a8a8a"/>
<rect x="774" y="277.6" width="1.1" height="1" fill="#8a8a8a"/>
<rect x="781.6" y="277.6" width="1.1" height="1" fill="#8a8a8a"/>
<rect x="774" y="283.4" width="1.1" height="1" fill="#8a8a8a"/>
<rect x="781.6" y="283.4" width="1.1" height="1" fill="#8a8a8a"/>
<rect x="774" y="289.2" width="1.1" height="1" fill="#8a8a8a"/>
<rect x="781.6" y="289.2" width="1.1" height="1" fill="#8a8a8a"/>
<rect x="777.6" y="236" width="1.5" height="55" fill="#0a0a0a"/>
<rect x="775.8" y="247.9" width="5.2" height="7.2" fill="#d4d4d4" rx="0.6"/>
<rect x="775.8" y="251.3" width="5.2" height="0.6" fill="#555"/>
<rect x="784.8" y="236" width="2.6" height="55" fill="#12120c"/>
<rect x="787.4" y="236" width="0.7" height="55" fill="#45401c"/>
<rect x="784.8" y="265" width="2.6" height="26" fill="#3cc83c"/>
<rect x="772.4" y="293.8" width="16.9" height="3.2" fill="#080808"/>
<rect x="773.6" y="294.9" width="4" height="1" fill="#3ad048"/>
<rect x="781.6" y="294.9" width="6" height="1" fill="#3ad048"/>
<rect x="778.1" y="299" width="4.5" height="2.6" fill="#4e4e4e" rx="0.3"/>
<rect x="783.8" y="299" width="4" height="2.6" fill="#4e4e4e" rx="0.3"/>
<rect x="772.4" y="303" width="16.9" height="4.4" fill="#161616"/>
<text x="780.9" y="306.4" font-size="2.9" fill="#ececec" font-weight="bold" text-anchor="middle" textLength="16.1" lengthAdjust="spacingAndGlyphs">V Verb Big</text>
<rect x="772.4" y="308.8" width="16.9" height="11.2" fill="#060606"/>
<rect x="773.6" y="310.2" width="4" height="1" fill="#3ad048"/>
<rect x="785.6" y="310.2" width="2" height="1" fill="#3ad048"/>
<rect x="773.6" y="313.4" width="4" height="1" fill="#3ad048"/>
<rect x="785.6" y="313.4" width="2" height="1" fill="#3ad048"/>
<rect x="773.6" y="316.6" width="4" height="1" fill="#3ad048"/>
<rect x="785.6" y="316.6" width="2" height="1" fill="#3ad048"/>
<rect x="790.2" y="30.8" width="0.9" height="314.5" fill="#0a0a0a"/>
<rect x="791.1" y="30.8" width="18.5" height="314.5" fill="#2c2c18"/>
<rect x="791.1" y="31" width="18.5" height="5" fill="#c8c828"/>
<rect x="791.1" y="340.2" width="18.5" height="4.6" fill="#c8c828"/>
<rect x="796.7" y="36" width="7.2" height="3" fill="#0a0a0a" rx="0.5" opacity=".55"/>
<rect x="797.3" y="36.7" width="6" height="1.6" fill="#bcbcbc" rx="0.3" opacity=".85"/>
<rect x="792.6" y="39.9" width="7" height="3" fill="#3a3a3a" rx="0.4"/>
<rect x="800.6" y="39.9" width="7.5" height="3" fill="#3a3a3a" rx="0.4"/>
<text x="796.1" y="42.2" font-size="1.8" fill="#999" text-anchor="middle">PRE</text>
<text x="804.3" y="42.2" font-size="1.8" fill="#999" text-anchor="middle">MUTE</text>
<rect x="792.1" y="44.3" width="16.5" height="1.6" fill="#454545"/>
<rect x="792.5" y="47.3" width="15.6" height="3" fill="#0a0a0a" rx="0.5" opacity=".55"/>
<rect x="793.1" y="48" width="14.4" height="1.6" fill="#bcbcbc" rx="0.3" opacity=".85"/>
<rect x="792.3" y="51" width="16.1" height="3.3" fill="#505050" rx="0.4"/>
<rect x="793" y="51.9" width="0.8" height="1.4" fill="#999"/>
<rect x="795.7" y="52" width="10" height="1.3" fill="#c8c8c8" rx="0.3" opacity=".45"/>
<rect x="806.4" y="52" width="0.8" height="1.2" fill="#999"/>
<rect x="793.1" y="56.8" width="1" height="1" fill="#8a8a8a"/>
<rect x="793.1" y="61.2" width="1" height="1" fill="#8a8a8a"/>
<rect x="793.1" y="65.5" width="1" height="1" fill="#8a8a8a"/>
<rect x="793.1" y="69.9" width="1" height="1" fill="#8a8a8a"/>
<rect x="793.2" y="73.6" width="14.2" height="3" fill="#0a0a0a" rx="0.5" opacity=".55"/>
<rect x="793.8" y="74.3" width="13" height="1.6" fill="#bcbcbc" rx="0.3" opacity=".85"/>
<rect x="792.3" y="77.1" width="16.1" height="3.3" fill="#505050" rx="0.4"/>
<rect x="793" y="78" width="0.8" height="1.4" fill="#999"/>
<rect x="795.7" y="78.1" width="10" height="1.3" fill="#c8c8c8" rx="0.3" opacity=".45"/>
<rect x="806.4" y="78.1" width="0.8" height="1.2" fill="#999"/>
<rect x="793.7" y="82.2" width="1.8" height="13" fill="#0d0d0d"/>
<rect x="793" y="86.2" width="3.2" height="3.4" fill="#c0c0c0" rx="0.4"/>
<rect x="796.7" y="82.2" width="2.2" height="13" fill="#26260e"/>
<circle cx="803.9" cy="84.6" r="2.1" fill="#1a1a1a" stroke="#b4b4b4" stroke-width=".7"/>
<rect x="800.6" y="88" width="3" height="2.6" fill="#8e8e8e" rx="0.3"/>
<rect x="804.5" y="88" width="3" height="2.6" fill="#8e8e8e" rx="0.3"/>
<rect x="800.3" y="91.4" width="7.6" height="3" fill="#080808" rx="0.4"/>
<rect x="801.5" y="92.4" width="5.2" height="1" fill="#3ad048"/>
<rect x="793.1" y="101.5" width="1" height="1" fill="#8a8a8a"/>
<rect x="793.1" y="124.5" width="1" height="1" fill="#8a8a8a"/>
<rect x="793.1" y="147.5" width="1" height="1" fill="#8a8a8a"/>
<rect x="793.1" y="151.9" width="1" height="1" fill="#8a8a8a"/>
<rect x="793.1" y="146.4" width="1" height="1" fill="#8a8a8a"/>
<rect x="793.1" y="150.6" width="1" height="1" fill="#8a8a8a"/>
<rect x="797.9" y="154.2" width="4.8" height="3" fill="#0a0a0a" rx="0.5" opacity=".55"/>
<rect x="798.5" y="154.9" width="3.6" height="1.6" fill="#bcbcbc" rx="0.3" opacity=".85"/>
<rect x="791.9" y="158.3" width="16.9" height="16.8" fill="#1a1c1a"/>
<rect x="796.1" y="158.3" width="0.3" height="16.8" fill="#26302a"/>
<rect x="800.3" y="158.3" width="0.3" height="16.8" fill="#26302a"/>
<rect x="804.6" y="158.3" width="0.3" height="16.8" fill="#26302a"/>
<rect x="791.9" y="162.5" width="16.9" height="0.3" fill="#26302a"/>
<rect x="791.9" y="166.7" width="16.9" height="0.3" fill="#26302a"/>
<rect x="791.9" y="170.9" width="16.9" height="0.3" fill="#26302a"/>
<path transform="translate(791.9 158.3)" d="M0 8 C6 8 9 8 11 9.8 S14 8 18 8" fill="none" stroke="#3aa860" stroke-width=".8"/>
<rect x="797.7" y="176.4" width="5.2" height="3" fill="#0a0a0a" rx="0.5" opacity=".55"/>
<rect x="798.3" y="177.1" width="4" height="1.6" fill="#bcbcbc" rx="0.3" opacity=".85"/>
<rect x="792.3" y="179.8" width="16.1" height="3.3" fill="#505050" rx="0.4"/>
<rect x="793" y="180.7" width="0.8" height="1.4" fill="#999"/>
<rect x="795.7" y="180.8" width="10" height="1.3" fill="#c8c8c8" rx="0.3" opacity=".45"/>
<rect x="806.4" y="180.8" width="0.8" height="1.2" fill="#999"/>
<rect x="792.3" y="184.1" width="16.1" height="3.3" fill="#505050" rx="0.4"/>
<rect x="793" y="185" width="0.8" height="1.4" fill="#999"/>
<rect x="795.7" y="185.1" width="10" height="1.3" fill="#c8c8c8" rx="0.3" opacity=".45"/>
<rect x="806.4" y="185.1" width="0.8" height="1.2" fill="#999"/>
<rect x="796.7" y="188.7" width="7.2" height="3" fill="#0a0a0a" rx="0.5" opacity=".55"/>
<rect x="797.3" y="189.4" width="6" height="1.6" fill="#bcbcbc" rx="0.3" opacity=".85"/>
<rect x="792.3" y="192" width="16.1" height="3.3" fill="#4a5a4c" rx="0.4"/>
<rect x="793" y="192.9" width="0.8" height="1.4" fill="#999"/>
<rect x="795.7" y="193" width="10" height="1.3" fill="#8ab890" rx="0.3" opacity=".45"/>
<rect x="806.4" y="193" width="0.8" height="1.2" fill="#999"/>
<rect x="792.3" y="198.5" width="16.1" height="1.7" fill="#4a4a4a"/>
<rect x="792.3" y="200.9" width="16.1" height="3.3" fill="#505050" rx="0.4"/>
<rect x="793" y="201.8" width="0.8" height="1.4" fill="#999"/>
<rect x="795.7" y="201.9" width="10" height="1.3" fill="#c8c8c8" rx="0.3" opacity=".45"/>
<rect x="806.4" y="201.9" width="0.8" height="1.2" fill="#999"/>
<circle cx="796.4" cy="211.4" r="2.6" fill="#161616" stroke="#a8a8a8" stroke-width=".9"/>
<rect x="796.1" y="208.6" width="0.6" height="1.6" fill="#d0d0d0"/>
<circle cx="804.3" cy="211.4" r="2.6" fill="#161616" stroke="#a8a8a8" stroke-width=".9"/>
<rect x="804" y="208.6" width="0.6" height="1.6" fill="#d0d0d0"/>
<rect x="792.1" y="217.2" width="16.5" height="2.8" fill="#080808"/>
<rect x="793.1" y="218.1" width="4" height="1" fill="#3ad048"/>
<rect x="801.6" y="218.1" width="5.5" height="1" fill="#3ad048"/>
<rect x="794.6" y="222.7" width="4.5" height="2.9" fill="#5e5e5e" rx="0.4"/>
<rect x="801.6" y="222.7" width="4.5" height="2.9" fill="#b8a0a0" rx="0.4"/>
<rect x="794.6" y="228.6" width="4.5" height="3.2" fill="#5e5e5e" rx="0.4"/>
<rect x="801.6" y="228.6" width="4.5" height="3.2" fill="#5e5e5e" rx="0.4"/>
<rect x="793.5" y="237" width="1.1" height="1" fill="#8a8a8a"/>
<rect x="801.1" y="237" width="1.1" height="1" fill="#8a8a8a"/>
<rect x="793.5" y="242.8" width="1.1" height="1" fill="#8a8a8a"/>
<rect x="801.1" y="242.8" width="1.1" height="1" fill="#8a8a8a"/>
<rect x="793.5" y="248.6" width="1.1" height="1" fill="#8a8a8a"/>
<rect x="801.1" y="248.6" width="1.1" height="1" fill="#8a8a8a"/>
<rect x="793.5" y="254.4" width="1.1" height="1" fill="#8a8a8a"/>
<rect x="801.1" y="254.4" width="1.1" height="1" fill="#8a8a8a"/>
<rect x="793.5" y="260.2" width="1.1" height="1" fill="#8a8a8a"/>
<rect x="801.1" y="260.2" width="1.1" height="1" fill="#8a8a8a"/>
<rect x="793.5" y="266" width="1.1" height="1" fill="#8a8a8a"/>
<rect x="801.1" y="266" width="1.1" height="1" fill="#8a8a8a"/>
<rect x="793.5" y="271.8" width="1.1" height="1" fill="#8a8a8a"/>
<rect x="801.1" y="271.8" width="1.1" height="1" fill="#8a8a8a"/>
<rect x="793.5" y="277.6" width="1.1" height="1" fill="#8a8a8a"/>
<rect x="801.1" y="277.6" width="1.1" height="1" fill="#8a8a8a"/>
<rect x="793.5" y="283.4" width="1.1" height="1" fill="#8a8a8a"/>
<rect x="801.1" y="283.4" width="1.1" height="1" fill="#8a8a8a"/>
<rect x="793.5" y="289.2" width="1.1" height="1" fill="#8a8a8a"/>
<rect x="801.1" y="289.2" width="1.1" height="1" fill="#8a8a8a"/>
<rect x="797.1" y="236" width="1.5" height="55" fill="#0a0a0a"/>
<rect x="795.3" y="246.3" width="5.2" height="7.2" fill="#d4d4d4" rx="0.6"/>
<rect x="795.3" y="249.7" width="5.2" height="0.6" fill="#555"/>
<rect x="804.3" y="236" width="2.6" height="55" fill="#12120c"/>
<rect x="806.9" y="236" width="0.7" height="55" fill="#45401c"/>
<rect x="791.9" y="293.8" width="16.9" height="3.2" fill="#080808"/>
<rect x="793.1" y="294.9" width="4" height="1" fill="#3ad048"/>
<rect x="801.1" y="294.9" width="6" height="1" fill="#3ad048"/>
<rect x="797.6" y="299" width="4.5" height="2.6" fill="#4e4e4e" rx="0.3"/>
<rect x="803.3" y="299" width="4" height="2.6" fill="#4e4e4e" rx="0.3"/>
<rect x="791.9" y="303" width="16.9" height="4.4" fill="#161616"/>
<text x="800.3" y="306.4" font-size="2.9" fill="#ececec" font-weight="bold" text-anchor="middle" textLength="11.4" lengthAdjust="spacingAndGlyphs">Pumper</text>
<rect x="791.9" y="308.8" width="16.9" height="11.2" fill="#060606"/>
<rect x="793.1" y="310.2" width="4" height="1" fill="#3ad048"/>
<rect x="805.1" y="310.2" width="2" height="1" fill="#3ad048"/>
<rect x="793.1" y="313.4" width="4" height="1" fill="#3ad048"/>
<rect x="805.1" y="313.4" width="2" height="1" fill="#3ad048"/>
<rect x="793.1" y="316.6" width="4" height="1" fill="#3ad048"/>
<rect x="805.1" y="316.6" width="2" height="1" fill="#3ad048"/>
<rect x="809.6" y="30.8" width="0.9" height="314.5" fill="#0a0a0a"/>
<rect x="810.5" y="30.8" width="18.5" height="314.5" fill="#301618"/>
<rect x="810.5" y="31" width="18.5" height="5" fill="#a01c1c"/>
<rect x="810.5" y="340.2" width="18.5" height="4.6" fill="#a01c1c"/>
<rect x="816.2" y="36" width="7.2" height="3" fill="#0a0a0a" rx="0.5" opacity=".55"/>
<rect x="816.8" y="36.7" width="6" height="1.6" fill="#bcbcbc" rx="0.3" opacity=".85"/>
<rect x="812" y="39.9" width="7" height="3" fill="#3a3a3a" rx="0.4"/>
<rect x="820" y="39.9" width="7.5" height="3" fill="#3a3a3a" rx="0.4"/>
<text x="815.5" y="42.2" font-size="1.8" fill="#999" text-anchor="middle">PRE</text>
<text x="823.7" y="42.2" font-size="1.8" fill="#999" text-anchor="middle">MUTE</text>
<rect x="811.5" y="44.3" width="16.5" height="1.6" fill="#454545"/>
<rect x="812" y="47.3" width="15.6" height="3" fill="#0a0a0a" rx="0.5" opacity=".55"/>
<rect x="812.6" y="48" width="14.4" height="1.6" fill="#bcbcbc" rx="0.3" opacity=".85"/>
<rect x="811.7" y="51" width="16.1" height="3.3" fill="#505050" rx="0.4"/>
<rect x="812.4" y="51.9" width="0.8" height="1.4" fill="#999"/>
<rect x="815.1" y="52" width="10" height="1.3" fill="#c8c8c8" rx="0.3" opacity=".45"/>
<rect x="825.9" y="52" width="0.8" height="1.2" fill="#999"/>
<rect x="812.5" y="56.8" width="1" height="1" fill="#8a8a8a"/>
<rect x="812.5" y="61.2" width="1" height="1" fill="#8a8a8a"/>
<rect x="812.5" y="65.5" width="1" height="1" fill="#8a8a8a"/>
<rect x="812.5" y="69.9" width="1" height="1" fill="#8a8a8a"/>
<rect x="812.7" y="73.6" width="14.2" height="3" fill="#0a0a0a" rx="0.5" opacity=".55"/>
<rect x="813.3" y="74.3" width="13" height="1.6" fill="#bcbcbc" rx="0.3" opacity=".85"/>
<rect x="811.7" y="77.1" width="16.1" height="3.3" fill="#505050" rx="0.4"/>
<rect x="812.4" y="78" width="0.8" height="1.4" fill="#999"/>
<rect x="815.1" y="78.1" width="10" height="1.3" fill="#c8c8c8" rx="0.3" opacity=".45"/>
<rect x="825.9" y="78.1" width="0.8" height="1.2" fill="#999"/>
<rect x="813.1" y="82.2" width="1.8" height="13" fill="#0d0d0d"/>
<rect x="812.4" y="86.2" width="3.2" height="3.4" fill="#c0c0c0" rx="0.4"/>
<rect x="816.1" y="82.2" width="2.2" height="13" fill="#26260e"/>
<circle cx="823.3" cy="84.6" r="2.1" fill="#1a1a1a" stroke="#b4b4b4" stroke-width=".7"/>
<rect x="820" y="88" width="3" height="2.6" fill="#8e8e8e" rx="0.3"/>
<rect x="823.9" y="88" width="3" height="2.6" fill="#8e8e8e" rx="0.3"/>
<rect x="819.7" y="91.4" width="7.6" height="3" fill="#080808" rx="0.4"/>
<rect x="820.9" y="92.4" width="5.2" height="1" fill="#3ad048"/>
<rect x="812.5" y="101.5" width="1" height="1" fill="#8a8a8a"/>
<rect x="812.5" y="124.5" width="1" height="1" fill="#8a8a8a"/>
<rect x="812.5" y="147.5" width="1" height="1" fill="#8a8a8a"/>
<rect x="812.5" y="151.9" width="1" height="1" fill="#8a8a8a"/>
<rect x="812.5" y="146.4" width="1" height="1" fill="#8a8a8a"/>
<rect x="812.5" y="150.6" width="1" height="1" fill="#8a8a8a"/>
<rect x="817.4" y="154.2" width="4.8" height="3" fill="#0a0a0a" rx="0.5" opacity=".55"/>
<rect x="818" y="154.9" width="3.6" height="1.6" fill="#bcbcbc" rx="0.3" opacity=".85"/>
<rect x="811.3" y="158.3" width="16.9" height="16.8" fill="#1a1c1a"/>
<rect x="815.6" y="158.3" width="0.3" height="16.8" fill="#26302a"/>
<rect x="819.8" y="158.3" width="0.3" height="16.8" fill="#26302a"/>
<rect x="824" y="158.3" width="0.3" height="16.8" fill="#26302a"/>
<rect x="811.3" y="162.5" width="16.9" height="0.3" fill="#26302a"/>
<rect x="811.3" y="166.7" width="16.9" height="0.3" fill="#26302a"/>
<rect x="811.3" y="170.9" width="16.9" height="0.3" fill="#26302a"/>
<path transform="translate(811.3 158.3)" d="M0 8.6 L18 8.6" fill="none" stroke="#3aa860" stroke-width=".8"/>
<rect x="817.2" y="176.4" width="5.2" height="3" fill="#0a0a0a" rx="0.5" opacity=".55"/>
<rect x="817.8" y="177.1" width="4" height="1.6" fill="#bcbcbc" rx="0.3" opacity=".85"/>
<rect x="811.7" y="179.8" width="16.1" height="3.3" fill="#505050" rx="0.4"/>
<rect x="812.4" y="180.7" width="0.8" height="1.4" fill="#999"/>
<rect x="815.1" y="180.8" width="10" height="1.3" fill="#c8c8c8" rx="0.3" opacity=".45"/>
<rect x="825.9" y="180.8" width="0.8" height="1.2" fill="#999"/>
<rect x="811.7" y="184.1" width="16.1" height="3.3" fill="#505050" rx="0.4"/>
<rect x="812.4" y="185" width="0.8" height="1.4" fill="#999"/>
<rect x="815.1" y="185.1" width="10" height="1.3" fill="#c8c8c8" rx="0.3" opacity=".45"/>
<rect x="825.9" y="185.1" width="0.8" height="1.2" fill="#999"/>
<rect x="816.2" y="188.7" width="7.2" height="3" fill="#0a0a0a" rx="0.5" opacity=".55"/>
<rect x="816.8" y="189.4" width="6" height="1.6" fill="#bcbcbc" rx="0.3" opacity=".85"/>
<rect x="811.7" y="192" width="16.1" height="3.3" fill="#4a5a4c" rx="0.4"/>
<rect x="812.4" y="192.9" width="0.8" height="1.4" fill="#999"/>
<rect x="815.1" y="193" width="10" height="1.3" fill="#8ab890" rx="0.3" opacity=".45"/>
<rect x="825.9" y="193" width="0.8" height="1.2" fill="#999"/>
<rect x="811.7" y="198.5" width="16.1" height="1.7" fill="#4a4a4a"/>
<rect x="811.7" y="200.9" width="16.1" height="3.3" fill="#505050" rx="0.4"/>
<rect x="812.4" y="201.8" width="0.8" height="1.4" fill="#999"/>
<rect x="815.1" y="201.9" width="10" height="1.3" fill="#c8c8c8" rx="0.3" opacity=".45"/>
<rect x="825.9" y="201.9" width="0.8" height="1.2" fill="#999"/>
<circle cx="815.8" cy="211.4" r="2.6" fill="#161616" stroke="#a8a8a8" stroke-width=".9"/>
<rect x="815.5" y="208.6" width="0.6" height="1.6" fill="#d0d0d0"/>
<circle cx="823.7" cy="211.4" r="2.6" fill="#161616" stroke="#a8a8a8" stroke-width=".9"/>
<rect x="823.4" y="208.6" width="0.6" height="1.6" fill="#d0d0d0"/>
<rect x="811.5" y="217.2" width="16.5" height="2.8" fill="#080808"/>
<rect x="812.5" y="218.1" width="4" height="1" fill="#3ad048"/>
<rect x="821" y="218.1" width="5.5" height="1" fill="#3ad048"/>
<rect x="814" y="222.7" width="4.5" height="2.9" fill="#5e5e5e" rx="0.4"/>
<rect x="821" y="222.7" width="4.5" height="2.9" fill="#b8a0a0" rx="0.4"/>
<rect x="814" y="228.6" width="4.5" height="3.2" fill="#5e5e5e" rx="0.4"/>
<rect x="821" y="228.6" width="4.5" height="3.2" fill="#5e5e5e" rx="0.4"/>
<rect x="812.9" y="237" width="1.1" height="1" fill="#8a8a8a"/>
<rect x="820.5" y="237" width="1.1" height="1" fill="#8a8a8a"/>
<rect x="812.9" y="242.8" width="1.1" height="1" fill="#8a8a8a"/>
<rect x="820.5" y="242.8" width="1.1" height="1" fill="#8a8a8a"/>
<rect x="812.9" y="248.6" width="1.1" height="1" fill="#8a8a8a"/>
<rect x="820.5" y="248.6" width="1.1" height="1" fill="#8a8a8a"/>
<rect x="812.9" y="254.4" width="1.1" height="1" fill="#8a8a8a"/>
<rect x="820.5" y="254.4" width="1.1" height="1" fill="#8a8a8a"/>
<rect x="812.9" y="260.2" width="1.1" height="1" fill="#8a8a8a"/>
<rect x="820.5" y="260.2" width="1.1" height="1" fill="#8a8a8a"/>
<rect x="812.9" y="266" width="1.1" height="1" fill="#8a8a8a"/>
<rect x="820.5" y="266" width="1.1" height="1" fill="#8a8a8a"/>
<rect x="812.9" y="271.8" width="1.1" height="1" fill="#8a8a8a"/>
<rect x="820.5" y="271.8" width="1.1" height="1" fill="#8a8a8a"/>
<rect x="812.9" y="277.6" width="1.1" height="1" fill="#8a8a8a"/>
<rect x="820.5" y="277.6" width="1.1" height="1" fill="#8a8a8a"/>
<rect x="812.9" y="283.4" width="1.1" height="1" fill="#8a8a8a"/>
<rect x="820.5" y="283.4" width="1.1" height="1" fill="#8a8a8a"/>
<rect x="812.9" y="289.2" width="1.1" height="1" fill="#8a8a8a"/>
<rect x="820.5" y="289.2" width="1.1" height="1" fill="#8a8a8a"/>
<rect x="816.5" y="236" width="1.5" height="55" fill="#0a0a0a"/>
<rect x="814.7" y="246.3" width="5.2" height="7.2" fill="#d4d4d4" rx="0.6"/>
<rect x="814.7" y="249.7" width="5.2" height="0.6" fill="#555"/>
<rect x="823.7" y="236" width="2.6" height="55" fill="#12120c"/>
<rect x="826.3" y="236" width="0.7" height="55" fill="#45401c"/>
<rect x="811.3" y="293.8" width="16.9" height="3.2" fill="#080808"/>
<rect x="812.5" y="294.9" width="4" height="1" fill="#3ad048"/>
<rect x="820.5" y="294.9" width="6" height="1" fill="#3ad048"/>
<rect x="817" y="299" width="4.5" height="2.6" fill="#4e4e4e" rx="0.3"/>
<rect x="822.7" y="299" width="4" height="2.6" fill="#4e4e4e" rx="0.3"/>
<rect x="811.3" y="303" width="16.9" height="4.4" fill="#161616"/>
<text x="819.8" y="306.4" font-size="2.9" fill="#ececec" font-weight="bold" text-anchor="middle" textLength="5.7" lengthAdjust="spacingAndGlyphs">Mix</text>
<rect x="811.3" y="308.8" width="16.9" height="11.2" fill="#060606"/>
<rect x="812.5" y="310.2" width="4" height="1" fill="#3ad048"/>
<rect x="824.5" y="310.2" width="2" height="1" fill="#3ad048"/>
<rect x="812.5" y="313.4" width="4" height="1" fill="#3ad048"/>
<rect x="824.5" y="313.4" width="2" height="1" fill="#3ad048"/>
<rect x="812.5" y="316.6" width="4" height="1" fill="#3ad048"/>
<rect x="824.5" y="316.6" width="2" height="1" fill="#3ad048"/>
<rect x="829.1" y="30.8" width="0.9" height="314.5" fill="#0a0a0a"/>
<rect x="830" y="30.8" width="18.5" height="314.5" fill="#182c2c"/>
<rect x="830" y="31" width="18.5" height="5" fill="#1f7a76"/>
<rect x="830" y="340.2" width="18.5" height="4.6" fill="#1f7a76"/>
<rect x="831.4" y="47.3" width="15.6" height="3" fill="#0a0a0a" rx="0.5" opacity=".55"/>
<rect x="832" y="48" width="14.4" height="1.6" fill="#bcbcbc" rx="0.3" opacity=".85"/>
<rect x="832" y="52.4" width="1" height="1" fill="#8a8a8a"/>
<rect x="832" y="56.8" width="1" height="1" fill="#8a8a8a"/>
<rect x="832" y="61.2" width="1" height="1" fill="#8a8a8a"/>
<rect x="832" y="65.5" width="1" height="1" fill="#8a8a8a"/>
<rect x="832" y="69.9" width="1" height="1" fill="#8a8a8a"/>
<rect x="832.1" y="73.6" width="14.2" height="3" fill="#0a0a0a" rx="0.5" opacity=".55"/>
<rect x="832.7" y="74.3" width="13" height="1.6" fill="#bcbcbc" rx="0.3" opacity=".85"/>
<rect x="832" y="78.5" width="1" height="1" fill="#8a8a8a"/>
<rect x="832" y="101.5" width="1" height="1" fill="#8a8a8a"/>
<rect x="832" y="124.5" width="1" height="1" fill="#8a8a8a"/>
<rect x="832" y="147.5" width="1" height="1" fill="#8a8a8a"/>
<rect x="832" y="151.9" width="1" height="1" fill="#8a8a8a"/>
<rect x="832" y="146.4" width="1" height="1" fill="#8a8a8a"/>
<rect x="832" y="150.6" width="1" height="1" fill="#8a8a8a"/>
<rect x="836.8" y="154.2" width="4.8" height="3" fill="#0a0a0a" rx="0.5" opacity=".55"/>
<rect x="837.4" y="154.9" width="3.6" height="1.6" fill="#bcbcbc" rx="0.3" opacity=".85"/>
<rect x="830.8" y="158.3" width="16.9" height="16.8" fill="#1a1c1a"/>
<rect x="835" y="158.3" width="0.3" height="16.8" fill="#26302a"/>
<rect x="839.2" y="158.3" width="0.3" height="16.8" fill="#26302a"/>
<rect x="843.5" y="158.3" width="0.3" height="16.8" fill="#26302a"/>
<rect x="830.8" y="162.5" width="16.9" height="0.3" fill="#26302a"/>
<rect x="830.8" y="166.7" width="16.9" height="0.3" fill="#26302a"/>
<rect x="830.8" y="170.9" width="16.9" height="0.3" fill="#26302a"/>
<rect x="836.6" y="176.4" width="5.2" height="3" fill="#0a0a0a" rx="0.5" opacity=".55"/>
<rect x="837.2" y="177.1" width="4" height="1.6" fill="#bcbcbc" rx="0.3" opacity=".85"/>
<rect x="831.2" y="179.8" width="16.1" height="3.3" fill="#505050" rx="0.4"/>
<rect x="831.9" y="180.7" width="0.8" height="1.4" fill="#999"/>
<rect x="834.6" y="180.8" width="10" height="1.3" fill="#c8c8c8" rx="0.3" opacity=".45"/>
<rect x="845.3" y="180.8" width="0.8" height="1.2" fill="#999"/>
<rect x="831.2" y="184.1" width="16.1" height="3.3" fill="#505050" rx="0.4"/>
<rect x="831.9" y="185" width="0.8" height="1.4" fill="#999"/>
<rect x="834.6" y="185.1" width="10" height="1.3" fill="#c8c8c8" rx="0.3" opacity=".45"/>
<rect x="845.3" y="185.1" width="0.8" height="1.2" fill="#999"/>
<rect x="835.6" y="188.7" width="7.2" height="3" fill="#0a0a0a" rx="0.5" opacity=".55"/>
<rect x="836.2" y="189.4" width="6" height="1.6" fill="#bcbcbc" rx="0.3" opacity=".85"/>
<rect x="831.2" y="192" width="16.1" height="3.3" fill="#4a5a4c" rx="0.4"/>
<rect x="831.9" y="192.9" width="0.8" height="1.4" fill="#999"/>
<rect x="834.6" y="193" width="10" height="1.3" fill="#8ab890" rx="0.3" opacity=".45"/>
<rect x="845.3" y="193" width="0.8" height="1.2" fill="#999"/>
<rect x="831.2" y="198.5" width="16.1" height="1.7" fill="#4a4a4a"/>
<rect x="831.2" y="200.9" width="16.1" height="3.3" fill="#505050" rx="0.4"/>
<rect x="831.9" y="201.8" width="0.8" height="1.4" fill="#999"/>
<rect x="834.6" y="201.9" width="10" height="1.3" fill="#c8c8c8" rx="0.3" opacity=".45"/>
<rect x="845.3" y="201.9" width="0.8" height="1.2" fill="#999"/>
<circle cx="839.2" cy="211.4" r="3" fill="#161616" stroke="#b0b0b0" stroke-width="1"/>
<rect x="838.9" y="208.2" width="0.6" height="1.8" fill="#3ad048"/>
<rect x="831" y="217.2" width="16.5" height="2.8" fill="#080808"/>
<rect x="832" y="218.1" width="4" height="1" fill="#3ad048"/>
<rect x="840.5" y="218.1" width="5.5" height="1" fill="#3ad048"/>
<rect x="833.5" y="222.7" width="4.5" height="2.9" fill="#5e5e5e" rx="0.4"/>
<rect x="840.5" y="222.7" width="4.5" height="2.9" fill="#b8a0a0" rx="0.4"/>
<rect x="833.5" y="228.6" width="4.5" height="3.2" fill="#5e5e5e" rx="0.4"/>
<rect x="840.5" y="228.6" width="4.5" height="3.2" fill="#5e5e5e" rx="0.4"/>
<rect x="832.4" y="237" width="1.1" height="1" fill="#8a8a8a"/>
<rect x="840" y="237" width="1.1" height="1" fill="#8a8a8a"/>
<rect x="832.4" y="242.8" width="1.1" height="1" fill="#8a8a8a"/>
<rect x="840" y="242.8" width="1.1" height="1" fill="#8a8a8a"/>
<rect x="832.4" y="248.6" width="1.1" height="1" fill="#8a8a8a"/>
<rect x="840" y="248.6" width="1.1" height="1" fill="#8a8a8a"/>
<rect x="832.4" y="254.4" width="1.1" height="1" fill="#8a8a8a"/>
<rect x="840" y="254.4" width="1.1" height="1" fill="#8a8a8a"/>
<rect x="832.4" y="260.2" width="1.1" height="1" fill="#8a8a8a"/>
<rect x="840" y="260.2" width="1.1" height="1" fill="#8a8a8a"/>
<rect x="832.4" y="266" width="1.1" height="1" fill="#8a8a8a"/>
<rect x="840" y="266" width="1.1" height="1" fill="#8a8a8a"/>
<rect x="832.4" y="271.8" width="1.1" height="1" fill="#8a8a8a"/>
<rect x="840" y="271.8" width="1.1" height="1" fill="#8a8a8a"/>
<rect x="832.4" y="277.6" width="1.1" height="1" fill="#8a8a8a"/>
<rect x="840" y="277.6" width="1.1" height="1" fill="#8a8a8a"/>
<rect x="832.4" y="283.4" width="1.1" height="1" fill="#8a8a8a"/>
<rect x="840" y="283.4" width="1.1" height="1" fill="#8a8a8a"/>
<rect x="832.4" y="289.2" width="1.1" height="1" fill="#8a8a8a"/>
<rect x="840" y="289.2" width="1.1" height="1" fill="#8a8a8a"/>
<rect x="836" y="236" width="1.5" height="55" fill="#0a0a0a"/>
<rect x="834.2" y="250.7" width="5.2" height="7.2" fill="#d4d4d4" rx="0.6"/>
<rect x="834.2" y="254.1" width="5.2" height="0.6" fill="#555"/>
<rect x="843.2" y="236" width="2.6" height="55" fill="#12120c"/>
<rect x="845.8" y="236" width="0.7" height="55" fill="#45401c"/>
<rect x="843.2" y="255" width="2.6" height="36" fill="#3cc83c"/>
<rect x="843.2" y="236.5" width="2.6" height="4" fill="#c8902a"/>
<rect x="830.8" y="293.8" width="16.9" height="3.2" fill="#080808"/>
<rect x="832" y="294.9" width="4" height="1" fill="#3ad048"/>
<rect x="840" y="294.9" width="6" height="1" fill="#3ad048"/>
<rect x="836.5" y="299" width="4.5" height="2.6" fill="#4e4e4e" rx="0.3"/>
<rect x="842.2" y="299" width="4" height="2.6" fill="#4e4e4e" rx="0.3"/>
<rect x="830.8" y="303" width="16.9" height="4.4" fill="#161616"/>
<text x="839.2" y="306.4" font-size="2.9" fill="#ececec" font-weight="bold" text-anchor="middle" textLength="11.4" lengthAdjust="spacingAndGlyphs">Master</text>
<rect x="830.8" y="308.8" width="16.9" height="11.2" fill="#060606"/>
<rect x="832" y="310.2" width="4" height="1" fill="#3ad048"/>
<rect x="844" y="310.2" width="2" height="1" fill="#3ad048"/>
<rect x="832" y="313.4" width="4" height="1" fill="#3ad048"/>
<rect x="844" y="313.4" width="2" height="1" fill="#3ad048"/>
<rect x="832" y="316.6" width="4" height="1" fill="#3ad048"/>
<rect x="844" y="316.6" width="2" height="1" fill="#3ad048"/>
<rect x="848.5" y="30.8" width="0.9" height="314.5" fill="#0a0a0a"/>
<rect x="849" y="30.8" width="7.6" height="337.8" fill="#1c1c1c"/>
<rect x="849.6" y="156" width="1.2" height="190" fill="#111"/>
</g>
<rect x="851.7" y="61" width="1.4" height="1.4" fill="#bbb"/>
<rect x="851.7" y="76" width="1.4" height="1.4" fill="#bbb"/>
<rect x="851.7" y="91" width="1.4" height="1.4" fill="#bbb"/>
<rect x="851.7" y="106" width="1.4" height="1.4" fill="#bbb"/>
<rect x="851.7" y="121" width="1.4" height="1.4" fill="#bbb"/>
<rect x="851.7" y="136" width="1.4" height="1.4" fill="#bbb"/>
<rect x="851.7" y="150" width="1.4" height="1.4" fill="#bbb"/>
<rect x="271.2" y="365.6" width="585" height="1" fill="#3a3a3a"/>
<text x="274" y="367.4" font-size="2.6" fill="#aaa">◂ 00</text>
<text x="421" y="325" font-size="2.4" fill="#bbb">Bruce</text>
<text x="421" y="328" font-size="2.4" fill="#bbb">HDMOA</text>
<text x="421" y="331" font-size="2.4" fill="#bbb">Mh35 Studio</text>
<rect x="543.6" y="70.4" width="157.8" height="76.2" fill="#000" rx="2" opacity=".5"/>
<rect x="544.4" y="71.2" width="156.2" height="74.6" fill="#2c2c2c" rx="1.5"/>
<rect x="544.4" y="71.2" width="156.2" height="4.2" fill="#353535" rx="1.5"/>
<circle cx="547.2" cy="73.3" r="1" fill="#5a5a5a"/>
<circle cx="550.6" cy="73.3" r="1" fill="#5a5a5a"/>
<text x="546.5" y="79" font-size="2.9" fill="#d8d8d8" font-weight="bold">Track</text>
<text x="578.6" y="79" font-size="2.9" fill="#d8d8d8" font-weight="bold">Preset</text>
<text x="609" y="79" font-size="2.9" fill="#d8d8d8" font-weight="bold">Auto</text>
<rect x="546.2" y="81" width="29.2" height="3.5" fill="#222" rx="0.5"/>
<text x="560.8" y="83.6" font-size="2.2" fill="#c8c8c8" text-anchor="middle">A17 SpeoRep</text>
<rect x="546.2" y="85.5" width="29.2" height="3.5" fill="#222" rx="0.5"/>
<text x="560.8" y="88.1" font-size="2.2" fill="#c8c8c8" text-anchor="middle">Purple Audio MC77</text>
<rect x="555.5" y="91.4" width="20" height="3.5" fill="#222" rx="0.5"/>
<text x="565.5" y="94" font-size="2.2" fill="#c8c8c8" text-anchor="middle">no key input</text>
<rect x="547" y="92" width="6" height="2.2" fill="#555" rx="0.5"/>
<rect x="578.6" y="81" width="26.4" height="3.5" fill="#222" rx="0.5"/>
<text x="591.8" y="83.6" font-size="2.2" fill="#c8c8c8" text-anchor="middle">&lt;factory default&gt;</text>
<rect x="578.6" y="85.5" width="12" height="3.5" fill="#3a3a3a" rx="0.5"/>
<rect x="587" y="86" width="3" height="2.6" fill="#aaa" rx="0.3"/>
<rect x="591" y="85.5" width="14" height="3.5" fill="#5a88c0" rx="0.5"/>
<text x="598" y="88.1" font-size="2.0" fill="#e8f0ff" text-anchor="middle" font-weight="bold">COMPARE</text>
<rect x="609" y="81" width="7" height="3.5" fill="#444" rx="0.5"/>
<rect x="611" y="82" width="3" height="1.6" fill="#ddd"/>
<rect x="619.5" y="81" width="10" height="3.5" fill="#3a3a3a" rx="0.5"/>
<text x="624.5" y="83.6" font-size="1.9" fill="#ddd" text-anchor="middle" font-weight="bold">BYPASS</text>
<text x="612.5" y="88.1" font-size="1.9" fill="#ddd" text-anchor="middle" font-weight="bold">SAFE</text>
<text x="624" y="88.1" font-size="1.9" fill="#ddd" text-anchor="middle" font-weight="bold">Native</text>
<rect x="604" y="81.4" width="2.2" height="2.2" fill="#666" rx="0.3"/>
<rect x="695.8" y="80.6" width="3.2" height="2.6" fill="#666" rx="0.4"/>
<rect x="544.4" y="95.6" width="156.2" height="50.2" fill="url(#g6)"/>
<rect x="544.4" y="95.6" width="156.2" height="50.2" fill="url(#g7)"/>
<rect x="544.4" y="96" width="156.2" height="0.5" fill="#ffffff" opacity=".05"/>
<rect x="544.4" y="98" width="156.2" height="0.5" fill="#ffffff" opacity=".05"/>
<rect x="544.4" y="100" width="156.2" height="0.5" fill="#ffffff" opacity=".05"/>
<rect x="544.4" y="102" width="156.2" height="0.5" fill="#ffffff" opacity=".05"/>
<rect x="544.4" y="104" width="156.2" height="0.5" fill="#ffffff" opacity=".05"/>
<rect x="544.4" y="106" width="156.2" height="0.5" fill="#ffffff" opacity=".05"/>
<rect x="544.4" y="108" width="156.2" height="0.5" fill="#ffffff" opacity=".05"/>
<rect x="544.4" y="110" width="156.2" height="0.5" fill="#ffffff" opacity=".05"/>
<rect x="544.4" y="112" width="156.2" height="0.5" fill="#ffffff" opacity=".05"/>
<rect x="544.4" y="114" width="156.2" height="0.5" fill="#ffffff" opacity=".05"/>
<rect x="544.4" y="116" width="156.2" height="0.5" fill="#ffffff" opacity=".05"/>
<rect x="544.4" y="118" width="156.2" height="0.5" fill="#ffffff" opacity=".05"/>
<rect x="544.4" y="120" width="156.2" height="0.5" fill="#ffffff" opacity=".05"/>
<rect x="544.4" y="122" width="156.2" height="0.5" fill="#ffffff" opacity=".05"/>
<rect x="544.4" y="124" width="156.2" height="0.5" fill="#ffffff" opacity=".05"/>
<rect x="544.4" y="126" width="156.2" height="0.5" fill="#ffffff" opacity=".05"/>
<rect x="544.4" y="128" width="156.2" height="0.5" fill="#ffffff" opacity=".05"/>
<rect x="544.4" y="130" width="156.2" height="0.5" fill="#ffffff" opacity=".05"/>
<rect x="544.4" y="132" width="156.2" height="0.5" fill="#ffffff" opacity=".05"/>
<rect x="544.4" y="134" width="156.2" height="0.5" fill="#ffffff" opacity=".05"/>
<rect x="544.4" y="136" width="156.2" height="0.5" fill="#ffffff" opacity=".05"/>
<rect x="544.4" y="138" width="156.2" height="0.5" fill="#ffffff" opacity=".05"/>
<rect x="544.4" y="140" width="156.2" height="0.5" fill="#ffffff" opacity=".05"/>
<rect x="544.4" y="142" width="156.2" height="0.5" fill="#ffffff" opacity=".05"/>
<rect x="544.4" y="144" width="156.2" height="0.5" fill="#ffffff" opacity=".05"/>
<circle cx="560.6" cy="119.1" r="10.3" fill="url(#g8)"/>
<circle cx="560.6" cy="119.1" r="6.4" fill="#1a0a1a"/>
<circle cx="560.6" cy="119.1" r="5.7" fill="url(#g9)"/>
<rect x="556" y="118.8" width="9.1" height="0.7" fill="#ffffff" rx="0.3" opacity=".6"/>
<circle cx="551.3" cy="128.4" r="0.5" fill="#f0d8f0"/>
<circle cx="548.1" cy="123.1" r="0.5" fill="#f0d8f0"/>
<circle cx="547.7" cy="117.1" r="0.5" fill="#f0d8f0"/>
<circle cx="550" cy="111.4" r="0.5" fill="#f0d8f0"/>
<circle cx="554.7" cy="107.4" r="0.5" fill="#f0d8f0"/>
<circle cx="560.6" cy="106" r="0.5" fill="#f0d8f0"/>
<circle cx="566.5" cy="107.4" r="0.5" fill="#f0d8f0"/>
<circle cx="571.2" cy="111.4" r="0.5" fill="#f0d8f0"/>
<circle cx="573.5" cy="117.1" r="0.5" fill="#f0d8f0"/>
<circle cx="573.1" cy="123.1" r="0.5" fill="#f0d8f0"/>
<circle cx="569.9" cy="128.4" r="0.5" fill="#f0d8f0"/>
<circle cx="590.4" cy="119.1" r="10.3" fill="url(#g8)"/>
<circle cx="590.4" cy="119.1" r="6.4" fill="#1a0a1a"/>
<circle cx="590.4" cy="119.1" r="5.7" fill="url(#g9)"/>
<rect x="585.8" y="118.8" width="9.1" height="0.7" fill="#ffffff" rx="0.3" opacity=".6"/>
<circle cx="581.1" cy="128.4" r="0.5" fill="#f0d8f0"/>
<circle cx="577.9" cy="123.1" r="0.5" fill="#f0d8f0"/>
<circle cx="577.5" cy="117.1" r="0.5" fill="#f0d8f0"/>
<circle cx="579.8" cy="111.4" r="0.5" fill="#f0d8f0"/>
<circle cx="584.5" cy="107.4" r="0.5" fill="#f0d8f0"/>
<circle cx="590.4" cy="106" r="0.5" fill="#f0d8f0"/>
<circle cx="596.3" cy="107.4" r="0.5" fill="#f0d8f0"/>
<circle cx="601" cy="111.4" r="0.5" fill="#f0d8f0"/>
<circle cx="603.3" cy="117.1" r="0.5" fill="#f0d8f0"/>
<circle cx="602.9" cy="123.1" r="0.5" fill="#f0d8f0"/>
<circle cx="599.7" cy="128.4" r="0.5" fill="#f0d8f0"/>
<circle cx="615.6" cy="110.6" r="5.6" fill="#5a1e5a" opacity=".6"/>
<circle cx="614.8" cy="109.6" r="5.6" fill="#1a0a1a"/>
<circle cx="614.8" cy="109.6" r="4.9" fill="url(#g9)"/>
<rect x="610.9" y="109.2" width="7.8" height="0.7" fill="#ffffff" rx="0.3" opacity=".6"/>
<circle cx="615.6" cy="133.1" r="5.6" fill="#5a1e5a" opacity=".6"/>
<circle cx="614.8" cy="132.1" r="5.6" fill="#1a0a1a"/>
<circle cx="614.8" cy="132.1" r="4.9" fill="url(#g9)"/>
<rect x="610.9" y="131.8" width="7.8" height="0.7" fill="#ffffff" rx="0.3" opacity=".6"/>
<text x="560.6" y="136.4" font-size="2.3" fill="#f0d8f0" text-anchor="middle" font-weight="bold">INPUT</text>
<text x="590.4" y="136.4" font-size="2.3" fill="#f0d8f0" text-anchor="middle" font-weight="bold">OUTPUT</text>
<text x="614.8" y="100.4" font-size="2.3" fill="#f0d8f0" text-anchor="middle" font-weight="bold">ATTACK</text>
<text x="614.8" y="142.6" font-size="2.3" fill="#f0d8f0" text-anchor="middle" font-weight="bold">RELEASE</text>
<text x="633.4" y="103" font-size="2.2" fill="#f0d8f0" text-anchor="middle" font-weight="bold">RATIO</text>
<text x="687.8" y="103" font-size="2.2" fill="#f0d8f0" text-anchor="middle" font-weight="bold">METER</text>
<rect x="631.4" y="105.6" width="4.2" height="31.6" fill="#1e0a20" rx="0.6"/>
<rect x="632" y="106.3" width="3" height="7" fill="#3a1a3c" rx="0.3"/>
<rect x="632" y="114.1" width="3" height="7" fill="#3a1a3c" rx="0.3"/>
<rect x="632" y="121.9" width="3" height="7" fill="#3a1a3c" rx="0.3"/>
<rect x="632" y="129.7" width="3" height="7" fill="#3a1a3c" rx="0.3"/>
<rect x="685.8" y="105.6" width="4.2" height="31.6" fill="#1e0a20" rx="0.6"/>
<rect x="686.4" y="106.3" width="3" height="7" fill="#3a1a3c" rx="0.3"/>
<rect x="686.4" y="114.1" width="3" height="7" fill="#3a1a3c" rx="0.3"/>
<rect x="686.4" y="121.9" width="3" height="7" fill="#3a1a3c" rx="0.3"/>
<rect x="686.4" y="129.7" width="3" height="7" fill="#3a1a3c" rx="0.3"/>
<rect x="631.9" y="129.7" width="3.2" height="7" fill="#140614" rx="0.3"/>
<text x="628.5" y="109.8" font-size="1.8" fill="#e8c8e8" text-anchor="middle">20</text>
<text x="628.5" y="117.6" font-size="1.8" fill="#e8c8e8" text-anchor="middle">12</text>
<text x="628.5" y="125.4" font-size="1.8" fill="#e8c8e8" text-anchor="middle">8</text>
<text x="628.5" y="133.2" font-size="1.8" fill="#e8c8e8" text-anchor="middle">4</text>
<text x="692.8" y="109.8" font-size="1.8" fill="#e8c8e8" text-anchor="middle">GR</text>
<text x="692.8" y="117.6" font-size="1.8" fill="#e8c8e8" text-anchor="middle">+4</text>
<text x="692.8" y="125.4" font-size="1.8" fill="#e8c8e8" text-anchor="middle">+8</text>
<text x="692.8" y="133.2" font-size="1.8" fill="#e8c8e8" text-anchor="middle">OFF</text>
<rect x="638.6" y="108" width="42.8" height="19.4" fill="#1a0e1a" rx="1.2"/>
<rect x="640.2" y="109.6" width="39.6" height="16.2" fill="url(#g10)"/>
<g transform="translate(640.2 109.6)"><path d="M4 8.5 Q19 1.5 35.5 8.5" fill="none" stroke="#444" stroke-width=".5"/><path d="M27 5.2 Q32 6.2 35.5 8.5" fill="none" stroke="#c03020" stroke-width="1"/><path d="M5 10 Q19 3.5 34 10" fill="none" stroke="#777" stroke-width=".3"/><line x1="18.5" y1="16.2" x2="22.5" y2="4.2" stroke="#222" stroke-width=".55"/></g>
<text x="660" y="132.6" font-size="2.6" fill="#f2dcf2" text-anchor="middle" font-weight="bold" textLength="36">MC77 LIMITING AMPLIFIER</text>
<text x="660" y="136.8" font-size="2.6" fill="#f2dcf2" text-anchor="middle" font-weight="bold" textLength="26">PURPLE AUDIO INC</text>
<g transform="translate(654 98.2)" fill="none" stroke="#d8b0d8" stroke-width=".55" opacity=".8"><path d="M0 0 H4 M0 0 V5.6 H4 M0 2.8 H3"/><path d="M5 0 H7.5 Q9.2 0 9.2 2.8 Q9.2 5.6 7.5 5.6 H5 Z"/><path d="M10.4 0 H14.4 M10.4 0 V5.6 H14.4 M10.4 2.8 H13.4"/></g>
<rect x="708.2" y="35.6" width="140" height="126.2" fill="#000" rx="2" opacity=".5"/>
<rect x="709" y="36.4" width="138.4" height="124.6" fill="#2a2a2a" rx="1.5"/>
<rect x="709" y="36.4" width="138.4" height="3.4" fill="#333" rx="1.5"/>
<circle cx="712" cy="38.1" r="0.9" fill="#555"/>
<circle cx="715" cy="38.1" r="0.9" fill="#555"/>
<text x="711" y="44" font-size="2.7" fill="#d8d8d8" font-weight="bold">Track</text>
<text x="743.5" y="44" font-size="2.7" fill="#d8d8d8" font-weight="bold">Preset</text>
<text x="773.5" y="44" font-size="2.7" fill="#d8d8d8" font-weight="bold">Auto</text>
<rect x="711" y="46" width="27" height="3.5" fill="#222" rx="0.5"/>
<text x="724.5" y="48.6" font-size="2.2" fill="#c8c8c8" text-anchor="middle">Mix</text>
<rect x="743.5" y="46" width="26.5" height="3.5" fill="#222" rx="0.5"/>
<text x="756.8" y="48.6" font-size="2.2" fill="#c8c8c8" text-anchor="middle">&lt;factory default&gt;</text>
<rect x="711" y="50.3" width="27" height="3.5" fill="#222" rx="0.5"/>
<text x="724.5" y="52.9" font-size="2.2" fill="#c8c8c8" text-anchor="middle">Pro-Limiter</text>
<rect x="743.5" y="50.3" width="12" height="3.4" fill="#3a3a3a" rx="0.5"/>
<rect x="752" y="50.8" width="3" height="2.4" fill="#aaa" rx="0.3"/>
<rect x="756.3" y="50.3" width="13.7" height="3.4" fill="#5a88c0" rx="0.5"/>
<text x="763.1" y="52.8" font-size="1.9" fill="#e8f0ff" text-anchor="middle" font-weight="bold">COMPARE</text>
<rect x="773.5" y="46" width="7" height="3.4" fill="#444" rx="0.5"/>
<rect x="775.5" y="47" width="3" height="1.4" fill="#ddd"/>
<rect x="784.3" y="46" width="10.7" height="3.4" fill="#3e5a46" rx="0.5"/>
<text x="789.6" y="48.5" font-size="1.8" fill="#8fd09a" text-anchor="middle" font-weight="bold">BYPASS</text>
<text x="777" y="52.8" font-size="1.8" fill="#ddd" text-anchor="middle" font-weight="bold">SAFE</text>
<text x="789.5" y="52.8" font-size="1.8" fill="#ddd" text-anchor="middle" font-weight="bold">Native</text>
<rect x="841.7" y="46" width="4" height="4" fill="#d03a3a" rx="0.8"/>
<rect x="709.6" y="55.3" width="137.2" height="100.4" fill="#a4a4a4"/>
<rect x="709.6" y="55.3" width="137.2" height="0.7" fill="#e4e4e4"/>
<rect x="710.3" y="56.2" width="22.8" height="99.2" fill="#0b1628"/>
<rect x="710.3" y="56.2" width="22.8" height="4.6" fill="#142238"/>
<text x="722.8" y="59.6" font-size="2.1" fill="#9ab0c8" text-anchor="middle" font-weight="bold">INPUT</text>
<rect x="718.9" y="67" width="2.5" height="76" fill="#12203a"/>
<rect x="718.9" y="98" width="2.5" height="10" fill="#90c8f0"/>
<rect x="718.9" y="108" width="2.5" height="35" fill="#3e88dc"/>
<rect x="721.9" y="67" width="2.5" height="76" fill="#12203a"/>
<rect x="721.9" y="98" width="2.5" height="10" fill="#90c8f0"/>
<rect x="721.9" y="108" width="2.5" height="35" fill="#3e88dc"/>
<rect x="713.5" y="66" width="1.4" height="0.6" fill="#8aa0b8" opacity=".8"/>
<rect x="726.8" y="66" width="1.4" height="0.6" fill="#d08a30" opacity=".9"/>
<rect x="713.5" y="72.2" width="1.4" height="0.6" fill="#8aa0b8" opacity=".8"/>
<rect x="726.8" y="72.2" width="1.4" height="0.6" fill="#d08a30" opacity=".9"/>
<rect x="713.5" y="78.4" width="1.4" height="0.6" fill="#8aa0b8" opacity=".8"/>
<rect x="726.8" y="78.4" width="1.4" height="0.6" fill="#d08a30" opacity=".9"/>
<rect x="713.5" y="84.6" width="1.4" height="0.6" fill="#8aa0b8" opacity=".8"/>
<rect x="726.8" y="84.6" width="1.4" height="0.6" fill="#d08a30" opacity=".9"/>
<rect x="713.5" y="90.8" width="1.4" height="0.6" fill="#8aa0b8" opacity=".8"/>
<rect x="726.8" y="90.8" width="1.4" height="0.6" fill="#d08a30" opacity=".9"/>
<rect x="713.5" y="97" width="1.4" height="0.6" fill="#8aa0b8" opacity=".8"/>
<rect x="726.8" y="97" width="1.4" height="0.6" fill="#d08a30" opacity=".9"/>
<rect x="713.5" y="103.2" width="1.4" height="0.6" fill="#8aa0b8" opacity=".8"/>
<rect x="726.8" y="103.2" width="1.4" height="0.6" fill="#d08a30" opacity=".9"/>
<rect x="713.5" y="109.4" width="1.4" height="0.6" fill="#8aa0b8" opacity=".8"/>
<rect x="726.8" y="109.4" width="1.4" height="0.6" fill="#d08a30" opacity=".9"/>
<rect x="713.5" y="115.6" width="1.4" height="0.6" fill="#8aa0b8" opacity=".8"/>
<rect x="726.8" y="115.6" width="1.4" height="0.6" fill="#d08a30" opacity=".9"/>
<rect x="713.5" y="121.8" width="1.4" height="0.6" fill="#8aa0b8" opacity=".8"/>
<rect x="726.8" y="121.8" width="1.4" height="0.6" fill="#d08a30" opacity=".9"/>
<rect x="713.5" y="128" width="1.4" height="0.6" fill="#8aa0b8" opacity=".8"/>
<rect x="726.8" y="128" width="1.4" height="0.6" fill="#d08a30" opacity=".9"/>
<rect x="713.5" y="134.2" width="1.4" height="0.6" fill="#8aa0b8" opacity=".8"/>
<rect x="726.8" y="134.2" width="1.4" height="0.6" fill="#d08a30" opacity=".9"/>
<rect x="711.8" y="149.4" width="20.5" height="5.6" fill="#081010" rx="0.6" stroke="#2a8a6a" stroke-width=".5"/>
<rect x="716.3" y="151.6" width="7" height="1.1" fill="#ccc"/>
<rect x="734" y="56.2" width="22.8" height="99.2" fill="#0b1628"/>
<rect x="734" y="56.2" width="22.8" height="4.6" fill="#142238"/>
<text x="746.5" y="59.6" font-size="2.1" fill="#9ab0c8" text-anchor="middle" font-weight="bold">OUTPUT</text>
<rect x="742.6" y="67" width="2.5" height="76" fill="#12203a"/>
<rect x="742.6" y="98" width="2.5" height="10" fill="#90c8f0"/>
<rect x="742.6" y="108" width="2.5" height="35" fill="#3e88dc"/>
<rect x="745.6" y="67" width="2.5" height="76" fill="#12203a"/>
<rect x="745.6" y="98" width="2.5" height="10" fill="#90c8f0"/>
<rect x="745.6" y="108" width="2.5" height="35" fill="#3e88dc"/>
<rect x="737.2" y="66" width="1.4" height="0.6" fill="#8aa0b8" opacity=".8"/>
<rect x="750.5" y="66" width="1.4" height="0.6" fill="#d08a30" opacity=".9"/>
<rect x="737.2" y="72.2" width="1.4" height="0.6" fill="#8aa0b8" opacity=".8"/>
<rect x="750.5" y="72.2" width="1.4" height="0.6" fill="#d08a30" opacity=".9"/>
<rect x="737.2" y="78.4" width="1.4" height="0.6" fill="#8aa0b8" opacity=".8"/>
<rect x="750.5" y="78.4" width="1.4" height="0.6" fill="#d08a30" opacity=".9"/>
<rect x="737.2" y="84.6" width="1.4" height="0.6" fill="#8aa0b8" opacity=".8"/>
<rect x="750.5" y="84.6" width="1.4" height="0.6" fill="#d08a30" opacity=".9"/>
<rect x="737.2" y="90.8" width="1.4" height="0.6" fill="#8aa0b8" opacity=".8"/>
<rect x="750.5" y="90.8" width="1.4" height="0.6" fill="#d08a30" opacity=".9"/>
<rect x="737.2" y="97" width="1.4" height="0.6" fill="#8aa0b8" opacity=".8"/>
<rect x="750.5" y="97" width="1.4" height="0.6" fill="#d08a30" opacity=".9"/>
<rect x="737.2" y="103.2" width="1.4" height="0.6" fill="#8aa0b8" opacity=".8"/>
<rect x="750.5" y="103.2" width="1.4" height="0.6" fill="#d08a30" opacity=".9"/>
<rect x="737.2" y="109.4" width="1.4" height="0.6" fill="#8aa0b8" opacity=".8"/>
<rect x="750.5" y="109.4" width="1.4" height="0.6" fill="#d08a30" opacity=".9"/>
<rect x="737.2" y="115.6" width="1.4" height="0.6" fill="#8aa0b8" opacity=".8"/>
<rect x="750.5" y="115.6" width="1.4" height="0.6" fill="#d08a30" opacity=".9"/>
<rect x="737.2" y="121.8" width="1.4" height="0.6" fill="#8aa0b8" opacity=".8"/>
<rect x="750.5" y="121.8" width="1.4" height="0.6" fill="#d08a30" opacity=".9"/>
<rect x="737.2" y="128" width="1.4" height="0.6" fill="#8aa0b8" opacity=".8"/>
<rect x="750.5" y="128" width="1.4" height="0.6" fill="#d08a30" opacity=".9"/>
<rect x="737.2" y="134.2" width="1.4" height="0.6" fill="#8aa0b8" opacity=".8"/>
<rect x="750.5" y="134.2" width="1.4" height="0.6" fill="#d08a30" opacity=".9"/>
<rect x="735.5" y="149.4" width="20.5" height="5.6" fill="#081010" rx="0.6" stroke="#2a8a6a" stroke-width=".5"/>
<rect x="740" y="151.6" width="7" height="1.1" fill="#ccc"/>
<rect x="711.3" y="57" width="2.6" height="2.6" fill="#3a8ad8" rx="0.4"/>
<path d="M712 79 L714.5 81 L712 83 Z" fill="#f0a030"/><path d="M756 79 L753.5 81 L756 83 Z" fill="#f0a030"/>
<circle cx="770.3" cy="72.7" r="8.7" fill="#161616"/>
<circle cx="770.3" cy="72.7" r="5.9" fill="url(#g11)"/>
<circle cx="775.7" cy="78.1" r="1.4" fill="#f0a030"/>
<circle cx="795.7" cy="72.7" r="8.7" fill="#161616"/>
<circle cx="795.7" cy="72.7" r="5.9" fill="url(#g12)"/>
<circle cx="801.1" cy="78.1" r="1.4" fill="#f0a030"/>
<circle cx="770.2" cy="103.9" r="6.8" fill="#161616"/>
<circle cx="770.2" cy="103.9" r="4.6" fill="url(#g13)"/>
<circle cx="774.4" cy="108.1" r="1.1" fill="#f0a030"/>
<circle cx="795.5" cy="103.9" r="6.8" fill="#161616"/>
<circle cx="795.5" cy="103.9" r="4.6" fill="url(#g14)"/>
<circle cx="799.7" cy="108.1" r="1.1" fill="#f0a030"/>
<text x="770.3" y="62" font-size="2.1" fill="#2a2a2a" text-anchor="middle" font-weight="bold">THRESHOLD</text>
<text x="795.7" y="62" font-size="2.1" fill="#2a2a2a" text-anchor="middle" font-weight="bold">CEILING</text>
<text x="770.2" y="94.6" font-size="2.1" fill="#2a2a2a" text-anchor="middle" font-weight="bold">CHARACTER</text>
<text x="795.5" y="94.6" font-size="2.1" fill="#2a2a2a" text-anchor="middle" font-weight="bold">RELEASE</text>
<circle cx="770.3" cy="82.6" r="1" fill="#3ad048"/>
<rect x="761.8" y="84.5" width="17" height="3.6" fill="#141414" rx="0.4"/>
<rect x="766.3" y="85.8" width="8" height="1" fill="#ccc"/>
<circle cx="795.7" cy="82.6" r="1" fill="#3ad048"/>
<rect x="787.2" y="84.5" width="17" height="3.6" fill="#141414" rx="0.4"/>
<rect x="791.7" y="85.8" width="8" height="1" fill="#ccc"/>
<circle cx="770.2" cy="111.6" r="1" fill="#3ad048"/>
<rect x="761.7" y="113" width="17" height="3.8" fill="#141414" rx="0.4"/>
<rect x="767.2" y="114.4" width="6" height="1" fill="#ccc"/>
<circle cx="795.5" cy="111.6" r="1" fill="#3ad048"/>
<rect x="787" y="113" width="17" height="3.8" fill="#141414" rx="0.4"/>
<rect x="792.5" y="114.4" width="6" height="1" fill="#ccc"/>
<rect x="809" y="56.2" width="36.4" height="19.6" fill="#8fa08f"/>
<rect x="810.2" y="57.6" width="34" height="4.4" fill="url(#g15)" rx="0.6"/>
<text x="827.2" y="60.6" font-size="2.2" fill="#222" text-anchor="middle" font-weight="bold">Modern Peak</text>
<rect x="810.2" y="65.2" width="16" height="5.8" fill="url(#g16)" rx="0.6"/>
<rect x="828.6" y="65.2" width="16" height="5.8" fill="url(#g17)" rx="0.6"/>
<rect x="815.5" y="64.4" width="4" height="1" fill="#e8c020"/>
<rect x="809" y="76.4" width="36.4" height="45.2" fill="#0b1628"/>
<text x="810.4" y="79.2" font-size="2.0" fill="#9aaac0" font-weight="bold">INTEGRATED</text>
<text x="836.6" y="85.8" font-size="6.0" fill="#f4a030" text-anchor="end">-13.9</text>
<text x="844" y="85.4" font-size="1.6" fill="#8a9ab0" text-anchor="end">LUFS</text>
<text x="810.4" y="90.4" font-size="2.0" fill="#9aaac0" font-weight="bold">RANGE</text>
<text x="836.6" y="97" font-size="6.0" fill="#f4a030" text-anchor="end">2.6</text>
<text x="844" y="96.6" font-size="1.6" fill="#8a9ab0" text-anchor="end">LUFS</text>
<text x="810.4" y="101.6" font-size="2.0" fill="#9aaac0" font-weight="bold">TRUE PEAK</text>
<text x="836.6" y="108.2" font-size="6.0" fill="#f4a030" text-anchor="end">-0.6</text>
<text x="844" y="107.8" font-size="1.6" fill="#8a9ab0" text-anchor="end">LUFS</text>
<text x="810.4" y="112.8" font-size="2.0" fill="#9aaac0" font-weight="bold">SHORT TERM</text>
<text x="836.6" y="119.4" font-size="6.0" fill="#f4a030" text-anchor="end">-13.8</text>
<text x="844" y="119" font-size="1.6" fill="#8a9ab0" text-anchor="end">LUFS</text>
<rect x="758" y="122.1" width="86.4" height="33.4" fill="#0c1834" stroke="#1a2a4a" stroke-width=".5"/>
<text x="772" y="127.2" font-size="2.0" fill="#b8c0d8" font-weight="bold">RESET</text>
<text x="789" y="127.2" font-size="2.0" fill="#b8c0d8" font-weight="bold">RESET</text>
<rect x="802" y="124.8" width="9" height="3.2" fill="#e08a20" rx="0.5"/>
<path d="M817 124.8 L819.5 126.4 L817 128 Z" fill="#e08a20"/>
<rect x="764.8" y="129.7" width="60.7" height="22.7" fill="#141a50"/>
<rect x="774.9" y="129.7" width="0.5" height="22.7" fill="#2e3c90"/>
<rect x="785" y="129.7" width="0.5" height="22.7" fill="#2e3c90"/>
<rect x="795.1" y="129.7" width="0.5" height="22.7" fill="#2e3c90"/>
<rect x="805.2" y="129.7" width="0.5" height="22.7" fill="#2e3c90"/>
<rect x="815.3" y="129.7" width="0.5" height="22.7" fill="#2e3c90"/>
<rect x="764.8" y="135.4" width="60.7" height="0.5" fill="#2e3c90"/>
<rect x="764.8" y="141.1" width="60.7" height="0.5" fill="#2e3c90"/>
<rect x="764.8" y="146.8" width="60.7" height="0.5" fill="#2e3c90"/>
<path d="M806 152.4 L807 136 Q809 130.8 817 130.4 L825.5 130.2 L825.5 152.4 Z" fill="#3a6ad8" opacity=".85"/><path d="M806 152.4 L807 136 Q809 130.8 817 130.4 L825.5 130.2" fill="none" stroke="#d0a070" stroke-width=".6"/>
<rect x="830" y="130" width="2.4" height="22.4" fill="#7ab8f0"/>
<rect x="830" y="130" width="2.4" height="3" fill="#d0e8ff"/>
<rect x="833.2" y="130" width="2.4" height="22.4" fill="#7ab8f0"/>
<rect x="833.2" y="130" width="2.4" height="3" fill="#d0e8ff"/>
<rect x="836.4" y="130" width="2.4" height="22.4" fill="#7ab8f0"/>
<rect x="836.4" y="130" width="2.4" height="3" fill="#d0e8ff"/>
<rect x="709.6" y="155.7" width="137.2" height="5.3" fill="#111"/>
<text x="777.7" y="160.4" font-size="3.0" fill="#d8d8d8" text-anchor="middle" font-weight="bold" textLength="26">L I M I T E R</text>
<path d="M661.5 494.9 L1039.5 494.9 Q1042.8 494.9 1042.8 498 L1042.8 500.4 Q1042.8 503.4 1039 503.4 L662 503.4 Q658.3 503.4 658.3 500.4 L658.3 498 Q658.3 494.9 661.5 494.9 Z" fill="url(#g18)"/>
<path d="M662 495.6 Q659.3 496 659.2 499.5 Q659.6 502.4 662.5 502.8" fill="none" stroke="#f4f8fb" stroke-width=".7" opacity=".5"/>
<path d="M1039 495.6 Q1041.8 496 1041.9 499.5 Q1041.5 502.4 1038.5 502.8" fill="none" stroke="#f4f8fb" stroke-width=".7" opacity=".5"/>
<rect x="816.2" y="494.9" width="68.6" height="4.4" fill="url(#g19)" rx="2"/>
<path d="M677.8 503.4 H702.1 L700.6 506 H679.3 Z" fill="url(#g20)"/>
<path d="M999.4 503.4 H1023.5 L1022 505.8 H1000.9 Z" fill="url(#g21)"/>
<path d="M690.5 495.2 L690.5 282 Q690.5 273.2 699 273.2 L1001.5 273.2 Q1010.5 273.2 1010.5 282 L1010.5 495.2 Z" fill="#9ea6ad"/>
<path d="M691.3 495.2 L691.3 282 Q691.3 274 699 274 L1001.5 274 Q1009.7 274 1009.7 282 L1009.7 495.2 Z" fill="#0b0b0b"/>
<rect x="691.3" y="484.5" width="318.4" height="10.7" fill="#0e0e0e"/>
<rect x="697.3" y="280" width="306.7" height="198.8" fill="#1f1f1f"/>
<rect x="697.3" y="280" width="306.7" height="7.4" fill="url(#g22)"/>
<path d="M925 287.4 L940 280 L948 280 L933 287.4 Z" fill="#5a7ae8" opacity=".5"/>
<rect x="832.2" y="280" width="37.8" height="7.6" fill="#050505" rx="1.5"/>
<circle cx="851" cy="283.2" r="0.9" fill="#2a2a2a"/>
<path d="M700.9 282.4 Q701.8 281.8 702.7 282.4 Q702.9 284.2 701.8 284.8 Q700.7 284.3 700.9 282.4 Z" fill="#fff"/>
<text x="706.5" y="284.6" font-size="2.9" fill="#eeeeff" font-weight="bold" textLength="10.5" lengthAdjust="spacingAndGlyphs">Pro Tools</text>
<text x="720.7" y="284.6" font-size="2.9" fill="#eeeeff" font-weight="bold" textLength="3.7" lengthAdjust="spacingAndGlyphs">File</text>
<text x="728" y="284.6" font-size="2.9" fill="#eeeeff" font-weight="bold" textLength="3.8" lengthAdjust="spacingAndGlyphs">Edit</text>
<text x="735.9" y="284.6" font-size="2.9" fill="#eeeeff" font-weight="bold" textLength="5.9" lengthAdjust="spacingAndGlyphs">View</text>
<text x="745" y="284.6" font-size="2.9" fill="#eeeeff" font-weight="bold" textLength="5.9" lengthAdjust="spacingAndGlyphs">Track</text>
<text x="754.6" y="284.6" font-size="2.9" fill="#eeeeff" font-weight="bold" textLength="3.9" lengthAdjust="spacingAndGlyphs">Clip</text>
<text x="762.4" y="284.6" font-size="2.9" fill="#eeeeff" font-weight="bold" textLength="4.6" lengthAdjust="spacingAndGlyphs">Event</text>
<text x="772.2" y="284.6" font-size="2.9" fill="#eeeeff" font-weight="bold" textLength="11.8" lengthAdjust="spacingAndGlyphs">AudioSuite</text>
<text x="788" y="284.6" font-size="2.9" fill="#eeeeff" font-weight="bold" textLength="8.2" lengthAdjust="spacingAndGlyphs">Options</text>
<text x="799.7" y="284.6" font-size="2.9" fill="#eeeeff" font-weight="bold" textLength="5.9" lengthAdjust="spacingAndGlyphs">Setup</text>
<text x="809.7" y="284.6" font-size="2.9" fill="#eeeeff" font-weight="bold" textLength="8.8" lengthAdjust="spacingAndGlyphs">Window</text>
<text x="822.2" y="284.6" font-size="2.9" fill="#eeeeff" font-weight="bold" textLength="5.4" lengthAdjust="spacingAndGlyphs">Help</text>
<rect x="943" y="281.6" width="6" height="3.6" fill="#e8945a" rx="1.5"/>
<rect x="953" y="282.2" width="2.4" height="2.4" fill="#dfe3ff" rx="0.8" opacity=".8"/>
<rect x="958" y="282.2" width="2.4" height="2.4" fill="#dfe3ff" rx="0.8" opacity=".8"/>
<rect x="963" y="282.2" width="2.4" height="2.4" fill="#dfe3ff" rx="0.8" opacity=".8"/>
<rect x="967" y="282.2" width="2.4" height="2.4" fill="#dfe3ff" rx="0.8" opacity=".8"/>
<rect x="971" y="282.2" width="2.4" height="2.4" fill="#dfe3ff" rx="0.8" opacity=".8"/>
<rect x="975" y="282.2" width="2.4" height="2.4" fill="#dfe3ff" rx="0.8" opacity=".8"/>
<text x="1002" y="285.2" font-size="2.8" fill="#fff" font-weight="bold" text-anchor="end">1 Nis Çar  09:41</text>
<rect x="697.3" y="287.4" width="306.7" height="4.3" fill="#1e1e1e"/>
<circle cx="699.2" cy="289.5" r="1.2" fill="#e0443a"/>
<circle cx="702.6" cy="289.5" r="1.2" fill="#e8b030"/>
<circle cx="706" cy="289.5" r="1.2" fill="#3ac040"/>
<rect x="836" y="288.4" width="1.4" height="2" fill="#777"/>
<text x="838.2" y="290.7" font-size="2.6" fill="#999" font-weight="bold" textLength="25" lengthAdjust="spacingAndGlyphs">Mix: Pro Tools x Splice</text>
<rect x="697.3" y="291.7" width="306.7" height="12.3" fill="#2a2a2a"/>
<rect x="699" y="293.5" width="16" height="8" fill="#0a0a0a" rx="0.6"/>
<rect x="700.5" y="295.2" width="6" height="2.6" fill="#2a8a3a"/>
<rect x="708" y="295.2" width="6" height="2.6" fill="#2a8a3a"/>
<rect x="707.2" y="298.3" width="7.2" height="2.6" fill="#a040c0"/>
<rect x="700.5" y="298.3" width="6" height="2.6" fill="#1a5a2a"/>
<rect x="718.5" y="294.5" width="2.6" height="2.8" fill="#6a6a6a" rx="0.4"/>
<rect x="722.5" y="294.5" width="2.6" height="2.8" fill="#6a6a6a" rx="0.4"/>
<rect x="726.5" y="294.5" width="2.6" height="2.8" fill="#6a6a6a" rx="0.4"/>
<rect x="738" y="294.5" width="2.6" height="2.8" fill="#6a6a6a" rx="0.4"/>
<rect x="742" y="294.5" width="2.6" height="2.8" fill="#6a6a6a" rx="0.4"/>
<rect x="718" y="299.2" width="2" height="1.8" fill="#7a7a7a"/>
<rect x="721" y="299.2" width="2" height="1.8" fill="#7a7a7a"/>
<rect x="724" y="299.2" width="2" height="1.8" fill="#7a7a7a"/>
<rect x="727" y="299.2" width="2" height="1.8" fill="#7a7a7a"/>
<rect x="730" y="299.2" width="2" height="1.8" fill="#7a7a7a"/>
<rect x="746.7" y="292.2" width="19.4" height="7.2" fill="#2e6aa2" rx="0.8"/>
<rect x="749.5" y="294.2" width="3.3" height="3.3" fill="#8ab8e0" rx="0.5"/>
<rect x="755.5" y="294.2" width="3.3" height="3.3" fill="#8ab8e0" rx="0.5"/>
<rect x="761" y="294.2" width="3.3" height="3.3" fill="#8ab8e0" rx="0.5"/>
<rect x="768" y="294.5" width="3" height="3" fill="#7a7a7a"/>
<rect x="773" y="294.5" width="3" height="3" fill="#7a7a7a"/>
<rect x="734.5" y="299.7" width="4.2" height="2.2" fill="#3a6aa8" rx="0.4"/>
<rect x="740" y="299.7" width="4.2" height="2.2" fill="#3a6aa8" rx="0.4"/>
<rect x="745.5" y="299.7" width="4.2" height="2.2" fill="#555" rx="0.4"/>
<rect x="751" y="299.7" width="4.2" height="2.2" fill="#555" rx="0.4"/>
<rect x="761.5" y="299.7" width="4.2" height="2.2" fill="#3a6aa8" rx="0.4"/>
<rect x="766" y="299.7" width="4.2" height="2.2" fill="#555" rx="0.4"/>
<rect x="771" y="299.7" width="4.2" height="2.2" fill="#555" rx="0.4"/>
<rect x="776" y="299.7" width="4.2" height="2.2" fill="#3a6aa8" rx="0.4"/>
<rect x="782.2" y="292.8" width="58.8" height="10.2" fill="#0a0a0a" rx="0.6"/>
<text x="796" y="300.4" font-size="6.2" fill="#3ad060" font-weight="bold">38| 1| 000</text>
<rect x="816" y="294.5" width="6" height="1" fill="#666"/>
<rect x="816" y="296.5" width="6" height="1" fill="#666"/>
<rect x="827" y="294.2" width="8" height="1" fill="#3ad048"/>
<rect x="827" y="296.4" width="8" height="1" fill="#3ad048"/>
<rect x="827" y="298.6" width="8" height="1" fill="#3ad048"/>
<rect x="801" y="301" width="12" height="1.4" fill="#2a8a3a"/>
<rect x="784" y="301" width="6" height="1.2" fill="#555"/>
<rect x="844.7" y="293.2" width="21.3" height="7.6" fill="#0a0a0a" rx="0.6"/>
<rect x="846.5" y="294.6" width="7.5" height="2.2" fill="#3ad060"/>
<rect x="857" y="294.6" width="7" height="1.1" fill="#3ad048"/>
<rect x="846.5" y="298.2" width="6" height="1.1" fill="#3ad048"/>
<rect x="857" y="298.2" width="7" height="1.1" fill="#3ad048"/>
<rect x="869.5" y="293.8" width="4" height="4.4" fill="#3a6a9a" rx="0.5"/>
<rect x="875" y="293.8" width="4" height="4.4" fill="#3a6a9a" rx="0.5"/>
<rect x="880.5" y="293.8" width="4" height="4.4" fill="#3ad060" rx="0.5"/>
<rect x="886" y="293.8" width="4" height="4.4" fill="#cfcfcf" rx="0.5"/>
<rect x="870" y="299.8" width="2.6" height="1.6" fill="#8a8a8a"/>
<rect x="875.5" y="299.8" width="2.6" height="1.6" fill="#8a8a8a"/>
<rect x="881" y="299.8" width="2.6" height="1.6" fill="#8a8a8a"/>
<rect x="886.5" y="299.8" width="2.6" height="1.6" fill="#8a8a8a"/>
<rect x="894.7" y="293" width="20.6" height="7.4" fill="#0a0a0a" rx="0.6"/>
<rect x="897" y="294.5" width="5" height="1.2" fill="#3ad048"/>
<rect x="906" y="294.5" width="7" height="1.2" fill="#3ad048"/>
<rect x="906" y="297.5" width="7" height="1.2" fill="#3ad048"/>
<rect x="895" y="300.8" width="3.6" height="2.2" fill="#777" rx="0.4"/>
<rect x="900" y="300.8" width="3.6" height="2.2" fill="#777" rx="0.4"/>
<rect x="905" y="300.8" width="3.6" height="2.2" fill="#555" rx="0.4"/>
<rect x="910.5" y="300.8" width="3.6" height="2.2" fill="#3a8ad0" rx="0.4"/>
<rect x="919" y="293" width="3" height="10" fill="#111"/>
<rect x="925.6" y="293.4" width="10.4" height="7" fill="#0a0a0a" rx="0.6"/>
<rect x="927" y="294.6" width="7.5" height="2.2" fill="#3ad060"/>
<rect x="940" y="292.6" width="34" height="10.2" fill="#0a0a0a" rx="0.6"/>
<rect x="942" y="294.2" width="2" height="1.2" fill="#ddd"/>
<rect x="945" y="294.2" width="10" height="1.2" fill="#ddd"/>
<rect x="942" y="298.2" width="26" height="1.2" fill="#3ad048" opacity=".8"/>
<rect x="970.5" y="294" width="2" height="1.6" fill="#888"/>
<rect x="970.5" y="298" width="2" height="1.6" fill="#888"/>
<rect x="976.5" y="292.6" width="25.5" height="10.2" fill="#0a0a0a" rx="0.6"/>
<rect x="978" y="294.2" width="5" height="1" fill="#ccc"/>
<rect x="985" y="293.8" width="1.2" height="2" fill="#3ad048"/>
<rect x="994" y="294.2" width="6" height="1" fill="#3ad048"/>
<rect x="978" y="296.8" width="11" height="2.2" fill="#3ad060" rx="0.4"/>
<rect x="991.5" y="297.2" width="3" height="1.2" fill="#3ad048"/>
<rect x="996.5" y="297.2" width="4" height="1.2" fill="#aaa"/>
<rect x="978.5" y="300.6" width="2.5" height="1.8" fill="#777"/>
<rect x="983.5" y="300.6" width="2.5" height="1.8" fill="#777"/>
<rect x="998" y="300.6" width="2.5" height="1.8" fill="#777"/>
<rect x="697.5" y="304" width="25.2" height="114" fill="#2b2b2b"/>
<text x="699" y="307" font-size="2.2" fill="#ccc">Tracks</text>
<rect x="700" y="308.9" width="0.9" height="0.9" fill="#999"/>
<rect x="702.2" y="308.6" width="1.5" height="1.5" fill="#c03c60"/>
<rect x="704.5" y="308.8" width="1.1" height="1.1" fill="#888"/>
<rect x="706.5" y="308.9" width="10.7" height="1" fill="#999" opacity=".75"/>
<rect x="700" y="311" width="0.9" height="0.9" fill="#999"/>
<rect x="702.2" y="310.7" width="1.5" height="1.5" fill="#3a50c0"/>
<rect x="704.5" y="310.9" width="1.1" height="1.1" fill="#888"/>
<rect x="708" y="311" width="9.8" height="1" fill="#999" opacity=".75"/>
<rect x="700" y="313.1" width="0.9" height="0.9" fill="#999"/>
<rect x="702.2" y="312.8" width="1.5" height="1.5" fill="#3aa0c8"/>
<rect x="704.5" y="313" width="1.1" height="1.1" fill="#888"/>
<rect x="708" y="313.1" width="12.8" height="1" fill="#999" opacity=".75"/>
<rect x="700" y="315.1" width="0.9" height="0.9" fill="#999"/>
<rect x="702.2" y="314.8" width="1.5" height="1.5" fill="#c8b03a"/>
<rect x="704.5" y="315" width="1.1" height="1.1" fill="#888"/>
<rect x="708" y="315.1" width="12.2" height="1" fill="#999" opacity=".75"/>
<rect x="700" y="317.2" width="0.9" height="0.9" fill="#999"/>
<rect x="702.2" y="316.9" width="1.5" height="1.5" fill="#3a3ac0"/>
<rect x="704.5" y="317.1" width="1.1" height="1.1" fill="#888"/>
<rect x="708" y="317.2" width="9.5" height="1" fill="#999" opacity=".75"/>
<rect x="700" y="319.3" width="0.9" height="0.9" fill="#999"/>
<rect x="702.2" y="319" width="1.5" height="1.5" fill="#c040c0"/>
<rect x="704.5" y="319.2" width="1.1" height="1.1" fill="#888"/>
<rect x="706.5" y="319.3" width="11.4" height="1" fill="#999" opacity=".75"/>
<rect x="700" y="321.4" width="0.9" height="0.9" fill="#999"/>
<rect x="702.2" y="321.1" width="1.5" height="1.5" fill="#3aa060"/>
<rect x="704.5" y="321.3" width="1.1" height="1.1" fill="#888"/>
<rect x="708" y="321.4" width="11.2" height="1" fill="#999" opacity=".75"/>
<rect x="700" y="323.5" width="0.9" height="0.9" fill="#999"/>
<rect x="702.2" y="323.2" width="1.5" height="1.5" fill="#40c0a0"/>
<rect x="704.5" y="323.4" width="1.1" height="1.1" fill="#888"/>
<rect x="708" y="323.5" width="13.3" height="1" fill="#999" opacity=".75"/>
<rect x="700" y="325.5" width="0.9" height="0.9" fill="#999"/>
<rect x="702.2" y="325.2" width="1.5" height="1.5" fill="#40c040"/>
<rect x="704.5" y="325.4" width="1.1" height="1.1" fill="#888"/>
<rect x="708" y="325.5" width="12.4" height="1" fill="#999" opacity=".75"/>
<rect x="700" y="327.6" width="0.9" height="0.9" fill="#999"/>
<rect x="702.2" y="327.3" width="1.5" height="1.5" fill="#40c040"/>
<rect x="704.5" y="327.5" width="1.1" height="1.1" fill="#888"/>
<rect x="708" y="327.6" width="9.7" height="1" fill="#999" opacity=".75"/>
<rect x="700" y="329.7" width="0.9" height="0.9" fill="#999"/>
<rect x="702.2" y="329.4" width="1.5" height="1.5" fill="#c8c840"/>
<rect x="704.5" y="329.6" width="1.1" height="1.1" fill="#888"/>
<rect x="706.5" y="329.7" width="13.9" height="1" fill="#999" opacity=".75"/>
<rect x="700" y="331.8" width="0.9" height="0.9" fill="#999"/>
<rect x="702.2" y="331.5" width="1.5" height="1.5" fill="#3ab0c0"/>
<rect x="704.5" y="331.7" width="1.1" height="1.1" fill="#888"/>
<rect x="708" y="331.8" width="8.7" height="1" fill="#999" opacity=".75"/>
<rect x="700" y="333.9" width="0.9" height="0.9" fill="#999"/>
<rect x="702.2" y="333.6" width="1.5" height="1.5" fill="#3a8ad0"/>
<rect x="704.5" y="333.8" width="1.1" height="1.1" fill="#888"/>
<rect x="708" y="333.9" width="10.5" height="1" fill="#999" opacity=".75"/>
<rect x="700" y="335.9" width="0.9" height="0.9" fill="#999"/>
<rect x="702.2" y="335.6" width="1.5" height="1.5" fill="#40a0c8"/>
<rect x="704.5" y="335.8" width="1.1" height="1.1" fill="#888"/>
<rect x="708" y="335.9" width="12.5" height="1" fill="#999" opacity=".75"/>
<rect x="700" y="338" width="0.9" height="0.9" fill="#999"/>
<rect x="702.2" y="337.7" width="1.5" height="1.5" fill="#c840c8"/>
<rect x="704.5" y="337.9" width="1.1" height="1.1" fill="#888"/>
<rect x="708" y="338" width="8.9" height="1" fill="#999" opacity=".75"/>
<rect x="700" y="340.1" width="0.9" height="0.9" fill="#999"/>
<rect x="702.2" y="339.8" width="1.5" height="1.5" fill="#b02020"/>
<rect x="704.5" y="340" width="1.1" height="1.1" fill="#888"/>
<rect x="706.5" y="340.1" width="10.9" height="1" fill="#999" opacity=".75"/>
<rect x="700" y="342.2" width="0.9" height="0.9" fill="#999"/>
<rect x="702.2" y="341.9" width="1.5" height="1.5" fill="#40a0c0"/>
<rect x="704.5" y="342.1" width="1.1" height="1.1" fill="#888"/>
<rect x="708" y="342.2" width="8.2" height="1" fill="#999" opacity=".75"/>
<rect x="700" y="344.3" width="0.9" height="0.9" fill="#999"/>
<rect x="702.2" y="344" width="1.5" height="1.5" fill="#40a0c0"/>
<rect x="704.5" y="344.2" width="1.1" height="1.1" fill="#888"/>
<rect x="708" y="344.3" width="12" height="1" fill="#999" opacity=".75"/>
<rect x="700" y="346.3" width="0.9" height="0.9" fill="#999"/>
<rect x="702.2" y="346" width="1.5" height="1.5" fill="#807030"/>
<rect x="704.5" y="346.2" width="1.1" height="1.1" fill="#888"/>
<rect x="708" y="346.3" width="12.6" height="1" fill="#999" opacity=".75"/>
<rect x="700" y="348.4" width="0.9" height="0.9" fill="#999"/>
<rect x="702.2" y="348.1" width="1.5" height="1.5" fill="#c8c840"/>
<rect x="704.5" y="348.3" width="1.1" height="1.1" fill="#888"/>
<rect x="708" y="348.4" width="11.4" height="1" fill="#999" opacity=".75"/>
<rect x="700" y="350.5" width="0.9" height="0.9" fill="#999"/>
<rect x="702.2" y="350.2" width="1.5" height="1.5" fill="#3a9ad0"/>
<rect x="704.5" y="350.4" width="1.1" height="1.1" fill="#888"/>
<rect x="706.5" y="350.5" width="13.3" height="1" fill="#999" opacity=".75"/>
<rect x="700" y="352.6" width="0.9" height="0.9" fill="#999"/>
<rect x="702.2" y="352.3" width="1.5" height="1.5" fill="#3a3a90"/>
<rect x="704.5" y="352.5" width="1.1" height="1.1" fill="#888"/>
<rect x="708" y="352.6" width="9.9" height="1" fill="#999" opacity=".75"/>
<rect x="700" y="354.7" width="0.9" height="0.9" fill="#999"/>
<rect x="702.2" y="354.4" width="1.5" height="1.5" fill="#3a9ad0"/>
<rect x="704.5" y="354.6" width="1.1" height="1.1" fill="#888"/>
<rect x="708" y="354.7" width="12.2" height="1" fill="#999" opacity=".75"/>
<rect x="700" y="356.7" width="0.9" height="0.9" fill="#999"/>
<rect x="702.2" y="356.4" width="1.5" height="1.5" fill="#3a9ad0"/>
<rect x="704.5" y="356.6" width="1.1" height="1.1" fill="#888"/>
<rect x="708" y="356.7" width="11.6" height="1" fill="#999" opacity=".75"/>
<rect x="700" y="358.8" width="0.9" height="0.9" fill="#999"/>
<rect x="702.2" y="358.5" width="1.5" height="1.5" fill="#3a9ad0"/>
<rect x="704.5" y="358.7" width="1.1" height="1.1" fill="#888"/>
<rect x="708" y="358.8" width="11.5" height="1" fill="#999" opacity=".75"/>
<rect x="700" y="360.9" width="0.9" height="0.9" fill="#999"/>
<rect x="702.2" y="360.6" width="1.5" height="1.5" fill="#3a9ad0"/>
<rect x="704.5" y="360.8" width="1.1" height="1.1" fill="#888"/>
<rect x="706.5" y="360.9" width="10.7" height="1" fill="#999" opacity=".75"/>
<rect x="700" y="363" width="0.9" height="0.9" fill="#999"/>
<rect x="702.2" y="362.7" width="1.5" height="1.5" fill="#3a3a90"/>
<rect x="704.5" y="362.9" width="1.1" height="1.1" fill="#888"/>
<rect x="708" y="363" width="13" height="1" fill="#999" opacity=".75"/>
<rect x="700" y="365.1" width="0.9" height="0.9" fill="#999"/>
<rect x="702.2" y="364.8" width="1.5" height="1.5" fill="#3a3a90"/>
<rect x="704.5" y="365" width="1.1" height="1.1" fill="#888"/>
<rect x="708" y="365.1" width="13.7" height="1" fill="#999" opacity=".75"/>
<rect x="700" y="367.1" width="0.9" height="0.9" fill="#999"/>
<rect x="702.2" y="366.8" width="1.5" height="1.5" fill="#b040c0"/>
<rect x="704.5" y="367" width="1.1" height="1.1" fill="#888"/>
<rect x="708" y="367.1" width="10.8" height="1" fill="#999" opacity=".75"/>
<rect x="700" y="369.2" width="0.9" height="0.9" fill="#999"/>
<rect x="702.2" y="368.9" width="1.5" height="1.5" fill="#b040c0"/>
<rect x="704.5" y="369.1" width="1.1" height="1.1" fill="#888"/>
<rect x="708" y="369.2" width="12" height="1" fill="#999" opacity=".75"/>
<rect x="700" y="371.3" width="0.9" height="0.9" fill="#999"/>
<rect x="702.2" y="371" width="1.5" height="1.5" fill="#c8c840"/>
<rect x="704.5" y="371.2" width="1.1" height="1.1" fill="#888"/>
<rect x="706.5" y="371.3" width="8.4" height="1" fill="#999" opacity=".75"/>
<rect x="700" y="373.4" width="0.9" height="0.9" fill="#999"/>
<rect x="702.2" y="373.1" width="1.5" height="1.5" fill="#b02020"/>
<rect x="704.5" y="373.3" width="1.1" height="1.1" fill="#888"/>
<rect x="708" y="373.4" width="12.2" height="1" fill="#999" opacity=".75"/>
<rect x="700" y="375.5" width="0.9" height="0.9" fill="#999"/>
<rect x="702.2" y="375.2" width="1.5" height="1.5" fill="#3aa0c0"/>
<rect x="704.5" y="375.4" width="1.1" height="1.1" fill="#888"/>
<rect x="708" y="375.5" width="11.9" height="1" fill="#999" opacity=".75"/>
<rect x="700" y="377.5" width="0.9" height="0.9" fill="#999"/>
<rect x="702.2" y="377.2" width="1.5" height="1.5" fill="#c87030"/>
<rect x="704.5" y="377.4" width="1.1" height="1.1" fill="#888"/>
<rect x="708" y="377.5" width="14" height="1" fill="#999" opacity=".75"/>
<rect x="697.5" y="380.8" width="25.2" height="37.2" fill="#2b2b2b"/>
<rect x="697.5" y="380.8" width="25.2" height="0.6" fill="#151515"/>
<text x="699" y="383.8" font-size="2.2" fill="#ccc">Groups</text>
<rect x="701" y="384.8" width="2" height="1" fill="#a040c0"/>
<rect x="704" y="384.8" width="8" height="1" fill="#999"/>
<rect x="698" y="386.6" width="24" height="2.4" fill="#2a6ab0"/>
<rect x="705" y="387.3" width="10" height="0.9" fill="#d0e0f0"/>
<rect x="723.6" y="304" width="211.8" height="10" fill="#262626"/>
<text x="727" y="307" font-size="2.2" fill="#aaa">Timeline</text>
<rect x="726" y="308.5" width="4" height="1.4" fill="#777"/>
<rect x="732" y="310.6" width="8" height="1" fill="#666"/>
<rect x="772.5" y="310.2" width="3" height="3" fill="#c03030" rx="1.5"/>
<rect x="723.6" y="312.4" width="54" height="1.6" fill="#1a1a1a"/>
<rect x="730" y="312.6" width="6" height="1" fill="#777"/>
<rect x="748" y="312.6" width="8" height="1" fill="#777"/>
<rect x="762" y="312.6" width="8" height="1" fill="#777"/>
<rect x="777.6" y="304" width="157.8" height="10" fill="#2a2a2a"/>
<rect x="778.6" y="305" width="0.5" height="3" fill="#777"/>
<rect x="779.6" y="305.8" width="2.5" height="1.4" fill="#bbb"/>
<rect x="778.6" y="309.5" width="5" height="1.2" fill="#888"/>
<rect x="792.1" y="305" width="0.5" height="3" fill="#777"/>
<rect x="793.1" y="305.8" width="2.5" height="1.4" fill="#bbb"/>
<rect x="792.1" y="309.5" width="5" height="1.2" fill="#888"/>
<rect x="805.6" y="305" width="0.5" height="3" fill="#777"/>
<rect x="806.6" y="305.8" width="2.5" height="1.4" fill="#bbb"/>
<rect x="805.6" y="309.5" width="5" height="1.2" fill="#888"/>
<rect x="819.1" y="305" width="0.5" height="3" fill="#777"/>
<rect x="820.1" y="305.8" width="2.5" height="1.4" fill="#bbb"/>
<rect x="819.1" y="309.5" width="5" height="1.2" fill="#888"/>
<rect x="832.6" y="305" width="0.5" height="3" fill="#777"/>
<rect x="833.6" y="305.8" width="2.5" height="1.4" fill="#bbb"/>
<rect x="832.6" y="309.5" width="5" height="1.2" fill="#888"/>
<rect x="846.1" y="305" width="0.5" height="3" fill="#777"/>
<rect x="847.1" y="305.8" width="2.5" height="1.4" fill="#bbb"/>
<rect x="846.1" y="309.5" width="5" height="1.2" fill="#888"/>
<rect x="859.6" y="305" width="0.5" height="3" fill="#777"/>
<rect x="860.6" y="305.8" width="2.5" height="1.4" fill="#bbb"/>
<rect x="859.6" y="309.5" width="5" height="1.2" fill="#888"/>
<rect x="873.1" y="305" width="0.5" height="3" fill="#777"/>
<rect x="874.1" y="305.8" width="2.5" height="1.4" fill="#bbb"/>
<rect x="873.1" y="309.5" width="5" height="1.2" fill="#888"/>
<rect x="886.6" y="305" width="0.5" height="3" fill="#777"/>
<rect x="887.6" y="305.8" width="2.5" height="1.4" fill="#bbb"/>
<rect x="886.6" y="309.5" width="5" height="1.2" fill="#888"/>
<rect x="900.1" y="305" width="0.5" height="3" fill="#777"/>
<rect x="901.1" y="305.8" width="2.5" height="1.4" fill="#bbb"/>
<rect x="900.1" y="309.5" width="5" height="1.2" fill="#888"/>
<rect x="913.6" y="305" width="0.5" height="3" fill="#777"/>
<rect x="914.6" y="305.8" width="2.5" height="1.4" fill="#bbb"/>
<rect x="913.6" y="309.5" width="5" height="1.2" fill="#888"/>
<rect x="927.1" y="305" width="0.5" height="3" fill="#777"/>
<rect x="928.1" y="305.8" width="2.5" height="1.4" fill="#bbb"/>
<rect x="927.1" y="309.5" width="5" height="1.2" fill="#888"/>
<rect x="815.3" y="304.5" width="1.8" height="2.4" fill="#3a8ad0"/>
<rect x="723.6" y="314" width="54" height="6.5" fill="#1b1b52"/>
<rect x="723.6" y="314" width="2" height="6.5" fill="#5a3ac8"/>
<rect x="726.6" y="320.2" width="51" height="0.3" fill="#0a0a0a"/>
<rect x="727.5" y="314.5" width="19" height="2.6" fill="#000" rx="0.3" opacity=".25"/>
<rect x="731" y="315.3" width="12" height="0.9" fill="#d0d0d0"/>
<rect x="727.5" y="317.6" width="5" height="2.1" fill="#5e5e5e" rx="0.3"/>
<rect x="733.3" y="317.6" width="4.5" height="2.1" fill="#4e4e4e" rx="0.3"/>
<rect x="738.6" y="317.6" width="4.5" height="2.1" fill="#4e4e4e" rx="0.3"/>
<rect x="743.9" y="317.6" width="3.2" height="2.1" fill="#4a7a4a" rx="0.3"/>
<rect x="754" y="315.2" width="1.4" height="1.2" fill="#aaa"/>
<rect x="757" y="315.2" width="1.4" height="1.2" fill="#aaa"/>
<rect x="760" y="315.2" width="1.4" height="1.2" fill="#aaa"/>
<rect x="763.5" y="315.2" width="1.4" height="1.2" fill="#aaa"/>
<rect x="766.5" y="315.2" width="1.4" height="1.2" fill="#aaa"/>
<rect x="770.8" y="314.8" width="3.2" height="2.4" fill="#d8d8d8" rx="0.4"/>
<rect x="770.8" y="317.6" width="3.2" height="2.2" fill="#d8d8d8" rx="0.4"/>
<rect x="723.6" y="320.5" width="54" height="6.5" fill="#143a3a"/>
<rect x="723.6" y="320.5" width="2" height="6.5" fill="#2ab8b8"/>
<rect x="726.6" y="326.7" width="51" height="0.3" fill="#0a0a0a"/>
<rect x="727.5" y="321" width="19" height="2.6" fill="#000" rx="0.3" opacity=".25"/>
<rect x="731" y="321.8" width="12" height="0.9" fill="#d0d0d0"/>
<rect x="727.5" y="324.1" width="5" height="2.1" fill="#5e5e5e" rx="0.3"/>
<rect x="733.3" y="324.1" width="4.5" height="2.1" fill="#4e4e4e" rx="0.3"/>
<rect x="738.6" y="324.1" width="4.5" height="2.1" fill="#4e4e4e" rx="0.3"/>
<rect x="743.9" y="324.1" width="3.2" height="2.1" fill="#4a7a4a" rx="0.3"/>
<rect x="754" y="321.7" width="1.4" height="1.2" fill="#aaa"/>
<rect x="757" y="321.7" width="1.4" height="1.2" fill="#aaa"/>
<rect x="760" y="321.7" width="1.4" height="1.2" fill="#aaa"/>
<rect x="763.5" y="321.7" width="1.4" height="1.2" fill="#aaa"/>
<rect x="766.5" y="321.7" width="1.4" height="1.2" fill="#aaa"/>
<rect x="770.8" y="321.3" width="3.2" height="2.4" fill="#d8d8d8" rx="0.4"/>
<rect x="770.8" y="324.1" width="3.2" height="2.2" fill="#d8d8d8" rx="0.4"/>
<rect x="723.6" y="327" width="54" height="6.5" fill="#2f2914"/>
<rect x="723.6" y="327" width="2" height="6.5" fill="#a09030"/>
<rect x="726.6" y="333.2" width="51" height="0.3" fill="#0a0a0a"/>
<rect x="727.5" y="327.5" width="19" height="2.6" fill="#000" rx="0.3" opacity=".25"/>
<rect x="731" y="328.3" width="12" height="0.9" fill="#d0d0d0"/>
<rect x="727.5" y="330.6" width="5" height="2.1" fill="#5e5e5e" rx="0.3"/>
<rect x="733.3" y="330.6" width="4.5" height="2.1" fill="#4e4e4e" rx="0.3"/>
<rect x="738.6" y="330.6" width="4.5" height="2.1" fill="#4e4e4e" rx="0.3"/>
<rect x="743.9" y="330.6" width="3.2" height="2.1" fill="#4a7a4a" rx="0.3"/>
<rect x="754" y="328.2" width="1.4" height="1.2" fill="#aaa"/>
<rect x="757" y="328.2" width="1.4" height="1.2" fill="#aaa"/>
<rect x="760" y="328.2" width="1.4" height="1.2" fill="#aaa"/>
<rect x="763.5" y="328.2" width="1.4" height="1.2" fill="#aaa"/>
<rect x="766.5" y="328.2" width="1.4" height="1.2" fill="#aaa"/>
<rect x="770.8" y="327.8" width="3.2" height="2.4" fill="#d8d8d8" rx="0.4"/>
<rect x="770.8" y="330.6" width="3.2" height="2.2" fill="#d8d8d8" rx="0.4"/>
<rect x="723.6" y="333.5" width="54" height="6.5" fill="#172040"/>
<rect x="723.6" y="333.5" width="2" height="6.5" fill="#3a4ac0"/>
<rect x="726.6" y="339.7" width="51" height="0.3" fill="#0a0a0a"/>
<rect x="727.5" y="334" width="19" height="2.6" fill="#000" rx="0.3" opacity=".25"/>
<rect x="731" y="334.8" width="12" height="0.9" fill="#d0d0d0"/>
<rect x="727.5" y="337.1" width="5" height="2.1" fill="#5e5e5e" rx="0.3"/>
<rect x="733.3" y="337.1" width="4.5" height="2.1" fill="#4e4e4e" rx="0.3"/>
<rect x="738.6" y="337.1" width="4.5" height="2.1" fill="#4e4e4e" rx="0.3"/>
<rect x="743.9" y="337.1" width="3.2" height="2.1" fill="#4a7a4a" rx="0.3"/>
<rect x="754" y="334.7" width="1.4" height="1.2" fill="#aaa"/>
<rect x="757" y="334.7" width="1.4" height="1.2" fill="#aaa"/>
<rect x="760" y="334.7" width="1.4" height="1.2" fill="#aaa"/>
<rect x="763.5" y="334.7" width="1.4" height="1.2" fill="#aaa"/>
<rect x="766.5" y="334.7" width="1.4" height="1.2" fill="#aaa"/>
<rect x="770.8" y="334.3" width="3.2" height="2.4" fill="#d8d8d8" rx="0.4"/>
<rect x="770.8" y="337.1" width="3.2" height="2.2" fill="#d8d8d8" rx="0.4"/>
<rect x="723.6" y="340" width="54" height="6.5" fill="#3a1640"/>
<rect x="723.6" y="340" width="2" height="6.5" fill="#c83cc8"/>
<rect x="726.6" y="346.2" width="51" height="0.3" fill="#0a0a0a"/>
<rect x="727.5" y="340.5" width="19" height="2.6" fill="#000" rx="0.3" opacity=".25"/>
<rect x="731" y="341.3" width="12" height="0.9" fill="#d0d0d0"/>
<rect x="727.5" y="343.6" width="5" height="2.1" fill="#5e5e5e" rx="0.3"/>
<rect x="733.3" y="343.6" width="4.5" height="2.1" fill="#4e4e4e" rx="0.3"/>
<rect x="738.6" y="343.6" width="4.5" height="2.1" fill="#4e4e4e" rx="0.3"/>
<rect x="743.9" y="343.6" width="3.2" height="2.1" fill="#4a7a4a" rx="0.3"/>
<rect x="754" y="341.2" width="1.4" height="1.2" fill="#aaa"/>
<rect x="757" y="341.2" width="1.4" height="1.2" fill="#aaa"/>
<rect x="760" y="341.2" width="1.4" height="1.2" fill="#aaa"/>
<rect x="763.5" y="341.2" width="1.4" height="1.2" fill="#aaa"/>
<rect x="766.5" y="341.2" width="1.4" height="1.2" fill="#aaa"/>
<rect x="770.8" y="340.8" width="3.2" height="2.4" fill="#d8d8d8" rx="0.4"/>
<rect x="770.8" y="343.6" width="3.2" height="2.2" fill="#d8d8d8" rx="0.4"/>
<rect x="723.6" y="346.5" width="54" height="5.6" fill="#3a3a3a"/>
<rect x="723.6" y="346.5" width="2" height="5.6" fill="#6a6a6a"/>
<rect x="726.6" y="351.8" width="51" height="0.3" fill="#0a0a0a"/>
<rect x="729.5" y="347.5" width="15" height="2.6" fill="#2a2a2a"/>
<rect x="731" y="348.1" width="10" height="1" fill="#ccc"/>
<rect x="770.8" y="347.9" width="3.2" height="2.4" fill="#d8d8d8" rx="0.4"/>
<rect x="723.6" y="352.1" width="54" height="6.5" fill="#143232"/>
<rect x="723.6" y="352.1" width="2" height="6.5" fill="#40a8a8"/>
<rect x="726.6" y="358.3" width="51" height="0.3" fill="#0a0a0a"/>
<rect x="727.5" y="352.6" width="19" height="2.6" fill="#000" rx="0.3" opacity=".25"/>
<rect x="731" y="353.4" width="12" height="0.9" fill="#d0d0d0"/>
<rect x="727.5" y="355.7" width="5" height="2.1" fill="#5e5e5e" rx="0.3"/>
<rect x="733.3" y="355.7" width="4.5" height="2.1" fill="#4e4e4e" rx="0.3"/>
<rect x="738.6" y="355.7" width="4.5" height="2.1" fill="#4e4e4e" rx="0.3"/>
<rect x="743.9" y="355.7" width="3.2" height="2.1" fill="#4a7a4a" rx="0.3"/>
<rect x="754" y="353.3" width="1.4" height="1.2" fill="#aaa"/>
<rect x="757" y="353.3" width="1.4" height="1.2" fill="#aaa"/>
<rect x="760" y="353.3" width="1.4" height="1.2" fill="#aaa"/>
<rect x="763.5" y="353.3" width="1.4" height="1.2" fill="#aaa"/>
<rect x="766.5" y="353.3" width="1.4" height="1.2" fill="#aaa"/>
<rect x="770.8" y="352.9" width="3.2" height="2.4" fill="#d8d8d8" rx="0.4"/>
<rect x="770.8" y="355.7" width="3.2" height="2.2" fill="#d8d8d8" rx="0.4"/>
<rect x="723.6" y="358.6" width="54" height="6.5" fill="#1a3a1a"/>
<rect x="723.6" y="358.6" width="2" height="6.5" fill="#40b040"/>
<rect x="726.6" y="364.8" width="51" height="0.3" fill="#0a0a0a"/>
<rect x="727.5" y="359.1" width="19" height="2.6" fill="#000" rx="0.3" opacity=".25"/>
<rect x="731" y="359.9" width="12" height="0.9" fill="#d0d0d0"/>
<rect x="727.5" y="362.2" width="5" height="2.1" fill="#5e5e5e" rx="0.3"/>
<rect x="733.3" y="362.2" width="4.5" height="2.1" fill="#4e4e4e" rx="0.3"/>
<rect x="738.6" y="362.2" width="4.5" height="2.1" fill="#4e4e4e" rx="0.3"/>
<rect x="743.9" y="362.2" width="3.2" height="2.1" fill="#4a7a4a" rx="0.3"/>
<rect x="754" y="359.8" width="1.4" height="1.2" fill="#aaa"/>
<rect x="757" y="359.8" width="1.4" height="1.2" fill="#aaa"/>
<rect x="760" y="359.8" width="1.4" height="1.2" fill="#aaa"/>
<rect x="763.5" y="359.8" width="1.4" height="1.2" fill="#aaa"/>
<rect x="766.5" y="359.8" width="1.4" height="1.2" fill="#aaa"/>
<rect x="770.8" y="359.4" width="3.2" height="2.4" fill="#d8d8d8" rx="0.4"/>
<rect x="770.8" y="362.2" width="3.2" height="2.2" fill="#d8d8d8" rx="0.4"/>
<rect x="723.6" y="365.1" width="54" height="6.5" fill="#1a3a1a"/>
<rect x="723.6" y="365.1" width="2" height="6.5" fill="#40b040"/>
<rect x="726.6" y="371.3" width="51" height="0.3" fill="#0a0a0a"/>
<rect x="727.5" y="365.6" width="19" height="2.6" fill="#000" rx="0.3" opacity=".25"/>
<rect x="731" y="366.4" width="12" height="0.9" fill="#d0d0d0"/>
<rect x="727.5" y="368.7" width="5" height="2.1" fill="#5e5e5e" rx="0.3"/>
<rect x="733.3" y="368.7" width="4.5" height="2.1" fill="#4e4e4e" rx="0.3"/>
<rect x="738.6" y="368.7" width="4.5" height="2.1" fill="#4e4e4e" rx="0.3"/>
<rect x="743.9" y="368.7" width="3.2" height="2.1" fill="#4a7a4a" rx="0.3"/>
<rect x="754" y="366.3" width="1.4" height="1.2" fill="#aaa"/>
<rect x="757" y="366.3" width="1.4" height="1.2" fill="#aaa"/>
<rect x="760" y="366.3" width="1.4" height="1.2" fill="#aaa"/>
<rect x="763.5" y="366.3" width="1.4" height="1.2" fill="#aaa"/>
<rect x="766.5" y="366.3" width="1.4" height="1.2" fill="#aaa"/>
<rect x="770.8" y="365.9" width="3.2" height="2.4" fill="#d8d8d8" rx="0.4"/>
<rect x="770.8" y="368.7" width="3.2" height="2.2" fill="#d8d8d8" rx="0.4"/>
<rect x="723.6" y="371.6" width="54" height="6.5" fill="#172040"/>
<rect x="723.6" y="371.6" width="2" height="6.5" fill="#3a4ac0"/>
<rect x="726.6" y="377.8" width="51" height="0.3" fill="#0a0a0a"/>
<rect x="727.5" y="372.1" width="19" height="2.6" fill="#000" rx="0.3" opacity=".25"/>
<rect x="731" y="372.9" width="12" height="0.9" fill="#d0d0d0"/>
<rect x="727.5" y="375.2" width="5" height="2.1" fill="#5e5e5e" rx="0.3"/>
<rect x="733.3" y="375.2" width="4.5" height="2.1" fill="#4e4e4e" rx="0.3"/>
<rect x="738.6" y="375.2" width="4.5" height="2.1" fill="#4e4e4e" rx="0.3"/>
<rect x="743.9" y="375.2" width="3.2" height="2.1" fill="#4a7a4a" rx="0.3"/>
<rect x="754" y="372.8" width="1.4" height="1.2" fill="#aaa"/>
<rect x="757" y="372.8" width="1.4" height="1.2" fill="#aaa"/>
<rect x="760" y="372.8" width="1.4" height="1.2" fill="#aaa"/>
<rect x="763.5" y="372.8" width="1.4" height="1.2" fill="#aaa"/>
<rect x="766.5" y="372.8" width="1.4" height="1.2" fill="#aaa"/>
<rect x="770.8" y="372.4" width="3.2" height="2.4" fill="#d8d8d8" rx="0.4"/>
<rect x="770.8" y="375.2" width="3.2" height="2.2" fill="#d8d8d8" rx="0.4"/>
<rect x="723.6" y="378.1" width="54" height="6.5" fill="#1a3a1a"/>
<rect x="723.6" y="378.1" width="2" height="6.5" fill="#40b040"/>
<rect x="726.6" y="384.3" width="51" height="0.3" fill="#0a0a0a"/>
<rect x="727.5" y="378.6" width="19" height="2.6" fill="#000" rx="0.3" opacity=".25"/>
<rect x="731" y="379.4" width="12" height="0.9" fill="#d0d0d0"/>
<rect x="727.5" y="381.7" width="5" height="2.1" fill="#5e5e5e" rx="0.3"/>
<rect x="733.3" y="381.7" width="4.5" height="2.1" fill="#4e4e4e" rx="0.3"/>
<rect x="738.6" y="381.7" width="4.5" height="2.1" fill="#4e4e4e" rx="0.3"/>
<rect x="743.9" y="381.7" width="3.2" height="2.1" fill="#4a7a4a" rx="0.3"/>
<rect x="754" y="379.3" width="1.4" height="1.2" fill="#aaa"/>
<rect x="757" y="379.3" width="1.4" height="1.2" fill="#aaa"/>
<rect x="760" y="379.3" width="1.4" height="1.2" fill="#aaa"/>
<rect x="763.5" y="379.3" width="1.4" height="1.2" fill="#aaa"/>
<rect x="766.5" y="379.3" width="1.4" height="1.2" fill="#aaa"/>
<rect x="770.8" y="378.9" width="3.2" height="2.4" fill="#d8d8d8" rx="0.4"/>
<rect x="770.8" y="381.7" width="3.2" height="2.2" fill="#d8d8d8" rx="0.4"/>
<rect x="723.6" y="384.6" width="54" height="6.5" fill="#172838"/>
<rect x="723.6" y="384.6" width="2" height="6.5" fill="#3a80a8"/>
<rect x="726.6" y="390.8" width="51" height="0.3" fill="#0a0a0a"/>
<rect x="727.5" y="385.1" width="19" height="2.6" fill="#000" rx="0.3" opacity=".25"/>
<rect x="731" y="385.9" width="12" height="0.9" fill="#d0d0d0"/>
<rect x="727.5" y="388.2" width="5" height="2.1" fill="#5e5e5e" rx="0.3"/>
<rect x="733.3" y="388.2" width="4.5" height="2.1" fill="#4e4e4e" rx="0.3"/>
<rect x="738.6" y="388.2" width="4.5" height="2.1" fill="#4e4e4e" rx="0.3"/>
<rect x="743.9" y="388.2" width="3.2" height="2.1" fill="#4a7a4a" rx="0.3"/>
<rect x="754" y="385.8" width="1.4" height="1.2" fill="#aaa"/>
<rect x="757" y="385.8" width="1.4" height="1.2" fill="#aaa"/>
<rect x="760" y="385.8" width="1.4" height="1.2" fill="#aaa"/>
<rect x="763.5" y="385.8" width="1.4" height="1.2" fill="#aaa"/>
<rect x="766.5" y="385.8" width="1.4" height="1.2" fill="#aaa"/>
<rect x="770.8" y="385.4" width="3.2" height="2.4" fill="#d8d8d8" rx="0.4"/>
<rect x="770.8" y="388.2" width="3.2" height="2.2" fill="#d8d8d8" rx="0.4"/>
<rect x="723.6" y="391.1" width="54" height="6.5" fill="#143232"/>
<rect x="723.6" y="391.1" width="2" height="6.5" fill="#40a8a8"/>
<rect x="726.6" y="397.3" width="51" height="0.3" fill="#0a0a0a"/>
<rect x="727.5" y="391.6" width="19" height="2.6" fill="#000" rx="0.3" opacity=".25"/>
<rect x="731" y="392.4" width="12" height="0.9" fill="#d0d0d0"/>
<rect x="727.5" y="394.7" width="5" height="2.1" fill="#5e5e5e" rx="0.3"/>
<rect x="733.3" y="394.7" width="4.5" height="2.1" fill="#4e4e4e" rx="0.3"/>
<rect x="738.6" y="394.7" width="4.5" height="2.1" fill="#4e4e4e" rx="0.3"/>
<rect x="743.9" y="394.7" width="3.2" height="2.1" fill="#4a7a4a" rx="0.3"/>
<rect x="754" y="392.3" width="1.4" height="1.2" fill="#aaa"/>
<rect x="757" y="392.3" width="1.4" height="1.2" fill="#aaa"/>
<rect x="760" y="392.3" width="1.4" height="1.2" fill="#aaa"/>
<rect x="763.5" y="392.3" width="1.4" height="1.2" fill="#aaa"/>
<rect x="766.5" y="392.3" width="1.4" height="1.2" fill="#aaa"/>
<rect x="770.8" y="391.9" width="3.2" height="2.4" fill="#d8d8d8" rx="0.4"/>
<rect x="770.8" y="394.7" width="3.2" height="2.2" fill="#d8d8d8" rx="0.4"/>
<rect x="723.6" y="397.6" width="54" height="6.5" fill="#3a1640"/>
<rect x="723.6" y="397.6" width="2" height="6.5" fill="#c83cc8"/>
<rect x="726.6" y="403.8" width="51" height="0.3" fill="#0a0a0a"/>
<rect x="727.5" y="398.1" width="19" height="2.6" fill="#000" rx="0.3" opacity=".25"/>
<rect x="731" y="398.9" width="12" height="0.9" fill="#d0d0d0"/>
<rect x="727.5" y="401.2" width="5" height="2.1" fill="#5e5e5e" rx="0.3"/>
<rect x="733.3" y="401.2" width="4.5" height="2.1" fill="#4e4e4e" rx="0.3"/>
<rect x="738.6" y="401.2" width="4.5" height="2.1" fill="#4e4e4e" rx="0.3"/>
<rect x="743.9" y="401.2" width="3.2" height="2.1" fill="#4a7a4a" rx="0.3"/>
<rect x="754" y="398.8" width="1.4" height="1.2" fill="#aaa"/>
<rect x="757" y="398.8" width="1.4" height="1.2" fill="#aaa"/>
<rect x="760" y="398.8" width="1.4" height="1.2" fill="#aaa"/>
<rect x="763.5" y="398.8" width="1.4" height="1.2" fill="#aaa"/>
<rect x="766.5" y="398.8" width="1.4" height="1.2" fill="#aaa"/>
<rect x="770.8" y="398.4" width="3.2" height="2.4" fill="#d8d8d8" rx="0.4"/>
<rect x="770.8" y="401.2" width="3.2" height="2.2" fill="#d8d8d8" rx="0.4"/>
<rect x="723.6" y="404.1" width="54" height="6.5" fill="#3a1418"/>
<rect x="723.6" y="404.1" width="2" height="6.5" fill="#b02030"/>
<rect x="726.6" y="410.3" width="51" height="0.3" fill="#0a0a0a"/>
<rect x="727.5" y="404.6" width="19" height="2.6" fill="#000" rx="0.3" opacity=".25"/>
<rect x="731" y="405.4" width="12" height="0.9" fill="#d0d0d0"/>
<rect x="727.5" y="407.7" width="5" height="2.1" fill="#5e5e5e" rx="0.3"/>
<rect x="733.3" y="407.7" width="4.5" height="2.1" fill="#4e4e4e" rx="0.3"/>
<rect x="738.6" y="407.7" width="4.5" height="2.1" fill="#4e4e4e" rx="0.3"/>
<rect x="743.9" y="407.7" width="3.2" height="2.1" fill="#4a7a4a" rx="0.3"/>
<rect x="754" y="405.3" width="1.4" height="1.2" fill="#aaa"/>
<rect x="757" y="405.3" width="1.4" height="1.2" fill="#aaa"/>
<rect x="760" y="405.3" width="1.4" height="1.2" fill="#aaa"/>
<rect x="763.5" y="405.3" width="1.4" height="1.2" fill="#aaa"/>
<rect x="766.5" y="405.3" width="1.4" height="1.2" fill="#aaa"/>
<rect x="770.8" y="404.9" width="3.2" height="2.4" fill="#d8d8d8" rx="0.4"/>
<rect x="770.8" y="407.7" width="3.2" height="2.2" fill="#d8d8d8" rx="0.4"/>
<rect x="723.6" y="410.6" width="54" height="6.5" fill="#143232"/>
<rect x="723.6" y="410.6" width="2" height="6.5" fill="#40a8a8"/>
<rect x="726.6" y="416.8" width="51" height="0.3" fill="#0a0a0a"/>
<rect x="727.5" y="411.1" width="19" height="2.6" fill="#000" rx="0.3" opacity=".25"/>
<rect x="731" y="411.9" width="12" height="0.9" fill="#d0d0d0"/>
<rect x="727.5" y="414.2" width="5" height="2.1" fill="#5e5e5e" rx="0.3"/>
<rect x="733.3" y="414.2" width="4.5" height="2.1" fill="#4e4e4e" rx="0.3"/>
<rect x="738.6" y="414.2" width="4.5" height="2.1" fill="#4e4e4e" rx="0.3"/>
<rect x="743.9" y="414.2" width="3.2" height="2.1" fill="#4a7a4a" rx="0.3"/>
<rect x="754" y="411.8" width="1.4" height="1.2" fill="#aaa"/>
<rect x="757" y="411.8" width="1.4" height="1.2" fill="#aaa"/>
<rect x="760" y="411.8" width="1.4" height="1.2" fill="#aaa"/>
<rect x="763.5" y="411.8" width="1.4" height="1.2" fill="#aaa"/>
<rect x="766.5" y="411.8" width="1.4" height="1.2" fill="#aaa"/>
<rect x="770.8" y="411.4" width="3.2" height="2.4" fill="#d8d8d8" rx="0.4"/>
<rect x="770.8" y="414.2" width="3.2" height="2.2" fill="#d8d8d8" rx="0.4"/>
<rect x="723.6" y="417.1" width="54" height="0.9" fill="#262626"/>
<rect x="777.6" y="314" width="157.7" height="104" fill="#5c5c5c"/>
<rect x="815.3" y="314" width="53.4" height="104" fill="#858585"/>
<rect x="777.6" y="320.1" width="157.7" height="0.4" fill="#4a4a4a"/>
<rect x="777.6" y="326.6" width="157.7" height="0.4" fill="#4a4a4a"/>
<rect x="777.6" y="333.1" width="157.7" height="0.4" fill="#4a4a4a"/>
<rect x="777.6" y="339.6" width="157.7" height="0.4" fill="#4a4a4a"/>
<rect x="777.6" y="346.1" width="157.7" height="0.4" fill="#4a4a4a"/>
<rect x="777.6" y="351.7" width="157.7" height="0.4" fill="#4a4a4a"/>
<rect x="777.6" y="358.2" width="157.7" height="0.4" fill="#4a4a4a"/>
<rect x="777.6" y="364.7" width="157.7" height="0.4" fill="#4a4a4a"/>
<rect x="777.6" y="371.2" width="157.7" height="0.4" fill="#4a4a4a"/>
<rect x="777.6" y="377.7" width="157.7" height="0.4" fill="#4a4a4a"/>
<rect x="777.6" y="384.2" width="157.7" height="0.4" fill="#4a4a4a"/>
<rect x="777.6" y="390.7" width="157.7" height="0.4" fill="#4a4a4a"/>
<rect x="777.6" y="397.2" width="157.7" height="0.4" fill="#4a4a4a"/>
<rect x="777.6" y="403.7" width="157.7" height="0.4" fill="#4a4a4a"/>
<rect x="777.6" y="410.2" width="157.7" height="0.4" fill="#4a4a4a"/>
<rect x="777.6" y="416.7" width="157.7" height="0.4" fill="#4a4a4a"/>
<rect x="815.3" y="320.9" width="53.4" height="5.6" fill="#2cc8d0" rx="0.4" stroke="#222" stroke-width=".25"/>
<rect x="815.6" y="321" width="52.8" height="1.5" fill="#000" opacity=".18"/>
<rect x="815.8" y="321.9" width="52.4" height="4.3" fill="url(#wv)"/>
<rect x="868.7" y="320.9" width="51.3" height="5.6" fill="#2a8a8c" rx="0.4" stroke="#222" stroke-width=".25"/>
<rect x="869" y="321" width="50.7" height="1.5" fill="#000" opacity=".18"/>
<rect x="869.2" y="321.9" width="50.3" height="4.3" fill="url(#wv)"/>
<rect x="777.9" y="333.9" width="19.1" height="5.6" fill="#3a56a8" rx="0.4" stroke="#222" stroke-width=".25"/>
<rect x="778.2" y="334" width="18.5" height="1.5" fill="#000" opacity=".18"/>
<rect x="778.4" y="334.9" width="18.1" height="4.3" fill="url(#wv)"/>
<rect x="797.6" y="333.9" width="19.1" height="5.6" fill="#3a56a8" rx="0.4" stroke="#222" stroke-width=".25"/>
<rect x="797.9" y="334" width="18.5" height="1.5" fill="#000" opacity=".18"/>
<rect x="798.1" y="334.9" width="18.1" height="4.3" fill="url(#wv)"/>
<rect x="817.3" y="333.9" width="19.1" height="5.6" fill="#4a66c0" rx="0.4" stroke="#222" stroke-width=".25"/>
<rect x="817.6" y="334" width="18.5" height="1.5" fill="#000" opacity=".18"/>
<rect x="817.8" y="334.9" width="18.1" height="4.3" fill="url(#wv)"/>
<rect x="837" y="333.9" width="19.1" height="5.6" fill="#4a66c0" rx="0.4" stroke="#222" stroke-width=".25"/>
<rect x="837.3" y="334" width="18.5" height="1.5" fill="#000" opacity=".18"/>
<rect x="837.5" y="334.9" width="18.1" height="4.3" fill="url(#wv)"/>
<rect x="856.7" y="333.9" width="19.1" height="5.6" fill="#4a66c0" rx="0.4" stroke="#222" stroke-width=".25"/>
<rect x="857" y="334" width="18.5" height="1.5" fill="#000" opacity=".18"/>
<rect x="857.2" y="334.9" width="18.1" height="4.3" fill="url(#wv)"/>
<rect x="876.4" y="333.9" width="19.1" height="5.6" fill="#3a56a8" rx="0.4" stroke="#222" stroke-width=".25"/>
<rect x="876.7" y="334" width="18.5" height="1.5" fill="#000" opacity=".18"/>
<rect x="876.9" y="334.9" width="18.1" height="4.3" fill="url(#wv)"/>
<rect x="896.1" y="333.9" width="19.1" height="5.6" fill="#3a56a8" rx="0.4" stroke="#222" stroke-width=".25"/>
<rect x="896.4" y="334" width="18.5" height="1.5" fill="#000" opacity=".18"/>
<rect x="896.6" y="334.9" width="18.1" height="4.3" fill="url(#wv)"/>
<rect x="915.8" y="333.9" width="19.1" height="5.6" fill="#3a56a8" rx="0.4" stroke="#222" stroke-width=".25"/>
<rect x="916.1" y="334" width="18.5" height="1.5" fill="#000" opacity=".18"/>
<rect x="916.3" y="334.9" width="18.1" height="4.3" fill="url(#wv)"/>
<rect x="777.6" y="340.4" width="37.7" height="5.6" fill="#8a2a8c" rx="0.4" stroke="#222" stroke-width=".25"/>
<rect x="777.9" y="340.5" width="37.1" height="1.5" fill="#000" opacity=".18"/>
<rect x="778.1" y="341.4" width="36.7" height="4.3" fill="url(#wv)"/>
<rect x="815.3" y="340.4" width="13.2" height="5.6" fill="#e040e0" rx="0.4" stroke="#222" stroke-width=".25"/>
<rect x="815.6" y="340.5" width="12.6" height="1.5" fill="#000" opacity=".18"/>
<rect x="815.8" y="341.4" width="12.2" height="4.3" fill="url(#wv)"/>
<rect x="868.7" y="340.4" width="24.3" height="5.6" fill="#8a2a8c" rx="0.4" stroke="#222" stroke-width=".25"/>
<rect x="869" y="340.5" width="23.7" height="1.5" fill="#000" opacity=".18"/>
<rect x="869.2" y="341.4" width="23.3" height="4.3" fill="url(#wv)"/>
<rect x="893.5" y="340.4" width="26.5" height="5.6" fill="#8a2a8c" rx="0.4" stroke="#222" stroke-width=".25"/>
<rect x="893.8" y="340.5" width="25.9" height="1.5" fill="#000" opacity=".18"/>
<rect x="894" y="341.4" width="25.5" height="4.3" fill="url(#wv)"/>
<rect x="777.6" y="348.1" width="157.7" height="1.8" fill="#3a8a8a"/>
<rect x="777.6" y="349.9" width="157.7" height="1.8" fill="#6a8a30"/>
<rect x="777.6" y="352.5" width="37.7" height="5.6" fill="#2a6a6a" rx="0.4" stroke="#222" stroke-width=".25"/>
<rect x="777.9" y="352.6" width="37.1" height="1.5" fill="#000" opacity=".18"/>
<rect x="778.1" y="353.5" width="36.7" height="4.3" fill="url(#wv)"/>
<rect x="815.3" y="352.5" width="53.4" height="5.6" fill="#30c8d0" rx="0.4" stroke="#222" stroke-width=".25"/>
<rect x="815.6" y="352.6" width="52.8" height="1.5" fill="#000" opacity=".18"/>
<rect x="815.8" y="353.5" width="52.4" height="4.3" fill="url(#wv)"/>
<rect x="868.7" y="352.5" width="66.6" height="5.6" fill="#2a6a6a" rx="0.4" stroke="#222" stroke-width=".25"/>
<rect x="869" y="352.6" width="66" height="1.5" fill="#000" opacity=".18"/>
<rect x="869.2" y="353.5" width="65.6" height="4.3" fill="url(#wv)"/>
<rect x="777.6" y="362.6" width="157.7" height="1.6" fill="#40a040"/>
<rect x="777.6" y="365.5" width="37.7" height="5.6" fill="#a2a24a" rx="0.4" stroke="#222" stroke-width=".25"/>
<rect x="777.9" y="365.6" width="37.1" height="1.5" fill="#000" opacity=".18"/>
<rect x="778.1" y="366.5" width="36.7" height="4.3" fill="url(#wv)"/>
<rect x="868.7" y="365.5" width="51.3" height="5.6" fill="#8e9040" rx="0.4" stroke="#222" stroke-width=".25"/>
<rect x="869" y="365.6" width="50.7" height="1.5" fill="#000" opacity=".18"/>
<rect x="869.2" y="366.5" width="50.3" height="4.3" fill="url(#wv)"/>
<rect x="920" y="365.5" width="15.3" height="5.6" fill="#6a7040" rx="0.4" stroke="#222" stroke-width=".25"/>
<rect x="920.3" y="365.6" width="14.7" height="1.5" fill="#000" opacity=".18"/>
<rect x="777.6" y="372" width="37.7" height="5.6" fill="#3a64a0" rx="0.4" stroke="#222" stroke-width=".25"/>
<rect x="777.9" y="372.1" width="37.1" height="1.5" fill="#000" opacity=".18"/>
<rect x="778.1" y="373" width="36.7" height="4.3" fill="url(#wv)"/>
<rect x="815.3" y="372" width="53.4" height="5.6" fill="#5a9ad8" rx="0.4" stroke="#222" stroke-width=".25"/>
<rect x="815.6" y="372.1" width="52.8" height="1.5" fill="#000" opacity=".18"/>
<rect x="815.8" y="373" width="52.4" height="4.3" fill="url(#wv)"/>
<rect x="868.7" y="372" width="66.6" height="5.6" fill="#3a64a0" rx="0.4" stroke="#222" stroke-width=".25"/>
<rect x="869" y="372.1" width="66" height="1.5" fill="#000" opacity=".18"/>
<rect x="869.2" y="373" width="65.6" height="4.3" fill="url(#wv)"/>
<rect x="778.6" y="385.2" width="7.8" height="5.3" fill="#34506c" rx="0.4" stroke="#2a2a2a" stroke-width=".4"/>
<rect x="788.4" y="385.2" width="7.8" height="5.3" fill="#34506c" rx="0.4" stroke="#2a2a2a" stroke-width=".4"/>
<rect x="798.2" y="385.2" width="7.8" height="5.3" fill="#34506c" rx="0.4" stroke="#2a2a2a" stroke-width=".4"/>
<rect x="808" y="385.2" width="7.8" height="5.3" fill="#34506c" rx="0.4" stroke="#2a2a2a" stroke-width=".4"/>
<rect x="817.8" y="385.2" width="7.8" height="5.3" fill="#bdbdbd" rx="0.4" stroke="#2a2a2a" stroke-width=".4"/>
<rect x="827.6" y="385.2" width="7.8" height="5.3" fill="#bdbdbd" rx="0.4" stroke="#2a2a2a" stroke-width=".4"/>
<rect x="837.4" y="385.2" width="7.8" height="5.3" fill="#bdbdbd" rx="0.4" stroke="#2a2a2a" stroke-width=".4"/>
<rect x="847.2" y="385.2" width="7.8" height="5.3" fill="#bdbdbd" rx="0.4" stroke="#2a2a2a" stroke-width=".4"/>
<rect x="857" y="385.2" width="7.8" height="5.3" fill="#bdbdbd" rx="0.4" stroke="#2a2a2a" stroke-width=".4"/>
<rect x="866.8" y="385.2" width="7.8" height="5.3" fill="#bdbdbd" rx="0.4" stroke="#2a2a2a" stroke-width=".4"/>
<rect x="876.6" y="385.2" width="7.8" height="5.3" fill="#4a4a4a" rx="0.4" stroke="#2a2a2a" stroke-width=".4"/>
<rect x="886.4" y="385.2" width="7.8" height="5.3" fill="#4a4a4a" rx="0.4" stroke="#2a2a2a" stroke-width=".4"/>
<rect x="896.2" y="385.2" width="7.8" height="5.3" fill="#4a4a4a" rx="0.4" stroke="#2a2a2a" stroke-width=".4"/>
<rect x="906" y="385.2" width="7.8" height="5.3" fill="#4a4a4a" rx="0.4" stroke="#2a2a2a" stroke-width=".4"/>
<rect x="915.8" y="385.2" width="7.8" height="5.3" fill="#4a4a4a" rx="0.4" stroke="#2a2a2a" stroke-width=".4"/>
<rect x="925.6" y="385.2" width="7.8" height="5.3" fill="#4a4a4a" rx="0.4" stroke="#2a2a2a" stroke-width=".4"/>
<rect x="777.6" y="398" width="37.7" height="5.6" fill="#9a2a9a" rx="0.4" stroke="#222" stroke-width=".25"/>
<rect x="777.9" y="398.1" width="37.1" height="1.5" fill="#000" opacity=".18"/>
<rect x="778.1" y="399" width="36.7" height="4.3" fill="url(#wv)"/>
<rect x="815.3" y="398" width="53.4" height="5.6" fill="#e060e0" rx="0.4" stroke="#222" stroke-width=".25"/>
<rect x="815.6" y="398.1" width="52.8" height="1.5" fill="#000" opacity=".18"/>
<rect x="815.8" y="399" width="52.4" height="4.3" fill="url(#wv)"/>
<rect x="868.7" y="398" width="51.3" height="5.6" fill="#9a2a9a" rx="0.4" stroke="#222" stroke-width=".25"/>
<rect x="869" y="398.1" width="50.7" height="1.5" fill="#000" opacity=".18"/>
<rect x="869.2" y="399" width="50.3" height="4.3" fill="url(#wv)"/>
<rect x="795.7" y="404.5" width="8.9" height="5.6" fill="#8a3434" rx="0.4" stroke="#222" stroke-width=".25"/>
<rect x="796" y="404.6" width="8.3" height="1.5" fill="#000" opacity=".18"/>
<rect x="796.2" y="405.5" width="7.9" height="4.3" fill="url(#wv)"/>
<rect x="804.6" y="404.5" width="10.7" height="5.6" fill="#5a3434" rx="0.4" stroke="#222" stroke-width=".25"/>
<rect x="804.9" y="404.6" width="10.1" height="1.5" fill="#000" opacity=".18"/>
<rect x="805.1" y="405.5" width="9.7" height="4.3" fill="url(#wv)"/>
<rect x="815.3" y="404.5" width="7.2" height="5.6" fill="#d02020" rx="0.4" stroke="#222" stroke-width=".25"/>
<rect x="815.6" y="404.6" width="6.6" height="1.5" fill="#000" opacity=".18"/>
<rect x="815.8" y="405.5" width="6.2" height="4.3" fill="url(#wv)"/>
<rect x="848" y="404.5" width="20.7" height="5.6" fill="#c8c8c8" rx="0.4" stroke="#222" stroke-width=".25"/>
<rect x="848.3" y="404.6" width="20.1" height="1.5" fill="#000" opacity=".18"/>
<rect x="848.5" y="405.5" width="19.7" height="4.3" fill="url(#wv)"/>
<rect x="868.7" y="404.5" width="7.3" height="5.6" fill="#6a6a6a" rx="0.4" stroke="#222" stroke-width=".25"/>
<rect x="869" y="404.6" width="6.7" height="1.5" fill="#000" opacity=".18"/>
<rect x="869.2" y="405.5" width="6.3" height="4.3" fill="url(#wv)"/>
<rect x="877" y="404.5" width="43" height="5.6" fill="#6a6a6a" rx="0.4" stroke="#222" stroke-width=".25"/>
<rect x="877.3" y="404.6" width="42.4" height="1.5" fill="#000" opacity=".18"/>
<rect x="877.5" y="405.5" width="42" height="4.3" fill="url(#wv)"/>
<rect x="777.6" y="411.8" width="157.7" height="1" fill="#7a9a9a"/>
<rect x="815.3" y="411.8" width="53.4" height="1" fill="#a8c4c4"/>
<rect x="935.3" y="304" width="4" height="114" fill="#1c1c1c"/>
<rect x="936.2" y="320" width="2" height="12" fill="#555" rx="1"/>
<rect x="939.3" y="304" width="64.7" height="114.5" fill="#1c1c1e"/>
<rect x="939.3" y="304" width="64.7" height="3.4" fill="#262626"/>
<rect x="941" y="304.8" width="7" height="1.4" fill="#888"/>
<rect x="951" y="304.8" width="7" height="1.4" fill="#888"/>
<rect x="961" y="304.8" width="7" height="1.4" fill="#888"/>
<rect x="973" y="304.8" width="7" height="1.4" fill="#888"/>
<circle cx="960.7" cy="313" r="1.8" fill="none" stroke="#bbb" stroke-width=".5"/>
<text x="960.7" y="318.5" font-size="1.8" fill="#999" text-anchor="middle">Search</text>
<circle cx="977.2" cy="313" r="1.8" fill="none" stroke="#bbb" stroke-width=".5"/>
<text x="977.2" y="318.5" font-size="1.8" fill="#999" text-anchor="middle">Library</text>
<circle cx="995.2" cy="313" r="1.8" fill="none" stroke="#bbb" stroke-width=".5"/>
<text x="995.2" y="318.5" font-size="1.8" fill="#999" text-anchor="middle">Storage</text>
<rect x="942" y="312.6" width="1" height="1" fill="#888"/>
<rect x="945.5" y="312.6" width="1" height="1" fill="#888"/>
<text x="942.2" y="326.6" font-size="4.6" fill="#f4f4f4" font-weight="bold" textLength="41" lengthAdjust="spacingAndGlyphs">Search with Sound</text>
<rect x="942.4" y="329.6" width="57.6" height="11.2" fill="#1a1a1c" rx="2" stroke="url(#sgrad)" stroke-width=".8"/>
<rect x="945.5" y="333.8" width="3" height="2.6" fill="#aaa"/>
<rect x="950" y="334.2" width="1.6" height="1.6" fill="#3a6ad8"/>
<rect x="953" y="334.6" width="10" height="1.1" fill="#999"/>
<circle cx="986.5" cy="335.2" r="1.4" fill="none" stroke="#bbb" stroke-width=".5"/>
<circle cx="992.5" cy="335.2" r="1.4" fill="none" stroke="#bbb" stroke-width=".5"/>
<rect x="942" y="343.5" width="15" height="4.2" fill="#2a2a2c" rx="2"/>
<rect x="945" y="345.1" width="9" height="1" fill="#bbb"/>
<rect x="959.5" y="343.5" width="18.5" height="4.2" fill="#2a2a2c" rx="2"/>
<rect x="962.5" y="345.1" width="12.5" height="1" fill="#bbb"/>
<rect x="980" y="343.5" width="17" height="4.2" fill="#2a2a2c" rx="2"/>
<rect x="983" y="345.1" width="11" height="1" fill="#bbb"/>
<rect x="964.4" y="349.8" width="9.6" height="3.6" fill="#2a2a2c" rx="1.5"/>
<rect x="966.5" y="351.1" width="5" height="0.9" fill="#bbb"/>
<rect x="942" y="355.2" width="9.5" height="3.4" fill="#262628" rx="1.5"/>
<rect x="943.5" y="356.5" width="6.5" height="0.8" fill="#aaa"/>
<rect x="952.5" y="355.2" width="7.5" height="3.4" fill="#262628" rx="1.5"/>
<rect x="954" y="356.5" width="4.5" height="0.8" fill="#aaa"/>
<rect x="961" y="355.2" width="11" height="3.4" fill="#262628" rx="1.5"/>
<rect x="962.5" y="356.5" width="8" height="0.8" fill="#aaa"/>
<rect x="973" y="355.2" width="10.5" height="3.4" fill="#262628" rx="1.5"/>
<rect x="974.5" y="356.5" width="7.5" height="0.8" fill="#aaa"/>
<rect x="984.5" y="355.2" width="9.5" height="3.4" fill="#262628" rx="1.5"/>
<rect x="986" y="356.5" width="6.5" height="0.8" fill="#aaa"/>
<rect x="996" y="354.6" width="4" height="4" fill="#5a5a5a" rx="0.5"/>
<rect x="942" y="364.5" width="10" height="1" fill="#aaa"/>
<rect x="942" y="369.5" width="4" height="0.8" fill="#777"/>
<rect x="950" y="369.5" width="8" height="0.8" fill="#777"/>
<rect x="941.5" y="374.7" width="57" height="8.7" fill="#2a2a2c" rx="1"/>
<rect x="942.3" y="375.6" width="6" height="6.4" fill="#3a6aa0" rx="0.4"/>
<rect x="943.8" y="377" width="3" height="3.8" fill="#9ac0e0" rx="0.3"/>
<rect x="950" y="376.4" width="5.2" height="5" fill="#5a7ac8" rx="0.6"/>
<rect x="956" y="376.6" width="27" height="1" fill="#e0e0e0" opacity=".85"/>
<rect x="956" y="379.1" width="26" height="0.8" fill="#888"/>
<circle cx="988" cy="378.6" r="1.2" fill="none" stroke="#888" stroke-width=".4"/>
<rect x="994" y="377.8" width="1.6" height="2.2" fill="#777"/>
<rect x="942.3" y="384.6" width="6" height="6.4" fill="#b8c8a0" rx="0.4"/>
<rect x="943.8" y="386" width="3" height="3.8" fill="#7a9a6a" rx="0.3"/>
<rect x="951" y="386.4" width="3" height="3" fill="#555" rx="0.8"/>
<rect x="956" y="385.6" width="27" height="1" fill="#e0e0e0" opacity=".85"/>
<rect x="956" y="388.1" width="26" height="0.8" fill="#888"/>
<rect x="994" y="386.8" width="1.6" height="2.2" fill="#777"/>
<rect x="942.3" y="393.6" width="6" height="6.4" fill="#d0b898" rx="0.4"/>
<rect x="943.8" y="395" width="3" height="3.8" fill="#a08060" rx="0.3"/>
<rect x="951" y="395.4" width="3" height="3" fill="#555" rx="0.8"/>
<rect x="956" y="394.6" width="27" height="1" fill="#e0e0e0" opacity=".85"/>
<rect x="956" y="397.1" width="26" height="0.8" fill="#888"/>
<rect x="994" y="395.8" width="1.6" height="2.2" fill="#777"/>
<rect x="942.3" y="402.6" width="6" height="6.4" fill="#2a1a2a" rx="0.4"/>
<rect x="943.8" y="404" width="3" height="3.8" fill="#c04a8a" rx="0.3"/>
<rect x="951" y="404.4" width="3" height="3" fill="#555" rx="0.8"/>
<rect x="956" y="403.6" width="27" height="1" fill="#e0e0e0" opacity=".85"/>
<rect x="956" y="406.1" width="26" height="0.8" fill="#888"/>
<rect x="994" y="404.8" width="1.6" height="2.2" fill="#777"/>
<rect x="939.3" y="410.5" width="64.7" height="8" fill="#1c1c1e"/>
<rect x="941.5" y="413" width="2" height="2" fill="#777"/>
<rect x="947" y="413" width="2" height="2" fill="#888"/>
<rect x="952" y="413" width="3" height="2" fill="#bbb"/>
<rect x="999" y="412.6" width="3" height="2.2" fill="#888"/>
<rect x="1001" y="330" width="1.4" height="16" fill="#444" rx="0.7"/>
<rect x="697.3" y="418" width="306.7" height="3.5" fill="#1a1a1a"/>
<rect x="697.3" y="421.5" width="306.7" height="5.2" fill="#2c2c2c"/>
<rect x="699" y="422.5" width="3" height="3" fill="#c03030" rx="0.5"/>
<rect x="704" y="422.6" width="3" height="3" fill="#888" rx="0.4"/>
<rect x="709" y="422.6" width="3" height="3" fill="#888" rx="0.4"/>
<rect x="717" y="422.6" width="3" height="3" fill="#888" rx="0.4"/>
<rect x="726.7" y="421.9" width="16.3" height="4.5" fill="#2e6aa2" rx="0.6"/>
<rect x="728.5" y="422.8" width="3" height="2.8" fill="#9ac8f0" rx="0.4"/>
<rect x="733.2" y="422.8" width="3" height="2.8" fill="#9ac8f0" rx="0.4"/>
<rect x="738" y="422.8" width="3" height="2.8" fill="#9ac8f0" rx="0.4"/>
<rect x="752" y="422.2" width="20" height="3.8" fill="#0e0e0e" rx="0.4"/>
<rect x="753.5" y="423.5" width="12" height="1" fill="#3ad048" opacity=".55"/>
<rect x="775" y="422.2" width="10" height="3.8" fill="#0e2a14" rx="0.4"/>
<rect x="776.5" y="423.5" width="6" height="1" fill="#3ad048" opacity=".55"/>
<rect x="786" y="422.2" width="10" height="3.8" fill="#0e0e0e" rx="0.4"/>
<rect x="787.5" y="423.5" width="6" height="1" fill="#3ad048" opacity=".55"/>
<rect x="797" y="422.2" width="11" height="3.8" fill="#0e0e0e" rx="0.4"/>
<rect x="798.5" y="423.5" width="6.6" height="1" fill="#3ad048" opacity=".55"/>
<rect x="810" y="422.2" width="13" height="3.8" fill="#0e0e0e" rx="0.4"/>
<rect x="811.5" y="423.5" width="7.8" height="1" fill="#3ad048" opacity=".55"/>
<rect x="824" y="422.2" width="10" height="3.8" fill="#0e0e0e" rx="0.4"/>
<rect x="825.5" y="423.5" width="6" height="1" fill="#3ad048" opacity=".55"/>
<rect x="851" y="422.2" width="6" height="3.8" fill="#0e0e0e" rx="0.4"/>
<rect x="852.5" y="423.5" width="3.6" height="1" fill="#3ad048" opacity=".55"/>
<rect x="858" y="422.2" width="18" height="3.8" fill="#0e0e0e" rx="0.4"/>
<rect x="859.5" y="423.5" width="10.8" height="1" fill="#3ad048" opacity=".55"/>
<rect x="877" y="422.2" width="13" height="3.8" fill="#0e0e0e" rx="0.4"/>
<rect x="878.5" y="423.5" width="7.8" height="1" fill="#3ad048" opacity=".55"/>
<rect x="892" y="422.2" width="22" height="3.8" fill="#0e0e0e" rx="0.4"/>
<rect x="893.5" y="423.5" width="13.2" height="1" fill="#3ad048" opacity=".55"/>
<rect x="775.5" y="424.2" width="6" height="1.6" fill="#3a8ad0"/>
<rect x="868.5" y="422.5" width="9" height="3.2" fill="#2aa040"/>
<rect x="826" y="422.6" width="3" height="3" fill="#888" rx="0.4"/>
<rect x="833" y="422.6" width="3" height="3" fill="#888" rx="0.4"/>
<rect x="840" y="422.6" width="3" height="3" fill="#888" rx="0.4"/>
<rect x="846" y="422.6" width="3" height="3" fill="#888" rx="0.4"/>
<rect x="996" y="422.5" width="3" height="3" fill="#c03030" rx="1.5"/>
<rect x="697.6" y="426.7" width="48" height="48.5" fill="#353535"/>
<rect x="697.6" y="426.7" width="48" height="2.8" fill="#2a2a2a"/>
<rect x="702" y="427.6" width="8" height="1" fill="#888"/>
<rect x="713" y="427.6" width="14" height="1" fill="#bbb"/>
<rect x="699.5" y="430.5" width="22" height="3.2" fill="#202020" rx="0.5"/>
<rect x="737" y="430.5" width="6" height="3.2" fill="#2a2a2a" rx="0.5"/>
<rect x="700.5" y="438" width="14" height="1" fill="#ccc"/>
<rect x="701.5" y="441" width="1.6" height="1.6" fill="#3ad048" rx="0.3"/>
<rect x="705" y="441.1" width="8" height="1" fill="#aaa"/>
<rect x="715.5" y="441" width="1.6" height="1.6" fill="#aaa" rx="0.3"/>
<rect x="719" y="441.1" width="8" height="1" fill="#aaa"/>
<rect x="701.5" y="444.2" width="1.6" height="1.6" fill="#3ad048" rx="0.3"/>
<rect x="705" y="444.3" width="16" height="1" fill="#aaa"/>
<rect x="699.5" y="447.4" width="42" height="3.2" fill="#1c1c1c" rx="0.5"/>
<rect x="701.5" y="448.5" width="14" height="1" fill="#bbb"/>
<rect x="700.5" y="456.6" width="10" height="1" fill="#ccc"/>
<rect x="699.5" y="459.5" width="42" height="3.2" fill="#1c1c1c" rx="0.5"/>
<rect x="701.5" y="460.6" width="5" height="1" fill="#bbb"/>
<rect x="701" y="465.2" width="1.6" height="1.6" fill="#aaa" rx="0.8"/>
<rect x="704" y="465.5" width="4" height="1" fill="#aaa"/>
<rect x="709.5" y="464.6" width="7" height="2.6" fill="#1c1c1c"/>
<rect x="718.5" y="465.5" width="5" height="1" fill="#aaa"/>
<rect x="726" y="464.6" width="7" height="2.6" fill="#1c1c1c"/>
<rect x="700.5" y="473.5" width="6" height="1" fill="#888"/>
<rect x="743.5" y="429" width="1.2" height="16" fill="#555"/>
<rect x="745.6" y="426.7" width="5.5" height="48" fill="#262626"/>
<rect x="747" y="430.5" width="2" height="2" fill="#777" rx="0.4"/>
<rect x="747" y="433.6" width="2" height="2" fill="#777" rx="0.4"/>
<rect x="747" y="436.6" width="2" height="2" fill="#777" rx="0.4"/>
<rect x="751.2" y="426.7" width="250.2" height="3" fill="#262626"/>
<rect x="787" y="427.2" width="2" height="1.4" fill="#999"/>
<rect x="813.5" y="427.2" width="2" height="1.4" fill="#999"/>
<rect x="840" y="427.2" width="2" height="1.4" fill="#999"/>
<rect x="866.5" y="427.2" width="2" height="1.4" fill="#999"/>
<rect x="893" y="427.2" width="2" height="1.4" fill="#999"/>
<rect x="919.5" y="427.2" width="2" height="1.4" fill="#999"/>
<rect x="784" y="426.8" width="1.5" height="2.4" fill="#3a8ad0"/>
<rect x="751.8" y="429.8" width="14.8" height="39.4" fill="#f2f2f2"/>
<rect x="751.8" y="436.2" width="9.5" height="2.4" fill="#1a1a1a"/>
<rect x="751.8" y="442.3" width="9.5" height="2.4" fill="#1a1a1a"/>
<rect x="751.8" y="448.3" width="9.5" height="2.4" fill="#1a1a1a"/>
<rect x="751.8" y="457.1" width="9.5" height="2.4" fill="#1a1a1a"/>
<rect x="751.8" y="463.1" width="9.5" height="2.4" fill="#1a1a1a"/>
<rect x="751.8" y="433.5" width="14.8" height="0.3" fill="#999"/>
<rect x="751.8" y="440" width="14.8" height="0.3" fill="#999"/>
<rect x="751.8" y="446" width="14.8" height="0.3" fill="#999"/>
<rect x="751.8" y="452" width="14.8" height="0.3" fill="#999"/>
<rect x="751.8" y="458" width="14.8" height="0.3" fill="#999"/>
<rect x="751.8" y="464.5" width="14.8" height="0.3" fill="#999"/>
<rect x="766.6" y="429.8" width="14.8" height="39.4" fill="#515151"/>
<rect x="781.1" y="429.1" width="219.7" height="39.6" fill="#868686"/>
<rect x="766.6" y="429.1" width="14.5" height="0.3" fill="#474747"/>
<rect x="781.1" y="429.1" width="219.7" height="0.3" fill="#6e6e6e"/>
<rect x="781.1" y="431.9" width="219.7" height="2.8" fill="#787878"/>
<rect x="766.6" y="431.9" width="14.5" height="0.3" fill="#474747"/>
<rect x="781.1" y="431.9" width="219.7" height="0.3" fill="#6e6e6e"/>
<rect x="766.6" y="434.8" width="14.5" height="0.3" fill="#474747"/>
<rect x="781.1" y="434.8" width="219.7" height="0.3" fill="#6e6e6e"/>
<rect x="781.1" y="437.6" width="219.7" height="2.8" fill="#787878"/>
<rect x="766.6" y="437.6" width="14.5" height="0.3" fill="#474747"/>
<rect x="781.1" y="437.6" width="219.7" height="0.3" fill="#6e6e6e"/>
<rect x="766.6" y="440.4" width="14.5" height="0.3" fill="#474747"/>
<rect x="781.1" y="440.4" width="219.7" height="0.3" fill="#6e6e6e"/>
<rect x="766.6" y="443.2" width="14.5" height="0.3" fill="#474747"/>
<rect x="781.1" y="443.2" width="219.7" height="0.3" fill="#6e6e6e"/>
<rect x="781.1" y="446.1" width="219.7" height="2.8" fill="#787878"/>
<rect x="766.6" y="446.1" width="14.5" height="0.3" fill="#474747"/>
<rect x="781.1" y="446.1" width="219.7" height="0.3" fill="#6e6e6e"/>
<rect x="766.6" y="448.9" width="14.5" height="0.3" fill="#474747"/>
<rect x="781.1" y="448.9" width="219.7" height="0.3" fill="#6e6e6e"/>
<rect x="781.1" y="451.7" width="219.7" height="2.8" fill="#787878"/>
<rect x="766.6" y="451.7" width="14.5" height="0.3" fill="#474747"/>
<rect x="781.1" y="451.7" width="219.7" height="0.3" fill="#6e6e6e"/>
<rect x="766.6" y="454.6" width="14.5" height="0.3" fill="#474747"/>
<rect x="781.1" y="454.6" width="219.7" height="0.3" fill="#6e6e6e"/>
<rect x="781.1" y="457.4" width="219.7" height="2.8" fill="#787878"/>
<rect x="766.6" y="457.4" width="14.5" height="0.3" fill="#474747"/>
<rect x="781.1" y="457.4" width="219.7" height="0.3" fill="#6e6e6e"/>
<rect x="766.6" y="460.2" width="14.5" height="0.3" fill="#474747"/>
<rect x="781.1" y="460.2" width="219.7" height="0.3" fill="#6e6e6e"/>
<rect x="766.6" y="463.1" width="14.5" height="0.3" fill="#474747"/>
<rect x="781.1" y="463.1" width="219.7" height="0.3" fill="#6e6e6e"/>
<rect x="781.1" y="465.9" width="219.7" height="2.8" fill="#787878"/>
<rect x="766.6" y="465.9" width="14.5" height="0.3" fill="#474747"/>
<rect x="781.1" y="465.9" width="219.7" height="0.3" fill="#6e6e6e"/>
<rect x="781.1" y="429.1" width="0.5" height="39.6" fill="#646464"/>
<rect x="788.2" y="429.1" width="0.3" height="39.6" fill="#727272"/>
<rect x="795.4" y="429.1" width="0.3" height="39.6" fill="#727272"/>
<rect x="802.5" y="429.1" width="0.3" height="39.6" fill="#727272"/>
<rect x="809.6" y="429.1" width="0.5" height="39.6" fill="#646464"/>
<rect x="816.7" y="429.1" width="0.3" height="39.6" fill="#727272"/>
<rect x="823.9" y="429.1" width="0.3" height="39.6" fill="#727272"/>
<rect x="831" y="429.1" width="0.3" height="39.6" fill="#727272"/>
<rect x="838.1" y="429.1" width="0.5" height="39.6" fill="#646464"/>
<rect x="845.2" y="429.1" width="0.3" height="39.6" fill="#727272"/>
<rect x="852.4" y="429.1" width="0.3" height="39.6" fill="#727272"/>
<rect x="859.5" y="429.1" width="0.3" height="39.6" fill="#727272"/>
<rect x="866.6" y="429.1" width="0.5" height="39.6" fill="#646464"/>
<rect x="873.7" y="429.1" width="0.3" height="39.6" fill="#727272"/>
<rect x="880.9" y="429.1" width="0.3" height="39.6" fill="#727272"/>
<rect x="888" y="429.1" width="0.3" height="39.6" fill="#727272"/>
<rect x="895.1" y="429.1" width="0.5" height="39.6" fill="#646464"/>
<rect x="902.2" y="429.1" width="0.3" height="39.6" fill="#727272"/>
<rect x="909.4" y="429.1" width="0.3" height="39.6" fill="#727272"/>
<rect x="916.5" y="429.1" width="0.3" height="39.6" fill="#727272"/>
<rect x="923.6" y="429.1" width="0.5" height="39.6" fill="#646464"/>
<rect x="930.7" y="429.1" width="0.3" height="39.6" fill="#727272"/>
<rect x="937.9" y="429.1" width="0.3" height="39.6" fill="#727272"/>
<rect x="945" y="429.1" width="0.3" height="39.6" fill="#727272"/>
<rect x="952.1" y="429.1" width="0.5" height="39.6" fill="#646464"/>
<rect x="959.2" y="429.1" width="0.3" height="39.6" fill="#727272"/>
<rect x="966.4" y="429.1" width="0.3" height="39.6" fill="#727272"/>
<rect x="973.5" y="429.1" width="0.3" height="39.6" fill="#727272"/>
<rect x="980.6" y="429.1" width="0.5" height="39.6" fill="#646464"/>
<rect x="987.7" y="429.1" width="0.3" height="39.6" fill="#727272"/>
<rect x="994.9" y="429.1" width="0.3" height="39.6" fill="#727272"/>
<rect x="1002" y="429.1" width="0.3" height="39.6" fill="#727272"/>
<rect x="816.3" y="429.1" width="0.6" height="39.6" fill="#a8a8a8"/>
<rect x="1000.6" y="429.1" width="0.6" height="39.6" fill="#d08a30"/>
<rect x="866.2" y="430.2" width="28.8" height="2.8" fill="#c8f2f2" rx="0.4"/>
<rect x="867.2" y="431.2" width="4" height="0.8" fill="#444"/>
<rect x="980" y="451.2" width="20.8" height="2.8" fill="#c8f2f2" rx="0.4"/>
<rect x="981" y="452.2" width="4" height="0.8" fill="#444"/>
<rect x="838.1" y="457.2" width="28.1" height="2.8" fill="#c8f2f2" rx="0.4"/>
<rect x="839.1" y="458.2" width="4" height="0.8" fill="#444"/>
<rect x="923" y="460.2" width="29" height="2.8" fill="#c8f2f2" rx="0.4"/>
<rect x="924" y="461.2" width="4" height="0.8" fill="#444"/>
<rect x="781.3" y="466.1" width="111.5" height="2.8" fill="#c8f2f2" rx="0.4"/>
<rect x="782.3" y="467.1" width="4" height="0.8" fill="#444"/>
<rect x="895" y="466.1" width="86.3" height="2.8" fill="#c8f2f2" rx="0.4"/>
<rect x="896" y="467.1" width="4" height="0.8" fill="#444"/>
<rect x="809.4" y="460.2" width="28.3" height="2.8" fill="#c8f2f2" rx="0.4"/>
<rect x="810.4" y="461.2" width="4" height="0.8" fill="#444"/>
<rect x="751.2" y="469.2" width="250.2" height="4.8" fill="#3c3c3c"/>
<rect x="766.6" y="470.3" width="1" height="2.2" fill="#bbb"/>
<rect x="777.3" y="470.3" width="1" height="2.2" fill="#bbb"/>
<rect x="788" y="470.3" width="1" height="2.2" fill="#bbb"/>
<rect x="798.7" y="470.3" width="1" height="2.2" fill="#bbb"/>
<rect x="809.4" y="470.3" width="1" height="2.2" fill="#bbb"/>
<rect x="820.1" y="470.3" width="1" height="2.2" fill="#bbb"/>
<rect x="830.8" y="470.3" width="1" height="2.2" fill="#bbb"/>
<rect x="841.5" y="470.3" width="1" height="2.2" fill="#bbb"/>
<rect x="852.2" y="470.3" width="1" height="2.2" fill="#bbb"/>
<rect x="862.9" y="470.3" width="1" height="2.2" fill="#bbb"/>
<rect x="873.6" y="470.3" width="1" height="2.2" fill="#bbb"/>
<rect x="884.3" y="470.3" width="1" height="2.2" fill="#bbb"/>
<rect x="895" y="470.3" width="1" height="2.2" fill="#bbb"/>
<rect x="905.7" y="470.3" width="1" height="2.2" fill="#bbb"/>
<rect x="916.4" y="470.3" width="1" height="2.2" fill="#bbb"/>
<rect x="927.1" y="470.3" width="1" height="2.2" fill="#bbb"/>
<rect x="937.8" y="470.3" width="1" height="2.2" fill="#bbb"/>
<rect x="948.5" y="470.3" width="1" height="2.2" fill="#bbb"/>
<rect x="959.2" y="470.3" width="1" height="2.2" fill="#bbb"/>
<rect x="969.9" y="470.3" width="1" height="2.2" fill="#bbb"/>
<rect x="980.6" y="470.3" width="1" height="2.2" fill="#bbb"/>
<rect x="991.3" y="470.3" width="1" height="2.2" fill="#bbb"/>
<rect x="753" y="470" width="12" height="3" fill="#555"/>
<rect x="1001.4" y="426.7" width="2.6" height="48" fill="#1c1c1c"/>
<rect x="697.3" y="474.8" width="306.7" height="4" fill="#161616"/>
<rect x="702" y="476.4" width="10" height="0.9" fill="#8a8a8a"/>
<rect x="716" y="476.4" width="12" height="0.9" fill="#8a8a8a"/>
<rect x="732" y="476.4" width="20" height="0.9" fill="#8a8a8a"/>
<rect x="756" y="476.4" width="10" height="0.9" fill="#8a8a8a"/>
<rect x="771" y="476.4" width="17" height="0.9" fill="#8a8a8a"/>
<rect x="792" y="476.4" width="30" height="0.9" fill="#8a8a8a"/>
<rect x="826" y="476.4" width="9" height="0.9" fill="#8a8a8a"/>
<rect x="840" y="476.4" width="10" height="0.9" fill="#8a8a8a"/>
</svg></body></html>
